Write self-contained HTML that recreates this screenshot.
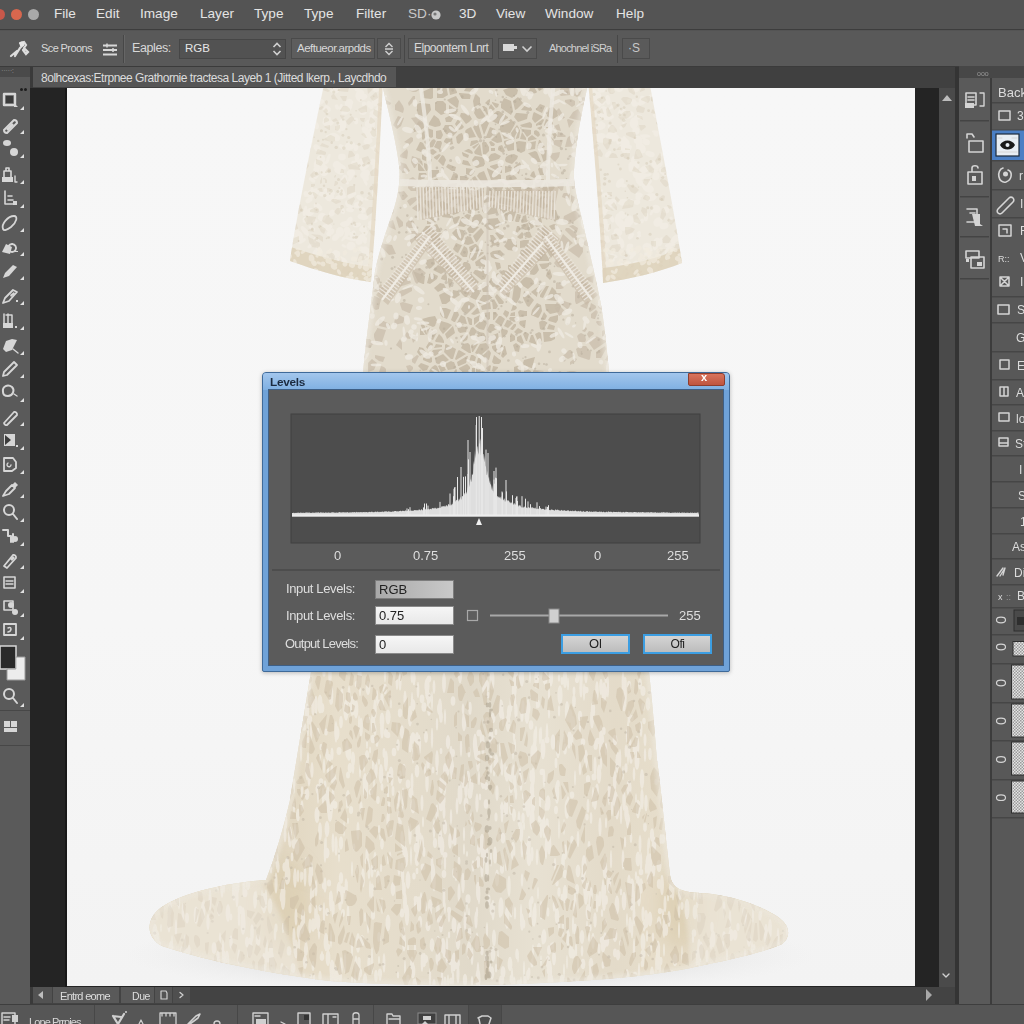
<!DOCTYPE html>
<html><head><meta charset="utf-8">
<style>
*{margin:0;padding:0;box-sizing:border-box}
html,body{width:1024px;height:1024px;overflow:hidden;background:#545454;font-family:"Liberation Sans",sans-serif}
.a{position:absolute}
.t{position:absolute;white-space:nowrap;color:#e2e2e2}
#menu{left:0;top:0;width:1024px;height:30px;background:#545454;border-bottom:1px solid #3d3d3d}
#menu .m{position:absolute;top:6px;font-size:13.6px;color:#e4e4e4}
.dot{position:absolute;top:9px;width:11px;height:11px;border-radius:50%}
#opts{left:0;top:31px;width:1024px;height:36px;background:#595959;border-bottom:1px solid #3b3b3b}
.box{position:absolute;border:1px solid #474747;background:#555}
#tool{left:0;top:67px;width:30px;height:937px;background:#5a5a5a}
#doc{left:67px;top:88px;width:848px;height:898px;background:linear-gradient(#f7f7f7,#f6f6f6 60%,#f3f3f3)}
svg{position:absolute;left:0;top:0}
#dlg{left:262px;top:372px;width:468px;height:300px;background:#6fa2d8;border:1px solid #3f6a99;border-radius:4px 4px 2px 2px;box-shadow:0 1px 4px rgba(0,0,0,.25)}
#dlgtitle{left:0;top:0;width:466px;height:17px;background:linear-gradient(#a3c6ec,#7fb0e2);border-radius:3px 3px 0 0}
#dlgc{left:5px;top:16px;width:456px;height:277px;background:#5b5b5b;border:1px solid #3e5f85}
.lbl{position:absolute;font-size:13px;color:#dedede;white-space:nowrap}
.inp{position:absolute;width:79px;height:19px;background:linear-gradient(#f6f6f6,#e8e8e8);border:1px solid #8a8a8a;font-size:13px;color:#222;padding:1px 0 0 3px;line-height:15px}
.btn{position:absolute;width:69px;height:20px;border:2px solid #3c9ee2;background:linear-gradient(#d4d4d4,#bcbcbc);font-size:13px;color:#222;text-align:center;line-height:16px}
</style></head><body>
<!-- menu bar -->
<div id="menu" class="a">
  <div class="dot" style="left:-6px;background:#c8584a"></div>
  <div class="dot" style="left:11px;background:#d8674e"></div>
  <div class="dot" style="left:28px;background:#a9a9a9"></div>
  <div class="m" style="left:54px">File</div>
  <div class="m" style="left:96px">Edit</div>
  <div class="m" style="left:140px">Image</div>
  <div class="m" style="left:200px">Layer</div>
  <div class="m" style="left:254px">Type</div>
  <div class="m" style="left:304px">Type</div>
  <div class="m" style="left:356px">Filter</div>
  <div class="m" style="left:408px;color:#c8c8c8">SD·</div><svg width="12" height="12" style="left:430px;top:9px" viewBox="0 0 12 12"><circle cx="6" cy="6" r="4.6" fill="#c8c8c8"/><circle cx="5" cy="5" r="1.6" fill="#777"/></svg>
  <div class="m" style="left:459px">3D</div>
  <div class="m" style="left:496px">View</div>
  <div class="m" style="left:545px">Window</div>
  <div class="m" style="left:616px">Help</div>
</div>
<!-- options bar -->
<div id="opts" class="a">
  <svg width="24" height="20" style="left:9px;top:8px" viewBox="0 0 24 20"><path d="M2 17 L8 12 M6 17 L11 9 L14 6 M11 4 L15 3 L17 6 L15 9 L19 13 L17 15 L14 11" stroke="#dcdcdc" stroke-width="2.2" fill="none" stroke-linecap="round"/><circle cx="13" cy="5" r="2.5" fill="#e6e6e6"/></svg>
  <div class="t" style="left:41px;top:11px;font-size:11px;color:#d8d8d8;letter-spacing:-0.6px">Sce Proons</div>
  <svg width="16" height="14" style="left:102px;top:12px" viewBox="0 0 16 14"><path d="M1 2.5H15M1 7H15M1 11.5H15" stroke="#d8d8d8" stroke-width="1.8"/><path d="M5 0.5V4.5M11 5V9" stroke="#d8d8d8" stroke-width="1.5"/></svg>
  <div class="a" style="left:123px;top:4px;width:1px;height:28px;background:#474747"></div>
  <div class="a" style="left:124px;top:4px;width:1px;height:28px;background:#666"></div>
  <div class="t" style="left:132px;top:10px;font-size:12.5px;color:#d8d8d8;letter-spacing:-0.4px">Eaples:</div>
  <div class="box" style="left:179px;top:8px;width:107px;height:20px;background:#525252;border-color:#464646"></div>
  <div class="t" style="left:185px;top:11px;font-size:11.5px;color:#e6e6e6">RGB</div>
  <svg width="10" height="14" style="left:272px;top:11px" viewBox="0 0 10 14"><path d="M1.5 5L5 1.5L8.5 5M1.5 9L5 12.5L8.5 9" stroke="#d0d0d0" stroke-width="1.6" fill="none"/></svg>
  <div class="box" style="left:291px;top:7px;width:84px;height:21px;background:#5d5d5d;border-color:#4a4a4a"></div>
  <div class="t" style="left:297px;top:11px;font-size:11.5px;color:#d8d8d8;letter-spacing:-0.5px">Aeftueor.arpdds</div>
  <div class="box" style="left:377px;top:7px;width:24px;height:21px;background:#5a5a5a;border-color:#4a4a4a"></div>
  <svg width="10" height="14" style="left:384px;top:11px" viewBox="0 0 10 14"><path d="M1.5 5L5 1.5L8.5 5M1 7H9M1.5 9L5 12.5L8.5 9" stroke="#d0d0d0" stroke-width="1.4" fill="none"/></svg>
  <div class="a" style="left:404px;top:4px;width:1px;height:28px;background:#474747"></div>
  <div class="box" style="left:408px;top:7px;width:85px;height:21px;background:#5d5d5d;border-color:#4a4a4a"></div>
  <div class="t" style="left:414px;top:10px;font-size:12px;color:#d8d8d8;letter-spacing:-0.5px">Elpoontem Lnrt</div>
  <div class="box" style="left:498px;top:7px;width:39px;height:21px;background:#5a5a5a;border-color:#4a4a4a"></div>
  <div class="a" style="left:503px;top:13px;width:11px;height:7px;background:#d8d8d8"></div>
  <div class="a" style="left:514px;top:15px;width:3px;height:3px;background:#d8d8d8"></div>
  <svg width="12" height="10" style="left:521px;top:13px" viewBox="0 0 12 10"><path d="M1.5 2.5L6 7L10.5 2.5" stroke="#d0d0d0" stroke-width="1.6" fill="none"/></svg>
  <div class="t" style="left:549px;top:11px;font-size:11px;color:#d0d0d0;letter-spacing:-0.8px">Ahochnel iSRa</div>
  <div class="a" style="left:617px;top:4px;width:1px;height:28px;background:#474747"></div>
  <div class="box" style="left:622px;top:7px;width:28px;height:21px;background:#5a5a5a;border-color:#4a4a4a"></div>
  <div class="t" style="left:628px;top:10px;font-size:12px;color:#c8c8c8">·S</div>
</div>
<!-- main bg -->
<div class="a" style="left:30px;top:67px;width:925px;height:937px;background:#3a3a3a"></div>
<div class="a" style="left:33px;top:67px;width:922px;height:21px;background:#404040"></div>
<div class="a" style="left:33px;top:67px;width:363px;height:20px;background:#565656"></div>
<div class="t" style="left:41px;top:71px;font-size:12px;color:#dcdcdc;letter-spacing:-0.48px">8olhcexas:Etrpnee Grathornie tractesa Layeb 1 (Jitted lkerp., Laycdhdo</div>
<div class="a" style="left:30px;top:88px;width:925px;height:899px;background:#242424"></div><div class="a" style="left:65px;top:88px;width:2px;height:899px;background:#181818"></div>
<div class="a" style="left:939px;top:88px;width:16px;height:899px;background:#4a4a4a"></div>
<div id="tool" class="a"></div>
<div class="a" style="left:0;top:67px;width:30px;height:10px;background:#4a4a4a"></div>
<div class="t" style="left:1px;top:66px;font-size:8px;color:#8a8a8a;letter-spacing:-0.5px">·····:</div>
<svg width="30" height="760" viewBox="0 0 30 760" style="left:0;top:0"><g transform="translate(0 100)"><path d="M4 -6H15V5H4Z" stroke="#d6d6d6" stroke-width="2.4" fill="none" stroke-linecap="round" stroke-linejoin="round"/><path d="M6 -4H13V3H6Z" fill="#3a3a3a"/><path d="M14 3 L18 7 L14 7Z" fill="#d6d6d6"/></g><path d="M20 110 L24 106 L24 110Z" fill="#e0e0e0"/><g transform="translate(0 124)"><path d="M4 6 L14 -4 A3 3 0 0 1 17 -1 L7 9 A3 3 0 0 1 4 6Z" stroke="#d6d6d6" stroke-width="2" fill="none" stroke-linecap="round" stroke-linejoin="round"/><path d="M6 5 L12 -1 L14 1 L8 7Z" fill="#d6d6d6"/></g><path d="M20 134 L24 130 L24 134Z" fill="#e0e0e0"/><g transform="translate(0 148)"><path d="M3 -5 a4 3 0 1 0 8 0 a4 3 0 1 0 -8 0Z" fill="#d6d6d6"/><path d="M10 4 a4 4 0 1 0 8 0 a4 4 0 1 0 -8 0Z" fill="#d6d6d6"/></g><path d="M20 158 L24 154 L24 158Z" fill="#e0e0e0"/><g transform="translate(0 174)"><path d="M2 3H13V8H2Z" fill="#d6d6d6"/><path d="M4 3V-3H11V3M6 -3V-6H9V-3" stroke="#d6d6d6" stroke-width="1.6" fill="none" stroke-linecap="round" stroke-linejoin="round"/><path d="M15 2V8H17" stroke="#d6d6d6" stroke-width="1.4" fill="none" stroke-linecap="round" stroke-linejoin="round"/></g><path d="M20 184 L24 180 L24 184Z" fill="#e0e0e0"/><g transform="translate(0 198)"><path d="M5 -7V6H15M8 -2H12M8 2H13" stroke="#d6d6d6" stroke-width="1.6" fill="none" stroke-linecap="round" stroke-linejoin="round"/><path d="M13 3H17V7H13Z" fill="#d6d6d6"/></g><path d="M20 208 L24 204 L24 208Z" fill="#e0e0e0"/><g transform="translate(0 222)"><path d="M3 7 C1 2 8 -6 14 -6 C18 -6 17 0 11 5 C7 8 4 9 3 7Z" stroke="#d6d6d6" stroke-width="1.8" fill="none" stroke-linecap="round" stroke-linejoin="round"/></g><path d="M20 232 L24 228 L24 232Z" fill="#e0e0e0"/><g transform="translate(0 246)"><path d="M2 6 L6 -2 L12 1 L10 8 Z" fill="#d6d6d6"/><path d="M12 -2 a4 4 0 1 0 0.1 0" stroke="#d6d6d6" stroke-width="1.8" fill="none" stroke-linecap="round" stroke-linejoin="round"/><path d="M15 5H18V6H15Z" fill="#d6d6d6"/></g><path d="M20 256 L24 252 L24 256Z" fill="#e0e0e0"/><g transform="translate(0 270)"><path d="M3 8 L5 3 L13 -5 L17 -3 L9 6Z" fill="#d6d6d6"/></g><path d="M20 280 L24 276 L24 280Z" fill="#e0e0e0"/><g transform="translate(0 295)"><path d="M3 8 L5 3 L13 -5 L17 -3 L9 6Z" stroke="#d6d6d6" stroke-width="1.8" fill="none" stroke-linecap="round" stroke-linejoin="round"/><path d="M10 0 L14 -3 L15 -1 L11 2Z" fill="#d6d6d6"/><path d="M16 5H18V7H16Z" fill="#d6d6d6"/></g><path d="M20 305 L24 301 L24 305Z" fill="#e0e0e0"/><g transform="translate(0 320)"><path d="M3 3H13V8H3Z" fill="#d6d6d6"/><path d="M4 3V-6M8 3V-6M12 3V-5M6 -5H12" stroke="#d6d6d6" stroke-width="1.5" fill="none" stroke-linecap="round" stroke-linejoin="round"/><path d="M15 6H17V8H15Z" fill="#d6d6d6"/></g><path d="M20 330 L24 326 L24 330Z" fill="#e0e0e0"/><g transform="translate(0 345)"><path d="M3 4 L6 -4 L12 -6 L17 -5 L12 5 L6 7Z" fill="#d6d6d6"/><path d="M13 4 L18 8" stroke="#d6d6d6" stroke-width="1.4" fill="none" stroke-linecap="round" stroke-linejoin="round"/></g><path d="M20 355 L24 351 L24 355Z" fill="#e0e0e0"/><g transform="translate(0 368)"><path d="M3 8 L4 4 L14 -6 L17 -3 L7 7Z" stroke="#d6d6d6" stroke-width="1.8" fill="none" stroke-linecap="round" stroke-linejoin="round"/></g><path d="M20 378 L24 374 L24 378Z" fill="#e0e0e0"/><g transform="translate(0 392)"><path d="M3 0 C2 -6 8 -8 12 -5 C15 -2 13 4 8 4 C5 4 3 3 3 0Z" stroke="#d6d6d6" stroke-width="2" fill="none" stroke-linecap="round" stroke-linejoin="round"/><path d="M14 2 L17 4" stroke="#d6d6d6" stroke-width="1.4" fill="none" stroke-linecap="round" stroke-linejoin="round"/></g><path d="M20 402 L24 398 L24 402Z" fill="#e0e0e0"/><g transform="translate(0 416)"><path d="M4 7 L14 -4 A2.5 2.5 0 0 1 17 -1 L7 9 A2.5 2.5 0 0 1 4 7Z" stroke="#d6d6d6" stroke-width="1.8" fill="none" stroke-linecap="round" stroke-linejoin="round"/></g><path d="M20 426 L24 422 L24 426Z" fill="#e0e0e0"/><g transform="translate(0 440)"><path d="M4 -6H15V6H4Z" fill="#d6d6d6"/><path d="M5 -5 L11 0 L5 5Z" fill="#3c3c3c"/><path d="M16 5H18V7H16Z" fill="#d6d6d6"/></g><path d="M20 450 L24 446 L24 450Z" fill="#e0e0e0"/><g transform="translate(0 464)"><path d="M4 -6H13 L16 -2 V4 L12 7H4Z" stroke="#d6d6d6" stroke-width="1.8" fill="none" stroke-linecap="round" stroke-linejoin="round"/><path d="M8 -1 a2 2 0 1 0 3 2" stroke="#d6d6d6" stroke-width="1.4" fill="none" stroke-linecap="round" stroke-linejoin="round"/></g><path d="M20 474 L24 470 L24 474Z" fill="#e0e0e0"/><g transform="translate(0 488)"><path d="M3 8 L6 3 L12 -3 L15 0 L9 6Z" stroke="#d6d6d6" stroke-width="1.8" fill="none" stroke-linecap="round" stroke-linejoin="round"/><path d="M12 -3 L15 -6 L18 -3 L15 0Z" fill="#d6d6d6"/></g><path d="M20 498 L24 494 L24 498Z" fill="#e0e0e0"/><g transform="translate(0 512)"><path d="M4 -2 a5 5 0 1 0 10 0 a5 5 0 1 0 -10 0M13 2 L17 7" stroke="#d6d6d6" stroke-width="2" fill="none" stroke-linecap="round" stroke-linejoin="round"/></g><path d="M20 522 L24 518 L24 522Z" fill="#e0e0e0"/><g transform="translate(0 536)"><path d="M3 -6H8V0H11V6M13 -2V6" stroke="#d6d6d6" stroke-width="2" fill="none" stroke-linecap="round" stroke-linejoin="round"/><path d="M12 3 a3 3 0 1 0 6 0 a3 3 0 1 0 -6 0Z" fill="#d6d6d6"/></g><path d="M20 546 L24 542 L24 546Z" fill="#e0e0e0"/><g transform="translate(0 559)"><path d="M4 7 L13 -4 A2.5 2.5 0 0 1 16 -1 L7 9Z" stroke="#d6d6d6" stroke-width="1.8" fill="none" stroke-linecap="round" stroke-linejoin="round"/><path d="M10 0 L13 -3 L15 -1 L12 2Z" fill="#d6d6d6"/></g><path d="M20 569 L24 565 L24 569Z" fill="#e0e0e0"/><g transform="translate(0 583)"><path d="M4 -6H15V5H4Z" stroke="#d6d6d6" stroke-width="1.6" fill="none" stroke-linecap="round" stroke-linejoin="round"/><path d="M6 -2H13M6 1H13" stroke="#d6d6d6" stroke-width="1.4" fill="none" stroke-linecap="round" stroke-linejoin="round"/></g><path d="M20 593 L24 589 L24 593Z" fill="#e0e0e0"/><g transform="translate(0 607)"><path d="M4 -6H13V3H4Z" stroke="#d6d6d6" stroke-width="1.6" fill="none" stroke-linecap="round" stroke-linejoin="round"/><path d="M8 -2 a3 3 0 1 0 6 0 a3 3 0 1 0 -6 0Z" fill="#d6d6d6"/><path d="M12 5 a3 3 0 1 0 6 0 a3 3 0 1 0 -6 0Z" fill="#d6d6d6"/></g><path d="M20 617 L24 613 L24 617Z" fill="#e0e0e0"/><g transform="translate(0 630)"><path d="M4 -6H16V5H4Z" stroke="#d6d6d6" stroke-width="1.8" fill="none" stroke-linecap="round" stroke-linejoin="round"/><path d="M8 -2 C12 -4 12 1 8 2" stroke="#d6d6d6" stroke-width="1.5" fill="none" stroke-linecap="round" stroke-linejoin="round"/></g><path d="M20 640 L24 636 L24 640Z" fill="#e0e0e0"/><g transform="translate(0 697)"><path d="M4 -3 a5 5 0 1 0 10 0 a5 5 0 1 0 -10 0M13 1 L17 6" stroke="#d6d6d6" stroke-width="2" fill="none" stroke-linecap="round" stroke-linejoin="round"/></g><path d="M20 707 L24 703 L24 707Z" fill="#e0e0e0"/><g transform="translate(0 727)"><path d="M4 -6H10V0H4Z" fill="#d6d6d6"/><path d="M11 -6H17V0H11Z" fill="#d6d6d6"/><path d="M4 1H17V5H4Z" fill="#d6d6d6"/><path d="M6 -4H8" stroke="#d6d6d6" stroke-width="1" fill="none" stroke-linecap="round" stroke-linejoin="round"/></g><rect x="0" y="646" width="16" height="23" fill="#2a2a2a" stroke="#d8d8d8" stroke-width="1.5"/><path d="M7 669 H15.8 V657 H25 V680 H7Z" fill="#ececec" stroke="#9a9a9a" stroke-width="1"/><rect x="0" y="710" width="30" height="1" fill="#474747"/><rect x="0" y="745" width="30" height="1" fill="#474747"/><path d="M20 89.5 a1.5 1.5 0 1 0 3 0 a1.5 1.5 0 1 0 -3 0M24 89.5 a1.5 1.5 0 1 0 3 0 a1.5 1.5 0 1 0 -3 0" fill="#1e1e1e"/></svg>
<div id="doc" class="a"></div>
<!-- dress -->
<svg width="1024" height="1024" viewBox="0 0 1024 1024"><defs><clipPath id="docclip"><rect x="67" y="88" width="848" height="898"/></clipPath><clipPath id="bodyclip"><path d="M381 80 C388 110 396 140 399 165 C401 180 398 200 390 220 C384 238 378 255 375 272 C371 305 366 340 363 372 L330 560 L311 672 C303 720 295 770 290 800 C282 835 272 865 266 880 C235 882 190 890 165 905 C146 916 144 936 162 946 C195 957 255 972 330 981 C400 986 470 986 520 984 C590 981 640 977 680 970 C730 960 765 952 782 944 C792 936 790 924 775 915 C750 900 720 894 700 893 C682 892 672 889 670 875 C664 820 660 780 657 760 C654 720 651 690 649 672 L625 500 L609 372 C606 340 603 312 599 295 C595 275 589 250 581 215 C576 195 573 180 574 170 C576 140 582 110 589 80 Z"/></clipPath><clipPath id="sleeveclip"><path d="M325 80 L383 80 C380 150 376 220 371 282 C345 279 315 270 290 261 C296 220 308 160 325 80 Z"/><path d="M588 80 L649 80 C662 150 674 210 682 263 C660 272 630 279 603 283 C600 220 594 150 588 80 Z"/></clipPath><linearGradient id="folds" x1="0" x2="1" y1="0" y2="0"><stop offset="0" stop-color="#ddd0b4"/><stop offset="0.12" stop-color="#e6dcc6"/><stop offset="0.2" stop-color="#dfd3bb"/><stop offset="0.3" stop-color="#e8dfcc"/><stop offset="0.42" stop-color="#e4dccb"/><stop offset="0.5" stop-color="#dfd8c9"/><stop offset="0.6" stop-color="#e8e2d4"/><stop offset="0.72" stop-color="#e3dac8"/><stop offset="0.82" stop-color="#e8dfcb"/><stop offset="0.92" stop-color="#e0d4bc"/><stop offset="1" stop-color="#dacdb0"/></linearGradient><filter id="blur2" x="-10%" y="-10%" width="120%" height="120%"><feGaussianBlur stdDeviation="2"/></filter><filter id="blur8" x="-50%" y="-50%" width="200%" height="200%"><feGaussianBlur stdDeviation="9"/></filter><radialGradient id="floor" cx="0.5" cy="0.5" r="0.5"><stop offset="0.6" stop-color="#d8d8d8" stop-opacity="0.5"/><stop offset="1" stop-color="#e8e8e8" stop-opacity="0"/></radialGradient></defs><g clip-path="url(#docclip)"><ellipse cx="470" cy="955" rx="345" ry="40" fill="url(#floor)"/><path d="M325 80 L383 80 C380 150 376 220 371 282 C345 279 315 270 290 261 C296 220 308 160 325 80 Z" fill="#ede8dd"/><path d="M588 80 L649 80 C662 150 674 210 682 263 C660 272 630 279 603 283 C600 220 594 150 588 80 Z" fill="#ede8dd"/><g clip-path="url(#sleeveclip)"><g fill="#f4f0e8" opacity="0.5"><ellipse cx="330" cy="197" rx="4.3" ry="3.9" transform="rotate(130 330 197)"/><ellipse cx="371" cy="123" rx="3.9" ry="3.9" transform="rotate(157 371 123)"/><ellipse cx="364" cy="104" rx="2.4" ry="2.4" transform="rotate(177 364 104)"/><ellipse cx="348" cy="204" rx="2.7" ry="3.8" transform="rotate(157 348 204)"/><ellipse cx="350" cy="210" rx="4" ry="2.3" transform="rotate(9 350 210)"/><ellipse cx="304" cy="133" rx="1.6" ry="3.9" transform="rotate(112 304 133)"/><ellipse cx="344" cy="124" rx="2.2" ry="3.2" transform="rotate(1 344 124)"/><ellipse cx="351" cy="176" rx="2.3" ry="6" transform="rotate(21 351 176)"/><ellipse cx="356" cy="148" rx="2.2" ry="3.2" transform="rotate(17 356 148)"/><ellipse cx="341" cy="107" rx="1.8" ry="3.2" transform="rotate(17 341 107)"/><ellipse cx="381" cy="254" rx="1.5" ry="2.8" transform="rotate(13 381 254)"/><ellipse cx="332" cy="281" rx="2.7" ry="2.3" transform="rotate(161 332 281)"/><ellipse cx="305" cy="220" rx="2.5" ry="3.2" transform="rotate(3 305 220)"/><ellipse cx="381" cy="237" rx="1.9" ry="3" transform="rotate(25 381 237)"/><ellipse cx="286" cy="178" rx="3" ry="4.7" transform="rotate(48 286 178)"/><ellipse cx="330" cy="123" rx="3.7" ry="2.5" transform="rotate(164 330 123)"/><ellipse cx="323" cy="164" rx="4.5" ry="2" transform="rotate(151 323 164)"/><ellipse cx="315" cy="262" rx="2.1" ry="3.6" transform="rotate(154 315 262)"/><ellipse cx="349" cy="105" rx="4.5" ry="2.9" transform="rotate(66 349 105)"/><ellipse cx="286" cy="207" rx="4" ry="3.5" transform="rotate(19 286 207)"/><ellipse cx="294" cy="202" rx="2.2" ry="4.4" transform="rotate(95 294 202)"/><ellipse cx="347" cy="110" rx="3.3" ry="5.3" transform="rotate(34 347 110)"/><ellipse cx="372" cy="122" rx="2" ry="5.6" transform="rotate(156 372 122)"/><ellipse cx="310" cy="123" rx="3.7" ry="5.8" transform="rotate(50 310 123)"/><ellipse cx="354" cy="163" rx="2.9" ry="2.3" transform="rotate(12 354 163)"/><ellipse cx="295" cy="93" rx="4.4" ry="3" transform="rotate(180 295 93)"/><ellipse cx="324" cy="169" rx="4.2" ry="4" transform="rotate(133 324 169)"/><ellipse cx="303" cy="229" rx="1.7" ry="2.9" transform="rotate(143 303 229)"/><ellipse cx="350" cy="208" rx="1.7" ry="2.8" transform="rotate(52 350 208)"/><ellipse cx="360" cy="99" rx="2.7" ry="3" transform="rotate(11 360 99)"/><ellipse cx="303" cy="159" rx="3.2" ry="2.5" transform="rotate(92 303 159)"/><ellipse cx="299" cy="175" rx="2.5" ry="4.9" transform="rotate(133 299 175)"/><ellipse cx="343" cy="113" rx="1.6" ry="2.1" transform="rotate(91 343 113)"/><ellipse cx="355" cy="278" rx="1.6" ry="4.5" transform="rotate(123 355 278)"/><ellipse cx="292" cy="147" rx="1.9" ry="2.3" transform="rotate(115 292 147)"/><ellipse cx="340" cy="232" rx="4.2" ry="4.9" transform="rotate(180 340 232)"/><ellipse cx="298" cy="278" rx="2.5" ry="2.3" transform="rotate(121 298 278)"/><ellipse cx="375" cy="259" rx="2.8" ry="5.2" transform="rotate(127 375 259)"/><ellipse cx="342" cy="210" rx="2.6" ry="4.3" transform="rotate(155 342 210)"/><ellipse cx="292" cy="103" rx="1.8" ry="3" transform="rotate(106 292 103)"/><ellipse cx="358" cy="163" rx="3.7" ry="4.3" transform="rotate(112 358 163)"/><ellipse cx="331" cy="193" rx="3.1" ry="4.1" transform="rotate(79 331 193)"/><ellipse cx="345" cy="181" rx="2.2" ry="4.8" transform="rotate(127 345 181)"/><ellipse cx="363" cy="217" rx="3" ry="5.6" transform="rotate(94 363 217)"/><ellipse cx="315" cy="221" rx="2.1" ry="2.7" transform="rotate(87 315 221)"/><ellipse cx="351" cy="173" rx="4.2" ry="3.3" transform="rotate(170 351 173)"/><ellipse cx="310" cy="212" rx="3.9" ry="5" transform="rotate(51 310 212)"/><ellipse cx="373" cy="162" rx="3.2" ry="3.3" transform="rotate(34 373 162)"/><ellipse cx="298" cy="155" rx="4.2" ry="2.2" transform="rotate(16 298 155)"/><ellipse cx="380" cy="140" rx="2" ry="3.8" transform="rotate(70 380 140)"/><ellipse cx="378" cy="251" rx="2.6" ry="4.1" transform="rotate(172 378 251)"/><ellipse cx="317" cy="253" rx="4.4" ry="3.8" transform="rotate(19 317 253)"/><ellipse cx="368" cy="141" rx="3.3" ry="4.7" transform="rotate(71 368 141)"/><ellipse cx="342" cy="147" rx="3.9" ry="2.1" transform="rotate(34 342 147)"/><ellipse cx="326" cy="123" rx="3.8" ry="3.1" transform="rotate(36 326 123)"/><ellipse cx="365" cy="282" rx="1.8" ry="2.4" transform="rotate(137 365 282)"/><ellipse cx="351" cy="246" rx="4.4" ry="4.7" transform="rotate(51 351 246)"/><ellipse cx="367" cy="136" rx="3.6" ry="5" transform="rotate(136 367 136)"/><ellipse cx="356" cy="121" rx="2.3" ry="3.4" transform="rotate(178 356 121)"/><ellipse cx="380" cy="185" rx="4.5" ry="2.6" transform="rotate(179 380 185)"/><ellipse cx="376" cy="102" rx="4.3" ry="4.9" transform="rotate(33 376 102)"/><ellipse cx="330" cy="124" rx="4.2" ry="2" transform="rotate(140 330 124)"/><ellipse cx="342" cy="261" rx="3.9" ry="5.8" transform="rotate(118 342 261)"/><ellipse cx="318" cy="281" rx="1.8" ry="5.5" transform="rotate(164 318 281)"/><ellipse cx="377" cy="110" rx="2.2" ry="3.6" transform="rotate(22 377 110)"/><ellipse cx="383" cy="192" rx="3.9" ry="3.3" transform="rotate(4 383 192)"/><ellipse cx="320" cy="102" rx="2.8" ry="4.2" transform="rotate(70 320 102)"/><ellipse cx="334" cy="91" rx="3.9" ry="2.3" transform="rotate(8 334 91)"/><ellipse cx="302" cy="152" rx="3.9" ry="2.6" transform="rotate(38 302 152)"/><ellipse cx="385" cy="265" rx="3.1" ry="4.7" transform="rotate(112 385 265)"/><ellipse cx="380" cy="184" rx="4.3" ry="2.3" transform="rotate(56 380 184)"/><ellipse cx="329" cy="197" rx="4" ry="4.2" transform="rotate(42 329 197)"/><ellipse cx="337" cy="254" rx="3.2" ry="3.2" transform="rotate(97 337 254)"/><ellipse cx="380" cy="259" rx="3.3" ry="3.2" transform="rotate(36 380 259)"/><ellipse cx="382" cy="190" rx="3.2" ry="2.8" transform="rotate(137 382 190)"/><ellipse cx="296" cy="86" rx="2.6" ry="4.2" transform="rotate(11 296 86)"/><ellipse cx="337" cy="165" rx="3.9" ry="4.3" transform="rotate(125 337 165)"/><ellipse cx="294" cy="118" rx="4.3" ry="3.8" transform="rotate(103 294 118)"/><ellipse cx="312" cy="180" rx="1.9" ry="3.7" transform="rotate(121 312 180)"/><ellipse cx="337" cy="107" rx="2.8" ry="2.1" transform="rotate(66 337 107)"/><ellipse cx="298" cy="241" rx="1.6" ry="2.8" transform="rotate(58 298 241)"/><ellipse cx="286" cy="142" rx="3.7" ry="3" transform="rotate(127 286 142)"/><ellipse cx="295" cy="231" rx="1.9" ry="4" transform="rotate(64 295 231)"/><ellipse cx="357" cy="225" rx="4.1" ry="2.1" transform="rotate(162 357 225)"/><ellipse cx="326" cy="191" rx="2" ry="2.8" transform="rotate(161 326 191)"/><ellipse cx="338" cy="129" rx="2.1" ry="4.2" transform="rotate(150 338 129)"/><ellipse cx="371" cy="132" rx="3.7" ry="5.2" transform="rotate(46 371 132)"/><ellipse cx="317" cy="148" rx="4.3" ry="2.9" transform="rotate(49 317 148)"/><ellipse cx="374" cy="112" rx="2.2" ry="4.9" transform="rotate(66 374 112)"/><ellipse cx="324" cy="172" rx="4.3" ry="4.2" transform="rotate(180 324 172)"/><ellipse cx="298" cy="166" rx="3.6" ry="2.1" transform="rotate(51 298 166)"/><ellipse cx="342" cy="157" rx="4" ry="3.4" transform="rotate(180 342 157)"/><ellipse cx="336" cy="237" rx="3" ry="4.7" transform="rotate(48 336 237)"/><ellipse cx="365" cy="181" rx="1.6" ry="5" transform="rotate(157 365 181)"/><ellipse cx="336" cy="199" rx="1.9" ry="2.7" transform="rotate(52 336 199)"/><ellipse cx="302" cy="117" rx="2.3" ry="4.7" transform="rotate(148 302 117)"/><ellipse cx="291" cy="275" rx="2.9" ry="5.1" transform="rotate(83 291 275)"/><ellipse cx="324" cy="170" rx="2.6" ry="2.8" transform="rotate(95 324 170)"/><ellipse cx="286" cy="225" rx="4" ry="2.7" transform="rotate(116 286 225)"/><ellipse cx="321" cy="159" rx="4.3" ry="4.4" transform="rotate(24 321 159)"/><ellipse cx="336" cy="88" rx="4.2" ry="5.2" transform="rotate(180 336 88)"/><ellipse cx="373" cy="267" rx="4.3" ry="4.3" transform="rotate(48 373 267)"/><ellipse cx="335" cy="282" rx="3.9" ry="3" transform="rotate(29 335 282)"/><ellipse cx="359" cy="241" rx="3.9" ry="3.6" transform="rotate(84 359 241)"/><ellipse cx="373" cy="224" rx="3.8" ry="5.1" transform="rotate(103 373 224)"/><ellipse cx="306" cy="122" rx="3.9" ry="3.2" transform="rotate(25 306 122)"/><ellipse cx="286" cy="156" rx="3.4" ry="4.5" transform="rotate(59 286 156)"/><ellipse cx="312" cy="277" rx="2.4" ry="2.9" transform="rotate(103 312 277)"/><ellipse cx="342" cy="192" rx="2.7" ry="6" transform="rotate(164 342 192)"/><ellipse cx="306" cy="109" rx="2.7" ry="4.3" transform="rotate(29 306 109)"/><ellipse cx="347" cy="233" rx="2.3" ry="3.6" transform="rotate(12 347 233)"/><ellipse cx="361" cy="215" rx="1.5" ry="3" transform="rotate(70 361 215)"/><ellipse cx="376" cy="195" rx="3" ry="5.9" transform="rotate(145 376 195)"/><ellipse cx="370" cy="105" rx="2.8" ry="4.6" transform="rotate(140 370 105)"/><ellipse cx="345" cy="237" rx="1.6" ry="5.7" transform="rotate(40 345 237)"/><ellipse cx="324" cy="279" rx="4.1" ry="4.2" transform="rotate(152 324 279)"/><ellipse cx="291" cy="274" rx="2.8" ry="4.1" transform="rotate(153 291 274)"/><ellipse cx="316" cy="191" rx="2.9" ry="3.1" transform="rotate(72 316 191)"/><ellipse cx="351" cy="235" rx="1.6" ry="5.1" transform="rotate(149 351 235)"/><ellipse cx="289" cy="116" rx="3.8" ry="3.6" transform="rotate(80 289 116)"/><ellipse cx="360" cy="95" rx="4.5" ry="5.8" transform="rotate(18 360 95)"/><ellipse cx="365" cy="130" rx="3.7" ry="3" transform="rotate(62 365 130)"/><ellipse cx="290" cy="105" rx="3.9" ry="5.6" transform="rotate(36 290 105)"/><ellipse cx="383" cy="248" rx="3.3" ry="2.5" transform="rotate(159 383 248)"/><ellipse cx="327" cy="109" rx="4.1" ry="3.4" transform="rotate(39 327 109)"/><ellipse cx="297" cy="174" rx="3.5" ry="3.8" transform="rotate(67 297 174)"/><ellipse cx="349" cy="221" rx="2.6" ry="5" transform="rotate(35 349 221)"/><ellipse cx="380" cy="232" rx="2.2" ry="2.5" transform="rotate(79 380 232)"/><ellipse cx="363" cy="210" rx="2.6" ry="3.1" transform="rotate(175 363 210)"/><ellipse cx="358" cy="225" rx="2.1" ry="3.1" transform="rotate(61 358 225)"/><ellipse cx="304" cy="135" rx="4.4" ry="5.7" transform="rotate(174 304 135)"/><ellipse cx="289" cy="97" rx="2.3" ry="3.7" transform="rotate(159 289 97)"/><ellipse cx="289" cy="130" rx="2.3" ry="5" transform="rotate(173 289 130)"/><ellipse cx="301" cy="132" rx="4.4" ry="3.9" transform="rotate(90 301 132)"/><ellipse cx="306" cy="154" rx="3.7" ry="5.4" transform="rotate(19 306 154)"/><ellipse cx="365" cy="174" rx="4" ry="5.4" transform="rotate(54 365 174)"/><ellipse cx="329" cy="234" rx="2.7" ry="2.6" transform="rotate(39 329 234)"/><ellipse cx="350" cy="283" rx="2.5" ry="4.2" transform="rotate(47 350 283)"/><ellipse cx="328" cy="159" rx="1.8" ry="5.5" transform="rotate(20 328 159)"/><ellipse cx="339" cy="171" rx="3.2" ry="5.3" transform="rotate(118 339 171)"/><ellipse cx="315" cy="240" rx="1.7" ry="2.9" transform="rotate(169 315 240)"/><ellipse cx="345" cy="224" rx="3" ry="5.1" transform="rotate(83 345 224)"/><ellipse cx="313" cy="114" rx="2.6" ry="4.9" transform="rotate(93 313 114)"/><ellipse cx="376" cy="149" rx="2.8" ry="4.4" transform="rotate(175 376 149)"/><ellipse cx="376" cy="173" rx="3.9" ry="3.2" transform="rotate(81 376 173)"/><ellipse cx="307" cy="279" rx="3.7" ry="4.1" transform="rotate(21 307 279)"/><ellipse cx="321" cy="158" rx="2.6" ry="3.6" transform="rotate(99 321 158)"/><ellipse cx="365" cy="233" rx="2.6" ry="3.6" transform="rotate(39 365 233)"/><ellipse cx="369" cy="198" rx="2" ry="5" transform="rotate(72 369 198)"/><ellipse cx="366" cy="129" rx="1.7" ry="2.6" transform="rotate(75 366 129)"/><ellipse cx="382" cy="215" rx="3.9" ry="2.3" transform="rotate(139 382 215)"/><ellipse cx="316" cy="194" rx="2.5" ry="3.1" transform="rotate(26 316 194)"/><ellipse cx="375" cy="102" rx="3.4" ry="2.6" transform="rotate(166 375 102)"/><ellipse cx="327" cy="227" rx="3" ry="5.6" transform="rotate(86 327 227)"/><ellipse cx="361" cy="164" rx="2.5" ry="5.9" transform="rotate(172 361 164)"/><ellipse cx="299" cy="183" rx="3.9" ry="2.3" transform="rotate(158 299 183)"/><ellipse cx="376" cy="167" rx="4" ry="4.7"/><ellipse cx="366" cy="252" rx="4.2" ry="5.8" transform="rotate(163 366 252)"/><ellipse cx="287" cy="157" rx="1.5" ry="2.4" transform="rotate(107 287 157)"/><ellipse cx="377" cy="134" rx="2" ry="4.5" transform="rotate(175 377 134)"/><ellipse cx="302" cy="126" rx="2.8" ry="3.2" transform="rotate(15 302 126)"/><ellipse cx="332" cy="231" rx="2.4" ry="2.6" transform="rotate(45 332 231)"/><ellipse cx="376" cy="236" rx="1.6" ry="3.9" transform="rotate(9 376 236)"/><ellipse cx="316" cy="125" rx="2.6" ry="4.4" transform="rotate(153 316 125)"/><ellipse cx="357" cy="204" rx="2.2" ry="2.7" transform="rotate(71 357 204)"/><ellipse cx="325" cy="267" rx="4.3" ry="4.5" transform="rotate(140 325 267)"/><ellipse cx="333" cy="137" rx="4.2" ry="5.7" transform="rotate(87 333 137)"/><ellipse cx="351" cy="239" rx="1.8" ry="5.5" transform="rotate(102 351 239)"/><ellipse cx="290" cy="275" rx="3.9" ry="3.5" transform="rotate(135 290 275)"/><ellipse cx="364" cy="240" rx="3.9" ry="2.2" transform="rotate(60 364 240)"/><ellipse cx="374" cy="260" rx="4.2" ry="3.8" transform="rotate(63 374 260)"/><ellipse cx="356" cy="206" rx="2" ry="2.6" transform="rotate(82 356 206)"/><ellipse cx="299" cy="267" rx="3.9" ry="2.5" transform="rotate(158 299 267)"/><ellipse cx="312" cy="192" rx="2" ry="5.1"/><ellipse cx="305" cy="268" rx="1.9" ry="2.5" transform="rotate(90 305 268)"/><ellipse cx="312" cy="228" rx="1.8" ry="3.9" transform="rotate(119 312 228)"/><ellipse cx="293" cy="235" rx="3.1" ry="4" transform="rotate(4 293 235)"/><ellipse cx="364" cy="168" rx="4.3" ry="2.4" transform="rotate(112 364 168)"/><ellipse cx="306" cy="194" rx="3.1" ry="2.6" transform="rotate(79 306 194)"/><ellipse cx="317" cy="166" rx="3.2" ry="6" transform="rotate(170 317 166)"/><ellipse cx="357" cy="157" rx="3.6" ry="2.4" transform="rotate(100 357 157)"/><ellipse cx="353" cy="234" rx="3.9" ry="2.5" transform="rotate(113 353 234)"/><ellipse cx="286" cy="160" rx="3.6" ry="2.9" transform="rotate(144 286 160)"/><ellipse cx="296" cy="239" rx="4.1" ry="5.4" transform="rotate(52 296 239)"/><ellipse cx="375" cy="115" rx="3.4" ry="5.7" transform="rotate(76 375 115)"/><ellipse cx="380" cy="236" rx="3.2" ry="2.3" transform="rotate(48 380 236)"/><ellipse cx="305" cy="231" rx="2.5" ry="5.8" transform="rotate(144 305 231)"/><ellipse cx="332" cy="213" rx="2.8" ry="3.5" transform="rotate(26 332 213)"/><ellipse cx="299" cy="104" rx="3.5" ry="4.8" transform="rotate(46 299 104)"/><ellipse cx="304" cy="92" rx="2.9" ry="4.8" transform="rotate(25 304 92)"/><ellipse cx="308" cy="116" rx="1.9" ry="3.6" transform="rotate(18 308 116)"/><ellipse cx="319" cy="250" rx="4.3" ry="2.6" transform="rotate(52 319 250)"/><ellipse cx="362" cy="249" rx="2.7" ry="3.3" transform="rotate(105 362 249)"/><ellipse cx="347" cy="230" rx="3.3" ry="3.3" transform="rotate(62 347 230)"/><ellipse cx="351" cy="207" rx="1.6" ry="3.3" transform="rotate(87 351 207)"/><ellipse cx="316" cy="173" rx="3.2" ry="2.8" transform="rotate(85 316 173)"/><ellipse cx="364" cy="250" rx="3.3" ry="2.6" transform="rotate(137 364 250)"/><ellipse cx="375" cy="195" rx="2.6" ry="4" transform="rotate(36 375 195)"/><ellipse cx="342" cy="125" rx="4.3" ry="6" transform="rotate(180 342 125)"/><ellipse cx="369" cy="124" rx="4.3" ry="4.5" transform="rotate(50 369 124)"/><ellipse cx="363" cy="112" rx="2.9" ry="3.7" transform="rotate(85 363 112)"/><ellipse cx="318" cy="271" rx="2.6" ry="3.9" transform="rotate(31 318 271)"/><ellipse cx="330" cy="231" rx="2.2" ry="4.3" transform="rotate(139 330 231)"/><ellipse cx="341" cy="197" rx="2.3" ry="5.6" transform="rotate(85 341 197)"/><ellipse cx="345" cy="110" rx="4" ry="3.2" transform="rotate(93 345 110)"/><ellipse cx="309" cy="200" rx="4" ry="2.7" transform="rotate(140 309 200)"/><ellipse cx="366" cy="176" rx="2.7" ry="5.1" transform="rotate(168 366 176)"/><ellipse cx="299" cy="236" rx="4" ry="5.6" transform="rotate(157 299 236)"/><ellipse cx="344" cy="246" rx="1.5" ry="2.8" transform="rotate(119 344 246)"/><ellipse cx="288" cy="191" rx="1.9" ry="3.6" transform="rotate(86 288 191)"/><ellipse cx="337" cy="138" rx="3.2" ry="3.3" transform="rotate(164 337 138)"/><ellipse cx="363" cy="229" rx="3.9" ry="3.6" transform="rotate(127 363 229)"/><ellipse cx="345" cy="179" rx="2.7" ry="4.5" transform="rotate(176 345 179)"/><ellipse cx="341" cy="166" rx="2.3" ry="5.6" transform="rotate(118 341 166)"/><ellipse cx="369" cy="256" rx="2.7" ry="3.7" transform="rotate(144 369 256)"/><ellipse cx="296" cy="273" rx="2.5" ry="4.1" transform="rotate(107 296 273)"/><ellipse cx="375" cy="149" rx="1.7" ry="4.9" transform="rotate(110 375 149)"/><ellipse cx="358" cy="205" rx="3.8" ry="3.2" transform="rotate(151 358 205)"/><ellipse cx="373" cy="134" rx="4" ry="3" transform="rotate(101 373 134)"/><ellipse cx="382" cy="180" rx="1.8" ry="5.6" transform="rotate(139 382 180)"/><ellipse cx="316" cy="164" rx="2.2" ry="2.3" transform="rotate(170 316 164)"/><ellipse cx="322" cy="194" rx="3.2" ry="2.7" transform="rotate(166 322 194)"/><ellipse cx="360" cy="198" rx="4.2" ry="2.4" transform="rotate(33 360 198)"/><ellipse cx="297" cy="193" rx="4.4" ry="2" transform="rotate(62 297 193)"/><ellipse cx="358" cy="90" rx="2" ry="3.8" transform="rotate(115 358 90)"/><ellipse cx="367" cy="164" rx="2.6" ry="4.3" transform="rotate(11 367 164)"/><ellipse cx="316" cy="176" rx="2.4" ry="3.3" transform="rotate(36 316 176)"/><ellipse cx="378" cy="280" rx="2.9" ry="2.8" transform="rotate(75 378 280)"/><ellipse cx="371" cy="224" rx="1.7" ry="3.3" transform="rotate(90 371 224)"/><ellipse cx="375" cy="88" rx="3.4" ry="4.8" transform="rotate(143 375 88)"/><ellipse cx="305" cy="211" rx="2.1" ry="5.5" transform="rotate(12 305 211)"/><ellipse cx="350" cy="146" rx="4" ry="5.8" transform="rotate(70 350 146)"/><ellipse cx="372" cy="228" rx="1.9" ry="4.8" transform="rotate(113 372 228)"/><ellipse cx="327" cy="119" rx="4.1" ry="2.5" transform="rotate(176 327 119)"/><ellipse cx="305" cy="121" rx="2.2" ry="4.7" transform="rotate(69 305 121)"/><ellipse cx="322" cy="217" rx="4.2" ry="4.4" transform="rotate(58 322 217)"/><ellipse cx="383" cy="264" rx="2" ry="2.9" transform="rotate(33 383 264)"/><ellipse cx="349" cy="103" rx="4.4" ry="3.8" transform="rotate(135 349 103)"/><ellipse cx="292" cy="266" rx="1.5" ry="4.3" transform="rotate(137 292 266)"/><ellipse cx="310" cy="246" rx="1.8" ry="3.1" transform="rotate(48 310 246)"/><ellipse cx="310" cy="141" rx="3.1" ry="2.7" transform="rotate(38 310 141)"/><ellipse cx="384" cy="92" rx="2.9" ry="5" transform="rotate(98 384 92)"/><ellipse cx="285" cy="263" rx="1.7" ry="2.3" transform="rotate(165 285 263)"/><ellipse cx="376" cy="149" rx="3" ry="2.1" transform="rotate(74 376 149)"/><ellipse cx="336" cy="254" rx="3.6" ry="4.1" transform="rotate(136 336 254)"/><ellipse cx="302" cy="241" rx="2" ry="4.4" transform="rotate(60 302 241)"/><ellipse cx="352" cy="195" rx="2.3" ry="4.9" transform="rotate(60 352 195)"/><ellipse cx="311" cy="194" rx="4.1" ry="4.4" transform="rotate(66 311 194)"/><ellipse cx="289" cy="204" rx="3.6" ry="4.3" transform="rotate(46 289 204)"/><ellipse cx="318" cy="207" rx="3.3" ry="5.2" transform="rotate(128 318 207)"/><ellipse cx="329" cy="138" rx="3.9" ry="2.3" transform="rotate(45 329 138)"/><ellipse cx="342" cy="194" rx="3.9" ry="3" transform="rotate(37 342 194)"/><ellipse cx="290" cy="170" rx="3.6" ry="5.3" transform="rotate(134 290 170)"/><ellipse cx="363" cy="238" rx="3" ry="4.6" transform="rotate(130 363 238)"/><ellipse cx="302" cy="136" rx="2" ry="4.8" transform="rotate(152 302 136)"/><ellipse cx="364" cy="97" rx="2.7" ry="3.5" transform="rotate(55 364 97)"/><ellipse cx="355" cy="276" rx="1.9" ry="5" transform="rotate(153 355 276)"/><ellipse cx="384" cy="114" rx="2.9" ry="5" transform="rotate(10 384 114)"/><ellipse cx="285" cy="167" rx="3.1" ry="2.4" transform="rotate(142 285 167)"/><ellipse cx="315" cy="170" rx="1.7" ry="2.1" transform="rotate(156 315 170)"/><ellipse cx="609" cy="136" rx="3.2" ry="3" transform="rotate(118 609 136)"/><ellipse cx="594" cy="130" rx="2.4" ry="5.8" transform="rotate(156 594 130)"/><ellipse cx="608" cy="117" rx="3.3" ry="6" transform="rotate(87 608 117)"/><ellipse cx="645" cy="267" rx="4.2" ry="5.7" transform="rotate(45 645 267)"/><ellipse cx="634" cy="164" rx="4" ry="3.5" transform="rotate(12 634 164)"/><ellipse cx="608" cy="154" rx="2.1" ry="4.2" transform="rotate(41 608 154)"/><ellipse cx="635" cy="165" rx="3.3" ry="5" transform="rotate(120 635 165)"/><ellipse cx="632" cy="284" rx="3.5" ry="5.5" transform="rotate(52 632 284)"/><ellipse cx="642" cy="169" rx="1.6" ry="3.1" transform="rotate(70 642 169)"/><ellipse cx="650" cy="189" rx="3.7" ry="4" transform="rotate(145 650 189)"/><ellipse cx="682" cy="228" rx="2.3" ry="3.4" transform="rotate(39 682 228)"/><ellipse cx="661" cy="240" rx="1.9" ry="3" transform="rotate(30 661 240)"/><ellipse cx="587" cy="149" rx="2.7" ry="2.3" transform="rotate(97 587 149)"/><ellipse cx="619" cy="239" rx="3.1" ry="2.2" transform="rotate(100 619 239)"/><ellipse cx="649" cy="183" rx="2.1" ry="4.1" transform="rotate(32 649 183)"/><ellipse cx="588" cy="147" rx="2.8" ry="4.2" transform="rotate(34 588 147)"/><ellipse cx="639" cy="195" rx="2.4" ry="3.8" transform="rotate(96 639 195)"/><ellipse cx="600" cy="126" rx="2.3" ry="4.9" transform="rotate(103 600 126)"/><ellipse cx="599" cy="188" rx="2.6" ry="2.4" transform="rotate(94 599 188)"/><ellipse cx="621" cy="128" rx="1.6" ry="2.1" transform="rotate(161 621 128)"/><ellipse cx="636" cy="87" rx="3.8" ry="5" transform="rotate(169 636 87)"/><ellipse cx="655" cy="269" rx="2.1" ry="4.8" transform="rotate(170 655 269)"/><ellipse cx="598" cy="240" rx="2.6" ry="5.1" transform="rotate(66 598 240)"/><ellipse cx="594" cy="171" rx="2.7" ry="2.2" transform="rotate(98 594 171)"/><ellipse cx="683" cy="142" rx="3.6" ry="2.9" transform="rotate(103 683 142)"/><ellipse cx="606" cy="239" rx="2.6" ry="4.8" transform="rotate(133 606 239)"/><ellipse cx="595" cy="153" rx="2.8" ry="2.6" transform="rotate(149 595 153)"/><ellipse cx="612" cy="256" rx="2.4" ry="5.7" transform="rotate(100 612 256)"/><ellipse cx="598" cy="267" rx="4.2" ry="3.1" transform="rotate(96 598 267)"/><ellipse cx="637" cy="202" rx="2.9" ry="3.3" transform="rotate(64 637 202)"/><ellipse cx="593" cy="92" rx="2.5" ry="3.5" transform="rotate(76 593 92)"/><ellipse cx="612" cy="219" rx="2.1" ry="3.9" transform="rotate(157 612 219)"/><ellipse cx="621" cy="265" rx="1.6" ry="4.8" transform="rotate(55 621 265)"/><ellipse cx="666" cy="210" rx="3.4" ry="3.6" transform="rotate(106 666 210)"/><ellipse cx="592" cy="99" rx="2.9" ry="3.8" transform="rotate(98 592 99)"/><ellipse cx="589" cy="112" rx="3" ry="3.2" transform="rotate(92 589 112)"/><ellipse cx="635" cy="89" rx="3.3" ry="3.1" transform="rotate(66 635 89)"/><ellipse cx="656" cy="132" rx="1.5" ry="4.2" transform="rotate(100 656 132)"/><ellipse cx="585" cy="194" rx="4" ry="5.1" transform="rotate(20 585 194)"/><ellipse cx="651" cy="197" rx="4" ry="5.9" transform="rotate(85 651 197)"/><ellipse cx="613" cy="106" rx="1.6" ry="5.2" transform="rotate(53 613 106)"/><ellipse cx="658" cy="222" rx="4.4" ry="5.3" transform="rotate(40 658 222)"/><ellipse cx="620" cy="223" rx="3.9" ry="3.2" transform="rotate(106 620 223)"/><ellipse cx="615" cy="235" rx="3.1" ry="2.9" transform="rotate(63 615 235)"/><ellipse cx="623" cy="226" rx="4.3" ry="5" transform="rotate(16 623 226)"/><ellipse cx="689" cy="249" rx="4.2" ry="3.2" transform="rotate(115 689 249)"/><ellipse cx="639" cy="221" rx="1.6" ry="4.5" transform="rotate(105 639 221)"/><ellipse cx="676" cy="96" rx="2.3" ry="4" transform="rotate(177 676 96)"/><ellipse cx="626" cy="228" rx="2.3" ry="4.9" transform="rotate(83 626 228)"/><ellipse cx="604" cy="256" rx="2.1" ry="4.3" transform="rotate(33 604 256)"/><ellipse cx="645" cy="169" rx="3.6" ry="4.5" transform="rotate(68 645 169)"/><ellipse cx="669" cy="110" rx="2.6" ry="4.7" transform="rotate(59 669 110)"/><ellipse cx="653" cy="280" rx="2.9" ry="4.8" transform="rotate(34 653 280)"/><ellipse cx="613" cy="139" rx="2.3" ry="4.7" transform="rotate(98 613 139)"/><ellipse cx="683" cy="283" rx="1.6" ry="4.9" transform="rotate(30 683 283)"/><ellipse cx="676" cy="124" rx="2.6" ry="4.2" transform="rotate(30 676 124)"/><ellipse cx="627" cy="266" rx="4" ry="5.4" transform="rotate(43 627 266)"/><ellipse cx="624" cy="147" rx="3.9" ry="5.4" transform="rotate(72 624 147)"/><ellipse cx="608" cy="229" rx="2.7" ry="2.6" transform="rotate(147 608 229)"/><ellipse cx="626" cy="224" rx="3.1" ry="5.2" transform="rotate(37 626 224)"/><ellipse cx="631" cy="252" rx="3.2" ry="5.6" transform="rotate(124 631 252)"/><ellipse cx="630" cy="115" rx="4.2" ry="3.1" transform="rotate(145 630 115)"/><ellipse cx="600" cy="210" rx="2.3" ry="2.9" transform="rotate(123 600 210)"/><ellipse cx="606" cy="195" rx="3.2" ry="2.6" transform="rotate(1 606 195)"/><ellipse cx="679" cy="147" rx="1.7" ry="2.7" transform="rotate(123 679 147)"/><ellipse cx="600" cy="243" rx="4.5" ry="3.6" transform="rotate(8 600 243)"/><ellipse cx="629" cy="246" rx="2.7" ry="2.2" transform="rotate(140 629 246)"/><ellipse cx="650" cy="250" rx="2.3" ry="2.8" transform="rotate(74 650 250)"/><ellipse cx="676" cy="284" rx="2.8" ry="5.3" transform="rotate(12 676 284)"/><ellipse cx="603" cy="90" rx="2" ry="2.5" transform="rotate(19 603 90)"/><ellipse cx="613" cy="90" rx="3.2" ry="2.3" transform="rotate(119 613 90)"/><ellipse cx="586" cy="127" rx="4.4" ry="2" transform="rotate(134 586 127)"/><ellipse cx="613" cy="134" rx="4.3" ry="4" transform="rotate(78 613 134)"/><ellipse cx="669" cy="251" rx="3.8" ry="5.9" transform="rotate(25 669 251)"/><ellipse cx="683" cy="181" rx="4" ry="3.6" transform="rotate(159 683 181)"/><ellipse cx="587" cy="200" rx="2.2" ry="3.6" transform="rotate(94 587 200)"/><ellipse cx="638" cy="140" rx="4.5" ry="4.5" transform="rotate(115 638 140)"/><ellipse cx="622" cy="141" rx="4.2" ry="3.3" transform="rotate(24 622 141)"/><ellipse cx="613" cy="128" rx="2" ry="2.2" transform="rotate(33 613 128)"/><ellipse cx="642" cy="221" rx="2" ry="2.4" transform="rotate(36 642 221)"/><ellipse cx="624" cy="121" rx="1.6" ry="3.6" transform="rotate(13 624 121)"/><ellipse cx="627" cy="149" rx="3.1" ry="5.8" transform="rotate(52 627 149)"/><ellipse cx="587" cy="120" rx="1.7" ry="4.4" transform="rotate(148 587 120)"/><ellipse cx="689" cy="171" rx="4.4" ry="2.9" transform="rotate(104 689 171)"/><ellipse cx="667" cy="263" rx="3.9" ry="2.3" transform="rotate(99 667 263)"/><ellipse cx="685" cy="149" rx="2.1" ry="3.4" transform="rotate(2 685 149)"/><ellipse cx="601" cy="212" rx="2.6" ry="4.6" transform="rotate(54 601 212)"/><ellipse cx="650" cy="154" rx="2.8" ry="4.9" transform="rotate(108 650 154)"/><ellipse cx="638" cy="199" rx="1.8" ry="5.3" transform="rotate(176 638 199)"/><ellipse cx="663" cy="172" rx="2.9" ry="5.3" transform="rotate(128 663 172)"/><ellipse cx="609" cy="205" rx="3.2" ry="4.1" transform="rotate(8 609 205)"/><ellipse cx="640" cy="175" rx="2.4" ry="2.2" transform="rotate(13 640 175)"/><ellipse cx="683" cy="115" rx="2.9" ry="6" transform="rotate(159 683 115)"/><ellipse cx="618" cy="232" rx="4.5" ry="3.6" transform="rotate(32 618 232)"/><ellipse cx="664" cy="264" rx="1.8" ry="2.7" transform="rotate(166 664 264)"/><ellipse cx="668" cy="113" rx="1.8" ry="2.4" transform="rotate(64 668 113)"/><ellipse cx="689" cy="98" rx="4.1" ry="4.8" transform="rotate(64 689 98)"/><ellipse cx="639" cy="155" rx="2.1" ry="2.1" transform="rotate(109 639 155)"/><ellipse cx="606" cy="141" rx="3.4" ry="2.3" transform="rotate(142 606 141)"/><ellipse cx="631" cy="236" rx="4.1" ry="2.3" transform="rotate(127 631 236)"/><ellipse cx="675" cy="239" rx="3.1" ry="5.6" transform="rotate(38 675 239)"/><ellipse cx="670" cy="121" rx="2.5" ry="5.7" transform="rotate(56 670 121)"/><ellipse cx="673" cy="108" rx="2" ry="3.6" transform="rotate(174 673 108)"/><ellipse cx="650" cy="265" rx="1.7" ry="6" transform="rotate(52 650 265)"/><ellipse cx="641" cy="148" rx="4.4" ry="5.9" transform="rotate(143 641 148)"/><ellipse cx="655" cy="171" rx="1.5" ry="3.4" transform="rotate(80 655 171)"/><ellipse cx="674" cy="274" rx="3.5" ry="2.8" transform="rotate(53 674 274)"/><ellipse cx="604" cy="111" rx="3.6" ry="3.9" transform="rotate(33 604 111)"/><ellipse cx="614" cy="137" rx="2.5" ry="4.5" transform="rotate(78 614 137)"/><ellipse cx="606" cy="284" rx="3.6" ry="4.9" transform="rotate(92 606 284)"/><ellipse cx="676" cy="239" rx="2.1" ry="2.3" transform="rotate(68 676 239)"/><ellipse cx="630" cy="249" rx="2.7" ry="3.8" transform="rotate(129 630 249)"/><ellipse cx="598" cy="104" rx="3" ry="3.7" transform="rotate(126 598 104)"/><ellipse cx="646" cy="142" rx="4.1" ry="3.1" transform="rotate(20 646 142)"/><ellipse cx="656" cy="176" rx="4.3" ry="3.6" transform="rotate(105 656 176)"/><ellipse cx="648" cy="175" rx="1.7" ry="3.7" transform="rotate(72 648 175)"/><ellipse cx="646" cy="217" rx="2.3" ry="4.6" transform="rotate(3 646 217)"/><ellipse cx="656" cy="134" rx="2.7" ry="2.5" transform="rotate(64 656 134)"/><ellipse cx="626" cy="141" rx="1.8" ry="5.5" transform="rotate(151 626 141)"/><ellipse cx="596" cy="216" rx="2.9" ry="2.8" transform="rotate(93 596 216)"/><ellipse cx="587" cy="91" rx="3.3" ry="4.8" transform="rotate(5 587 91)"/><ellipse cx="655" cy="116" rx="1.7" ry="2.7" transform="rotate(129 655 116)"/><ellipse cx="618" cy="219" rx="3.3" ry="5.9" transform="rotate(5 618 219)"/><ellipse cx="689" cy="164" rx="4" ry="4.6" transform="rotate(179 689 164)"/><ellipse cx="597" cy="96" rx="4.5" ry="4.6" transform="rotate(167 597 96)"/><ellipse cx="683" cy="189" rx="3.3" ry="4" transform="rotate(36 683 189)"/><ellipse cx="639" cy="104" rx="3.9" ry="2" transform="rotate(166 639 104)"/><ellipse cx="658" cy="242" rx="4.2" ry="4.7" transform="rotate(121 658 242)"/><ellipse cx="666" cy="109" rx="2.9" ry="2.1" transform="rotate(93 666 109)"/><ellipse cx="684" cy="264" rx="1.6" ry="3.4" transform="rotate(137 684 264)"/><ellipse cx="644" cy="280" rx="3.8" ry="2.4" transform="rotate(129 644 280)"/><ellipse cx="644" cy="99" rx="2.2" ry="4.7" transform="rotate(130 644 99)"/><ellipse cx="639" cy="144" rx="3.8" ry="3" transform="rotate(105 639 144)"/><ellipse cx="634" cy="283" rx="3.3" ry="2.7" transform="rotate(26 634 283)"/><ellipse cx="633" cy="255" rx="1.8" ry="5.4" transform="rotate(39 633 255)"/><ellipse cx="600" cy="198" rx="2" ry="4.5" transform="rotate(30 600 198)"/><ellipse cx="628" cy="87" rx="2" ry="5.3" transform="rotate(96 628 87)"/><ellipse cx="601" cy="191" rx="1.6" ry="2.4" transform="rotate(76 601 191)"/><ellipse cx="681" cy="194" rx="3.8" ry="5.1" transform="rotate(99 681 194)"/><ellipse cx="629" cy="101" rx="2.3" ry="2.4" transform="rotate(107 629 101)"/><ellipse cx="620" cy="183" rx="3.5" ry="5.5" transform="rotate(35 620 183)"/><ellipse cx="645" cy="185" rx="4.2" ry="3.6" transform="rotate(76 645 185)"/><ellipse cx="613" cy="205" rx="2.2" ry="2.3" transform="rotate(122 613 205)"/><ellipse cx="625" cy="215" rx="2.5" ry="2.5" transform="rotate(79 625 215)"/><ellipse cx="673" cy="97" rx="3.1" ry="4.2" transform="rotate(102 673 97)"/><ellipse cx="671" cy="220" rx="3.6" ry="2.1" transform="rotate(92 671 220)"/><ellipse cx="636" cy="131" rx="3.7" ry="3.9" transform="rotate(2 636 131)"/><ellipse cx="624" cy="204" rx="1.8" ry="4.8" transform="rotate(91 624 204)"/><ellipse cx="686" cy="158" rx="3.3" ry="3.5" transform="rotate(77 686 158)"/><ellipse cx="607" cy="238" rx="1.7" ry="2.7" transform="rotate(30 607 238)"/><ellipse cx="639" cy="236" rx="1.7" ry="2.4" transform="rotate(64 639 236)"/><ellipse cx="647" cy="247" rx="4.3" ry="4.6" transform="rotate(95 647 247)"/><ellipse cx="627" cy="142" rx="3.5" ry="2.3" transform="rotate(57 627 142)"/><ellipse cx="672" cy="151" rx="2.5" ry="5.3" transform="rotate(73 672 151)"/><ellipse cx="652" cy="96" rx="3.8" ry="2.2" transform="rotate(159 652 96)"/><ellipse cx="594" cy="113" rx="2.5" ry="4.9" transform="rotate(157 594 113)"/><ellipse cx="683" cy="236" rx="3.2" ry="2" transform="rotate(122 683 236)"/><ellipse cx="629" cy="221" rx="4.5" ry="5.7" transform="rotate(19 629 221)"/><ellipse cx="603" cy="102" rx="3.6" ry="2.6" transform="rotate(114 603 102)"/><ellipse cx="656" cy="245" rx="2.8" ry="5.6" transform="rotate(18 656 245)"/><ellipse cx="673" cy="276" rx="2.6" ry="5.3" transform="rotate(28 673 276)"/><ellipse cx="659" cy="164" rx="3.6" ry="4.6" transform="rotate(29 659 164)"/><ellipse cx="682" cy="127" rx="2.7" ry="4.1" transform="rotate(31 682 127)"/><ellipse cx="601" cy="140" rx="2.7" ry="5.6" transform="rotate(96 601 140)"/><ellipse cx="606" cy="226" rx="3" ry="3.7" transform="rotate(99 606 226)"/><ellipse cx="639" cy="181" rx="3.1" ry="5.4" transform="rotate(149 639 181)"/><ellipse cx="619" cy="88" rx="4" ry="4.6" transform="rotate(96 619 88)"/><ellipse cx="647" cy="189" rx="2.7" ry="4.3" transform="rotate(118 647 189)"/><ellipse cx="623" cy="202" rx="2.9" ry="5.9" transform="rotate(83 623 202)"/><ellipse cx="594" cy="183" rx="3.4" ry="3.4" transform="rotate(105 594 183)"/><ellipse cx="645" cy="136" rx="1.7" ry="5.3" transform="rotate(96 645 136)"/><ellipse cx="611" cy="128" rx="4.2" ry="2.3" transform="rotate(46 611 128)"/><ellipse cx="687" cy="267" rx="2.9" ry="3.9" transform="rotate(59 687 267)"/><ellipse cx="605" cy="209" rx="3.5" ry="4" transform="rotate(38 605 209)"/><ellipse cx="589" cy="225" rx="3.2" ry="4.2" transform="rotate(85 589 225)"/><ellipse cx="636" cy="174" rx="4.4" ry="3.4" transform="rotate(77 636 174)"/><ellipse cx="595" cy="242" rx="2.2" ry="2.8" transform="rotate(136 595 242)"/><ellipse cx="662" cy="154" rx="2" ry="2.8" transform="rotate(43 662 154)"/><ellipse cx="679" cy="270" rx="3.6" ry="3.5" transform="rotate(74 679 270)"/><ellipse cx="649" cy="251" rx="4.4" ry="2.4" transform="rotate(91 649 251)"/><ellipse cx="587" cy="192" rx="2.3" ry="3.2" transform="rotate(64 587 192)"/><ellipse cx="644" cy="138" rx="1.7" ry="2.1" transform="rotate(71 644 138)"/><ellipse cx="684" cy="115" rx="2.7" ry="5.3" transform="rotate(139 684 115)"/><ellipse cx="675" cy="207" rx="3.1" ry="4.9" transform="rotate(136 675 207)"/><ellipse cx="664" cy="226" rx="3.3" ry="4.6" transform="rotate(78 664 226)"/><ellipse cx="591" cy="272" rx="2.6" ry="5.1" transform="rotate(59 591 272)"/><ellipse cx="636" cy="222" rx="2.5" ry="2.9" transform="rotate(163 636 222)"/><ellipse cx="638" cy="198" rx="2.5" ry="2.9" transform="rotate(140 638 198)"/><ellipse cx="597" cy="273" rx="3.5" ry="2.3"/><ellipse cx="596" cy="198" rx="1.9" ry="6" transform="rotate(79 596 198)"/><ellipse cx="622" cy="113" rx="4.3" ry="4.7" transform="rotate(36 622 113)"/><ellipse cx="588" cy="199" rx="4.4" ry="4.7" transform="rotate(133 588 199)"/><ellipse cx="642" cy="172" rx="3.5" ry="2.3" transform="rotate(177 642 172)"/><ellipse cx="622" cy="185" rx="2.1" ry="4.8" transform="rotate(106 622 185)"/><ellipse cx="600" cy="124" rx="3.6" ry="2.1" transform="rotate(143 600 124)"/><ellipse cx="594" cy="265" rx="2.3" ry="2.9" transform="rotate(69 594 265)"/><ellipse cx="684" cy="280" rx="4.3" ry="5.7" transform="rotate(109 684 280)"/><ellipse cx="683" cy="89" rx="3" ry="4.4" transform="rotate(175 683 89)"/><ellipse cx="645" cy="265" rx="2.4" ry="2.7" transform="rotate(132 645 265)"/><ellipse cx="601" cy="268" rx="1.8" ry="3.2" transform="rotate(77 601 268)"/><ellipse cx="686" cy="90" rx="1.6" ry="5.3" transform="rotate(176 686 90)"/><ellipse cx="648" cy="254" rx="3.8" ry="4.7" transform="rotate(21 648 254)"/><ellipse cx="585" cy="99" rx="3.9" ry="5.9" transform="rotate(59 585 99)"/><ellipse cx="628" cy="152" rx="2.5" ry="2.1" transform="rotate(61 628 152)"/><ellipse cx="613" cy="202" rx="3.1" ry="3.3" transform="rotate(172 613 202)"/><ellipse cx="622" cy="215" rx="4.3" ry="3.7" transform="rotate(51 622 215)"/><ellipse cx="601" cy="136" rx="2.9" ry="5.1" transform="rotate(85 601 136)"/><ellipse cx="604" cy="221" rx="3.3" ry="4.4" transform="rotate(147 604 221)"/><ellipse cx="612" cy="260" rx="2.1" ry="2.9" transform="rotate(77 612 260)"/><ellipse cx="639" cy="233" rx="2.1" ry="2.1" transform="rotate(63 639 233)"/><ellipse cx="642" cy="101" rx="3.8" ry="3" transform="rotate(55 642 101)"/><ellipse cx="590" cy="196" rx="1.9" ry="4.7" transform="rotate(17 590 196)"/><ellipse cx="681" cy="283" rx="2.7" ry="2.5" transform="rotate(171 681 283)"/><ellipse cx="667" cy="153" rx="3.9" ry="3.5" transform="rotate(73 667 153)"/><ellipse cx="644" cy="274" rx="1.7" ry="5.9" transform="rotate(3 644 274)"/><ellipse cx="590" cy="92" rx="4.4" ry="3.7" transform="rotate(40 590 92)"/><ellipse cx="600" cy="126" rx="4.1" ry="5.8" transform="rotate(81 600 126)"/><ellipse cx="621" cy="271" rx="1.9" ry="4.9" transform="rotate(10 621 271)"/><ellipse cx="605" cy="112" rx="3.5" ry="5.5" transform="rotate(171 605 112)"/><ellipse cx="633" cy="159" rx="1.9" ry="3.1" transform="rotate(18 633 159)"/><ellipse cx="688" cy="230" rx="3.5" ry="2.5" transform="rotate(82 688 230)"/><ellipse cx="604" cy="110" rx="3.1" ry="4.2" transform="rotate(145 604 110)"/><ellipse cx="631" cy="246" rx="2.3" ry="2.4" transform="rotate(167 631 246)"/><ellipse cx="608" cy="100" rx="2.4" ry="5" transform="rotate(173 608 100)"/><ellipse cx="638" cy="117" rx="2.5" ry="4.3" transform="rotate(75 638 117)"/><ellipse cx="636" cy="264" rx="3.3" ry="3.4" transform="rotate(125 636 264)"/><ellipse cx="634" cy="123" rx="4.3" ry="5.9" transform="rotate(6 634 123)"/><ellipse cx="631" cy="202" rx="3.1" ry="3.1" transform="rotate(11 631 202)"/><ellipse cx="603" cy="232" rx="2.1" ry="2.1" transform="rotate(56 603 232)"/><ellipse cx="630" cy="277" rx="3.3" ry="2.3" transform="rotate(6 630 277)"/><ellipse cx="604" cy="88" rx="2.4" ry="2.2" transform="rotate(66 604 88)"/><ellipse cx="674" cy="197" rx="3.6" ry="3" transform="rotate(81 674 197)"/><ellipse cx="602" cy="114" rx="3.2" ry="4.4" transform="rotate(109 602 114)"/><ellipse cx="642" cy="177" rx="2.5" ry="5.7" transform="rotate(59 642 177)"/><ellipse cx="656" cy="209" rx="4.2" ry="4.6" transform="rotate(119 656 209)"/><ellipse cx="638" cy="282" rx="2.4" ry="2.7" transform="rotate(80 638 282)"/><ellipse cx="610" cy="202" rx="2" ry="5.8" transform="rotate(72 610 202)"/><ellipse cx="652" cy="212" rx="1.5" ry="3.9" transform="rotate(28 652 212)"/><ellipse cx="637" cy="270" rx="3" ry="3.5"/><ellipse cx="655" cy="165" rx="3" ry="5.4" transform="rotate(145 655 165)"/><ellipse cx="634" cy="103" rx="3" ry="3.9" transform="rotate(164 634 103)"/><ellipse cx="600" cy="90" rx="3.1" ry="2.2" transform="rotate(71 600 90)"/><ellipse cx="669" cy="132" rx="4" ry="5.2" transform="rotate(65 669 132)"/><ellipse cx="605" cy="212" rx="1.8" ry="3.4" transform="rotate(14 605 212)"/><ellipse cx="684" cy="183" rx="2.9" ry="3.2" transform="rotate(170 684 183)"/><ellipse cx="638" cy="153" rx="2.1" ry="2.9" transform="rotate(114 638 153)"/><ellipse cx="669" cy="281" rx="4.3" ry="4.7" transform="rotate(70 669 281)"/><ellipse cx="670" cy="245" rx="2" ry="5.3" transform="rotate(77 670 245)"/><ellipse cx="660" cy="94" rx="3.9" ry="5.8" transform="rotate(168 660 94)"/><ellipse cx="621" cy="243" rx="3.3" ry="5.6" transform="rotate(164 621 243)"/><ellipse cx="676" cy="280" rx="2" ry="3" transform="rotate(73 676 280)"/><ellipse cx="676" cy="147" rx="2.1" ry="4.8" transform="rotate(66 676 147)"/><ellipse cx="688" cy="210" rx="1.9" ry="4.9" transform="rotate(14 688 210)"/><ellipse cx="631" cy="167" rx="2.7" ry="5"/><ellipse cx="645" cy="274" rx="3.4" ry="4" transform="rotate(98 645 274)"/><ellipse cx="660" cy="93" rx="4.2" ry="4" transform="rotate(58 660 93)"/><ellipse cx="609" cy="209" rx="1.9" ry="2.6" transform="rotate(110 609 209)"/><ellipse cx="618" cy="140" rx="2.1" ry="4.6" transform="rotate(175 618 140)"/><ellipse cx="666" cy="106" rx="2.5" ry="2.2" transform="rotate(6 666 106)"/><ellipse cx="616" cy="275" rx="3.4" ry="5.9" transform="rotate(14 616 275)"/></g><g fill="#d8ccb6" opacity="0.35"><path d="M378 118 382 113 374 109 373 114 378 118ZM317 105 319 102 320 102 320 105 316 107 316 107 316 106ZM317 109 321 110 324 107 322 106ZM333 122 332 120 336 118 338 121 333 122ZM340 116 340 115 345 116 342 119 342 119ZM358 205 360 207 363 203 361 201 360 200ZM382 136 382 129 393 131 382 136ZM289 246 299 242 299 236 289 240 289 245ZM366 254 366 254 362 253 359 254 357 261 357 262 360 262 367 258ZM336 181 338 182 338 184 335 186 335 186 334 186 335 181ZM325 215 323 217 322 221 328 225 333 222 333 220 328 216ZM373 190 372 184 383 183 383 192 378 197 377 197ZM290 211 290 214 289 214 284 209 284 205 290 210ZM367 112 367 107 367 107 366 105 358 109 359 111 361 113 366 112ZM329 130 324 127 325 126 330 125 330 125 330 130ZM372 278 369 283 372 287 374 288 376 286 377 283 373 278 373 277ZM301 205 302 209 302 211 299 214 296 213 296 210 298 206 301 204ZM381 237 380 238 375 237 370 233 369 230 369 230 375 231 382 232 381 237ZM314 232 313 228 308 230 308 231 309 231ZM320 188 317 189 321 192 323 192 322 188 322 188ZM297 116 304 117 301 122 299 121 297 120ZM362 125 362 127 361 126 361 124ZM301 140 301 140 301 139 293 140 294 145 296 144ZM347 201 347 202 348 204 352 205 355 199 354 197 348 200ZM364 133 365 134 367 138 365 138 361 134ZM317 103 321 99 319 98ZM325 285 324 283 320 282 317 283 317 284 318 286ZM372 176 371 176 370 173 370 172 375 168 376 168 381 172 380 176 380 176ZM370 145 369 148 368 149 364 150 362 146 367 144 368 144 370 145ZM347 195 347 192 347 188 350 186 355 186 355 192ZM379 282 381 279 376 276ZM363 122 364 122 365 118 360 118 360 119 361 121ZM380 284 379 287 384 286 383 280 383 280ZM326 271 324 270 321 273 323 277 326 277 327 273ZM340 96 343 101 346 101 347 96ZM328 111 327 109 326 108 323 111 326 114 326 114ZM357 162 348 165 348 166 349 169 360 170 360 169ZM287 120 288 125 295 123 293 121ZM380 214 381 215 387 220 387 223 380 221 377 216ZM287 199 285 196 284 196 284 199 284 200 288 204ZM288 147 289 145 288 141 286 138 285 137 282 138 287 148ZM340 173 340 173 341 169 343 169 344 171 344 173 343 173ZM295 107 297 103 306 104 308 110 308 111 308 111ZM303 84 303 88 304 89 306 86 304 84ZM335 141 335 137 331 135 330 135 324 139 324 140 332 142ZM290 111 292 114 292 117 287 116 287 115 288 112ZM320 243 320 246 318 248 312 247 309 242 308 236 308 236 309 237ZM331 189 329 188 327 188 327 192 328 193 332 189ZM319 267 316 271 313 272 310 271 311 268 319 265ZM373 266 373 270 373 270 374 270 378 268 375 265ZM321 166 323 163 322 161 316 159 316 160 316 164ZM362 158 368 156 371 162 365 166 362 160ZM335 178 336 176 336 175 335 175 334 177 335 178ZM291 194 290 195 292 198 295 199 298 198 297 195ZM293 137 300 136 301 133 300 132 291 134ZM319 175 319 174 314 171 310 175 312 178 312 178 319 175ZM384 108 377 105 377 104 381 102 387 105 387 105ZM298 267 298 273 298 273 293 272 298 267ZM342 209 340 213 338 215 334 212 337 208 342 208ZM369 200 374 200 374 199 371 194 366 198ZM307 92 310 95 313 93 313 93 313 88 309 88ZM341 201 336 199 332 199 331 201 336 204 341 202ZM325 173 325 172 328 168 331 169 331 172 326 173 325 173ZM340 110 343 106 343 106 347 106 350 109 350 111 348 112 340 111ZM341 181 345 177 345 177 347 182 345 184 342 183ZM370 83 373 84 374 88 368 94 368 94 367 86 370 83ZM302 282 301 277 302 277 305 275 308 277 308 279ZM325 103 326 104 327 105 328 102 327 100 325 101ZM302 266 301 272 305 270 305 268 304 266ZM291 182 289 181 289 180 283 184 284 189 284 189 286 190 288 189ZM290 175 289 173 290 172 293 171 291 176ZM339 262 340 257 341 258 342 264 341 264ZM305 144 305 144 311 148 310 152 309 153 309 153 305 149ZM334 94 333 94 332 95 331 96 332 99 338 100 338 100 334 94ZM375 121 371 117 370 118 369 123 371 124 375 122ZM289 231 289 226 289 225 292 223 293 222 296 223 298 228 298 229 298 229 290 232ZM323 237 320 235 311 234 323 242ZM288 262 288 261 292 262 293 264 290 268 287 267 287 264ZM316 154 325 155 326 154 326 152 318 149 317 150ZM355 155 352 151 352 151 349 151 348 156 348 158 355 156ZM324 234 326 229 320 225 318 226 321 232ZM374 137 372 136 370 132 372 130 376 128 376 129 376 136ZM379 261 382 264 384 264 384 263 383 259 382 258 380 260ZM321 85 321 85 320 89 317 90 316 86 316 86 321 85ZM323 90 324 86 330 91 328 92ZM313 106 313 107 311 107 310 102 310 100 314 98 315 99ZM306 170 309 166 308 162 308 162 306 162 304 169 304 169ZM325 178 325 178 327 180 327 183 325 183 325 183ZM315 184 311 184 311 184 311 187 311 187 313 187 315 186ZM379 153 378 154 374 151 375 147ZM302 142 301 147 298 145ZM369 207 366 211 367 216 372 213 373 211 373 207ZM294 284 291 284 287 282 287 277 288 277 290 277 294 279 295 283ZM329 146 328 148 320 146 322 143ZM322 176 322 177 320 181 320 184 322 183 322 176ZM307 216 304 219 307 225 313 223 315 221 316 217ZM329 121 324 123 324 119 326 117 326 117 329 119ZM314 192 318 195 316 199 315 199 312 192ZM334 260 335 256 333 253 328 253 326 255 326 259 326 262 328 263ZM338 90 337 90 338 91 348 92 348 92 349 88 349 88 341 88 338 90ZM354 120 354 119 354 118 352 116 350 117 346 121 347 124 349 125ZM343 268 344 267 351 265 352 266 352 266 349 277 349 277 341 272ZM335 130 335 126 339 125 340 125 340 128 338 131ZM376 92 377 94 377 94 378 98 373 101 371 99 370 97ZM288 103 288 103 289 100 288 96 288 95 284 93 280 95 279 97 283 102 285 104ZM336 266 332 268 333 270 336 270 337 268ZM319 211 318 213 310 212 310 210 316 207 319 209ZM371 255 376 258 375 260 372 261 371 258 370 254ZM643 85 644 86 645 90 640 92 640 91ZM610 94 613 94 615 92 612 79 608 83 608 91ZM618 203 615 199 615 198 616 196 620 200ZM659 254 658 250 660 249 666 249 661 254ZM619 238 618 235 614 234 611 235 611 238 612 240 619 239ZM687 209 689 208 689 207 686 204 685 206 685 209ZM596 269 596 270 591 271 587 270 587 267 589 264ZM598 130 591 126 588 129 587 133 587 133 590 134 597 134 598 133ZM587 151 588 152 588 154 583 155 585 150ZM627 261 624 262 623 259 626 259ZM621 278 616 275 613 277 612 280 614 283 622 282 622 280ZM688 201 691 203 694 201 689 198 688 201ZM682 180 686 178 686 182 684 183 681 183ZM606 243 604 247 595 248 598 239 605 241ZM684 129 684 129 679 131 669 128 669 126 670 125 670 125 679 124 682 126ZM672 257 670 249 670 249 664 256 667 258ZM682 211 682 207 680 209 678 212 678 213 679 214ZM603 261 605 259 603 252 603 252 594 252 594 253 593 256ZM681 262 681 262 683 263 689 262 690 257 689 257 685 257 680 261ZM610 218 612 216 612 215 612 215 608 214 606 215 603 218 603 219 608 219ZM625 250 627 256 622 256 621 254 625 250ZM643 120 642 116 637 115 637 116 637 117ZM658 284 656 279 656 287ZM655 161 660 153 661 154 661 162 657 165ZM634 266 634 264 632 264 630 268 631 268ZM650 179 650 180 647 185 646 186 643 183 644 179 647 179 647 179ZM654 106 658 113 658 106 655 104ZM630 104 626 105 621 99 623 97 627 97 632 99 632 101ZM639 270 642 271 641 274 638 272ZM609 148 607 150 603 144 603 142 603 139 604 138 612 139ZM686 212 684 215 681 215 680 215 683 212ZM638 159 634 159 634 159 634 158 635 153 635 152 637 149 638 149 640 150 643 157ZM593 222 590 216 584 219 584 221 585 225 588 226 591 225 591 225 593 222ZM672 208 671 206 668 205 667 205 669 209ZM681 268 683 268 689 278 688 278 687 278 682 273ZM587 273 588 275 594 275 590 273 587 272ZM608 199 608 198 611 198 612 198 611 199ZM604 206 607 204 608 205 614 211 608 210ZM633 279 633 287 633 287 632 287 628 284 628 282 631 279ZM589 169 588 167 590 166 595 166 593 169ZM649 102 648 103 641 100 641 99 642 98 647 96 650 96 650 100ZM645 217 647 216 647 212 647 209 642 207 641 211ZM661 169 664 167 671 165 671 165 668 173 668 173 661 172ZM681 228 679 227 674 231 677 235 680 235 680 235 680 235 682 231ZM687 171 687 171 687 170 682 168 682 171ZM592 111 592 108 594 103 599 107 594 111ZM645 166 649 172 653 173 654 172 654 169 651 166 650 165ZM666 154 671 157 673 159 673 160 666 162ZM677 255 681 252 679 244 676 244 674 248 676 254ZM635 92 635 94 634 95 629 92 626 83 633 88ZM621 248 618 252 617 252 610 250 609 249 612 245 620 244ZM643 113 644 112 645 108 638 105 636 109 637 112ZM673 173 678 171 678 171 677 167 676 165ZM601 264 594 260 593 262 598 266 601 265ZM667 138 673 140 676 137 677 136 667 132ZM620 146 616 150 619 150 621 150 621 147ZM661 179 666 180 669 184 668 186 666 187 664 186 660 181 660 180ZM645 125 646 127 641 131 640 129 639 125ZM684 111 687 108 685 105 681 107ZM642 173 634 166 634 166 632 171 639 173ZM628 272 627 272 627 272 625 275 626 277 629 274ZM675 219 675 221 671 225 670 224 669 223 671 220 675 219 675 219ZM592 198 591 200 586 199 584 195 588 191 592 192ZM667 235 671 239 669 243 669 243 663 243 662 239 666 235ZM590 148 592 146 598 144 599 146 592 150ZM625 148 630 149 630 150 625 150ZM607 192 608 195 608 195 611 195 612 193 612 192 609 192ZM643 199 648 201 650 199 650 197 647 195 645 195 643 198ZM637 276 640 278 641 281 637 285 636 277ZM636 135 635 139 635 139 626 135 626 133 629 132 635 132ZM615 127 613 125 611 125 608 129 608 132 614 133 616 132 617 132 617 130ZM666 215 663 220 660 218 662 209 663 208 664 208 666 213ZM602 192 602 195 598 197 596 197 596 192 597 191ZM608 230 611 229 611 224 609 225 608 230ZM633 207 634 202 634 201 629 199 625 202 623 206 622 209 629 208ZM683 196 685 194 685 194 682 189 679 188 678 188 677 191 681 195ZM612 102 615 102 619 106 614 110 612 104ZM656 241 651 241 651 244 652 246 655 247 656 246ZM594 153 600 149 603 154 602 157 595 155 595 155ZM681 145 679 141 676 143 677 145 680 146ZM653 109 652 110 651 113 656 114 656 114ZM606 109 607 116 609 117 611 116 612 115 608 107ZM589 104 587 102 585 97 588 96 591 98 591 99ZM636 269 632 271 633 273 634 273 635 272 636 270ZM613 153 612 153 610 155 609 158 609 158 618 158 616 154ZM602 104 603 103 605 101 606 100 604 96 597 99 597 100ZM593 183 588 181 585 183 589 186 592 187 593 186ZM621 125 623 128 625 127 627 123ZM615 256 608 254 609 259 612 260ZM604 269 608 275 606 278 606 278 602 277 602 277 601 272 601 271ZM665 100 668 100 669 95 662 93 661 94ZM687 151 685 148 684 148 683 148 684 152ZM598 112 604 114 602 108 601 109ZM679 281 678 279 680 277 684 281 681 282 681 282ZM595 179 589 177 590 174 593 174 595 179ZM671 283 674 281 673 279 670 276 666 277 670 283ZM635 194 639 190 636 187 628 184 627 186 631 192ZM654 286 654 288 651 282 654 279 655 280ZM687 219 684 218 682 218 682 220 683 221ZM664 149 670 152 672 146 671 145 664 142 663 145 664 148ZM665 196 664 201 663 201 662 201 659 200 659 198 663 195ZM662 115 662 115 664 118 665 117 668 109 667 108 664 108 662 109ZM631 114 630 111 625 111 619 116 618 117 621 120 628 118 631 115ZM691 90 691 94 691 94 687 96 683 91 684 90ZM646 280 645 276 647 273 652 272 654 274 653 275 649 279ZM623 153 630 153 629 160 624 158 622 153ZM604 228 598 226 599 223 604 224ZM632 233 635 229 630 227 625 227 625 232 626 235ZM688 246 683 242 683 242 685 250 689 250ZM611 205 613 203 614 202 617 207 617 210 616 210 616 210ZM680 115 679 118 670 118 673 109 676 110ZM660 282 662 285 663 285 665 283 662 277 659 276 658 276 658 277 658 278ZM634 222 633 215 636 214 641 222 640 224 640 224Z"/></g><g fill="#cbbfa8" opacity="0.35"><circle cx="318.3" cy="140.9" r="1.2"/><circle cx="333.8" cy="92.1" r="1.6"/><circle cx="338.5" cy="179.6" r="1.5"/><circle cx="310" cy="124.8" r="1.3"/><circle cx="309.1" cy="150.5" r="0.7"/><circle cx="290.2" cy="156.1" r="1.2"/><circle cx="379.9" cy="212.9" r="1.1"/><circle cx="325.7" cy="132.1" r="1.2"/><circle cx="380.9" cy="109.4" r="1.1"/><circle cx="353.6" cy="237.5" r="1.3"/><circle cx="349.1" cy="272.7" r="1.7"/><circle cx="310.1" cy="193.2" r="1.8"/><circle cx="337.8" cy="122.9" r="1.5"/><circle cx="290.7" cy="115.1" r="1.3"/><circle cx="312.3" cy="228.9" r="1.5"/><circle cx="316.9" cy="238.4" r="1.4"/><circle cx="355.6" cy="176.3" r="1.1"/><circle cx="295.7" cy="180" r="1.7"/><circle cx="373.8" cy="96.2" r="0.7"/><circle cx="311.9" cy="223.9" r="1.1"/><circle cx="297.8" cy="170.1" r="1.3"/><circle cx="359.4" cy="165.6" r="1.4"/><circle cx="353.1" cy="208.1" r="0.7"/><circle cx="356.1" cy="110.7" r="0.7"/><circle cx="332.4" cy="88.4" r="0.7"/><circle cx="324.1" cy="178.7" r="0.7"/><circle cx="380.4" cy="255.4" r="1.2"/><circle cx="343.8" cy="148.1" r="1.8"/><circle cx="297" cy="145.8" r="0.9"/><circle cx="371.6" cy="186.8" r="1.1"/><circle cx="324.9" cy="262.4" r="0.9"/><circle cx="364.1" cy="226.6" r="1.1"/><circle cx="321.6" cy="172.4" r="1.1"/><circle cx="316.6" cy="209.8" r="1.1"/><circle cx="315.4" cy="239.6" r="1.1"/><circle cx="332.4" cy="260.9" r="1.1"/><circle cx="322.6" cy="264.6" r="1.8"/><circle cx="363.6" cy="165.3" r="1.4"/><circle cx="359.1" cy="144.3" r="1.5"/><circle cx="380" cy="216.2" r="1.4"/><circle cx="328.5" cy="215.7" r="0.9"/><circle cx="362" cy="192.8" r="1.8"/><circle cx="319.2" cy="227.3" r="0.6"/><circle cx="326.6" cy="238.3" r="0.9"/><circle cx="346.4" cy="129.2" r="1.1"/><circle cx="384.4" cy="124.3" r="1.7"/><circle cx="291" cy="201.6" r="1.6"/><circle cx="368.7" cy="163.3" r="1.3"/><circle cx="356.2" cy="237.3" r="1.5"/><circle cx="342.9" cy="135.3" r="1.4"/><circle cx="341.1" cy="193.9" r="1.8"/><circle cx="298.6" cy="241.1" r="1"/><circle cx="357.7" cy="275.1" r="0.9"/><circle cx="341.7" cy="190.7" r="1.2"/><circle cx="301.7" cy="210.1" r="1.7"/><circle cx="351.3" cy="142.8" r="1.6"/><circle cx="327" cy="114" r="1.3"/><circle cx="331" cy="191" r="1.8"/><circle cx="341.9" cy="275.7" r="1"/><circle cx="360.9" cy="100.1" r="1"/><circle cx="354.2" cy="223" r="1.6"/><circle cx="323" cy="139.7" r="1"/><circle cx="338.7" cy="89.8" r="1"/><circle cx="350.7" cy="114.7" r="1"/><circle cx="372.3" cy="271.7" r="0.9"/><circle cx="302.8" cy="108.5" r="0.7"/><circle cx="364.4" cy="232.8" r="0.9"/><circle cx="333.9" cy="224.1" r="0.6"/><circle cx="366.9" cy="256.9" r="0.9"/><circle cx="355.3" cy="224.9" r="1"/><circle cx="372.8" cy="128.7" r="1.2"/><circle cx="316.4" cy="173.4" r="1.6"/><circle cx="342" cy="206.9" r="1.8"/><circle cx="307.3" cy="129.5" r="1.3"/><circle cx="300" cy="277.8" r="1"/><circle cx="329" cy="171.2" r="1.6"/><circle cx="376.5" cy="220.4" r="0.8"/><circle cx="320.5" cy="226.3" r="0.9"/><circle cx="373.3" cy="259.5" r="0.9"/><circle cx="321.4" cy="130.8" r="1.5"/><circle cx="289.7" cy="224.1" r="0.7"/><circle cx="369.1" cy="193.6" r="1.3"/><circle cx="294.5" cy="93.8" r="1"/><circle cx="383.5" cy="205" r="1.6"/><circle cx="291.3" cy="105.4" r="0.6"/><circle cx="354.7" cy="120.3" r="0.9"/><circle cx="351.7" cy="224.1" r="1"/><circle cx="331.7" cy="142.8" r="1.3"/><circle cx="320.6" cy="157" r="0.9"/><circle cx="314.2" cy="137.2" r="0.6"/><circle cx="316" cy="203.4" r="0.9"/><circle cx="296.3" cy="254.2" r="1.2"/><circle cx="336.2" cy="147.4" r="1.7"/><circle cx="360.4" cy="209.5" r="1.4"/><circle cx="354.2" cy="185.1" r="1.1"/><circle cx="324" cy="185.8" r="1.2"/><circle cx="337.9" cy="191.6" r="1.5"/><circle cx="374.3" cy="129.8" r="0.6"/><circle cx="315.1" cy="91.4" r="1.6"/><circle cx="347" cy="142.1" r="0.8"/><circle cx="371.9" cy="252.2" r="1.4"/><circle cx="354.2" cy="233.9" r="1.1"/><circle cx="324.7" cy="195.6" r="1.7"/><circle cx="384.1" cy="268.4" r="1.6"/><circle cx="292.4" cy="134.4" r="1.8"/><circle cx="339.4" cy="188" r="1"/><circle cx="371.2" cy="188.4" r="1.8"/><circle cx="292.6" cy="283.7" r="0.6"/><circle cx="299.8" cy="162.9" r="1.4"/><circle cx="296.1" cy="197.5" r="1.7"/><circle cx="328.6" cy="237.5" r="1.3"/><circle cx="343.2" cy="119.6" r="1.2"/><circle cx="375" cy="219.8" r="0.9"/><circle cx="329.7" cy="193.7" r="1"/><circle cx="342.8" cy="211.3" r="0.6"/><circle cx="307" cy="216.3" r="0.9"/><circle cx="292.3" cy="237.4" r="1"/><circle cx="380.8" cy="196.8" r="0.7"/><circle cx="348.7" cy="137.5" r="1.6"/><circle cx="357.4" cy="236.7" r="0.7"/><circle cx="588.6" cy="244.6" r="0.8"/><circle cx="606.2" cy="91" r="0.8"/><circle cx="634.7" cy="276.6" r="1"/><circle cx="612.2" cy="250.6" r="0.8"/><circle cx="651.7" cy="208" r="1.7"/><circle cx="589.6" cy="197.6" r="1.1"/><circle cx="671.5" cy="135.5" r="1.5"/><circle cx="604.5" cy="184" r="1.8"/><circle cx="610.2" cy="140.8" r="1.7"/><circle cx="655.8" cy="98.2" r="0.8"/><circle cx="609.9" cy="143" r="1.6"/><circle cx="658.6" cy="280.9" r="1.4"/><circle cx="650.9" cy="161.6" r="1.5"/><circle cx="636.8" cy="96.8" r="1.2"/><circle cx="625.3" cy="191.2" r="0.7"/><circle cx="587.9" cy="281.6" r="1"/><circle cx="619.7" cy="114.7" r="1.3"/><circle cx="681" cy="121.1" r="1.2"/><circle cx="637.5" cy="238.2" r="1.3"/><circle cx="610.1" cy="122.9" r="1.5"/><circle cx="593.2" cy="257.9" r="0.6"/><circle cx="604.9" cy="178.6" r="1.6"/><circle cx="650.1" cy="234.2" r="1.5"/><circle cx="660.9" cy="95.3" r="1.6"/><circle cx="600.5" cy="117.5" r="0.6"/><circle cx="588" cy="260.4" r="1.1"/><circle cx="594.1" cy="94.3" r="1.6"/><circle cx="648.2" cy="268.3" r="0.6"/><circle cx="596.8" cy="142.3" r="0.8"/><circle cx="596.8" cy="125.1" r="1.4"/><circle cx="602.7" cy="118.7" r="1.2"/><circle cx="624.4" cy="114.9" r="1.3"/><circle cx="638.3" cy="162.6" r="1.2"/><circle cx="589.2" cy="208" r="0.8"/><circle cx="620.3" cy="86.9" r="1.7"/><circle cx="646.7" cy="163.4" r="1.3"/><circle cx="683.7" cy="111.4" r="1.1"/><circle cx="659.3" cy="159.4" r="1.4"/><circle cx="680.4" cy="93.2" r="0.9"/><circle cx="615.7" cy="235" r="1.5"/><circle cx="658.4" cy="270" r="0.8"/><circle cx="626.3" cy="255.6" r="1.5"/><circle cx="596.8" cy="281" r="1.5"/><circle cx="675.9" cy="157.4" r="1.3"/><circle cx="685.7" cy="264.6" r="1.3"/><circle cx="678.4" cy="284.8" r="1.6"/><circle cx="653.9" cy="277.1" r="0.8"/><circle cx="627.4" cy="197.8" r="0.8"/><circle cx="667" cy="97.4" r="1.4"/><circle cx="614.4" cy="149.6" r="1.3"/><circle cx="605.1" cy="174.5" r="1.6"/><circle cx="688.6" cy="137.5" r="1"/><circle cx="657.8" cy="123" r="1.6"/><circle cx="605.9" cy="196.3" r="1"/><circle cx="585.1" cy="85.2" r="0.6"/><circle cx="619.5" cy="140" r="1.8"/><circle cx="652" cy="98" r="1.5"/><circle cx="609.4" cy="181.3" r="1.5"/><circle cx="675" cy="272.1" r="1.1"/><circle cx="618.4" cy="164.5" r="1"/><circle cx="662.9" cy="177.6" r="1.4"/><circle cx="601" cy="241.6" r="1.8"/><circle cx="606.3" cy="208.3" r="0.8"/><circle cx="588.7" cy="167.8" r="0.8"/><circle cx="661.7" cy="199.5" r="1.4"/><circle cx="686.6" cy="96.7" r="0.7"/><circle cx="588.8" cy="176.9" r="1.6"/><circle cx="656.8" cy="194.6" r="1.6"/><circle cx="624.1" cy="107.6" r="1.4"/><circle cx="587.7" cy="130.9" r="0.6"/><circle cx="602" cy="97.8" r="1.2"/><circle cx="598.5" cy="205.7" r="1.6"/><circle cx="621.2" cy="109.1" r="1.4"/><circle cx="661.5" cy="261.8" r="1.3"/><circle cx="646.1" cy="257.6" r="1.4"/><circle cx="687.4" cy="142.4" r="1.5"/><circle cx="651.4" cy="178.7" r="0.6"/><circle cx="635" cy="137.7" r="1.3"/><circle cx="638.5" cy="187.1" r="0.7"/><circle cx="598.8" cy="206.4" r="1.4"/><circle cx="689" cy="243.5" r="0.9"/><circle cx="632.8" cy="186.1" r="1.6"/><circle cx="626.4" cy="269.1" r="1.2"/><circle cx="626.8" cy="181" r="1"/><circle cx="690" cy="94.3" r="1.1"/><circle cx="593.3" cy="220.6" r="0.8"/><circle cx="600.7" cy="169.7" r="1.3"/><circle cx="665.2" cy="173.9" r="1"/><circle cx="623.6" cy="262.7" r="0.9"/><circle cx="586.2" cy="262.2" r="1.2"/><circle cx="598.9" cy="112.2" r="1.7"/><circle cx="663.7" cy="97.9" r="1.4"/><circle cx="607.5" cy="174.2" r="1.3"/><circle cx="590.3" cy="272.1" r="1"/><circle cx="600.1" cy="241" r="0.7"/><circle cx="588.9" cy="215.4" r="1.2"/><circle cx="679.6" cy="243.1" r="0.8"/><circle cx="589.7" cy="205.7" r="1.2"/><circle cx="616.6" cy="268.4" r="0.9"/><circle cx="652.5" cy="99.7" r="1.7"/><circle cx="684.6" cy="208.6" r="1"/><circle cx="661" cy="265.7" r="1.6"/><circle cx="589.3" cy="185.8" r="0.8"/><circle cx="642.4" cy="275" r="1.6"/><circle cx="611.1" cy="195.4" r="1"/><circle cx="602.7" cy="233.7" r="1.5"/><circle cx="620.4" cy="169" r="1.4"/><circle cx="661.4" cy="177.7" r="0.7"/><circle cx="595" cy="118.9" r="1.6"/><circle cx="637.1" cy="213.9" r="1"/><circle cx="623.7" cy="120.2" r="1.8"/><circle cx="648.6" cy="110.7" r="1.4"/><circle cx="647.8" cy="207.7" r="1.5"/><circle cx="648.9" cy="260.3" r="1.8"/><circle cx="627.7" cy="214.7" r="1"/><circle cx="628.1" cy="158.2" r="1.4"/><circle cx="622" cy="155.4" r="1.6"/><circle cx="669" cy="220.2" r="1.6"/><circle cx="625.5" cy="213.5" r="0.9"/><circle cx="618.1" cy="105.1" r="1.6"/></g><path d="M383 80 C380 150 376 220 371 282 L367 282 C372 220 376 150 379.5 80Z" fill="#e2d6c0" opacity="0.6"/><path d="M588 80 C594 150 600 220 603 283 L607 283 C604 220 598 150 591.5 80Z" fill="#e2d6c0" opacity="0.6"/><path d="M288 246 C315 255 345 264 373 267 L371 284 C345 281 315 272 288 262Z" fill="#ddd1ba" opacity="0.85"/><path d="M603 268 C630 265 660 258 681 248 L683 264 C660 273 630 280 603 285Z" fill="#ddd1ba" opacity="0.85"/><g fill="#f1ebdf" opacity="0.7"><ellipse cx="366" cy="258" rx="2.3" ry="1.7" transform="rotate(36 366 258)"/><ellipse cx="371" cy="266" rx="2.8" ry="2.3" transform="rotate(125 371 266)"/><ellipse cx="307" cy="278" rx="2.2" ry="2.2" transform="rotate(51 307 278)"/><ellipse cx="356" cy="280" rx="3.1" ry="2" transform="rotate(122 356 280)"/><ellipse cx="291" cy="270" rx="3.1" ry="2" transform="rotate(49 291 270)"/><ellipse cx="289" cy="262" rx="1.7" ry="2.6" transform="rotate(141 289 262)"/><ellipse cx="289" cy="263" rx="2.7" ry="2" transform="rotate(8 289 263)"/><ellipse cx="332" cy="263" rx="2" ry="1.7" transform="rotate(159 332 263)"/><ellipse cx="366" cy="278" rx="2.6" ry="1.7" transform="rotate(161 366 278)"/><ellipse cx="296" cy="267" rx="1.7" ry="1.6" transform="rotate(105 296 267)"/><ellipse cx="340" cy="258" rx="2.1" ry="1.9" transform="rotate(75 340 258)"/><ellipse cx="369" cy="274" rx="2.8" ry="2.2" transform="rotate(80 369 274)"/><ellipse cx="345" cy="253" rx="2.6" ry="2.1" transform="rotate(131 345 253)"/><ellipse cx="351" cy="278" rx="2.7" ry="2.7" transform="rotate(113 351 278)"/><ellipse cx="296" cy="253" rx="1.6" ry="1.7" transform="rotate(79 296 253)"/><ellipse cx="298" cy="253" rx="1.8" ry="2.4" transform="rotate(160 298 253)"/><ellipse cx="354" cy="259" rx="3.2" ry="2.7"/><ellipse cx="330" cy="261" rx="3.3" ry="1.8" transform="rotate(89 330 261)"/><ellipse cx="311" cy="274" rx="2.7" ry="2.5" transform="rotate(105 311 274)"/><ellipse cx="316" cy="270" rx="2.4" ry="1.6" transform="rotate(15 316 270)"/><ellipse cx="345" cy="252" rx="1.8" ry="1.8" transform="rotate(136 345 252)"/><ellipse cx="334" cy="265" rx="3.4" ry="1.8" transform="rotate(166 334 265)"/><ellipse cx="320" cy="253" rx="3.2" ry="3" transform="rotate(45 320 253)"/><ellipse cx="348" cy="278" rx="2.5" ry="2.4" transform="rotate(165 348 278)"/><ellipse cx="298" cy="254" rx="2" ry="2.9" transform="rotate(1 298 254)"/><ellipse cx="328" cy="252" rx="2.2" ry="1.9" transform="rotate(165 328 252)"/><ellipse cx="360" cy="266" rx="2.2" ry="2.9" transform="rotate(6 360 266)"/><ellipse cx="328" cy="261" rx="2.4" ry="2.5" transform="rotate(83 328 261)"/><ellipse cx="371" cy="272" rx="1.8" ry="2.3" transform="rotate(144 371 272)"/><ellipse cx="319" cy="249" rx="1.7" ry="2.1" transform="rotate(57 319 249)"/><ellipse cx="359" cy="249" rx="2.1" ry="2.1" transform="rotate(79 359 249)"/><ellipse cx="355" cy="250" rx="2.9" ry="2.4" transform="rotate(86 355 250)"/><ellipse cx="303" cy="252" rx="1.5" ry="2.6" transform="rotate(59 303 252)"/><ellipse cx="304" cy="276" rx="3.4" ry="1.8" transform="rotate(96 304 276)"/><ellipse cx="315" cy="274" rx="3" ry="2" transform="rotate(115 315 274)"/><ellipse cx="330" cy="251" rx="1.7" ry="3" transform="rotate(16 330 251)"/><ellipse cx="366" cy="268" rx="3.4" ry="2.9" transform="rotate(43 366 268)"/><ellipse cx="360" cy="259" rx="3.4" ry="1.8" transform="rotate(117 360 259)"/><ellipse cx="314" cy="263" rx="3.2" ry="2.5" transform="rotate(52 314 263)"/><ellipse cx="295" cy="262" rx="3.1" ry="1.6" transform="rotate(75 295 262)"/><ellipse cx="312" cy="258" rx="2.3" ry="2.9" transform="rotate(152 312 258)"/><ellipse cx="361" cy="262" rx="2.3" ry="2.1" transform="rotate(153 361 262)"/><ellipse cx="317" cy="256" rx="1.6" ry="1.6" transform="rotate(105 317 256)"/><ellipse cx="311" cy="258" rx="3.4" ry="2.3" transform="rotate(94 311 258)"/><ellipse cx="289" cy="271" rx="2.2" ry="2.2" transform="rotate(96 289 271)"/><ellipse cx="296" cy="269" rx="1.5" ry="2.6" transform="rotate(40 296 269)"/><ellipse cx="298" cy="249" rx="2.5" ry="1.5" transform="rotate(7 298 249)"/><ellipse cx="319" cy="263" rx="2.6" ry="1.5" transform="rotate(25 319 263)"/><ellipse cx="322" cy="276" rx="2.8" ry="1.6" transform="rotate(98 322 276)"/><ellipse cx="352" cy="265" rx="3.1" ry="2.8" transform="rotate(36 352 265)"/><ellipse cx="345" cy="264" rx="2.6" ry="2.4" transform="rotate(134 345 264)"/><ellipse cx="332" cy="282" rx="3.3" ry="2.7" transform="rotate(157 332 282)"/><ellipse cx="334" cy="267" rx="3.3" ry="2.4" transform="rotate(33 334 267)"/><ellipse cx="320" cy="280" rx="1.8" ry="2.3" transform="rotate(36 320 280)"/><ellipse cx="364" cy="274" rx="1.7" ry="2.5" transform="rotate(110 364 274)"/><ellipse cx="289" cy="256" rx="3" ry="2.8" transform="rotate(70 289 256)"/><ellipse cx="370" cy="262" rx="2.4" ry="2.9" transform="rotate(150 370 262)"/><ellipse cx="367" cy="266" rx="1.6" ry="2.2" transform="rotate(86 367 266)"/><ellipse cx="303" cy="268" rx="2.3" ry="2.2" transform="rotate(114 303 268)"/><ellipse cx="299" cy="267" rx="2.5" ry="1.8" transform="rotate(98 299 267)"/><ellipse cx="323" cy="264" rx="2.4" ry="2.4" transform="rotate(4 323 264)"/><ellipse cx="367" cy="279" rx="3.2" ry="1.8" transform="rotate(62 367 279)"/><ellipse cx="305" cy="279" rx="2.5" ry="2.6" transform="rotate(168 305 279)"/><ellipse cx="372" cy="259" rx="1.5" ry="1.6" transform="rotate(53 372 259)"/><ellipse cx="372" cy="280" rx="3.4" ry="2.5" transform="rotate(25 372 280)"/><ellipse cx="309" cy="275" rx="3.3" ry="1.9" transform="rotate(26 309 275)"/><ellipse cx="326" cy="257" rx="3.3" ry="2.4" transform="rotate(32 326 257)"/><ellipse cx="351" cy="274" rx="2.5" ry="1.9" transform="rotate(134 351 274)"/><ellipse cx="339" cy="272" rx="3" ry="1.7" transform="rotate(65 339 272)"/><ellipse cx="371" cy="255" rx="2" ry="2.9" transform="rotate(9 371 255)"/><ellipse cx="676" cy="277" rx="3.2" ry="2.7" transform="rotate(145 676 277)"/><ellipse cx="657" cy="278" rx="3.4" ry="2.6" transform="rotate(15 657 278)"/><ellipse cx="606" cy="250" rx="3" ry="2.2" transform="rotate(149 606 250)"/><ellipse cx="681" cy="263" rx="2.9" ry="2.5" transform="rotate(177 681 263)"/><ellipse cx="637" cy="250" rx="3.5" ry="2.6" transform="rotate(96 637 250)"/><ellipse cx="660" cy="275" rx="2.4" ry="1.8" transform="rotate(115 660 275)"/><ellipse cx="638" cy="276" rx="2.9" ry="1.7" transform="rotate(101 638 276)"/><ellipse cx="676" cy="276" rx="1.8" ry="3" transform="rotate(177 676 276)"/><ellipse cx="650" cy="253" rx="3.1" ry="2.5" transform="rotate(180 650 253)"/><ellipse cx="651" cy="273" rx="2.7" ry="2" transform="rotate(86 651 273)"/><ellipse cx="654" cy="260" rx="3.5" ry="2.8" transform="rotate(140 654 260)"/><ellipse cx="675" cy="271" rx="2.7" ry="2.7" transform="rotate(118 675 271)"/><ellipse cx="639" cy="248" rx="2.7" ry="2.5" transform="rotate(156 639 248)"/><ellipse cx="632" cy="250" rx="2.8" ry="2" transform="rotate(125 632 250)"/><ellipse cx="681" cy="268" rx="3.2" ry="2.7" transform="rotate(53 681 268)"/><ellipse cx="640" cy="279" rx="2.3" ry="1.5" transform="rotate(83 640 279)"/><ellipse cx="675" cy="250" rx="2.6" ry="2" transform="rotate(16 675 250)"/><ellipse cx="658" cy="251" rx="2.1" ry="2.1" transform="rotate(31 658 251)"/><ellipse cx="610" cy="265" rx="2.2" ry="1.6" transform="rotate(159 610 265)"/><ellipse cx="680" cy="255" rx="2.6" ry="1.8" transform="rotate(3 680 255)"/><ellipse cx="644" cy="262" rx="2.9" ry="2" transform="rotate(134 644 262)"/><ellipse cx="651" cy="272" rx="2.2" ry="2.1" transform="rotate(72 651 272)"/><ellipse cx="678" cy="274" rx="3.1" ry="3" transform="rotate(34 678 274)"/><ellipse cx="671" cy="273" rx="1.6" ry="1.7" transform="rotate(24 671 273)"/><ellipse cx="669" cy="282" rx="3.1" ry="1.7" transform="rotate(145 669 282)"/><ellipse cx="612" cy="263" rx="2.4" ry="2.1" transform="rotate(80 612 263)"/><ellipse cx="643" cy="257" rx="3.5" ry="2.1" transform="rotate(17 643 257)"/><ellipse cx="661" cy="249" rx="1.7" ry="1.8" transform="rotate(116 661 249)"/><ellipse cx="651" cy="259" rx="2.8" ry="2.9" transform="rotate(53 651 259)"/><ellipse cx="673" cy="279" rx="2" ry="2.7" transform="rotate(22 673 279)"/><ellipse cx="650" cy="276" rx="2.5" ry="2.3" transform="rotate(176 650 276)"/><ellipse cx="613" cy="272" rx="2.6" ry="1.5" transform="rotate(33 613 272)"/><ellipse cx="608" cy="278" rx="3.1" ry="2.2" transform="rotate(114 608 278)"/><ellipse cx="642" cy="263" rx="2" ry="2.5" transform="rotate(1 642 263)"/><ellipse cx="676" cy="271" rx="1.7" ry="2.6" transform="rotate(179 676 271)"/><ellipse cx="636" cy="272" rx="3.2" ry="1.7" transform="rotate(131 636 272)"/><ellipse cx="645" cy="257" rx="2.1" ry="2.8" transform="rotate(89 645 257)"/><ellipse cx="610" cy="261" rx="1.9" ry="2.9" transform="rotate(25 610 261)"/><ellipse cx="679" cy="274" rx="3.5" ry="2.4" transform="rotate(15 679 274)"/><ellipse cx="640" cy="279" rx="2.9" ry="2" transform="rotate(99 640 279)"/><ellipse cx="678" cy="258" rx="2" ry="1.8" transform="rotate(37 678 258)"/><ellipse cx="670" cy="253" rx="2.7" ry="2.1" transform="rotate(140 670 253)"/><ellipse cx="678" cy="259" rx="3.2" ry="2.3" transform="rotate(26 678 259)"/><ellipse cx="640" cy="260" rx="2.7" ry="2.3" transform="rotate(62 640 260)"/><ellipse cx="658" cy="256" rx="2.9" ry="2.7" transform="rotate(51 658 256)"/><ellipse cx="622" cy="253" rx="3.4" ry="2.9" transform="rotate(55 622 253)"/><ellipse cx="646" cy="250" rx="2.2" ry="2.9" transform="rotate(17 646 250)"/><ellipse cx="616" cy="271" rx="1.5" ry="2.9" transform="rotate(21 616 271)"/><ellipse cx="671" cy="250" rx="3.4" ry="1.9" transform="rotate(168 671 250)"/><ellipse cx="621" cy="260" rx="2.1" ry="1.7" transform="rotate(25 621 260)"/><ellipse cx="667" cy="257" rx="3.1" ry="1.9" transform="rotate(100 667 257)"/><ellipse cx="668" cy="257" rx="2.6" ry="2.1" transform="rotate(61 668 257)"/><ellipse cx="659" cy="280" rx="2.9" ry="1.8" transform="rotate(50 659 280)"/><ellipse cx="613" cy="277" rx="1.9" ry="3" transform="rotate(130 613 277)"/><ellipse cx="658" cy="262" rx="1.6" ry="1.7" transform="rotate(161 658 262)"/><ellipse cx="670" cy="278" rx="2.3" ry="3" transform="rotate(43 670 278)"/><ellipse cx="608" cy="263" rx="2.6" ry="3" transform="rotate(62 608 263)"/><ellipse cx="613" cy="251" rx="3.1" ry="2.4" transform="rotate(121 613 251)"/><ellipse cx="636" cy="281" rx="1.5" ry="1.9" transform="rotate(6 636 281)"/><ellipse cx="650" cy="270" rx="3.1" ry="2.7" transform="rotate(35 650 270)"/><ellipse cx="649" cy="263" rx="2.3" ry="2.3" transform="rotate(161 649 263)"/><ellipse cx="672" cy="271" rx="3.1" ry="2.2" transform="rotate(47 672 271)"/><ellipse cx="669" cy="276" rx="3.1" ry="1.8" transform="rotate(88 669 276)"/><ellipse cx="619" cy="263" rx="2.4" ry="2.2" transform="rotate(34 619 263)"/><ellipse cx="626" cy="263" rx="3.2" ry="3" transform="rotate(49 626 263)"/><ellipse cx="673" cy="279" rx="2" ry="2.4" transform="rotate(16 673 279)"/><ellipse cx="681" cy="278" rx="2.6" ry="2.4" transform="rotate(142 681 278)"/><ellipse cx="648" cy="250" rx="2.4" ry="1.6" transform="rotate(106 648 250)"/><ellipse cx="641" cy="255" rx="1.7" ry="2.1" transform="rotate(129 641 255)"/><ellipse cx="638" cy="250" rx="3.1" ry="2.4" transform="rotate(104 638 250)"/></g></g><path d="M381 80 C388 110 396 140 399 165 C401 180 398 200 390 220 C384 238 378 255 375 272 C371 305 366 340 363 372 L330 560 L311 672 C303 720 295 770 290 800 C282 835 272 865 266 880 C235 882 190 890 165 905 C146 916 144 936 162 946 C195 957 255 972 330 981 C400 986 470 986 520 984 C590 981 640 977 680 970 C730 960 765 952 782 944 C792 936 790 924 775 915 C750 900 720 894 700 893 C682 892 672 889 670 875 C664 820 660 780 657 760 C654 720 651 690 649 672 L625 500 L609 372 C606 340 603 312 599 295 C595 275 589 250 581 215 C576 195 573 180 574 170 C576 140 582 110 589 80 Z" fill="#e5ddcc"/><g clip-path="url(#bodyclip)"><rect x="140" y="660" width="660" height="330" fill="url(#folds)" opacity="0.75"/><path d="M266 880 C235 882 190 890 165 905 C146 916 144 936 162 946 C195 957 255 972 330 981 L330 900 Z" fill="#e6dcc8"/><path d="M670 875 C672 889 682 892 700 893 C720 894 750 900 775 915 C790 924 792 936 782 944 C765 952 730 960 680 970 L640 972 L640 880Z" fill="#e6dcc8"/><g filter="url(#blur8)" opacity="0.5"><ellipse cx="288" cy="905" rx="22" ry="45" fill="#d6c6a4"/><ellipse cx="680" cy="905" rx="20" ry="45" fill="#d6c6a4"/></g><rect x="360" y="80" width="260" height="300" fill="#ddd6ca" opacity="0.35"/><g fill="#c3b6a3" opacity="0.8"><path d="M469 258 473 261 484 253 483 252 470 253ZM541 321 539 322 540 329 542 330 544 329 547 323 545 321ZM469 233 473 233 479 227 479 227 471 225 467 229ZM500 133 499 132 491 140 497 143 502 142 502 140ZM535 357 532 368 531 368 524 365 523 363 524 360ZM498 315 494 320 493 320 493 312 496 312ZM464 127 458 119 455 124 459 130 462 129ZM535 334 539 332 541 333 542 341 539 344ZM475 270 485 271 487 274 485 279 482 280 473 273ZM476 137 471 127 467 129 465 131 467 137 469 138ZM429 125 429 123 434 115 439 119 441 124 440 126 435 127ZM443 84 446 85 448 95 443 98 437 98 437 84 437 83ZM531 94 525 89 531 85 533 85 537 92 536 93ZM448 84 450 95 457 93 457 92 453 84ZM521 110 531 111 532 110 532 109 528 104 526 104ZM499 245 492 246 490 235 493 235 500 244ZM430 233 430 226 426 226 420 234 426 236ZM488 215 487 213 493 205 496 204 496 205 498 213ZM426 352 420 356 417 352 419 348 419 347 423 348ZM516 196 514 198 504 196 507 187 517 195ZM487 229 485 226 485 226 487 219 498 218 498 219 500 222 499 227 492 230 489 230ZM484 330 479 329 475 326 483 319 487 323ZM517 247 517 242 514 239 512 239 508 239 505 245 504 246 508 250 515 251ZM547 182 555 187 553 190 550 192ZM503 358 507 354 505 346 504 346 501 356ZM454 369 456 367 454 362 453 362 451 361 445 364 448 370ZM550 280 550 280 552 277 552 276 550 269 547 272 546 276ZM490 302 481 306 482 310 491 309ZM531 335 529 342 537 345 537 345 533 335ZM429 355 432 358 432 362 430 363 423 360 423 358 428 355ZM540 151 544 163 548 164 549 150 547 150ZM535 195 536 190 540 190 542 193 536 197ZM441 232 437 224 432 226 432 232ZM544 120 543 119 536 124 536 126 536 126 542 124ZM429 338 428 336 428 335 434 331 436 330 437 332 433 340ZM546 300 546 300 558 301 558 298 556 291 552 287ZM549 135 548 136 552 143 554 140 553 139ZM481 188 484 188 483 195 478 198 474 196 474 196 474 195 476 191ZM444 142 444 141 446 138 452 139 453 144 449 145ZM518 319 516 321 514 322 509 319 510 317 516 317ZM454 117 454 116 449 116 445 118 446 122 451 122ZM437 178 433 180 433 182 441 185ZM512 98 506 95 503 90 514 86 518 90 517 94ZM475 375 472 374 472 368 475 368ZM516 234 521 229 519 226 519 226 517 226 515 234ZM516 343 513 345 515 351 519 352 520 346ZM448 209 443 211 440 206 440 202 448 198 448 198 450 205ZM436 131 441 130 443 135 441 139 438 139 436 138ZM544 312 541 319 545 320 547 316ZM464 273 465 273 469 271 471 268 470 264 467 262 464 262 460 268ZM520 139 526 140 526 138 522 132ZM434 258 430 259 427 260 425 262 429 269 431 268 435 264ZM464 244 468 245 474 243 471 237 467 236 464 243ZM446 251 442 250 440 253 439 255 446 259 447 258ZM471 328 469 333 470 336 474 336 477 331 473 327 473 327ZM459 93 460 93 471 94 470 99 462 99 459 94ZM529 238 525 237 526 232 530 232 530 232 532 237ZM513 330 512 330 510 329 514 324 516 324 516 326ZM506 162 505 160 506 157 509 155 514 154 518 156 517 159 512 164ZM537 254 543 249 549 259 549 261 549 261 538 261 538 261 536 256ZM459 185 454 193 462 193 462 186ZM492 103 492 102 499 104 498 107 496 108ZM443 234 442 233 431 234 428 237 430 241 440 240ZM449 360 443 354 435 358 436 363 438 364 443 363ZM531 207 526 212 523 213 520 211 526 204ZM425 335 420 328 420 335ZM473 352 478 344 477 343 471 345 472 352ZM513 302 512 300 514 286 518 285 521 289 520 297 517 303ZM480 139 482 138 482 137 478 123 477 123 473 127 478 137ZM513 282 516 281 516 280 513 276 507 271 503 270 500 273 500 273 512 283ZM551 341 544 342 543 332 546 332 555 332 555 334 555 339ZM524 367 531 371 531 373 529 375 524 374ZM466 124 460 116 460 116 461 113 462 113 469 114 472 119 469 122ZM479 341 476 338 479 332 484 333 486 337 486 341 480 342ZM467 324 457 323 461 315 465 317ZM421 152 416 150 420 142 421 142 423 143 425 147 426 148 425 150ZM448 184 446 188 446 188 449 194 449 194 451 194 457 184 457 183 448 184ZM497 294 504 302 503 304 499 304 495 297 496 295 496 295ZM542 223 541 217 534 222 536 227 540 226ZM538 179 544 179 544 180 540 188 536 187 535 186 536 180ZM536 249 532 246 532 241 534 240 539 241 541 243 541 245ZM523 204 518 209 517 209 515 207 515 206 516 202 518 200ZM482 356 489 350 491 353 489 360 484 358ZM480 377 480 377 485 378 486 373 484 371 482 371ZM438 210 441 214 439 216 438 218 438 219 434 216 434 214ZM482 211 482 206 490 204 484 213ZM537 152 541 162 537 162 528 153 529 153 535 151ZM448 278 448 282 449 287 450 288 453 280ZM497 328 497 329 489 333 487 330 490 324 492 324 493 324ZM426 159 426 155 425 153 422 155 422 159 423 160 426 161ZM470 325 469 324 467 317 468 317 472 319 472 325ZM460 295 458 291 453 290 452 300ZM417 105 417 111 419 117 424 119 431 110 430 104 420 103 417 104ZM424 201 425 200 435 202 435 206 431 210 424 203ZM462 152 462 152 462 153 463 156 468 158 469 155ZM505 166 512 167 511 171 505 173ZM437 176 439 172 439 170 431 170 429 173 429 176 430 177 432 178ZM515 310 511 311 511 311 513 305 516 306 517 308ZM470 195 466 193 465 193 465 187 467 186 471 194ZM462 164 463 160 468 161 471 166 465 165ZM489 186 487 187 486 195 495 196ZM453 359 456 349 446 344 445 345 445 348 444 352 451 359ZM476 300 480 293 478 288 477 288 473 291 470 297ZM431 353 435 356 441 352 442 349 433 350ZM459 315 458 312 454 312 451 320 454 322 455 322 455 322ZM446 104 443 101 437 101 435 103 435 110 441 115 446 113ZM546 310 545 304 559 304 561 306 559 312 550 314ZM501 292 506 289 511 288 511 287 509 298 507 299ZM542 126 537 128 540 130 542 128ZM512 334 511 333 510 336 510 342 511 342 515 340 515 336ZM467 328 466 332 460 333 458 331 457 326 457 326 466 327ZM534 171 536 177 534 178 530 176 532 172ZM480 104 480 98 476 94 475 95 473 101 474 107 480 104ZM446 271 444 268 438 265 433 270 441 274 446 271ZM499 259 502 257 503 253 500 250 493 251 490 253 491 257 495 259ZM467 86 464 91 473 92 474 91 475 89 475 89 471 86ZM536 264 528 274 534 275 536 274 539 270 537 264ZM508 316 509 313 509 312 505 310 503 314 507 318 507 317ZM548 117 547 116 547 115 549 108 553 107 557 111 558 116 553 119ZM531 260 523 260 525 272 526 271 533 263ZM503 329 507 330 508 331 507 334 502 338 501 331 502 329ZM457 132 453 136 446 134 443 129 445 125 452 125ZM501 156 495 153 491 154 488 158 489 162 499 159ZM535 283 531 278 526 277 524 278 521 281 520 282 523 286 528 289ZM493 366 492 371 494 372 498 368 498 367ZM433 147 436 141 434 139 432 140 427 147 427 148ZM514 332 518 328 523 331 521 333 517 334ZM510 283 498 273 495 275 504 285ZM428 335 426 326 433 330ZM422 212 426 216 430 215 430 213 423 206ZM486 368 490 365 491 366 490 371 488 371ZM433 87 422 92 423 98 431 99 433 98ZM518 122 514 117 514 117 516 113 518 113 528 114 527 119 518 122ZM423 371 418 366 421 363 429 366 427 370ZM429 153 433 155 437 152 437 152 433 149 429 150 428 151ZM492 362 494 355 499 359 501 360 501 362 500 363 499 364 494 364 493 363ZM481 366 481 360 480 358 478 358 477 362 477 364ZM538 169 540 167 543 166 546 167 548 169 544 175 540 175ZM514 367 514 377 516 379 517 379 521 374 521 367 520 365ZM549 324 547 329 554 330 555 326ZM419 171 418 170 418 164 419 163 422 167 425 171ZM464 176 469 178 466 182 463 183 461 182 460 181 460 176ZM425 127 421 130 411 133 418 122 419 121 424 124 425 126ZM440 330 443 334 452 325 448 323 441 321 439 328ZM451 217 451 218 442 217 443 214 449 212ZM532 197 524 193 522 197 521 198 527 202 531 204 532 204 533 199ZM514 138 512 137 511 133 517 125 517 125 519 128ZM502 214 511 208 511 207 499 205 501 214ZM474 325 474 325 482 318 480 315 474 318ZM515 110 513 101 518 97 523 103 517 109ZM467 297 470 291 464 283 460 291 462 294 465 297ZM557 223 559 219 556 210 551 210 551 210 554 221ZM455 255 458 256 462 259 457 267 456 267 452 260ZM544 240 542 238 542 229 544 226 546 228 549 232 548 235 545 240ZM531 229 534 227 532 222 530 223 529 223 531 229ZM467 314 463 312 461 309 466 301 468 301 474 304 475 306 468 313ZM474 200 471 206 474 211 479 210 479 205 477 202ZM418 180 419 173 425 173 426 173 427 176 419 181ZM480 108 475 110 474 113 477 118 479 119 485 118 486 117ZM512 273 511 265 508 265 508 269ZM502 134 509 135 510 138 504 139ZM545 106 540 104 536 109 536 110 542 113ZM539 286 537 296 537 297 531 292 539 286ZM523 233 522 232 517 237 520 239 523 238ZM515 316 510 316 511 313 515 312ZM454 204 452 198 453 197 462 196 462 197 459 206 459 206ZM428 161 432 159 432 159 430 166 428 163ZM504 236 501 231 495 233 501 241ZM482 143 482 143 483 142 486 142 489 147 489 151 485 155 483 154 482 143ZM484 165 485 164 484 159 482 157 475 156 474 157 472 160 475 167 477 168 484 166ZM475 353 479 355 481 355 489 348 489 347 486 343 480 344ZM542 189 546 182 546 182 548 192 547 193 544 191ZM471 353 470 353 469 353 461 348 463 344 468 343 470 345ZM498 124 492 121 489 119 490 117 491 116 497 111 499 111 508 117 508 118ZM501 132 500 130 500 126 511 119 515 124 510 133ZM446 273 442 276 441 279 447 281 447 277ZM469 149 468 149 464 151 472 154 473 153 472 151ZM520 182 520 182 521 187 521 189 518 193 508 184 508 184ZM440 150 442 143 441 141 437 141 434 147ZM427 136 425 130 422 133 422 139 423 140ZM458 226 462 217 463 217 469 221 470 223 464 227ZM506 176 506 176 506 179 507 181 517 179 516 177 512 174ZM501 316 505 319 502 325 501 326 495 322 499 316ZM539 140 537 148 539 149 545 147 540 140 539 140ZM451 251 454 254 451 259 449 258 448 251ZM540 297 540 297 543 298 549 286 548 286 548 286 546 286 540 295ZM431 138 433 137 433 130 427 128 427 129 428 136ZM440 248 438 250 430 244 430 242 440 242ZM446 288 438 292 438 292 434 288 440 283 444 284ZM485 103 488 100 490 99 490 101 490 102 488 105ZM490 113 495 109 491 104 489 107ZM488 337 489 341 491 344 499 341 499 341 498 333ZM435 341 439 334 442 337 444 341 444 342 444 343 436 342ZM534 370 533 371 533 373 538 376 544 371ZM490 312 484 313 484 314 485 316 488 320 490 319 490 312ZM448 272 456 269 456 269 462 276 454 278 449 276 448 272ZM436 255 437 252 429 246 429 247 430 255 436 255ZM493 292 486 282 483 284 481 286 483 292 493 292ZM473 174 475 171 473 169 466 168 466 174 471 176 471 176ZM494 201 492 201 484 203 482 200 487 197 494 198 495 199ZM514 167 520 162 521 165 519 174 514 171ZM477 242 484 232 481 228 473 236 476 242ZM478 376 481 369 480 369 477 367 476 368 476 375ZM513 323 508 328 504 326 507 320 508 320ZM516 138 519 129 520 130 520 132 519 138 516 139ZM427 197 427 197 437 199 444 196 441 190 431 192ZM456 360 466 354 459 350 458 351 455 359ZM501 179 491 180 487 169 487 168 501 175ZM472 220 472 222 480 224 483 218 482 216 480 214 474 215 473 216ZM526 320 525 328 524 328 520 325 519 323 520 321ZM464 138 459 144 457 143 456 137 459 134 462 133ZM539 264 542 269 543 269 545 269 549 266 549 263ZM442 186 444 188 444 188 432 190 434 183ZM482 106 484 106 487 108 488 114 487 115 482 106ZM469 220 464 216 467 214 471 215ZM446 260 438 257 438 257 439 264 443 266ZM448 164 446 167 452 171 455 171 456 167ZM484 171 479 173 477 176 483 184 486 183 488 182 488 181ZM447 339 455 333 453 326 453 326 445 334ZM458 111 449 105 449 114 456 114ZM513 221 504 220 502 216 513 209 516 212ZM451 261 455 268 447 270 445 267 448 261 448 261ZM439 154 441 155 437 160 434 158 434 158 434 157ZM495 289 501 286 493 278 491 278 489 282 495 290ZM471 178 471 179 468 183 472 194 475 189ZM457 239 452 233 456 229 457 229 463 230 465 234 462 241ZM433 327 426 324 423 320 422 319 429 317 435 316 437 320 435 326ZM438 276 432 273 429 274 429 276 427 283 430 284 437 279ZM531 252 528 249 521 250 520 253 521 255 521 256 530 255ZM526 316 520 317 519 316 518 312 520 310 525 311 527 311 527 316ZM475 176 481 185 476 188 472 178ZM474 315 480 313 479 311 478 308 477 308 471 314ZM455 370 452 376 454 380 456 377 457 370 457 370 456 369ZM496 132 490 138 488 138 486 138 486 137 490 127 495 129ZM470 367 470 374 464 373 459 369 459 368 467 364 468 365ZM491 148 495 148 495 151 491 151ZM430 140 427 145 424 142 428 138ZM475 366 472 366 470 364 476 363 476 366ZM543 89 540 80 535 84 539 91ZM518 276 521 273 519 261 518 261 513 265 515 273ZM505 151 502 145 499 146 498 148 498 150 503 153ZM552 131 551 132 554 137 555 138 557 135 553 130ZM437 366 440 373 439 377 435 378 434 378 429 371 432 367 435 365ZM471 214 473 213 468 206 467 207 468 213ZM502 182 492 184 491 185 497 195 498 196 500 195 504 185 504 184ZM494 351 492 348 492 346 499 344 502 345 500 355ZM427 164 429 167 429 168 427 171 426 171 424 167 424 163ZM500 263 501 268 497 270 495 262ZM479 143 472 147 474 149 479 144ZM550 317 558 315 558 320 556 323 549 321 548 320ZM442 155 438 161 443 166 444 165 445 162 446 160 444 156ZM436 221 436 222 431 224 427 224 427 222 427 219 432 217ZM431 182 429 180 424 189 425 194 429 190 431 183ZM528 138 532 135 537 139 537 139 528 141 528 140ZM456 96 459 101 458 107 457 108 450 103 447 100 451 98ZM460 254 463 257 467 257 468 252 467 248 464 246ZM529 240 524 240 520 241 520 248 528 247ZM449 290 451 291 450 301 446 304 442 304 439 295 449 290ZM522 223 527 222 527 221 526 215 523 216 521 222ZM536 141 528 143 528 150 535 149ZM529 307 534 300 534 300 529 295 524 291 523 298 527 306ZM530 230 528 223 521 225 523 229 525 230ZM540 285 545 285 539 294ZM513 141 511 139 504 141 504 143 508 151 514 150 514 141ZM537 200 544 196 547 198 548 207 548 207 543 209 536 205ZM424 284 425 276 413 271 418 282 423 284ZM485 255 485 255 486 258 485 267 476 266 475 262ZM469 362 469 362 471 355 472 355 473 355 476 357 475 361ZM451 310 447 319 442 317 440 314 442 308 446 308ZM543 117 535 123 532 119 533 114 534 112 542 116ZM430 351 431 349 433 344 432 343 429 342 426 347 429 351ZM458 175 457 180 450 181 453 174 456 173ZM491 146 489 142 491 141 495 144 494 146ZM458 366 459 366 466 363 468 356 467 356 457 362ZM434 348 442 347 442 345 436 344ZM502 166 500 163 490 166 490 167 501 173 502 173ZM538 137 534 134 534 131 536 130 536 130 539 132 540 135 539 136 539 136ZM556 229 557 225 554 224 549 226 552 230ZM531 315 538 318 539 317 542 311 541 305 541 305 537 303 532 310ZM516 222 515 221 517 214 518 214 521 215 519 222ZM470 252 469 247 475 244 476 244 483 251ZM532 193 533 189 532 188 525 188 525 190ZM446 370 441 372 438 366 443 364ZM528 178 523 181 524 186 533 186 533 180ZM471 198 466 197 462 206 467 205 468 204 471 199ZM468 337 467 334 460 336 463 342 467 340ZM525 332 526 332 529 334 527 341 526 341 523 334ZM453 215 459 213 458 209 453 207 451 211ZM517 337 517 341 522 344 524 343 521 335ZM494 299 492 301 493 309 493 309 496 309 498 306ZM522 127 520 125 530 122 532 124 532 127 531 128 522 127ZM479 142 479 142 477 140 471 141 470 146 471 146ZM493 295 483 295 478 302 479 304 480 304 489 300 492 298ZM484 135 489 123 486 121 480 122ZM544 246 545 243 545 243 555 245 556 251 551 258ZM426 335 426 335 421 326 420 322 425 326 427 334ZM472 275 479 282 477 284 476 284 467 278 467 278ZM480 144 482 156 475 154 474 152ZM513 111 511 115 501 108 501 104 504 98 511 101ZM516 142 517 151 521 153 525 151 525 151 526 143 526 142 519 141ZM453 249 456 243 461 245 462 245 458 253 456 252ZM513 200 512 206 498 203 498 201 499 199 501 197ZM521 129 531 130 531 134 527 137 523 131ZM422 161 423 166 419 162 420 160ZM456 225 460 217 459 216 453 218 453 219 453 221 455 225ZM546 119 553 122 553 127 551 128 544 128 544 125Z"/></g><g fill="#c6baa8" opacity="0.65"><path d="M370 127 367 127 370 120 374 120ZM410 171 406 173 403 173 397 166 400 162 406 164ZM416 92 419 90 416 84 410 83 408 90 413 92ZM379 319 379 326 388 328 390 327 390 324ZM377 147 376 147 376 154 384 152 386 149 386 149ZM379 200 385 217 385 217 392 215 394 212 393 207 381 200ZM403 302 400 303 400 304 402 310 409 313 410 313 413 305 413 305ZM390 142 388 147 376 145 380 140 387 141ZM403 113 398 111 395 110 395 107 395 105 399 100 403 106 404 109ZM393 295 393 293 389 290 387 289 378 293 384 296ZM398 192 402 200 404 200 408 196 404 191 400 192ZM406 366 406 366 410 365 413 367 413 369 409 373 409 373ZM372 359 377 363 374 370 368 372 368 364 368 363ZM388 222 393 220 396 230 396 230 389 227ZM415 282 412 273 413 269 420 268 426 273 417 284ZM395 319 399 315 405 318 403 323 394 325 394 325 394 323ZM377 328 377 329 374 334 374 337 376 343 382 342 386 330ZM402 343 402 350 402 350 396 345 400 339 400 339ZM388 279 395 290 395 289 395 285 392 278ZM395 182 391 187 390 188 396 189 397 188 397 181 396 181ZM361 303 368 304 370 310 366 311 360 308 358 307 358 306 360 304ZM415 100 415 100 415 96 413 96 408 103 409 106ZM375 110 365 109 364 107 363 104 364 103 375 106ZM371 126 375 120 375 120 378 119 378 120 374 127 371 127ZM379 308 379 309 376 310 374 309 372 303 374 296 375 296 381 299ZM373 200 373 200 375 216 381 215 376 200ZM370 129 369 136 374 133 374 130ZM413 141 413 139 413 138 411 137 404 142 409 144 409 145ZM393 125 398 116 404 118 404 118 401 126 397 129ZM421 234 416 231 411 231 410 242 411 244ZM389 255 395 254 396 254 392 245 379 243 379 244ZM380 279 380 282 373 289 373 289 373 288 373 278 373 277 377 275ZM408 152 407 149 407 149 400 155 400 157 407 159ZM409 220 414 221 415 228 410 228 406 228 406 223ZM386 375 386 375 379 372 381 366 384 367 386 369ZM413 336 418 336 418 337 413 343 412 339ZM374 292 375 292 384 289 381 284 373 291ZM411 334 410 339 405 338 403 337 407 332 410 334ZM411 118 417 126 425 123 424 120 417 117ZM410 206 407 201 411 198 416 197 417 200ZM371 293 370 301 363 300 364 294 371 293 371 293ZM421 159 412 156 411 162 414 168 415 168 418 163 421 159ZM413 177 409 179 408 188 411 191 416 191 416 191 418 181 414 178ZM370 348 373 344 370 339 363 339 360 342 361 346ZM378 83 375 85 373 91 380 91 382 85 379 83ZM399 287 399 283 404 277 408 276 411 283ZM412 362 415 364 419 356 417 355 412 359ZM385 357 375 355 375 358 379 361 383 362ZM397 216 397 216 396 218 399 228 403 226 403 222ZM381 167 380 167 376 160 376 159 384 157 386 164 385 165ZM412 291 412 289 412 288 410 287 400 291 399 292 399 292 399 294 400 297 403 296ZM378 101 371 96 372 95 380 95 380 96ZM367 290 367 291 361 292 357 290 355 289 355 287 363 286ZM366 94 368 93 369 93 370 87 366 87 365 91ZM363 110 363 111 362 116 358 114 357 112 362 108ZM373 219 371 202 369 207 367 222 369 222ZM380 103 383 98 391 103 390 105 380 103ZM383 134 379 136 380 138 386 139ZM364 259 364 252 366 250 368 259 364 260ZM421 207 420 210 418 212 413 209 412 208 419 203 421 207Z"/></g><g fill="#c6baa8" opacity="0.65"><path d="M563 140 556 140 555 140 554 141 553 142 553 144 561 148 561 147ZM590 135 595 131 591 123 587 124 587 124 586 127 590 135ZM581 333 579 334 577 336 579 342 585 342 586 340 585 335ZM611 362 612 356 610 351 605 360ZM587 329 585 332 582 331 583 330 586 327ZM590 232 590 230 591 224 593 230 593 232ZM607 262 609 261 613 268 613 268 611 269 606 268 605 264ZM598 230 596 231 596 233 598 235 600 231ZM614 238 612 240 607 237 611 231 615 236ZM607 229 607 231 605 235 601 237 601 235 603 232ZM598 84 603 84 603 85 597 88ZM555 308 560 306 566 312 559 316 555 308ZM573 204 575 197 571 195 571 201ZM580 179 575 177 575 173 577 170 582 170 585 173 585 178 582 180ZM562 372 565 379 567 376 567 372ZM574 371 580 373 575 378 570 376 569 371 570 371ZM600 338 606 341 606 342 594 350 589 343 590 341 596 336ZM595 208 589 198 596 196 598 201ZM567 139 565 147 580 146 571 136 570 136 568 137ZM557 302 560 305 554 307ZM554 263 560 255 562 256 564 268 563 268 557 267ZM580 306 588 301 589 302 587 309ZM599 162 605 159 610 163 607 167 607 167 599 165ZM602 336 607 338 607 338 608 337 604 330 602 331ZM593 96 593 97 597 95 595 91 591 90 591 90ZM585 227 588 228 589 222 589 220 586 219 584 224ZM581 209 585 214 586 214 589 215 593 214 593 211 587 201 587 201ZM563 221 565 223 569 224 572 223 581 216 576 211 574 211 564 216ZM570 365 575 362 577 359 575 358 570 362ZM577 236 577 240 575 240 565 230 566 228 569 228 576 233ZM567 120 567 120 569 128 574 121 568 119ZM568 359 563 356 564 355 569 350 571 350 574 356ZM575 101 575 104 575 105 572 107 565 102 565 100 571 99 575 101ZM575 137 583 132 588 140 585 146 585 146 584 146 584 146ZM591 97 589 96 590 90ZM609 335 611 330 609 326 606 326 605 328ZM561 131 559 124 554 126 557 130ZM578 356 576 349 580 346 586 346 591 352 590 359 589 360 580 357ZM556 289 556 283 558 282 564 288 561 289ZM588 239 582 243 586 246 593 247 596 244 596 242ZM563 234 573 243 565 249 563 250 561 249 557 246ZM589 237 597 240 597 239 597 237 594 235 591 235ZM580 95 583 87 580 84 576 85 574 88 573 95 577 97ZM600 309 598 307 598 306 602 303 605 304 607 304 604 311ZM584 152 585 161 589 155 586 151 585 151ZM578 182 573 180 571 181 572 189 574 189ZM555 162 549 156 548 154 560 152 560 152 559 157ZM559 116 563 119 564 118 565 118 559 108 556 111ZM570 306 570 303 564 301 560 302 561 303 562 305 567 309 568 309ZM569 200 562 197 563 194 564 193 569 193 570 194ZM573 112 578 109 584 119 583 121 577 120 569 118ZM581 282 580 287 588 291 592 288 591 286 583 282ZM584 279 594 275 593 283ZM606 86 606 87 608 94 609 95 610 94 613 92 610 84 609 82 606 85ZM590 103 590 106 580 105 579 101ZM577 232 569 226 573 225 578 228ZM565 137 557 137 558 132 562 133 566 136ZM607 173 609 179 607 181 602 183 600 182 601 177 607 173ZM607 311 610 306 616 304 620 306 609 313 608 313ZM577 304 586 299 587 296 576 291 575 292 575 301 576 304ZM583 252 579 258 568 250 577 244 578 243 579 244 583 248ZM602 187 602 188 607 192 609 189 607 185ZM594 334 589 338 587 334 589 331 593 332ZM601 264 602 270 599 272 597 271 595 266ZM600 326 602 325 602 324 601 321 597 321 596 322 598 325ZM607 129 608 116 608 116 615 121 613 129ZM557 298 555 294 556 293 561 293 560 297 557 298ZM598 286 598 286 603 282 603 282 599 276 597 276 597 276 596 284ZM601 358 596 358 596 352 605 346 606 349ZM579 183 576 190 581 192 582 192 582 184ZM557 185 562 182 564 183 563 190 561 191 557 186ZM590 98 591 99 590 102 580 100 580 100 583 97 588 98ZM590 87 590 86 593 82 596 82 597 83 595 88 595 89ZM598 312 596 310 591 314 591 318 594 319 595 319ZM596 101 595 104 595 106 599 112 604 111 605 110 605 109 606 101 605 100 600 99ZM598 146 588 147 591 140 591 140 599 143ZM590 312 596 308 596 306 591 303 589 311ZM566 86 571 88 570 95 561 96 559 94 561 86ZM580 196 577 198 575 204 576 206 578 206 583 198 582 196Z"/></g><g fill="#b6ab9a" opacity="0.5"><circle cx="530.6" cy="294" r="0.8"/><circle cx="399.1" cy="232.5" r="1.3"/><circle cx="510.8" cy="107.4" r="0.8"/><circle cx="506.3" cy="214.1" r="1.3"/><circle cx="550" cy="263.4" r="1.5"/><circle cx="356.6" cy="250.6" r="1.2"/><circle cx="546.4" cy="112.8" r="1.4"/><circle cx="495.5" cy="124.4" r="0.8"/><circle cx="511.7" cy="185" r="1.5"/><circle cx="525.2" cy="233.5" r="1.1"/><circle cx="502.8" cy="111.9" r="1.4"/><circle cx="552.1" cy="201.2" r="1.3"/><circle cx="451.6" cy="138.9" r="0.9"/><circle cx="535" cy="368.6" r="1.2"/><circle cx="475.5" cy="161.2" r="0.9"/><circle cx="404.3" cy="300.5" r="1.4"/><circle cx="506.7" cy="133.9" r="1.2"/><circle cx="566.8" cy="92.6" r="1.4"/><circle cx="589.9" cy="308.7" r="1.2"/><circle cx="511.6" cy="156.8" r="0.8"/><circle cx="522.2" cy="344.8" r="1.1"/><circle cx="577.4" cy="139.8" r="1.5"/><circle cx="578.4" cy="295.4" r="0.9"/><circle cx="487.6" cy="253.4" r="0.9"/><circle cx="497.2" cy="114" r="1.2"/><circle cx="576.5" cy="167.3" r="1.6"/><circle cx="456.4" cy="338" r="1.3"/><circle cx="511.5" cy="155.4" r="0.8"/><circle cx="564.3" cy="170.6" r="1.5"/><circle cx="575.6" cy="322.9" r="0.7"/><circle cx="540.9" cy="257.9" r="1"/><circle cx="587.7" cy="251.9" r="1"/><circle cx="606.8" cy="91.1" r="1.1"/><circle cx="581.7" cy="353.8" r="1.1"/><circle cx="573.1" cy="286.2" r="1.3"/><circle cx="462.9" cy="324.6" r="0.7"/><circle cx="465.4" cy="292.8" r="1.2"/><circle cx="452.4" cy="283.5" r="1.4"/><circle cx="502.6" cy="125.8" r="1.2"/><circle cx="415.3" cy="237.3" r="1.2"/><circle cx="482.1" cy="355.3" r="1"/><circle cx="516.5" cy="163.1" r="1.4"/><circle cx="501.4" cy="306.2" r="1.1"/><circle cx="540.9" cy="343.5" r="1.2"/><circle cx="464.4" cy="231.2" r="1.2"/><circle cx="515.7" cy="183.2" r="0.8"/><circle cx="456.6" cy="176.9" r="1.4"/><circle cx="499.3" cy="332.1" r="0.9"/><circle cx="508" cy="226" r="1.5"/><circle cx="284" cy="279.9" r="1"/><circle cx="516.4" cy="334.5" r="1.2"/><circle cx="444.8" cy="99.5" r="1.1"/><circle cx="471.6" cy="198.6" r="1.3"/><circle cx="380.8" cy="171.4" r="0.7"/><circle cx="554.4" cy="137.8" r="1.2"/><circle cx="584.6" cy="149.4" r="1"/><circle cx="445.6" cy="244.2" r="0.9"/><circle cx="429" cy="348.2" r="0.8"/><circle cx="525.2" cy="333" r="1"/><circle cx="317.6" cy="167.9" r="1.4"/><circle cx="346.6" cy="322.1" r="0.7"/><circle cx="365.8" cy="248.7" r="1.1"/><circle cx="559.7" cy="283" r="1"/><circle cx="665.5" cy="234.3" r="1.2"/><circle cx="528.9" cy="184.9" r="1.1"/><circle cx="463.8" cy="213.5" r="0.9"/><circle cx="494.3" cy="342.6" r="1.1"/><circle cx="546.9" cy="270" r="1.3"/><circle cx="524" cy="264.6" r="1.3"/><circle cx="470.5" cy="290.1" r="1"/><circle cx="311.4" cy="229.1" r="1.6"/><circle cx="563.7" cy="261.2" r="1.3"/><circle cx="313.5" cy="199.1" r="1.1"/><circle cx="644.5" cy="126.8" r="1.5"/><circle cx="443.4" cy="129.1" r="0.9"/><circle cx="505.9" cy="188.3" r="0.8"/><circle cx="356.6" cy="348.3" r="1.6"/><circle cx="465.1" cy="313.8" r="1.5"/><circle cx="544" cy="364" r="1"/><circle cx="531.4" cy="283.5" r="1.1"/><circle cx="368" cy="263.9" r="1.4"/><circle cx="506.7" cy="154.6" r="0.8"/><circle cx="572.8" cy="222.9" r="1"/><circle cx="505.7" cy="294.1" r="1.1"/><circle cx="445.4" cy="130.9" r="1.4"/><circle cx="507.3" cy="226" r="0.9"/><circle cx="570.7" cy="100.9" r="1"/><circle cx="519" cy="200.3" r="0.8"/><circle cx="637.2" cy="161.3" r="1.5"/><circle cx="497.4" cy="94.3" r="0.9"/><circle cx="444.3" cy="266.8" r="0.9"/><circle cx="491.8" cy="300.5" r="1.6"/><circle cx="506.2" cy="97.6" r="0.7"/><circle cx="462.3" cy="343.9" r="1.4"/><circle cx="437.9" cy="219" r="1.5"/><circle cx="456.3" cy="245.8" r="0.9"/><circle cx="478.2" cy="302.5" r="1.1"/><circle cx="444.7" cy="238.4" r="0.7"/><circle cx="536.6" cy="108.9" r="0.9"/><circle cx="368.4" cy="266" r="0.9"/><circle cx="549.5" cy="351.9" r="1.4"/><circle cx="490" cy="281.8" r="0.9"/><circle cx="672" cy="161.5" r="1.1"/><circle cx="498.5" cy="309" r="1"/><circle cx="466.6" cy="327.8" r="1.5"/><circle cx="500.5" cy="148.5" r="1"/><circle cx="501" cy="325.4" r="1.1"/><circle cx="433.9" cy="254.1" r="1.5"/><circle cx="543.7" cy="236" r="1.3"/><circle cx="493.3" cy="242" r="1.2"/><circle cx="417.2" cy="227.7" r="1.2"/><circle cx="562.6" cy="304.1" r="1.1"/><circle cx="465.3" cy="188" r="1.2"/><circle cx="472.1" cy="347.1" r="1.1"/><circle cx="548.2" cy="124.6" r="1.2"/><circle cx="397.8" cy="172.7" r="1.4"/><circle cx="494.1" cy="134.5" r="1.2"/><circle cx="411.3" cy="220.9" r="1.1"/><circle cx="563.4" cy="319.7" r="1.1"/><circle cx="496.5" cy="90.1" r="1.2"/><circle cx="518.3" cy="149.9" r="1.4"/><circle cx="559.5" cy="168.4" r="1.4"/><circle cx="419.5" cy="269.4" r="1.2"/><circle cx="489.3" cy="223.8" r="1.1"/><circle cx="516.8" cy="143" r="0.8"/><circle cx="432.5" cy="335.5" r="1.5"/><circle cx="553" cy="254.8" r="0.8"/><circle cx="442.4" cy="168.4" r="1.3"/><circle cx="527.6" cy="187.4" r="1.5"/><circle cx="543.5" cy="135" r="1.5"/><circle cx="522.4" cy="220.5" r="1.2"/><circle cx="488.5" cy="104.3" r="1.2"/><circle cx="497.9" cy="245.5" r="1.5"/><circle cx="479" cy="254.4" r="1.1"/><circle cx="452.6" cy="167.2" r="0.9"/><circle cx="416.7" cy="162.8" r="0.9"/><circle cx="509.5" cy="166.5" r="1.4"/><circle cx="422" cy="274.2" r="1.2"/><circle cx="492.7" cy="374" r="0.8"/><circle cx="462" cy="282.5" r="1.4"/><circle cx="465.7" cy="358.6" r="1"/><circle cx="455.9" cy="271.1" r="1.2"/><circle cx="369.8" cy="346.4" r="1.5"/><circle cx="377.6" cy="304.2" r="0.9"/><circle cx="433.8" cy="277.5" r="1.5"/><circle cx="579.4" cy="216.1" r="1.4"/><circle cx="574.8" cy="275.6" r="1.2"/><circle cx="478.2" cy="224.1" r="1"/><circle cx="563.8" cy="358.3" r="1.2"/><circle cx="522.4" cy="302.2" r="0.8"/><circle cx="528.9" cy="228.4" r="1.6"/><circle cx="440.9" cy="184.4" r="0.9"/><circle cx="540.4" cy="124.2" r="1.2"/><circle cx="429.4" cy="162.5" r="1.2"/><circle cx="488" cy="245" r="1.1"/><circle cx="506.3" cy="302" r="0.9"/><circle cx="415.8" cy="216.8" r="1.3"/><circle cx="546.7" cy="323" r="0.8"/><circle cx="446.2" cy="282.4" r="1.6"/><circle cx="527.9" cy="300.8" r="1.3"/><circle cx="510.3" cy="201.5" r="0.8"/><circle cx="552.2" cy="116.8" r="1"/><circle cx="453.9" cy="172.8" r="0.9"/><circle cx="522.9" cy="130.7" r="1.3"/><circle cx="458.5" cy="161.5" r="0.9"/><circle cx="597.4" cy="352.7" r="0.9"/><circle cx="547.3" cy="163.3" r="1"/><circle cx="533.4" cy="216.4" r="0.9"/><circle cx="472.1" cy="249.3" r="1.1"/><circle cx="491" cy="189.3" r="1.6"/><circle cx="371.6" cy="87.8" r="1.4"/><circle cx="495.5" cy="100.2" r="0.8"/><circle cx="539.3" cy="284.3" r="0.8"/><circle cx="464.4" cy="252.3" r="1.4"/><circle cx="490.6" cy="332.2" r="1"/><circle cx="566.5" cy="178.8" r="0.8"/><circle cx="481.9" cy="349.1" r="1.4"/><circle cx="392" cy="268.6" r="1.4"/><circle cx="532.2" cy="330.2" r="1.3"/><circle cx="394.7" cy="266.9" r="1"/><circle cx="494.2" cy="286.7" r="1"/><circle cx="554.4" cy="281.7" r="1.4"/><circle cx="571.8" cy="352.4" r="1.1"/><circle cx="439.4" cy="239.6" r="1.3"/><circle cx="524.4" cy="234.4" r="1.3"/><circle cx="545.7" cy="174.6" r="1"/><circle cx="480.5" cy="140.7" r="1.6"/><circle cx="470.9" cy="274.8" r="1.2"/><circle cx="558.5" cy="217.1" r="1.5"/><circle cx="413.6" cy="161.2" r="1.1"/><circle cx="520.9" cy="128" r="0.8"/><circle cx="525.5" cy="357.2" r="1.1"/><circle cx="567.2" cy="87.2" r="1.2"/><circle cx="486.3" cy="315.9" r="1.1"/><circle cx="465.8" cy="176.5" r="1.4"/><circle cx="530.2" cy="183.2" r="1.1"/><circle cx="419.8" cy="196.9" r="1.4"/><circle cx="562.5" cy="172.9" r="1.6"/><circle cx="598.7" cy="339.7" r="1.2"/><circle cx="522.5" cy="315.7" r="1.3"/><circle cx="602" cy="215.3" r="1.3"/><circle cx="567.6" cy="324" r="1.1"/><circle cx="500.3" cy="289.2" r="1.4"/><circle cx="610.1" cy="265.8" r="1.6"/><circle cx="596.3" cy="181" r="1.2"/><circle cx="465.7" cy="233.3" r="1.4"/><circle cx="407.3" cy="215.6" r="1.3"/><circle cx="561.3" cy="134" r="1.5"/><circle cx="475.7" cy="108.9" r="1.3"/><circle cx="451.7" cy="217.2" r="1.5"/><circle cx="600.5" cy="312.6" r="1"/><circle cx="520.3" cy="99.1" r="1.5"/><circle cx="429.1" cy="229.8" r="1.6"/><circle cx="618.2" cy="329.7" r="1.3"/><circle cx="368.1" cy="222.3" r="0.8"/><circle cx="585.3" cy="335.4" r="0.9"/><circle cx="504.5" cy="228.2" r="1.5"/><circle cx="556.7" cy="176.9" r="1.5"/><circle cx="528.7" cy="296.8" r="1.3"/><circle cx="503.4" cy="354" r="0.8"/><circle cx="546.5" cy="364.5" r="1.3"/><circle cx="542.4" cy="319.1" r="1.6"/><circle cx="481.3" cy="283.8" r="0.8"/><circle cx="513.9" cy="138.2" r="1"/><circle cx="583.2" cy="137.4" r="1.4"/><circle cx="508.1" cy="371.5" r="1.4"/><circle cx="402.9" cy="195.7" r="0.8"/><circle cx="450.7" cy="284.2" r="1.3"/><circle cx="481.5" cy="335.5" r="1"/><circle cx="598.1" cy="318.3" r="1.1"/><circle cx="364.9" cy="356.8" r="1.6"/><circle cx="501.7" cy="329" r="1.4"/><circle cx="454.3" cy="212.1" r="0.8"/><circle cx="519.6" cy="217.6" r="0.8"/><circle cx="485.4" cy="321.4" r="1.2"/><circle cx="520.5" cy="302.4" r="1.2"/><circle cx="527.7" cy="220.8" r="0.7"/><circle cx="429.1" cy="204.4" r="0.9"/><circle cx="545.1" cy="212.1" r="0.8"/><circle cx="478.7" cy="212.2" r="1.1"/><circle cx="563.9" cy="171.3" r="1.1"/><circle cx="406" cy="354.2" r="1.3"/><circle cx="561.4" cy="148.6" r="1.6"/><circle cx="459.1" cy="291" r="1.6"/><circle cx="590.9" cy="350.5" r="1"/><circle cx="348.5" cy="108.9" r="1.6"/><circle cx="573.4" cy="355.2" r="0.8"/><circle cx="444.1" cy="328.8" r="1.3"/><circle cx="500.8" cy="223.4" r="1.5"/><circle cx="483.2" cy="267.9" r="1"/><circle cx="445.5" cy="272.7" r="1.3"/><circle cx="504.6" cy="241.7" r="1.6"/><circle cx="417.3" cy="110.1" r="0.8"/><circle cx="491.5" cy="246.3" r="1.2"/><circle cx="481" cy="372.4" r="1.6"/><circle cx="561" cy="140.9" r="1.1"/><circle cx="357.8" cy="357.5" r="1.2"/><circle cx="616.9" cy="194.2" r="1.3"/><circle cx="402.8" cy="171.9" r="1"/><circle cx="415.5" cy="86.3" r="1"/><circle cx="599.1" cy="351.4" r="1.3"/><circle cx="619.2" cy="360.9" r="1.4"/><circle cx="363.5" cy="227.7" r="1"/><circle cx="462.7" cy="372.2" r="0.9"/><circle cx="445" cy="252.2" r="1.1"/><circle cx="526.2" cy="174" r="1.2"/><circle cx="517.1" cy="346.6" r="1"/><circle cx="609.4" cy="101.6" r="1"/><circle cx="674.6" cy="112.7" r="1.3"/><circle cx="426.7" cy="267.4" r="1.4"/><circle cx="448.3" cy="267.7" r="1.4"/><circle cx="495.6" cy="188.5" r="1"/><circle cx="505.1" cy="147.3" r="1.1"/><circle cx="504.5" cy="336.2" r="1.2"/><circle cx="431.3" cy="200.9" r="1.3"/><circle cx="453.7" cy="263.6" r="1.1"/><circle cx="505.7" cy="222.4" r="1.1"/><circle cx="503.7" cy="153.6" r="1.2"/><circle cx="494.8" cy="313.4" r="1.2"/><circle cx="523" cy="358.2" r="0.7"/><circle cx="380.7" cy="109.7" r="1.3"/><circle cx="500.9" cy="101.9" r="1.2"/><circle cx="427.2" cy="126.9" r="1.4"/><circle cx="510.4" cy="188.4" r="1"/><circle cx="406" cy="254.8" r="1.1"/><circle cx="547.3" cy="310.1" r="1.1"/><circle cx="549.7" cy="258" r="0.8"/><circle cx="446.7" cy="200.9" r="1.6"/><circle cx="577.9" cy="210" r="1.3"/><circle cx="508.4" cy="360.5" r="1.3"/><circle cx="524.2" cy="225.2" r="1.5"/><circle cx="568.3" cy="158.7" r="1.3"/><circle cx="483.8" cy="140.7" r="1.2"/><circle cx="485.4" cy="242.3" r="0.8"/><circle cx="454.8" cy="367.4" r="1.4"/><circle cx="582.8" cy="282.5" r="1.2"/><circle cx="435.9" cy="358.5" r="1.1"/><circle cx="485" cy="225.8" r="0.9"/><circle cx="471.2" cy="272.5" r="0.8"/><circle cx="558.2" cy="166" r="1.1"/><circle cx="400.5" cy="207.8" r="1.1"/><circle cx="484.9" cy="137.4" r="1.4"/><circle cx="525.7" cy="86.4" r="1.2"/><circle cx="423.5" cy="177.5" r="1.4"/><circle cx="444.5" cy="374.1" r="1.1"/><circle cx="495.7" cy="350.4" r="1"/><circle cx="514.2" cy="122.4" r="1.4"/><circle cx="510.4" cy="321" r="1.1"/><circle cx="482.7" cy="223.6" r="1.4"/><circle cx="502.8" cy="97" r="1.2"/><circle cx="532.8" cy="221.6" r="0.7"/><circle cx="529.8" cy="222.8" r="1.5"/><circle cx="542.8" cy="217.4" r="1"/><circle cx="349.6" cy="238" r="0.9"/><circle cx="565.9" cy="149.2" r="1"/><circle cx="519.5" cy="228.9" r="1"/><circle cx="538.5" cy="229.4" r="1.3"/><circle cx="591.5" cy="185.5" r="1.5"/><circle cx="442.2" cy="241.9" r="1.1"/><circle cx="523.9" cy="325.2" r="0.8"/><circle cx="451.8" cy="285.6" r="1.5"/><circle cx="450.6" cy="160.4" r="1.5"/><circle cx="331.8" cy="352.1" r="1.6"/><circle cx="514.1" cy="95.8" r="1"/><circle cx="392.6" cy="257.3" r="1.5"/><circle cx="425.3" cy="132.2" r="0.9"/><circle cx="554.5" cy="266.4" r="0.8"/><circle cx="420.1" cy="101.5" r="0.8"/><circle cx="561" cy="231.1" r="1"/><circle cx="499.3" cy="129.4" r="0.9"/><circle cx="363.1" cy="173.5" r="0.9"/><circle cx="470" cy="235.1" r="1.4"/><circle cx="436.9" cy="167.9" r="1.3"/><circle cx="639.7" cy="262.3" r="1"/><circle cx="546.7" cy="218.8" r="0.9"/><circle cx="510.7" cy="336.3" r="0.7"/><circle cx="483.1" cy="276.6" r="0.8"/><circle cx="513.7" cy="301.9" r="1.2"/><circle cx="380.9" cy="127.9" r="1.5"/><circle cx="406.4" cy="232.2" r="1.2"/><circle cx="530.7" cy="332.8" r="1.2"/><circle cx="340.3" cy="373.5" r="0.7"/><circle cx="490.8" cy="240.8" r="1.2"/><circle cx="541.2" cy="108.1" r="1"/><circle cx="436" cy="102.8" r="0.9"/><circle cx="363.9" cy="353.7" r="1.2"/><circle cx="479.7" cy="104.6" r="1.4"/><circle cx="482.6" cy="260.1" r="1.6"/><circle cx="386.7" cy="139.6" r="1.4"/><circle cx="477.8" cy="332.4" r="1.5"/><circle cx="541.8" cy="151.3" r="0.9"/><circle cx="568.1" cy="372.9" r="1.6"/><circle cx="612.1" cy="272.5" r="1.1"/><circle cx="498.8" cy="251.9" r="0.8"/><circle cx="497" cy="116.8" r="1.3"/><circle cx="559.9" cy="372.5" r="1.6"/><circle cx="465.7" cy="238" r="0.8"/><circle cx="501.8" cy="346" r="1.2"/><circle cx="366.9" cy="201" r="1.4"/><circle cx="528.6" cy="230.8" r="0.9"/><circle cx="491.4" cy="93.3" r="1"/><circle cx="468.5" cy="224.9" r="1.3"/><circle cx="452.8" cy="147.6" r="1.5"/><circle cx="456.4" cy="325.7" r="1.1"/><circle cx="485.6" cy="146" r="0.8"/><circle cx="590.9" cy="92.9" r="0.7"/><circle cx="451.4" cy="148.2" r="1.5"/><circle cx="540.1" cy="282" r="1.4"/><circle cx="569.6" cy="88.1" r="0.7"/><circle cx="608" cy="87.1" r="1.2"/><circle cx="457.4" cy="342.1" r="0.8"/><circle cx="514.9" cy="101.4" r="1.5"/><circle cx="510.5" cy="178.2" r="1.3"/><circle cx="539.8" cy="89.1" r="1.2"/><circle cx="467.7" cy="261.3" r="1"/><circle cx="499" cy="172.2" r="1"/><circle cx="487.1" cy="121.3" r="1"/><circle cx="457.8" cy="308" r="0.8"/><circle cx="570.3" cy="304" r="1.2"/><circle cx="467" cy="202.2" r="0.8"/><circle cx="479.8" cy="267.5" r="1.2"/><circle cx="527.1" cy="96.4" r="0.7"/><circle cx="602.3" cy="275.7" r="1.6"/><circle cx="561.2" cy="283.6" r="1"/><circle cx="380.8" cy="282.6" r="1"/><circle cx="308.9" cy="301.6" r="1.1"/><circle cx="607.8" cy="290.2" r="0.7"/><circle cx="562.2" cy="262.7" r="0.9"/><circle cx="578.4" cy="297.1" r="1.4"/><circle cx="435.4" cy="268.8" r="1.4"/><circle cx="382.3" cy="123.3" r="1.6"/><circle cx="538" cy="306.9" r="1.5"/><circle cx="539" cy="363.8" r="1.3"/><circle cx="445.7" cy="230.6" r="1.4"/><circle cx="426" cy="212.6" r="1.5"/><circle cx="586.3" cy="285.4" r="1.2"/><circle cx="501.3" cy="373.5" r="1"/><circle cx="438.4" cy="255.1" r="0.9"/><circle cx="391" cy="348.5" r="1.1"/><circle cx="497.2" cy="214.2" r="1.5"/><circle cx="399.5" cy="192.5" r="1"/><circle cx="440.3" cy="150.7" r="1.4"/><circle cx="522.2" cy="175.3" r="0.8"/><circle cx="484.4" cy="110.2" r="1"/><circle cx="477.6" cy="251" r="1.6"/><circle cx="598.4" cy="315.2" r="0.8"/><circle cx="428.4" cy="304.3" r="1"/><circle cx="511.7" cy="111.8" r="1.1"/><circle cx="500.6" cy="271.6" r="1.3"/><circle cx="503.3" cy="254.4" r="1.2"/><circle cx="525.6" cy="178.5" r="1.1"/><circle cx="650.5" cy="364.9" r="1.4"/><circle cx="587.8" cy="350" r="0.8"/><circle cx="527.8" cy="112.6" r="1.5"/><circle cx="529.3" cy="188.2" r="0.8"/><circle cx="499.7" cy="122" r="1.5"/><circle cx="462.2" cy="182.4" r="1.4"/><circle cx="496.2" cy="136.8" r="0.9"/><circle cx="480.2" cy="291" r="1.1"/><circle cx="572.5" cy="315.2" r="1.4"/><circle cx="575.5" cy="231.6" r="1.5"/><circle cx="539" cy="165.9" r="0.7"/><circle cx="570.1" cy="156.3" r="1.4"/><circle cx="435.8" cy="237.5" r="0.9"/><circle cx="519.3" cy="301.9" r="1.3"/><circle cx="541.9" cy="197.7" r="1.6"/><circle cx="589.4" cy="245.4" r="1.6"/><circle cx="420.2" cy="370.4" r="0.8"/><circle cx="570.3" cy="220.8" r="1"/><circle cx="432.4" cy="263.3" r="1.4"/><circle cx="457.1" cy="109.6" r="1.1"/><circle cx="402.2" cy="257.3" r="1"/><circle cx="573.4" cy="363.2" r="0.8"/><circle cx="381.6" cy="259" r="1.5"/><circle cx="455" cy="275.3" r="0.8"/><circle cx="525.7" cy="238.2" r="0.8"/><circle cx="548.5" cy="273.7" r="1.3"/><circle cx="581.5" cy="352" r="0.8"/><circle cx="520.4" cy="190.9" r="1.6"/><circle cx="452.7" cy="90.4" r="1.3"/><circle cx="564.2" cy="360.3" r="1.2"/><circle cx="503.6" cy="292.3" r="1.4"/><circle cx="544.2" cy="193.3" r="0.9"/><circle cx="543.9" cy="328.8" r="1.5"/><circle cx="522" cy="227.9" r="1.5"/><circle cx="440.7" cy="229.2" r="1.6"/><circle cx="451.9" cy="202.7" r="1.4"/><circle cx="462.2" cy="96.7" r="1.4"/><circle cx="528.6" cy="217.3" r="0.7"/><circle cx="372" cy="297.4" r="0.8"/></g><g fill="#efebe3" opacity="0.75"><ellipse cx="496" cy="94" rx="1" ry="3.1" transform="rotate(164 496 94)"/><ellipse cx="589" cy="125" rx="1.4" ry="6.4" transform="rotate(3 589 125)"/><ellipse cx="547" cy="216" rx="1.8" ry="5.9" transform="rotate(133 547 216)"/><ellipse cx="572" cy="177" rx="2.5" ry="6.7" transform="rotate(8 572 177)"/><ellipse cx="603" cy="306" rx="2.6" ry="5.5" transform="rotate(108 603 306)"/><ellipse cx="550" cy="370" rx="1.9" ry="2.2" transform="rotate(57 550 370)"/><ellipse cx="475" cy="338" rx="2.4" ry="4.4" transform="rotate(107 475 338)"/><ellipse cx="550" cy="150" rx="2.4" ry="6.3" transform="rotate(1 550 150)"/><ellipse cx="473" cy="109" rx="1.2" ry="2.5" transform="rotate(28 473 109)"/><ellipse cx="443" cy="173" rx="1.4" ry="5.3" transform="rotate(166 443 173)"/><ellipse cx="375" cy="285" rx="2.6" ry="6.3" transform="rotate(140 375 285)"/><ellipse cx="559" cy="299" rx="3" ry="6.4" transform="rotate(135 559 299)"/><ellipse cx="482" cy="317" rx="2.6" ry="5.5" transform="rotate(17 482 317)"/><ellipse cx="574" cy="326" rx="1.3" ry="2.1" transform="rotate(62 574 326)"/><ellipse cx="411" cy="332" rx="2.5" ry="2.8" transform="rotate(39 411 332)"/><ellipse cx="609" cy="194" rx="2.9" ry="4.4" transform="rotate(55 609 194)"/><ellipse cx="486" cy="272" rx="1" ry="4.1" transform="rotate(136 486 272)"/><ellipse cx="500" cy="350" rx="1.9" ry="4.1" transform="rotate(59 500 350)"/><ellipse cx="592" cy="116" rx="2.2" ry="5.1" transform="rotate(14 592 116)"/><ellipse cx="370" cy="295" rx="2.9" ry="3.6" transform="rotate(151 370 295)"/><ellipse cx="525" cy="346" rx="2.1" ry="4.4" transform="rotate(87 525 346)"/><ellipse cx="374" cy="132" rx="1.5" ry="6.1" transform="rotate(5 374 132)"/><ellipse cx="449" cy="222" rx="1.2" ry="5.1" transform="rotate(30 449 222)"/><ellipse cx="575" cy="155" rx="2.5" ry="3.8" transform="rotate(110 575 155)"/><ellipse cx="527" cy="105" rx="1.9" ry="4.1" transform="rotate(117 527 105)"/><ellipse cx="429" cy="220" rx="1.6" ry="6.9" transform="rotate(121 429 220)"/><ellipse cx="568" cy="282" rx="1.4" ry="2.7" transform="rotate(69 568 282)"/><ellipse cx="414" cy="337" rx="2.2" ry="4.4" transform="rotate(116 414 337)"/><ellipse cx="536" cy="192" rx="2.5" ry="4.5" transform="rotate(144 536 192)"/><ellipse cx="488" cy="270" rx="2.4" ry="5.1" transform="rotate(45 488 270)"/><ellipse cx="576" cy="145" rx="2.1" ry="4.9" transform="rotate(52 576 145)"/><ellipse cx="558" cy="93" rx="2.1" ry="6.8" transform="rotate(66 558 93)"/><ellipse cx="475" cy="365" rx="2.6" ry="6.3" transform="rotate(128 475 365)"/><ellipse cx="436" cy="217" rx="1.9" ry="4.4" transform="rotate(7 436 217)"/><ellipse cx="475" cy="224" rx="3" ry="4.7" transform="rotate(42 475 224)"/><ellipse cx="448" cy="292" rx="2.3" ry="6.4" transform="rotate(126 448 292)"/><ellipse cx="592" cy="231" rx="1.5" ry="2" transform="rotate(52 592 231)"/><ellipse cx="486" cy="158" rx="2.2" ry="4.3" transform="rotate(137 486 158)"/><ellipse cx="601" cy="300" rx="2.2" ry="4.5" transform="rotate(28 601 300)"/><ellipse cx="510" cy="218" rx="2.4" ry="4.1" transform="rotate(1 510 218)"/><ellipse cx="430" cy="335" rx="2.1" ry="6.9" transform="rotate(5 430 335)"/><ellipse cx="434" cy="228" rx="2.1" ry="2.7" transform="rotate(151 434 228)"/><ellipse cx="478" cy="305" rx="1" ry="4.8" transform="rotate(160 478 305)"/><ellipse cx="501" cy="163" rx="2.8" ry="3.1" transform="rotate(19 501 163)"/><ellipse cx="468" cy="291" rx="1.1" ry="5.1" transform="rotate(100 468 291)"/><ellipse cx="515" cy="233" rx="1.6" ry="2.8" transform="rotate(113 515 233)"/><ellipse cx="445" cy="176" rx="1.4" ry="6.9" transform="rotate(139 445 176)"/><ellipse cx="442" cy="251" rx="1.7" ry="5.8" transform="rotate(45 442 251)"/><ellipse cx="554" cy="335" rx="2" ry="4.8" transform="rotate(64 554 335)"/><ellipse cx="468" cy="286" rx="2" ry="5.2" transform="rotate(78 468 286)"/><ellipse cx="583" cy="224" rx="1.8" ry="5.6" transform="rotate(170 583 224)"/><ellipse cx="389" cy="239" rx="2.5" ry="4.1" transform="rotate(25 389 239)"/><ellipse cx="406" cy="171" rx="1.5" ry="3.4" transform="rotate(144 406 171)"/><ellipse cx="552" cy="193" rx="1.1" ry="4.7" transform="rotate(44 552 193)"/><ellipse cx="461" cy="209" rx="2.3" ry="3" transform="rotate(157 461 209)"/><ellipse cx="591" cy="340" rx="1.1" ry="6.6" transform="rotate(57 591 340)"/><ellipse cx="536" cy="281" rx="1.9" ry="3.5" transform="rotate(20 536 281)"/><ellipse cx="514" cy="241" rx="2.1" ry="4.6" transform="rotate(157 514 241)"/><ellipse cx="481" cy="357" rx="1.8" ry="4.9" transform="rotate(128 481 357)"/><ellipse cx="480" cy="270" rx="1.2" ry="2.4" transform="rotate(115 480 270)"/><ellipse cx="378" cy="109" rx="2.6" ry="5.1" transform="rotate(140 378 109)"/><ellipse cx="485" cy="221" rx="2.9" ry="2.8" transform="rotate(64 485 221)"/><ellipse cx="562" cy="245" rx="1.3" ry="4.3" transform="rotate(172 562 245)"/><ellipse cx="473" cy="253" rx="1.5" ry="6.7" transform="rotate(27 473 253)"/><ellipse cx="539" cy="251" rx="1.1" ry="3.2" transform="rotate(59 539 251)"/><ellipse cx="598" cy="212" rx="2.7" ry="2.1" transform="rotate(60 598 212)"/><ellipse cx="485" cy="198" rx="1.4" ry="3.8" transform="rotate(45 485 198)"/><ellipse cx="454" cy="238" rx="1.8" ry="3.5" transform="rotate(121 454 238)"/><ellipse cx="580" cy="99" rx="1.7" ry="2.6" transform="rotate(146 580 99)"/><ellipse cx="400" cy="121" rx="1.2" ry="5.2" transform="rotate(30 400 121)"/><ellipse cx="459" cy="325" rx="2.8" ry="2.9" transform="rotate(169 459 325)"/><ellipse cx="576" cy="173" rx="2.1" ry="5" transform="rotate(33 576 173)"/><ellipse cx="382" cy="145" rx="2.9" ry="5" transform="rotate(123 382 145)"/><ellipse cx="574" cy="357" rx="1.2" ry="4.3" transform="rotate(170 574 357)"/><ellipse cx="431" cy="255" rx="1.9" ry="3.5" transform="rotate(97 431 255)"/><ellipse cx="381" cy="198" rx="2.4" ry="6.2" transform="rotate(126 381 198)"/><ellipse cx="552" cy="165" rx="1.3" ry="2.6" transform="rotate(177 552 165)"/><ellipse cx="492" cy="118" rx="2.8" ry="6.2" transform="rotate(60 492 118)"/><ellipse cx="424" cy="242" rx="1.5" ry="6.7" transform="rotate(129 424 242)"/><ellipse cx="590" cy="208" rx="1.2" ry="5.7" transform="rotate(53 590 208)"/><ellipse cx="526" cy="166" rx="1.4" ry="3.2" transform="rotate(83 526 166)"/><ellipse cx="587" cy="163" rx="1.2" ry="4.7" transform="rotate(66 587 163)"/><ellipse cx="444" cy="198" rx="2.5" ry="6.6" transform="rotate(144 444 198)"/><ellipse cx="374" cy="257" rx="2.2" ry="3.9" transform="rotate(35 374 257)"/><ellipse cx="441" cy="90" rx="1.2" ry="3.2" transform="rotate(17 441 90)"/><ellipse cx="452" cy="341" rx="1.3" ry="3.1" transform="rotate(146 452 341)"/><ellipse cx="545" cy="171" rx="2.3" ry="4.8" transform="rotate(168 545 171)"/><ellipse cx="520" cy="285" rx="2.1" ry="3.1" transform="rotate(144 520 285)"/><ellipse cx="434" cy="332" rx="2.3" ry="3.4" transform="rotate(65 434 332)"/><ellipse cx="609" cy="279" rx="1.4" ry="5" transform="rotate(2 609 279)"/><ellipse cx="580" cy="104" rx="1" ry="5" transform="rotate(55 580 104)"/><ellipse cx="500" cy="232" rx="1.8" ry="4.8" transform="rotate(125 500 232)"/><ellipse cx="511" cy="301" rx="1.9" ry="6.4" transform="rotate(130 511 301)"/><ellipse cx="491" cy="114" rx="2.6" ry="5.3" transform="rotate(172 491 114)"/><ellipse cx="382" cy="236" rx="1.9" ry="5" transform="rotate(72 382 236)"/><ellipse cx="394" cy="184" rx="2.7" ry="3.1" transform="rotate(110 394 184)"/><ellipse cx="582" cy="243" rx="2.1" ry="4.2" transform="rotate(12 582 243)"/><ellipse cx="503" cy="240" rx="1.7" ry="4.3" transform="rotate(69 503 240)"/><ellipse cx="580" cy="345" rx="2.5" ry="3.3" transform="rotate(172 580 345)"/><ellipse cx="372" cy="278" rx="1.2" ry="6.5" transform="rotate(81 372 278)"/><ellipse cx="574" cy="272" rx="2.5" ry="3.4" transform="rotate(8 574 272)"/><ellipse cx="440" cy="352" rx="1.1" ry="2.3" transform="rotate(47 440 352)"/><ellipse cx="534" cy="161" rx="2.3" ry="3.8" transform="rotate(130 534 161)"/><ellipse cx="395" cy="238" rx="1.7" ry="3.1" transform="rotate(18 395 238)"/><ellipse cx="428" cy="250" rx="2.1" ry="6.4" transform="rotate(122 428 250)"/><ellipse cx="514" cy="354" rx="2.1" ry="2.5" transform="rotate(166 514 354)"/><ellipse cx="602" cy="253" rx="2.1" ry="5.9" transform="rotate(154 602 253)"/><ellipse cx="469" cy="307" rx="1.1" ry="2.1" transform="rotate(2 469 307)"/><ellipse cx="610" cy="138" rx="2.9" ry="5.3" transform="rotate(27 610 138)"/><ellipse cx="551" cy="128" rx="2.6" ry="4" transform="rotate(37 551 128)"/><ellipse cx="503" cy="295" rx="2.5" ry="4.2" transform="rotate(135 503 295)"/><ellipse cx="418" cy="319" rx="1.6" ry="4.4" transform="rotate(101 418 319)"/><ellipse cx="607" cy="301" rx="2.1" ry="2.3" transform="rotate(24 607 301)"/><ellipse cx="366" cy="357" rx="1.5" ry="5.3" transform="rotate(33 366 357)"/><ellipse cx="502" cy="119" rx="1.5" ry="5.7" transform="rotate(31 502 119)"/><ellipse cx="561" cy="333" rx="1.7" ry="6.4" transform="rotate(150 561 333)"/><ellipse cx="524" cy="186" rx="2.6" ry="3.8" transform="rotate(122 524 186)"/><ellipse cx="409" cy="244" rx="1.9" ry="2.6" transform="rotate(29 409 244)"/><ellipse cx="449" cy="262" rx="1.1" ry="6.8" transform="rotate(175 449 262)"/><ellipse cx="555" cy="176" rx="1.3" ry="4.5" transform="rotate(118 555 176)"/><ellipse cx="418" cy="129" rx="2.7" ry="5" transform="rotate(147 418 129)"/><ellipse cx="546" cy="201" rx="2.1" ry="3.5" transform="rotate(167 546 201)"/><ellipse cx="492" cy="338" rx="2.6" ry="4.1" transform="rotate(68 492 338)"/><ellipse cx="385" cy="96" rx="1.4" ry="2.1" transform="rotate(108 385 96)"/><ellipse cx="606" cy="101" rx="2.3" ry="6.1" transform="rotate(115 606 101)"/><ellipse cx="388" cy="326" rx="1.7" ry="3.2" transform="rotate(156 388 326)"/><ellipse cx="455" cy="302" rx="2.4" ry="6.3" transform="rotate(130 455 302)"/><ellipse cx="541" cy="373" rx="1.5" ry="5.8" transform="rotate(87 541 373)"/><ellipse cx="567" cy="312" rx="2.9" ry="5.7" transform="rotate(64 567 312)"/><ellipse cx="415" cy="161" rx="2.5" ry="3.4" transform="rotate(136 415 161)"/><ellipse cx="488" cy="205" rx="1.4" ry="6" transform="rotate(42 488 205)"/><ellipse cx="609" cy="112" rx="2.7" ry="5.6" transform="rotate(78 609 112)"/><ellipse cx="481" cy="302" rx="1.1" ry="5.4" transform="rotate(109 481 302)"/><ellipse cx="465" cy="300" rx="2.4" ry="4.5" transform="rotate(82 465 300)"/><ellipse cx="484" cy="120" rx="2" ry="5.8" transform="rotate(42 484 120)"/><ellipse cx="588" cy="115" rx="2.5" ry="3.6" transform="rotate(148 588 115)"/><ellipse cx="451" cy="190" rx="2.4" ry="4.9" transform="rotate(73 451 190)"/><ellipse cx="539" cy="345" rx="2.5" ry="6.9" transform="rotate(7 539 345)"/><ellipse cx="541" cy="287" rx="2.4" ry="6.6" transform="rotate(41 541 287)"/><ellipse cx="408" cy="130" rx="2.9" ry="6.1" transform="rotate(103 408 130)"/><ellipse cx="590" cy="270" rx="3" ry="4.5" transform="rotate(30 590 270)"/><ellipse cx="481" cy="245" rx="1.9" ry="4.9" transform="rotate(15 481 245)"/><ellipse cx="371" cy="215" rx="2.7" ry="3.9" transform="rotate(11 371 215)"/><ellipse cx="409" cy="357" rx="2.7" ry="4" transform="rotate(84 409 357)"/><ellipse cx="572" cy="90" rx="2.6" ry="6.4" transform="rotate(174 572 90)"/><ellipse cx="423" cy="323" rx="1.8" ry="6.4" transform="rotate(91 423 323)"/><ellipse cx="517" cy="319" rx="2.3" ry="2.6" transform="rotate(66 517 319)"/><ellipse cx="409" cy="279" rx="1.9" ry="2.2" transform="rotate(72 409 279)"/><ellipse cx="546" cy="91" rx="2.6" ry="3.4" transform="rotate(15 546 91)"/><ellipse cx="406" cy="146" rx="1.7" ry="3.6" transform="rotate(52 406 146)"/><ellipse cx="581" cy="236" rx="1.4" ry="4.9" transform="rotate(80 581 236)"/><ellipse cx="536" cy="311" rx="1.2" ry="5.4" transform="rotate(41 536 311)"/><ellipse cx="470" cy="372" rx="1.5" ry="2.9" transform="rotate(162 470 372)"/><ellipse cx="522" cy="167" rx="2" ry="5.5" transform="rotate(85 522 167)"/><ellipse cx="494" cy="277" rx="2.5" ry="6" transform="rotate(177 494 277)"/><ellipse cx="590" cy="221" rx="2.9" ry="4.2" transform="rotate(152 590 221)"/><ellipse cx="443" cy="235" rx="2.1" ry="4.7" transform="rotate(46 443 235)"/><ellipse cx="550" cy="140" rx="2.1" ry="6.4" transform="rotate(146 550 140)"/><ellipse cx="385" cy="181" rx="1.6" ry="4" transform="rotate(9 385 181)"/><ellipse cx="457" cy="191" rx="1.8" ry="2.3" transform="rotate(33 457 191)"/><ellipse cx="375" cy="282" rx="1.7" ry="4.2" transform="rotate(161 375 282)"/><ellipse cx="454" cy="226" rx="1.4" ry="5.7" transform="rotate(62 454 226)"/><ellipse cx="519" cy="363" rx="2.6" ry="4.7" transform="rotate(133 519 363)"/><ellipse cx="572" cy="87" rx="2.1" ry="5.9" transform="rotate(5 572 87)"/><ellipse cx="530" cy="97" rx="2.7" ry="2.2" transform="rotate(132 530 97)"/><ellipse cx="459" cy="195" rx="1.3" ry="7" transform="rotate(94 459 195)"/><ellipse cx="539" cy="341" rx="2" ry="2.3" transform="rotate(9 539 341)"/><ellipse cx="382" cy="126" rx="1.2" ry="3.5" transform="rotate(38 382 126)"/><ellipse cx="411" cy="219" rx="1.5" ry="2.4" transform="rotate(39 411 219)"/><ellipse cx="409" cy="230" rx="1.1" ry="4.4" transform="rotate(145 409 230)"/><ellipse cx="459" cy="233" rx="1.5" ry="5.8" transform="rotate(162 459 233)"/><ellipse cx="413" cy="265" rx="1.8" ry="5.2" transform="rotate(166 413 265)"/><ellipse cx="564" cy="283" rx="2.6" ry="3" transform="rotate(50 564 283)"/><ellipse cx="450" cy="111" rx="2.1" ry="6.4" transform="rotate(79 450 111)"/><ellipse cx="398" cy="164" rx="2.8" ry="2.9" transform="rotate(68 398 164)"/><ellipse cx="505" cy="182" rx="1.7" ry="3.8" transform="rotate(123 505 182)"/><ellipse cx="541" cy="145" rx="2.3" ry="2.8" transform="rotate(62 541 145)"/><ellipse cx="536" cy="223" rx="2.4" ry="6.7" transform="rotate(101 536 223)"/><ellipse cx="508" cy="136" rx="1.7" ry="6.9" transform="rotate(114 508 136)"/><ellipse cx="484" cy="262" rx="2.2" ry="4.1" transform="rotate(119 484 262)"/><ellipse cx="517" cy="130" rx="1.4" ry="2.7" transform="rotate(166 517 130)"/><ellipse cx="557" cy="257" rx="2.8" ry="3.9" transform="rotate(154 557 257)"/><ellipse cx="505" cy="123" rx="1.3" ry="5.1" transform="rotate(71 505 123)"/><ellipse cx="427" cy="356" rx="2.7" ry="3.9" transform="rotate(103 427 356)"/><ellipse cx="575" cy="241" rx="1" ry="3.8" transform="rotate(161 575 241)"/><ellipse cx="604" cy="94" rx="1.4" ry="6.3" transform="rotate(147 604 94)"/><ellipse cx="375" cy="248" rx="3" ry="6.5" transform="rotate(27 375 248)"/><ellipse cx="550" cy="93" rx="2.4" ry="6.2" transform="rotate(163 550 93)"/><ellipse cx="556" cy="102" rx="1.8" ry="4.6" transform="rotate(64 556 102)"/><ellipse cx="431" cy="354" rx="2.6" ry="2.5" transform="rotate(3 431 354)"/><ellipse cx="515" cy="171" rx="2.8" ry="6.1" transform="rotate(49 515 171)"/><ellipse cx="376" cy="365" rx="1.4" ry="5.4" transform="rotate(90 376 365)"/><ellipse cx="545" cy="113" rx="1.2" ry="6.6" transform="rotate(22 545 113)"/><ellipse cx="503" cy="216" rx="1.3" ry="6" transform="rotate(160 503 216)"/><ellipse cx="549" cy="123" rx="2.2" ry="5.1" transform="rotate(41 549 123)"/><ellipse cx="586" cy="320" rx="2.5" ry="4.3" transform="rotate(136 586 320)"/><ellipse cx="608" cy="272" rx="2.4" ry="3.4" transform="rotate(117 608 272)"/><ellipse cx="528" cy="95" rx="1.8" ry="2.7" transform="rotate(78 528 95)"/><ellipse cx="410" cy="237" rx="2.3" ry="6.3" transform="rotate(68 410 237)"/><ellipse cx="568" cy="188" rx="1.8" ry="6.9" transform="rotate(174 568 188)"/><ellipse cx="485" cy="284" rx="1.2" ry="2.9" transform="rotate(120 485 284)"/><ellipse cx="417" cy="337" rx="1.2" ry="4.6" transform="rotate(4 417 337)"/><ellipse cx="601" cy="362" rx="2.3" ry="2.4" transform="rotate(133 601 362)"/><ellipse cx="608" cy="335" rx="2.7" ry="6.8" transform="rotate(52 608 335)"/><ellipse cx="526" cy="165" rx="1.5" ry="7" transform="rotate(141 526 165)"/><ellipse cx="534" cy="366" rx="1.5" ry="3.3" transform="rotate(13 534 366)"/><ellipse cx="490" cy="117" rx="1.9" ry="2.1" transform="rotate(53 490 117)"/><ellipse cx="592" cy="144" rx="1.5" ry="2.5" transform="rotate(140 592 144)"/><ellipse cx="405" cy="206" rx="2.1" ry="2.2" transform="rotate(144 405 206)"/><ellipse cx="593" cy="209" rx="1.5" ry="5.7" transform="rotate(24 593 209)"/><ellipse cx="472" cy="172" rx="1.7" ry="3.5" transform="rotate(41 472 172)"/><ellipse cx="473" cy="213" rx="1.9" ry="4.1" transform="rotate(9 473 213)"/><ellipse cx="422" cy="240" rx="2.1" ry="3.3" transform="rotate(19 422 240)"/><ellipse cx="602" cy="245" rx="1.1" ry="6.2" transform="rotate(1 602 245)"/><ellipse cx="369" cy="168" rx="2.7" ry="4.4" transform="rotate(45 369 168)"/><ellipse cx="423" cy="262" rx="2.3" ry="4" transform="rotate(68 423 262)"/><ellipse cx="607" cy="290" rx="1" ry="2.1" transform="rotate(54 607 290)"/><ellipse cx="523" cy="90" rx="2.8" ry="6.1" transform="rotate(168 523 90)"/><ellipse cx="530" cy="94" rx="2.8" ry="3.6" transform="rotate(95 530 94)"/><ellipse cx="500" cy="279" rx="2.4" ry="5.2" transform="rotate(159 500 279)"/><ellipse cx="538" cy="179" rx="3" ry="4.3" transform="rotate(33 538 179)"/><ellipse cx="523" cy="368" rx="2.7" ry="5.6" transform="rotate(92 523 368)"/><ellipse cx="537" cy="220" rx="1.2" ry="5.6" transform="rotate(152 537 220)"/><ellipse cx="446" cy="147" rx="1.5" ry="6.9" transform="rotate(41 446 147)"/><ellipse cx="381" cy="159" rx="1.2" ry="6.1" transform="rotate(50 381 159)"/><ellipse cx="545" cy="127" rx="1.2" ry="2.1" transform="rotate(22 545 127)"/><ellipse cx="442" cy="312" rx="1.4" ry="6" transform="rotate(161 442 312)"/><ellipse cx="477" cy="343" rx="1" ry="4.6" transform="rotate(61 477 343)"/><ellipse cx="452" cy="129" rx="1.7" ry="3.9" transform="rotate(128 452 129)"/><ellipse cx="415" cy="103" rx="2.4" ry="3.8" transform="rotate(178 415 103)"/><ellipse cx="415" cy="228" rx="1.8" ry="6.5" transform="rotate(151 415 228)"/><ellipse cx="572" cy="138" rx="1.9" ry="6.2" transform="rotate(173 572 138)"/><ellipse cx="408" cy="287" rx="1.2" ry="6.2" transform="rotate(68 408 287)"/><ellipse cx="419" cy="290" rx="2.3" ry="6.9" transform="rotate(126 419 290)"/><ellipse cx="585" cy="153" rx="2.2" ry="2.2" transform="rotate(54 585 153)"/><ellipse cx="454" cy="203" rx="2.7" ry="5.8" transform="rotate(47 454 203)"/><ellipse cx="561" cy="182" rx="1" ry="3.3" transform="rotate(73 561 182)"/><ellipse cx="526" cy="294" rx="1.8" ry="3.9" transform="rotate(45 526 294)"/><ellipse cx="384" cy="137" rx="1.9" ry="3.2" transform="rotate(5 384 137)"/><ellipse cx="551" cy="131" rx="2.7" ry="6.1" transform="rotate(91 551 131)"/><ellipse cx="466" cy="137" rx="2.8" ry="4" transform="rotate(2 466 137)"/><ellipse cx="563" cy="92" rx="1" ry="4.8" transform="rotate(116 563 92)"/><ellipse cx="485" cy="360" rx="2.7" ry="2.8" transform="rotate(67 485 360)"/><ellipse cx="602" cy="218" rx="1.9" ry="2.8" transform="rotate(61 602 218)"/><ellipse cx="500" cy="224" rx="1.1" ry="5.6" transform="rotate(68 500 224)"/><ellipse cx="494" cy="132" rx="2.5" ry="2.4" transform="rotate(36 494 132)"/><ellipse cx="476" cy="123" rx="3" ry="2.1" transform="rotate(79 476 123)"/><ellipse cx="376" cy="169" rx="2" ry="4.3" transform="rotate(180 376 169)"/><ellipse cx="497" cy="172" rx="2.7" ry="7" transform="rotate(44 497 172)"/><ellipse cx="432" cy="225" rx="1.8" ry="2.5" transform="rotate(32 432 225)"/><ellipse cx="581" cy="242" rx="2.3" ry="4.1" transform="rotate(179 581 242)"/><ellipse cx="510" cy="142" rx="2.2" ry="4.5" transform="rotate(72 510 142)"/><ellipse cx="485" cy="209" rx="2.6" ry="4.3" transform="rotate(167 485 209)"/><ellipse cx="424" cy="353" rx="2" ry="5.6" transform="rotate(125 424 353)"/><ellipse cx="425" cy="123" rx="1" ry="6.5" transform="rotate(134 425 123)"/><ellipse cx="491" cy="92" rx="1.8" ry="2.6" transform="rotate(122 491 92)"/><ellipse cx="455" cy="117" rx="2.2" ry="6.6" transform="rotate(113 455 117)"/><ellipse cx="439" cy="321" rx="2" ry="2.6" transform="rotate(47 439 321)"/><ellipse cx="380" cy="321" rx="2.5" ry="6.6" transform="rotate(47 380 321)"/><ellipse cx="450" cy="135" rx="2.5" ry="2.4" transform="rotate(27 450 135)"/><ellipse cx="562" cy="222" rx="2.9" ry="6.6" transform="rotate(94 562 222)"/><ellipse cx="404" cy="332" rx="1.3" ry="5.5" transform="rotate(174 404 332)"/><ellipse cx="463" cy="192" rx="1.6" ry="5.3" transform="rotate(170 463 192)"/><ellipse cx="559" cy="274" rx="2" ry="6.5" transform="rotate(95 559 274)"/><ellipse cx="482" cy="286" rx="2.5" ry="6.1" transform="rotate(57 482 286)"/><ellipse cx="489" cy="342" rx="2" ry="2.3" transform="rotate(50 489 342)"/><ellipse cx="424" cy="176" rx="1.6" ry="3.4" transform="rotate(89 424 176)"/><ellipse cx="440" cy="175" rx="2.1" ry="3.9" transform="rotate(76 440 175)"/><ellipse cx="609" cy="230" rx="2.6" ry="6.3" transform="rotate(77 609 230)"/><ellipse cx="499" cy="343" rx="2.8" ry="6.5" transform="rotate(14 499 343)"/><ellipse cx="527" cy="88" rx="2.9" ry="5.1" transform="rotate(19 527 88)"/><ellipse cx="534" cy="189" rx="1.4" ry="4.6" transform="rotate(153 534 189)"/><ellipse cx="496" cy="241" rx="1.4" ry="2.7" transform="rotate(60 496 241)"/><ellipse cx="455" cy="260" rx="2.2" ry="4.1" transform="rotate(167 455 260)"/><ellipse cx="421" cy="300" rx="2.9" ry="3.2" transform="rotate(76 421 300)"/><ellipse cx="414" cy="327" rx="2.8" ry="2.7" transform="rotate(11 414 327)"/><ellipse cx="425" cy="153" rx="2.6" ry="4.4" transform="rotate(144 425 153)"/><ellipse cx="396" cy="316" rx="2.6" ry="3.4" transform="rotate(179 396 316)"/><ellipse cx="392" cy="300" rx="1" ry="2.6" transform="rotate(65 392 300)"/><ellipse cx="501" cy="180" rx="1" ry="3.8" transform="rotate(84 501 180)"/><ellipse cx="558" cy="230" rx="2.1" ry="5.7" transform="rotate(151 558 230)"/><ellipse cx="498" cy="328" rx="1.7" ry="3.8" transform="rotate(104 498 328)"/><ellipse cx="605" cy="142" rx="1.6" ry="4.9" transform="rotate(168 605 142)"/><ellipse cx="473" cy="192" rx="2.5" ry="4.4" transform="rotate(149 473 192)"/><ellipse cx="377" cy="343" rx="2.1" ry="6.6" transform="rotate(99 377 343)"/><ellipse cx="440" cy="92" rx="2" ry="3" transform="rotate(89 440 92)"/><ellipse cx="446" cy="235" rx="3" ry="4.8" transform="rotate(171 446 235)"/><ellipse cx="443" cy="364" rx="3" ry="3.1" transform="rotate(99 443 364)"/><ellipse cx="371" cy="208" rx="1.8" ry="3" transform="rotate(109 371 208)"/><ellipse cx="465" cy="110" rx="2" ry="6.8" transform="rotate(142 465 110)"/><ellipse cx="499" cy="257" rx="1.8" ry="6" transform="rotate(116 499 257)"/><ellipse cx="577" cy="90" rx="1.9" ry="5" transform="rotate(180 577 90)"/><ellipse cx="562" cy="359" rx="2.7" ry="3.4" transform="rotate(51 562 359)"/><ellipse cx="365" cy="278" rx="2.8" ry="5.4" transform="rotate(169 365 278)"/><ellipse cx="464" cy="337" rx="1.5" ry="6.1" transform="rotate(39 464 337)"/><ellipse cx="374" cy="283" rx="1.5" ry="4.2" transform="rotate(138 374 283)"/><ellipse cx="589" cy="110" rx="2.5" ry="5.6" transform="rotate(111 589 110)"/><ellipse cx="521" cy="258" rx="1.9" ry="4.2" transform="rotate(154 521 258)"/><ellipse cx="370" cy="141" rx="1.9" ry="3" transform="rotate(79 370 141)"/><ellipse cx="491" cy="291" rx="2.7" ry="6.1" transform="rotate(166 491 291)"/><ellipse cx="425" cy="85" rx="1.2" ry="2.4" transform="rotate(129 425 85)"/><ellipse cx="430" cy="348" rx="1.8" ry="3.2" transform="rotate(32 430 348)"/><ellipse cx="579" cy="189" rx="2" ry="3.3" transform="rotate(33 579 189)"/><ellipse cx="494" cy="290" rx="2.9" ry="3.5" transform="rotate(29 494 290)"/><ellipse cx="605" cy="148" rx="1.5" ry="6.8" transform="rotate(148 605 148)"/><ellipse cx="580" cy="89" rx="1.8" ry="3.8" transform="rotate(42 580 89)"/><ellipse cx="584" cy="86" rx="2.9" ry="5.2" transform="rotate(59 584 86)"/><ellipse cx="380" cy="195" rx="2.3" ry="6.3" transform="rotate(88 380 195)"/><ellipse cx="386" cy="343" rx="1.7" ry="2.9" transform="rotate(179 386 343)"/><ellipse cx="528" cy="273" rx="2.3" ry="2.3" transform="rotate(131 528 273)"/><ellipse cx="599" cy="286" rx="1.1" ry="6.5" transform="rotate(165 599 286)"/><ellipse cx="529" cy="146" rx="2.6" ry="3.7" transform="rotate(13 529 146)"/><ellipse cx="407" cy="320" rx="2.9" ry="4.9" transform="rotate(170 407 320)"/><ellipse cx="491" cy="227" rx="1.5" ry="3.3" transform="rotate(133 491 227)"/><ellipse cx="607" cy="120" rx="1.4" ry="6.3" transform="rotate(6 607 120)"/><ellipse cx="375" cy="269" rx="2.3" ry="6.7" transform="rotate(6 375 269)"/><ellipse cx="499" cy="164" rx="1.5" ry="3.1" transform="rotate(178 499 164)"/><ellipse cx="368" cy="241" rx="2.9" ry="3.3" transform="rotate(116 368 241)"/><ellipse cx="449" cy="348" rx="1.4" ry="3.5" transform="rotate(68 449 348)"/><ellipse cx="380" cy="227" rx="2" ry="3.5" transform="rotate(43 380 227)"/><ellipse cx="419" cy="136" rx="2.8" ry="2.5" transform="rotate(148 419 136)"/><ellipse cx="458" cy="160" rx="2.4" ry="4.1" transform="rotate(155 458 160)"/><ellipse cx="545" cy="164" rx="2.5" ry="6.3" transform="rotate(52 545 164)"/><ellipse cx="535" cy="246" rx="1.2" ry="6.2" transform="rotate(135 535 246)"/><ellipse cx="562" cy="102" rx="1.1" ry="4.5" transform="rotate(120 562 102)"/><ellipse cx="467" cy="222" rx="2.8" ry="6.6" transform="rotate(113 467 222)"/><ellipse cx="603" cy="125" rx="2.7" ry="7" transform="rotate(60 603 125)"/><ellipse cx="537" cy="248" rx="2.1" ry="3.1" transform="rotate(72 537 248)"/><ellipse cx="474" cy="91" rx="2.4" ry="5.5" transform="rotate(52 474 91)"/><ellipse cx="432" cy="276" rx="1.7" ry="3.4" transform="rotate(172 432 276)"/><ellipse cx="496" cy="281" rx="2.7" ry="5.2" transform="rotate(142 496 281)"/><ellipse cx="372" cy="316" rx="2.7" ry="2.8" transform="rotate(98 372 316)"/><ellipse cx="567" cy="247" rx="1.7" ry="5.7" transform="rotate(17 567 247)"/><ellipse cx="404" cy="339" rx="2.6" ry="3" transform="rotate(41 404 339)"/><ellipse cx="564" cy="351" rx="2.8" ry="2.5" transform="rotate(43 564 351)"/><ellipse cx="568" cy="321" rx="2.5" ry="4.4" transform="rotate(17 568 321)"/><ellipse cx="568" cy="201" rx="1.8" ry="5.5" transform="rotate(160 568 201)"/><ellipse cx="382" cy="205" rx="1.9" ry="3.2" transform="rotate(33 382 205)"/><ellipse cx="541" cy="150" rx="2.5" ry="5" transform="rotate(146 541 150)"/><ellipse cx="596" cy="174" rx="1.8" ry="5.1" transform="rotate(169 596 174)"/><ellipse cx="481" cy="339" rx="2.9" ry="4.7" transform="rotate(69 481 339)"/><ellipse cx="575" cy="205" rx="2.9" ry="6.7" transform="rotate(23 575 205)"/><ellipse cx="383" cy="253" rx="2" ry="4.9" transform="rotate(159 383 253)"/><ellipse cx="557" cy="166" rx="1.5" ry="5.4" transform="rotate(144 557 166)"/><ellipse cx="421" cy="118" rx="2.3" ry="6.9" transform="rotate(119 421 118)"/><ellipse cx="581" cy="292" rx="1" ry="2.8" transform="rotate(149 581 292)"/><ellipse cx="398" cy="298" rx="2.9" ry="5.5" transform="rotate(18 398 298)"/><ellipse cx="469" cy="361" rx="1.1" ry="3.1" transform="rotate(112 469 361)"/><ellipse cx="606" cy="316" rx="2.6" ry="3.5" transform="rotate(163 606 316)"/><ellipse cx="488" cy="266" rx="2.8" ry="6" transform="rotate(179 488 266)"/><ellipse cx="458" cy="306" rx="2.3" ry="6.9" transform="rotate(31 458 306)"/><ellipse cx="561" cy="117" rx="2" ry="4.5" transform="rotate(35 561 117)"/><ellipse cx="413" cy="88" rx="2.7" ry="6.9" transform="rotate(86 413 88)"/><ellipse cx="562" cy="165" rx="1.3" ry="5.7" transform="rotate(86 562 165)"/><ellipse cx="535" cy="346" rx="1.7" ry="4.5" transform="rotate(115 535 346)"/><ellipse cx="504" cy="208" rx="2" ry="2.5" transform="rotate(89 504 208)"/><ellipse cx="372" cy="309" rx="1.2" ry="4.5" transform="rotate(161 372 309)"/><ellipse cx="431" cy="196" rx="2.3" ry="6.2" transform="rotate(45 431 196)"/><ellipse cx="497" cy="200" rx="1.3" ry="3.3" transform="rotate(163 497 200)"/><ellipse cx="481" cy="367" rx="2.3" ry="5.3" transform="rotate(138 481 367)"/><ellipse cx="463" cy="242" rx="1.6" ry="2.3" transform="rotate(20 463 242)"/><ellipse cx="517" cy="280" rx="2" ry="4.6" transform="rotate(5 517 280)"/><ellipse cx="435" cy="371" rx="1.1" ry="4.3" transform="rotate(122 435 371)"/><ellipse cx="585" cy="323" rx="1.4" ry="7" transform="rotate(11 585 323)"/><ellipse cx="411" cy="335" rx="2.1" ry="2.2" transform="rotate(144 411 335)"/><ellipse cx="608" cy="366" rx="1.7" ry="7" transform="rotate(8 608 366)"/><ellipse cx="458" cy="127" rx="1.7" ry="6.3" transform="rotate(37 458 127)"/><ellipse cx="416" cy="187" rx="1" ry="3.6" transform="rotate(77 416 187)"/><ellipse cx="476" cy="163" rx="2.9" ry="3.3" transform="rotate(62 476 163)"/><ellipse cx="428" cy="192" rx="1.1" ry="6.1" transform="rotate(48 428 192)"/><ellipse cx="394" cy="326" rx="2.9" ry="3.6" transform="rotate(30 394 326)"/><ellipse cx="479" cy="253" rx="1.1" ry="6.5" transform="rotate(22 479 253)"/><ellipse cx="425" cy="329" rx="1.3" ry="4.4" transform="rotate(73 425 329)"/><ellipse cx="569" cy="335" rx="1.3" ry="5.2" transform="rotate(122 569 335)"/><ellipse cx="369" cy="118" rx="2.6" ry="4.2" transform="rotate(131 369 118)"/><ellipse cx="419" cy="308" rx="2" ry="3.1" transform="rotate(84 419 308)"/><ellipse cx="549" cy="297" rx="1.9" ry="5" transform="rotate(65 549 297)"/><ellipse cx="593" cy="179" rx="1.4" ry="2.3" transform="rotate(139 593 179)"/><ellipse cx="507" cy="291" rx="2.1" ry="5.8" transform="rotate(69 507 291)"/><ellipse cx="515" cy="249" rx="2.5" ry="2.9" transform="rotate(109 515 249)"/></g><path d="M415 187 L484 191 L484 207 L422 220 Z" fill="#c4b6a2" opacity="0.55"/><path d="M490 191 L559 187 L552 220 L490 207 Z" fill="#c4b6a2" opacity="0.55"/><path d="M417.0 187 L418.0 220.0 M490.0 191 L489.0 207.0 M420.1 187 L421.1 219.4 M493.1 191 L492.1 207.6 M423.2 187 L424.2 218.8 M496.2 191 L495.2 208.2 M426.3 187 L427.3 218.2 M499.3 191 L498.3 208.8 M429.4 187 L430.4 217.6 M502.4 191 L501.4 209.4 M432.5 187 L433.5 217.0 M505.5 191 L504.5 210.0 M435.6 187 L436.6 216.4 M508.6 191 L507.6 210.6 M438.7 187 L439.7 215.8 M511.7 191 L510.7 211.2 M441.8 187 L442.8 215.2 M514.8 191 L513.8 211.8 M444.9 187 L445.9 214.6 M517.9 191 L516.9 212.4 M448.0 187 L449.0 214.0 M521.0 191 L520.0 213.0 M451.1 187 L452.1 213.4 M524.1 191 L523.1 213.6 M454.2 187 L455.2 212.8 M527.2 191 L526.2 214.2 M457.3 187 L458.3 212.2 M530.3 191 L529.3 214.8 M460.4 187 L461.4 211.6 M533.4 191 L532.4 215.4 M463.5 187 L464.5 211.0 M536.5 191 L535.5 216.0 M466.6 187 L467.6 210.4 M539.6 191 L538.6 216.6 M469.7 187 L470.7 209.8 M542.7 191 L541.7 217.2 M472.8 187 L473.8 209.2 M545.8 191 L544.8 217.8 M475.9 187 L476.9 208.6 M548.9 191 L547.9 218.4 M479.0 187 L480.0 208.0 M552.0 191 L551.0 219.0 M482.1 187 L483.1 207.4 M555.1 191 L554.1 219.6" stroke="#ebe6dd" stroke-width="1.3" opacity="0.9"/><path d="M414 239 L469 296 L479 288 L430 225 Z" fill="#c4b6a2" opacity="0.55"/><path d="M416.0 239.6 L432.3 225.4 M418.3 242.0 L434.4 228.0 M420.6 244.3 L436.4 230.7 M422.9 246.7 L438.4 233.3 M425.2 249.1 L440.5 235.9 M427.5 251.5 L442.5 238.5 M429.8 253.9 L444.5 241.1 M432.1 256.2 L446.5 243.8 M434.4 258.6 L448.6 246.4 M436.7 261.0 L450.6 249.0 M439.0 263.4 L452.6 251.6 M441.3 265.8 L454.7 254.2 M443.7 268.1 L456.7 256.9 M446.0 270.5 L458.7 259.5 M448.3 272.9 L460.7 262.1 M450.6 275.3 L462.8 264.7 M452.9 277.7 L464.8 267.3 M455.2 280.0 L466.8 270.0 M457.5 282.4 L468.8 272.6 M459.8 284.8 L470.9 275.2 M462.1 287.2 L472.9 277.8 M464.4 289.6 L474.9 280.4 M466.7 291.9 L477.0 283.1" stroke="#ebe6dd" stroke-width="1.3" fill="none" opacity="0.9"/><path d="M422 232 L474 292" stroke="#efebe3" stroke-width="2.2"/><path d="M544 225 L495 288 L505 296 L560 239 Z" fill="#c4b6a2" opacity="0.55"/><path d="M541.7 225.4 L558.0 239.6 M539.6 228.0 L555.7 242.0 M537.6 230.7 L553.4 244.3 M535.6 233.3 L551.1 246.7 M533.5 235.9 L548.8 249.1 M531.5 238.5 L546.5 251.5 M529.5 241.1 L544.2 253.9 M527.5 243.8 L541.9 256.2 M525.4 246.4 L539.6 258.6 M523.4 249.0 L537.3 261.0 M521.4 251.6 L535.0 263.4 M519.3 254.2 L532.7 265.8 M517.3 256.9 L530.3 268.1 M515.3 259.5 L528.0 270.5 M513.3 262.1 L525.7 272.9 M511.2 264.7 L523.4 275.3 M509.2 267.3 L521.1 277.7 M507.2 270.0 L518.8 280.0 M505.2 272.6 L516.5 282.4 M503.1 275.2 L514.2 284.8 M501.1 277.8 L511.9 287.2 M499.1 280.4 L509.6 289.6 M497.0 283.1 L507.3 291.9" stroke="#ebe6dd" stroke-width="1.3" fill="none" opacity="0.9"/><path d="M552 232 L500 292" stroke="#efebe3" stroke-width="2.2"/><path d="M388 305 L434 239 L426 233 L376 295 Z" fill="#c4b6a2" opacity="0.55"/><path d="M390.2 300.2 L377.6 290.7 M392.0 297.5 L379.6 288.2 M393.9 294.9 L381.7 285.8 M395.7 292.3 L383.7 283.3 M397.5 289.6 L385.7 280.8 M399.3 287.0 L387.7 278.3 M401.1 284.3 L389.8 275.8 M402.9 281.7 L391.8 273.3 M404.8 279.1 L393.8 270.9 M406.6 276.4 L395.8 268.4 M408.4 273.8 L397.8 265.9 M410.2 271.2 L399.9 263.4 M412.0 268.5 L401.9 260.9 M413.8 265.9 L403.9 258.4 M415.7 263.2 L405.9 256.0 M417.5 260.6 L408.0 253.5 M419.3 258.0 L410.0 251.0 M421.1 255.3 L412.0 248.5 M422.9 252.7 L414.0 246.0 M424.8 250.1 L416.0 243.5 M426.6 247.4 L418.1 241.1 M428.4 244.8 L420.1 238.6 M430.2 242.2 L422.1 236.1 M432.0 239.5 L424.1 233.6" stroke="#ebe6dd" stroke-width="1.3" fill="none" opacity="0.9"/><path d="M382 300 L430 236" stroke="#efebe3" stroke-width="2.2"/><path d="M598 295 L549 233 L541 239 L586 305 Z" fill="#c4b6a2" opacity="0.55"/><path d="M596.4 290.7 L583.7 300.0 M594.3 288.1 L581.9 297.2 M592.3 285.5 L580.0 294.5 M590.2 282.9 L578.1 291.8 M588.1 280.3 L576.3 289.0 M586.1 277.7 L574.4 286.3 M584.0 275.2 L572.6 283.5 M581.9 272.6 L570.7 280.8 M579.9 270.0 L568.9 278.0 M577.8 267.4 L567.0 275.3 M575.7 264.8 L565.2 272.5 M573.7 262.2 L563.3 269.8 M571.6 259.6 L561.5 267.0 M569.5 257.0 L559.6 264.3 M567.5 254.4 L557.8 261.6 M565.4 251.9 L555.9 258.8 M563.3 249.3 L554.1 256.1 M561.3 246.7 L552.2 253.3 M559.2 244.1 L550.4 250.6 M557.1 241.5 L548.5 247.8 M555.1 238.9 L546.7 245.1 M553.0 236.3 L544.8 242.3 M550.9 233.7 L543.0 239.6" stroke="#ebe6dd" stroke-width="1.3" fill="none" opacity="0.9"/><path d="M592 300 L545 236" stroke="#efebe3" stroke-width="2.2"/><path d="M420 80 C425 120 430 150 430 180 M554 80 C550 120 548 150 548 180" stroke="#eeeae2" stroke-width="4" fill="none" opacity="0.8"/><path d="M370 178 C430 181 540 181 600 178 L600 185 C540 188 430 188 370 185Z" fill="#ece8e0" opacity="0.9"/><rect x="486.5" y="186" width="2" height="190" fill="#cbc2b3" opacity="0.5"/><g fill="#f3efe6" opacity="0.65"><ellipse cx="408" cy="949" rx="1" ry="4.5"/><ellipse cx="497" cy="878" rx="2.1" ry="8.5"/><ellipse cx="611" cy="861" rx="1.2" ry="7.4"/><ellipse cx="330" cy="674" rx="1.8" ry="10.8"/><ellipse cx="449" cy="910" rx="2" ry="3.3"/><ellipse cx="501" cy="981" rx="2" ry="5.4"/><ellipse cx="729" cy="881" rx="2.5" ry="9.8"/><ellipse cx="523" cy="818" rx="1.8" ry="5.6"/><ellipse cx="696" cy="712" rx="2.6" ry="5.7"/><ellipse cx="432" cy="863" rx="1.4" ry="7.9"/><ellipse cx="185" cy="944" rx="1.1" ry="10"/><ellipse cx="699" cy="918" rx="2.2" ry="4.5"/><ellipse cx="514" cy="691" rx="2.2" ry="9.3"/><ellipse cx="285" cy="811" rx="1.1" ry="8.3"/><ellipse cx="597" cy="691" rx="1.9" ry="10"/><ellipse cx="264" cy="956" rx="1.4" ry="3.1"/><ellipse cx="204" cy="909" rx="1.2" ry="9.9"/><ellipse cx="429" cy="698" rx="2.3" ry="5.6"/><ellipse cx="234" cy="673" rx="1.4" ry="6.7"/><ellipse cx="467" cy="854" rx="1" ry="3"/><ellipse cx="718" cy="805" rx="2.1" ry="10.2"/><ellipse cx="530" cy="904" rx="1.3" ry="4.7"/><ellipse cx="478" cy="981" rx="2.6" ry="4.9"/><ellipse cx="556" cy="763" rx="1.5" ry="5.3"/><ellipse cx="787" cy="792" rx="1.7" ry="3.7"/><ellipse cx="693" cy="699" rx="2.3" ry="4.9"/><ellipse cx="301" cy="685" rx="1.5" ry="10.6"/><ellipse cx="381" cy="776" rx="2.2" ry="4.8"/><ellipse cx="635" cy="975" rx="2.4" ry="3.3"/><ellipse cx="650" cy="919" rx="2.3" ry="7.6"/><ellipse cx="218" cy="884" rx="1.9" ry="6.9"/><ellipse cx="641" cy="729" rx="1.5" ry="8.1"/><ellipse cx="724" cy="982" rx="2.4" ry="5.1"/><ellipse cx="420" cy="836" rx="1.7" ry="3.6"/><ellipse cx="384" cy="963" rx="1.5" ry="10"/><ellipse cx="721" cy="833" rx="2.5" ry="10.8"/><ellipse cx="156" cy="857" rx="2.5" ry="5.5"/><ellipse cx="382" cy="720" rx="2.4" ry="7.5"/><ellipse cx="529" cy="859" rx="2.4" ry="7.1"/><ellipse cx="502" cy="812" rx="1.5" ry="10.8"/><ellipse cx="564" cy="827" rx="1.1" ry="8.1"/><ellipse cx="178" cy="820" rx="1.3" ry="6.1"/><ellipse cx="292" cy="742" rx="1.6" ry="4"/><ellipse cx="311" cy="897" rx="1.1" ry="9.8"/><ellipse cx="413" cy="738" rx="2.2" ry="6"/><ellipse cx="385" cy="672" rx="1.2" ry="10.5"/><ellipse cx="466" cy="808" rx="1.9" ry="3.7"/><ellipse cx="247" cy="942" rx="2" ry="5.6"/><ellipse cx="702" cy="763" rx="1.7" ry="9.3"/><ellipse cx="695" cy="760" rx="2.6" ry="4.7"/><ellipse cx="320" cy="833" rx="1.9" ry="7.3"/><ellipse cx="449" cy="916" rx="1.3" ry="6.5"/><ellipse cx="582" cy="951" rx="1.3" ry="5.8"/><ellipse cx="451" cy="756" rx="1.8" ry="10.5"/><ellipse cx="299" cy="932" rx="2.4" ry="6.9"/><ellipse cx="375" cy="709" rx="1.8" ry="9.8"/><ellipse cx="394" cy="752" rx="2.3" ry="4.3"/><ellipse cx="511" cy="912" rx="1.8" ry="5.3"/><ellipse cx="533" cy="777" rx="2" ry="9.4"/><ellipse cx="663" cy="914" rx="1.1" ry="5.2"/><ellipse cx="578" cy="871" rx="2.4" ry="6.5"/><ellipse cx="189" cy="695" rx="1" ry="7.3"/><ellipse cx="357" cy="684" rx="2.4" ry="3.5"/><ellipse cx="373" cy="915" rx="2.1" ry="4.7"/><ellipse cx="766" cy="812" rx="2.3" ry="6.4"/><ellipse cx="564" cy="971" rx="1" ry="7.5"/><ellipse cx="528" cy="975" rx="1.9" ry="5.1"/><ellipse cx="239" cy="845" rx="1.2" ry="5.8"/><ellipse cx="764" cy="729" rx="1.2" ry="8.4"/><ellipse cx="472" cy="956" rx="1.5" ry="9.1"/><ellipse cx="415" cy="983" rx="2.5" ry="4.6"/><ellipse cx="388" cy="820" rx="1.7" ry="7.7"/><ellipse cx="592" cy="719" rx="2" ry="9.6"/><ellipse cx="413" cy="756" rx="1.3" ry="7.9"/><ellipse cx="227" cy="738" rx="1.4" ry="8.5"/><ellipse cx="625" cy="842" rx="1.2" ry="5.8"/><ellipse cx="189" cy="984" rx="1.7" ry="9.7"/><ellipse cx="308" cy="758" rx="1.1" ry="6.1"/><ellipse cx="589" cy="845" rx="1.4" ry="4"/><ellipse cx="324" cy="913" rx="1.2" ry="10.9"/><ellipse cx="686" cy="725" rx="0.9" ry="9.6"/><ellipse cx="178" cy="882" rx="1.8" ry="6.3"/><ellipse cx="522" cy="677" rx="2.2" ry="9.7"/><ellipse cx="174" cy="760" rx="2.3" ry="4.6"/><ellipse cx="243" cy="924" rx="2.6" ry="10.9"/><ellipse cx="274" cy="713" rx="0.9" ry="3.9"/><ellipse cx="360" cy="973" rx="2.2" ry="4.4"/><ellipse cx="404" cy="844" rx="1.2" ry="3.5"/><ellipse cx="272" cy="766" rx="1" ry="10.8"/><ellipse cx="773" cy="820" rx="1.6" ry="7.4"/><ellipse cx="684" cy="801" rx="2.5" ry="10.7"/><ellipse cx="327" cy="853" rx="2.5" ry="5.4"/><ellipse cx="785" cy="829" rx="2" ry="3.8"/><ellipse cx="403" cy="877" rx="1.2" ry="10.8"/><ellipse cx="404" cy="850" rx="2.2" ry="5.5"/><ellipse cx="599" cy="901" rx="2.2" ry="5.5"/><ellipse cx="367" cy="855" rx="1.7" ry="6.8"/><ellipse cx="512" cy="909" rx="1.1" ry="4.7"/><ellipse cx="231" cy="834" rx="1.3" ry="10.4"/><ellipse cx="282" cy="812" rx="2.2" ry="5.3"/><ellipse cx="201" cy="744" rx="2.1" ry="5.8"/><ellipse cx="755" cy="721" rx="1.4" ry="7"/><ellipse cx="364" cy="765" rx="1.1" ry="7"/><ellipse cx="629" cy="788" rx="2.6" ry="8"/><ellipse cx="382" cy="787" rx="1.4" ry="3.8"/><ellipse cx="452" cy="839" rx="2.3" ry="3.6"/><ellipse cx="169" cy="956" rx="1.5" ry="8.8"/><ellipse cx="711" cy="760" rx="1.2" ry="9.2"/><ellipse cx="344" cy="829" rx="0.9" ry="7.7"/><ellipse cx="432" cy="738" rx="1.2" ry="10.4"/><ellipse cx="725" cy="769" rx="1.4" ry="5.7"/><ellipse cx="371" cy="792" rx="2.5" ry="3.1"/><ellipse cx="382" cy="844" rx="1.9" ry="5.7"/><ellipse cx="612" cy="806" rx="1.2" ry="10.3"/><ellipse cx="283" cy="892" rx="2.5" ry="4.4"/><ellipse cx="634" cy="916" rx="1.5" ry="10.3"/><ellipse cx="239" cy="834" rx="2.6" ry="7.2"/><ellipse cx="711" cy="798" rx="2" ry="6.9"/><ellipse cx="604" cy="902" rx="2.1" ry="9.1"/><ellipse cx="287" cy="876" rx="2.3" ry="9"/><ellipse cx="264" cy="844" rx="0.9" ry="10.8"/><ellipse cx="565" cy="749" rx="1.9" ry="5.5"/><ellipse cx="507" cy="918" rx="2.4" ry="10.9"/><ellipse cx="572" cy="840" rx="1.8" ry="4.2"/><ellipse cx="171" cy="950" rx="2.6" ry="9.6"/><ellipse cx="271" cy="868" rx="1.2" ry="5.6"/><ellipse cx="656" cy="964" rx="0.9" ry="9.2"/><ellipse cx="605" cy="890" rx="1.2" ry="5.8"/><ellipse cx="627" cy="736" rx="1.2" ry="6.8"/><ellipse cx="259" cy="754" rx="1.2" ry="4.7"/><ellipse cx="215" cy="801" rx="1.5" ry="4.1"/><ellipse cx="264" cy="798" rx="1" ry="5.4"/><ellipse cx="179" cy="903" rx="1.1" ry="6.8"/><ellipse cx="237" cy="886" rx="2.6" ry="8.6"/><ellipse cx="205" cy="733" rx="1.2" ry="10.1"/><ellipse cx="203" cy="911" rx="2.2" ry="9.7"/><ellipse cx="422" cy="803" rx="1.5" ry="8.2"/><ellipse cx="459" cy="893" rx="1.6" ry="9.7"/><ellipse cx="533" cy="757" rx="1.6" ry="4.9"/><ellipse cx="737" cy="687" rx="1.6" ry="6.4"/><ellipse cx="538" cy="704" rx="2" ry="4.1"/><ellipse cx="328" cy="770" rx="1" ry="11"/><ellipse cx="189" cy="955" rx="2.1" ry="10.4"/><ellipse cx="529" cy="843" rx="1.7" ry="7.4"/><ellipse cx="361" cy="727" rx="1.9" ry="9.4"/><ellipse cx="775" cy="956" rx="1.9" ry="4.6"/><ellipse cx="508" cy="723" rx="2.4" ry="9"/><ellipse cx="391" cy="773" rx="2.4" ry="6.5"/><ellipse cx="200" cy="881" rx="1.6" ry="3.9"/><ellipse cx="698" cy="738" rx="1.2" ry="7.2"/><ellipse cx="309" cy="776" rx="1.7" ry="10.4"/><ellipse cx="528" cy="807" rx="2.3" ry="10.4"/><ellipse cx="737" cy="680" rx="2.3" ry="9.2"/><ellipse cx="606" cy="900" rx="2" ry="4.7"/><ellipse cx="746" cy="921" rx="1.3" ry="7.3"/><ellipse cx="270" cy="746" rx="2" ry="4.1"/><ellipse cx="155" cy="865" rx="1.9" ry="10.3"/><ellipse cx="167" cy="769" rx="1.1" ry="10.3"/><ellipse cx="666" cy="720" rx="1.7" ry="8.5"/><ellipse cx="547" cy="823" rx="1.8" ry="4.7"/><ellipse cx="190" cy="721" rx="1.8" ry="4.1"/><ellipse cx="716" cy="764" rx="0.9" ry="8.2"/><ellipse cx="575" cy="905" rx="1.7" ry="10.3"/><ellipse cx="583" cy="964" rx="2.3" ry="5.2"/><ellipse cx="426" cy="737" rx="2" ry="6.1"/><ellipse cx="445" cy="787" rx="1.2" ry="7.7"/><ellipse cx="614" cy="781" rx="1.1" ry="7.9"/><ellipse cx="549" cy="844" rx="2.3" ry="10.5"/><ellipse cx="638" cy="859" rx="2.5" ry="7.5"/><ellipse cx="481" cy="737" rx="1.4" ry="5.9"/><ellipse cx="320" cy="758" rx="1.2" ry="3.8"/><ellipse cx="506" cy="808" rx="2.3" ry="8.8"/><ellipse cx="745" cy="957" rx="1.1" ry="8.3"/><ellipse cx="743" cy="698" rx="1.1" ry="3.2"/><ellipse cx="264" cy="968" rx="2.4" ry="4.1"/><ellipse cx="153" cy="705" rx="2.4" ry="5.6"/><ellipse cx="515" cy="785" rx="1.6" ry="8.1"/><ellipse cx="752" cy="692" rx="1.6" ry="8.7"/><ellipse cx="654" cy="868" rx="1.4" ry="3.2"/><ellipse cx="297" cy="847" rx="2.4" ry="7.7"/><ellipse cx="532" cy="792" rx="2.2" ry="10.8"/><ellipse cx="454" cy="873" rx="1.8" ry="5"/><ellipse cx="730" cy="695" rx="1.6" ry="10.4"/><ellipse cx="516" cy="794" rx="1.3" ry="6"/><ellipse cx="629" cy="885" rx="2" ry="10.6"/><ellipse cx="386" cy="761" rx="2" ry="10.4"/><ellipse cx="602" cy="940" rx="2.3" ry="3.2"/><ellipse cx="558" cy="749" rx="2.1" ry="9.3"/><ellipse cx="665" cy="732" rx="1.5" ry="4.3"/><ellipse cx="680" cy="893" rx="1.9" ry="7.4"/><ellipse cx="621" cy="814" rx="1.2" ry="10.6"/><ellipse cx="645" cy="827" rx="1.9" ry="4.7"/><ellipse cx="300" cy="689" rx="2" ry="9.5"/><ellipse cx="318" cy="733" rx="1.6" ry="5.3"/><ellipse cx="634" cy="749" rx="1.3" ry="6.2"/><ellipse cx="700" cy="895" rx="1.1" ry="4.1"/><ellipse cx="183" cy="881" rx="2" ry="4.3"/><ellipse cx="331" cy="939" rx="1" ry="8.9"/><ellipse cx="680" cy="877" rx="1.4" ry="8.9"/><ellipse cx="740" cy="847" rx="2" ry="7.8"/><ellipse cx="745" cy="977" rx="2" ry="6.9"/><ellipse cx="229" cy="825" rx="1.6" ry="8.4"/><ellipse cx="461" cy="748" rx="1.2" ry="9"/><ellipse cx="515" cy="913" rx="1.2" ry="6.6"/><ellipse cx="224" cy="726" rx="1.5" ry="5.2"/><ellipse cx="760" cy="705" rx="1.8" ry="3.7"/><ellipse cx="717" cy="704" rx="2.4" ry="5.5"/><ellipse cx="379" cy="703" rx="2" ry="3.6"/><ellipse cx="578" cy="839" rx="1.4" ry="8.2"/><ellipse cx="604" cy="692" rx="2.5" ry="10"/><ellipse cx="661" cy="961" rx="1.5" ry="4"/><ellipse cx="426" cy="959" rx="2.1" ry="3.9"/><ellipse cx="630" cy="925" rx="1.7" ry="8.2"/><ellipse cx="708" cy="805" rx="2.2" ry="7.6"/><ellipse cx="653" cy="937" rx="1.2" ry="4.5"/><ellipse cx="525" cy="781" rx="1.4" ry="3"/><ellipse cx="434" cy="984" rx="1.6" ry="4.7"/><ellipse cx="388" cy="860" rx="0.9" ry="4.4"/><ellipse cx="486" cy="786" rx="2.1" ry="4"/><ellipse cx="190" cy="958" rx="2.2" ry="8.1"/><ellipse cx="536" cy="732" rx="1.2" ry="6.6"/><ellipse cx="587" cy="817" rx="1.8" ry="3.6"/><ellipse cx="757" cy="747" rx="1.6" ry="9.4"/><ellipse cx="756" cy="787" rx="1.7" ry="9.7"/><ellipse cx="463" cy="709" rx="1.3" ry="5.7"/><ellipse cx="152" cy="692" rx="2.4" ry="9.7"/><ellipse cx="680" cy="767" rx="1.5" ry="10.5"/><ellipse cx="183" cy="808" rx="1.5" ry="8.9"/><ellipse cx="589" cy="983" rx="2.5" ry="7.9"/><ellipse cx="737" cy="859" rx="1.3" ry="7.1"/><ellipse cx="322" cy="957" rx="2.3" ry="3.8"/><ellipse cx="565" cy="874" rx="2.2" ry="4.2"/><ellipse cx="523" cy="706" rx="1.6" ry="5.9"/><ellipse cx="378" cy="800" rx="1.8" ry="3.9"/><ellipse cx="488" cy="695" rx="2.1" ry="3.3"/><ellipse cx="460" cy="673" rx="2.2" ry="10.5"/><ellipse cx="627" cy="815" rx="1.7" ry="9"/><ellipse cx="199" cy="783" rx="1.7" ry="4.4"/><ellipse cx="443" cy="782" rx="1.1" ry="7.7"/><ellipse cx="429" cy="711" rx="1.8" ry="4.8"/><ellipse cx="514" cy="772" rx="2.1" ry="7.8"/><ellipse cx="152" cy="777" rx="2.2" ry="5.7"/><ellipse cx="643" cy="942" rx="2.5" ry="9"/><ellipse cx="423" cy="822" rx="1" ry="5.4"/><ellipse cx="318" cy="922" rx="2.2" ry="8"/><ellipse cx="639" cy="807" rx="2" ry="5.9"/><ellipse cx="159" cy="836" rx="2.4" ry="7"/><ellipse cx="728" cy="793" rx="1.3" ry="4.3"/><ellipse cx="425" cy="769" rx="1.1" ry="5.5"/><ellipse cx="760" cy="916" rx="1.6" ry="4.9"/><ellipse cx="468" cy="776" rx="2" ry="5.2"/><ellipse cx="548" cy="912" rx="1.4" ry="4.8"/><ellipse cx="513" cy="851" rx="2.4" ry="9.5"/><ellipse cx="445" cy="827" rx="2.2" ry="7.6"/><ellipse cx="227" cy="791" rx="1.1" ry="8.4"/><ellipse cx="649" cy="871" rx="1" ry="6.2"/><ellipse cx="161" cy="886" rx="2.2" ry="4.6"/><ellipse cx="608" cy="687" rx="1.1" ry="10.4"/><ellipse cx="288" cy="875" rx="2.5" ry="9.1"/><ellipse cx="442" cy="806" rx="1.6" ry="4.2"/><ellipse cx="652" cy="835" rx="2.2" ry="6.8"/><ellipse cx="301" cy="753" rx="1.1" ry="8.8"/><ellipse cx="470" cy="793" rx="2.6" ry="5.9"/><ellipse cx="377" cy="742" rx="1.4" ry="5"/><ellipse cx="477" cy="803" rx="1.7" ry="9.7"/><ellipse cx="375" cy="862" rx="1.8" ry="10.6"/><ellipse cx="532" cy="963" rx="1.5" ry="4.5"/><ellipse cx="283" cy="928" rx="1.1" ry="5.3"/><ellipse cx="693" cy="692" rx="2.1" ry="6.1"/><ellipse cx="293" cy="968" rx="2.4" ry="4.7"/><ellipse cx="235" cy="846" rx="1" ry="10.6"/><ellipse cx="360" cy="771" rx="1" ry="6.9"/><ellipse cx="509" cy="712" rx="2.1" ry="7.1"/><ellipse cx="675" cy="960" rx="2.4" ry="6.5"/><ellipse cx="372" cy="871" rx="1.6" ry="6.6"/><ellipse cx="308" cy="719" rx="1.1" ry="8.1"/><ellipse cx="734" cy="979" rx="1.4" ry="4.6"/><ellipse cx="205" cy="705" rx="2.3" ry="5.8"/><ellipse cx="386" cy="733" rx="2.1" ry="4.5"/><ellipse cx="760" cy="679" rx="2.5" ry="6.3"/><ellipse cx="434" cy="829" rx="1.3" ry="10.3"/><ellipse cx="482" cy="842" rx="2.4" ry="8.3"/><ellipse cx="687" cy="709" rx="1.4" ry="4.7"/><ellipse cx="478" cy="754" rx="2.4" ry="4.7"/><ellipse cx="399" cy="799" rx="1.4" ry="8.7"/><ellipse cx="465" cy="921" rx="1.5" ry="9.7"/><ellipse cx="684" cy="798" rx="2.5" ry="10.4"/><ellipse cx="294" cy="844" rx="2.4" ry="4.8"/><ellipse cx="705" cy="767" rx="2.3" ry="6"/><ellipse cx="754" cy="947" rx="1.5" ry="3.1"/><ellipse cx="546" cy="849" rx="1.4" ry="10.3"/><ellipse cx="418" cy="838" rx="1.3" ry="8.8"/><ellipse cx="493" cy="718" rx="2.5" ry="5.2"/><ellipse cx="237" cy="898" rx="1.6" ry="9.4"/><ellipse cx="422" cy="845" rx="2.1" ry="10"/><ellipse cx="255" cy="707" rx="1.7" ry="4.2"/><ellipse cx="659" cy="779" rx="1.5" ry="3.7"/><ellipse cx="325" cy="785" rx="1.4" ry="4.7"/><ellipse cx="330" cy="899" rx="1.1" ry="7"/><ellipse cx="565" cy="679" rx="2.3" ry="9.1"/><ellipse cx="307" cy="690" rx="1" ry="10"/><ellipse cx="177" cy="862" rx="1.9" ry="8.3"/><ellipse cx="437" cy="813" rx="1.7" ry="9.1"/><ellipse cx="215" cy="756" rx="1.7" ry="6.3"/><ellipse cx="542" cy="795" rx="2.5" ry="4.7"/><ellipse cx="740" cy="677" rx="2.3" ry="3.8"/><ellipse cx="335" cy="805" rx="2.4" ry="4.1"/><ellipse cx="476" cy="920" rx="1.7" ry="8.8"/><ellipse cx="789" cy="923" rx="1.3" ry="5.6"/><ellipse cx="501" cy="907" rx="2.6" ry="9.8"/><ellipse cx="650" cy="863" rx="2.1" ry="10"/><ellipse cx="662" cy="726" rx="1.3" ry="6.3"/><ellipse cx="767" cy="770" rx="2.3" ry="5.4"/><ellipse cx="603" cy="945" rx="2.6" ry="7.6"/><ellipse cx="531" cy="725" rx="2.3" ry="4.7"/><ellipse cx="231" cy="942" rx="1.8" ry="6.7"/><ellipse cx="272" cy="961" rx="2.1" ry="9.9"/><ellipse cx="400" cy="823" rx="1.8" ry="3.7"/><ellipse cx="163" cy="858" rx="1.5" ry="9.7"/><ellipse cx="638" cy="881" rx="1.9" ry="4.9"/><ellipse cx="522" cy="880" rx="1.3" ry="6.7"/><ellipse cx="195" cy="883" rx="1.6" ry="4.7"/><ellipse cx="605" cy="922" rx="1.3" ry="3.1"/><ellipse cx="524" cy="970" rx="1" ry="9.4"/><ellipse cx="538" cy="893" rx="0.9" ry="6.2"/><ellipse cx="178" cy="969" rx="2.6" ry="8.7"/><ellipse cx="530" cy="914" rx="1.1" ry="10.9"/><ellipse cx="397" cy="806" rx="0.9" ry="3.6"/><ellipse cx="743" cy="733" rx="1.8" ry="8.8"/><ellipse cx="617" cy="810" rx="2.1" ry="9.7"/><ellipse cx="280" cy="793" rx="1.9" ry="8.5"/><ellipse cx="514" cy="682" rx="1.3" ry="5.9"/><ellipse cx="704" cy="865" rx="1.4" ry="7.5"/><ellipse cx="340" cy="975" rx="2.1" ry="10"/><ellipse cx="400" cy="713" rx="2.2" ry="4.4"/><ellipse cx="695" cy="912" rx="2.4" ry="7.6"/><ellipse cx="562" cy="681" rx="1.4" ry="4"/><ellipse cx="190" cy="839" rx="1" ry="7"/><ellipse cx="250" cy="731" rx="2.3" ry="10.9"/><ellipse cx="555" cy="864" rx="1.2" ry="6.4"/><ellipse cx="720" cy="695" rx="1.5" ry="4.9"/><ellipse cx="293" cy="719" rx="2.1" ry="5.7"/><ellipse cx="781" cy="773" rx="2.1" ry="5.9"/><ellipse cx="643" cy="691" rx="2.6" ry="5"/><ellipse cx="623" cy="773" rx="0.9" ry="7.3"/><ellipse cx="231" cy="917" rx="1.3" ry="3.4"/><ellipse cx="495" cy="855" rx="2" ry="8.7"/><ellipse cx="182" cy="955" rx="2.3" ry="9"/><ellipse cx="154" cy="763" rx="1.2" ry="10.1"/><ellipse cx="323" cy="796" rx="1.3" ry="8.8"/><ellipse cx="227" cy="818" rx="2.2" ry="5.9"/><ellipse cx="295" cy="832" rx="1.2" ry="8.8"/><ellipse cx="671" cy="746" rx="1" ry="6"/><ellipse cx="157" cy="938" rx="2.5" ry="7.7"/><ellipse cx="485" cy="856" rx="1.5" ry="7.3"/><ellipse cx="543" cy="937" rx="1.4" ry="4.2"/><ellipse cx="434" cy="687" rx="1.4" ry="7.1"/><ellipse cx="697" cy="856" rx="2.6" ry="9.3"/><ellipse cx="780" cy="948" rx="1.5" ry="4.4"/><ellipse cx="597" cy="903" rx="1.6" ry="9.6"/><ellipse cx="563" cy="928" rx="0.9" ry="9.7"/><ellipse cx="713" cy="745" rx="2.3" ry="5.1"/><ellipse cx="694" cy="933" rx="2.3" ry="3.8"/><ellipse cx="275" cy="844" rx="1.3" ry="6"/><ellipse cx="764" cy="957" rx="1.2" ry="4.3"/><ellipse cx="648" cy="850" rx="0.9" ry="10.7"/><ellipse cx="267" cy="699" rx="2.4" ry="9.6"/><ellipse cx="214" cy="852" rx="2.5" ry="11"/><ellipse cx="731" cy="935" rx="2.5" ry="6.2"/><ellipse cx="605" cy="940" rx="2.3" ry="7.8"/><ellipse cx="687" cy="909" rx="2.5" ry="10.3"/><ellipse cx="709" cy="730" rx="1.5" ry="7"/><ellipse cx="152" cy="761" rx="2.4" ry="10.8"/><ellipse cx="464" cy="834" rx="1.1" ry="7.3"/><ellipse cx="747" cy="769" rx="2" ry="9.5"/><ellipse cx="441" cy="807" rx="2.1" ry="4.4"/><ellipse cx="367" cy="744" rx="1" ry="4.9"/><ellipse cx="682" cy="906" rx="1.6" ry="3.9"/><ellipse cx="478" cy="762" rx="2" ry="9.9"/><ellipse cx="381" cy="774" rx="2.3" ry="9.9"/><ellipse cx="594" cy="777" rx="2.5" ry="3.5"/><ellipse cx="783" cy="898" rx="1" ry="4.4"/><ellipse cx="660" cy="965" rx="1.1" ry="8"/><ellipse cx="699" cy="881" rx="2.5" ry="10"/><ellipse cx="263" cy="699" rx="2.4" ry="5"/><ellipse cx="711" cy="971" rx="1.6" ry="9.1"/><ellipse cx="285" cy="832" rx="1.1" ry="8"/><ellipse cx="241" cy="805" rx="0.9" ry="10.8"/><ellipse cx="544" cy="778" rx="1.3" ry="9.3"/><ellipse cx="464" cy="849" rx="1" ry="5.9"/><ellipse cx="449" cy="935" rx="1.2" ry="3.4"/><ellipse cx="494" cy="740" rx="1" ry="3.9"/><ellipse cx="457" cy="806" rx="1.4" ry="8.6"/><ellipse cx="182" cy="764" rx="1.7" ry="5"/><ellipse cx="768" cy="778" rx="1.7" ry="10.6"/><ellipse cx="483" cy="745" rx="1.7" ry="10.9"/><ellipse cx="682" cy="769" rx="1" ry="10.4"/><ellipse cx="342" cy="697" rx="1.6" ry="9.1"/><ellipse cx="388" cy="923" rx="2.5" ry="8.4"/><ellipse cx="714" cy="856" rx="1" ry="8.4"/><ellipse cx="313" cy="925" rx="2.4" ry="6.7"/><ellipse cx="601" cy="687" rx="1.9" ry="8.3"/><ellipse cx="738" cy="694" rx="1.2" ry="9.1"/><ellipse cx="542" cy="813" rx="2.6" ry="3.6"/><ellipse cx="707" cy="707" rx="1.3" ry="8.3"/><ellipse cx="183" cy="912" rx="1.4" ry="9.4"/><ellipse cx="534" cy="752" rx="2.2" ry="10.3"/><ellipse cx="656" cy="701" rx="1.7" ry="3.5"/><ellipse cx="437" cy="760" rx="1.8" ry="9.9"/><ellipse cx="627" cy="920" rx="1" ry="6.9"/><ellipse cx="416" cy="899" rx="2.4" ry="3.1"/><ellipse cx="702" cy="776" rx="1" ry="8"/><ellipse cx="492" cy="973" rx="2.3" ry="6.7"/><ellipse cx="649" cy="951" rx="1.8" ry="5.5"/><ellipse cx="568" cy="938" rx="2.1" ry="7.9"/><ellipse cx="255" cy="900" rx="1.9" ry="8.8"/><ellipse cx="444" cy="684" rx="1.3" ry="7.7"/><ellipse cx="250" cy="774" rx="1.6" ry="4.1"/><ellipse cx="330" cy="813" rx="2.5" ry="8.8"/><ellipse cx="215" cy="794" rx="2.3" ry="3"/><ellipse cx="603" cy="897" rx="1.3" ry="3.1"/><ellipse cx="348" cy="775" rx="2" ry="3.6"/><ellipse cx="256" cy="898" rx="1" ry="7.8"/><ellipse cx="388" cy="777" rx="1.6" ry="5.7"/><ellipse cx="658" cy="958" rx="1.9" ry="8.5"/><ellipse cx="690" cy="706" rx="1.7" ry="3.2"/><ellipse cx="634" cy="952" rx="1.1" ry="6.4"/><ellipse cx="548" cy="839" rx="1" ry="6.3"/><ellipse cx="367" cy="861" rx="2.4" ry="3.6"/><ellipse cx="496" cy="817" rx="1.6" ry="4.5"/><ellipse cx="439" cy="709" rx="2" ry="5.4"/><ellipse cx="708" cy="748" rx="1.3" ry="4.5"/><ellipse cx="615" cy="935" rx="2.4" ry="7.1"/><ellipse cx="558" cy="784" rx="1.8" ry="3.9"/><ellipse cx="708" cy="805" rx="1.7" ry="3.8"/><ellipse cx="479" cy="733" rx="2.6" ry="3.6"/><ellipse cx="377" cy="697" rx="1.2" ry="7"/><ellipse cx="193" cy="870" rx="1.9" ry="9.1"/><ellipse cx="369" cy="871" rx="1.5" ry="8.5"/><ellipse cx="782" cy="728" rx="2.1" ry="9.4"/><ellipse cx="309" cy="688" rx="1.8" ry="7.1"/><ellipse cx="541" cy="910" rx="1.5" ry="9.5"/><ellipse cx="606" cy="749" rx="1.3" ry="6.6"/><ellipse cx="699" cy="946" rx="1.8" ry="7.2"/><ellipse cx="467" cy="906" rx="0.9" ry="8.7"/><ellipse cx="480" cy="848" rx="2.4" ry="3.9"/><ellipse cx="478" cy="970" rx="1.3" ry="7.9"/><ellipse cx="327" cy="912" rx="2" ry="4.1"/><ellipse cx="239" cy="781" rx="1.7" ry="9.4"/><ellipse cx="753" cy="845" rx="1.1" ry="6.7"/><ellipse cx="754" cy="696" rx="1.7" ry="5.1"/><ellipse cx="564" cy="738" rx="1" ry="4.5"/><ellipse cx="486" cy="804" rx="2.3" ry="4.7"/><ellipse cx="567" cy="962" rx="0.9" ry="6.9"/><ellipse cx="283" cy="793" rx="1.3" ry="9.1"/><ellipse cx="314" cy="980" rx="1.3" ry="5.4"/><ellipse cx="559" cy="711" rx="1.2" ry="5.7"/><ellipse cx="575" cy="929" rx="1.9" ry="5.3"/><ellipse cx="511" cy="979" rx="1.5" ry="3.9"/><ellipse cx="175" cy="814" rx="2.5" ry="10.5"/><ellipse cx="595" cy="745" rx="1.5" ry="4.7"/><ellipse cx="431" cy="913" rx="1" ry="7.2"/><ellipse cx="287" cy="866" rx="2.2" ry="9.1"/><ellipse cx="372" cy="953" rx="0.9" ry="5.4"/><ellipse cx="244" cy="886" rx="1.7" ry="7.8"/><ellipse cx="186" cy="704" rx="2.2" ry="8.2"/><ellipse cx="739" cy="808" rx="1.9" ry="6.4"/><ellipse cx="711" cy="764" rx="1.7" ry="9.3"/><ellipse cx="389" cy="808" rx="1.1" ry="10.7"/><ellipse cx="471" cy="819" rx="1.2" ry="6.3"/><ellipse cx="375" cy="730" rx="1.5" ry="5.8"/><ellipse cx="560" cy="695" rx="2.6" ry="9.7"/><ellipse cx="157" cy="814" rx="2.1" ry="3.3"/><ellipse cx="720" cy="975" rx="1" ry="5.6"/><ellipse cx="770" cy="761" rx="2.2" ry="9.4"/><ellipse cx="153" cy="822" rx="1.5" ry="9.6"/><ellipse cx="201" cy="882" rx="0.9" ry="7.9"/><ellipse cx="454" cy="962" rx="2.6" ry="9.6"/><ellipse cx="597" cy="790" rx="1.9" ry="6.4"/><ellipse cx="625" cy="977" rx="2" ry="4.2"/><ellipse cx="503" cy="838" rx="2.4" ry="5.6"/><ellipse cx="404" cy="889" rx="1.9" ry="6.9"/><ellipse cx="535" cy="744" rx="1.1" ry="6.5"/><ellipse cx="489" cy="900" rx="1.6" ry="5.7"/><ellipse cx="763" cy="956" rx="1.3" ry="9.8"/><ellipse cx="368" cy="688" rx="2.3" ry="7.2"/><ellipse cx="746" cy="808" rx="1" ry="6.1"/><ellipse cx="596" cy="745" rx="2" ry="4.8"/><ellipse cx="578" cy="676" rx="2.1" ry="4.6"/><ellipse cx="398" cy="975" rx="1.1" ry="3.6"/><ellipse cx="770" cy="926" rx="1.9" ry="7.2"/><ellipse cx="444" cy="874" rx="2.3" ry="4.1"/><ellipse cx="379" cy="829" rx="1.2" ry="3.9"/><ellipse cx="562" cy="980" rx="2.3" ry="5.5"/><ellipse cx="365" cy="981" rx="2.3" ry="7.8"/><ellipse cx="201" cy="713" rx="2.2" ry="5.9"/><ellipse cx="573" cy="723" rx="2.1" ry="7.1"/><ellipse cx="220" cy="712" rx="1.3" ry="6.1"/><ellipse cx="496" cy="968" rx="1.2" ry="4.6"/><ellipse cx="490" cy="742" rx="0.9" ry="7"/><ellipse cx="414" cy="876" rx="1.8" ry="3.6"/><ellipse cx="432" cy="701" rx="1" ry="9.9"/><ellipse cx="730" cy="971" rx="2.1" ry="7.9"/><ellipse cx="472" cy="836" rx="1.4" ry="10"/><ellipse cx="447" cy="958" rx="1.5" ry="5"/><ellipse cx="559" cy="892" rx="1.7" ry="4.8"/><ellipse cx="204" cy="870" rx="1.1" ry="9.8"/><ellipse cx="444" cy="898" rx="1.4" ry="10.3"/><ellipse cx="304" cy="982" rx="1" ry="8.9"/><ellipse cx="341" cy="966" rx="1.9" ry="8.9"/><ellipse cx="500" cy="912" rx="1.4" ry="6"/><ellipse cx="574" cy="691" rx="1.4" ry="4.6"/><ellipse cx="263" cy="751" rx="0.9" ry="7.5"/><ellipse cx="419" cy="904" rx="2.5" ry="7.8"/><ellipse cx="571" cy="952" rx="2.5" ry="6.5"/><ellipse cx="703" cy="805" rx="1.7" ry="5"/><ellipse cx="626" cy="751" rx="1.4" ry="6.6"/><ellipse cx="161" cy="928" rx="0.9" ry="4.1"/><ellipse cx="724" cy="914" rx="0.9" ry="4.8"/><ellipse cx="414" cy="678" rx="1.3" ry="5.8"/><ellipse cx="778" cy="688" rx="2.1" ry="4.7"/><ellipse cx="551" cy="676" rx="2.2" ry="10.4"/><ellipse cx="190" cy="976" rx="2.4" ry="5.5"/><ellipse cx="459" cy="674" rx="1.2" ry="3.5"/><ellipse cx="370" cy="750" rx="1" ry="3.5"/><ellipse cx="268" cy="690" rx="1.1" ry="9.7"/><ellipse cx="422" cy="699" rx="2.4" ry="4.4"/><ellipse cx="293" cy="686" rx="2.3" ry="6.6"/><ellipse cx="521" cy="832" rx="2.3" ry="10.2"/><ellipse cx="663" cy="839" rx="2.1" ry="4.7"/><ellipse cx="702" cy="834" rx="0.9" ry="5.6"/><ellipse cx="756" cy="763" rx="1.1" ry="10.9"/><ellipse cx="424" cy="852" rx="1.5" ry="5.1"/><ellipse cx="356" cy="964" rx="1.7" ry="8.7"/><ellipse cx="543" cy="749" rx="2.4" ry="10.3"/><ellipse cx="239" cy="687" rx="2.1" ry="4.2"/><ellipse cx="705" cy="825" rx="1.8" ry="5.2"/><ellipse cx="505" cy="770" rx="0.9" ry="7.3"/><ellipse cx="709" cy="881" rx="1.7" ry="9.8"/><ellipse cx="181" cy="739" rx="1.5" ry="3.2"/><ellipse cx="208" cy="922" rx="1.7" ry="8.2"/><ellipse cx="268" cy="957" rx="2.5" ry="5.7"/><ellipse cx="277" cy="780" rx="1.4" ry="6.1"/><ellipse cx="588" cy="912" rx="2.4" ry="7.9"/><ellipse cx="676" cy="875" rx="1" ry="4.4"/><ellipse cx="301" cy="706" rx="1.3" ry="8.4"/><ellipse cx="626" cy="813" rx="1.8" ry="8.1"/><ellipse cx="588" cy="806" rx="1.5" ry="7.2"/><ellipse cx="522" cy="715" rx="1.7" ry="7"/><ellipse cx="637" cy="761" rx="2.5" ry="8.8"/><ellipse cx="548" cy="829" rx="1.2" ry="5.7"/><ellipse cx="348" cy="821" rx="1" ry="3.2"/><ellipse cx="788" cy="675" rx="1.4" ry="6.2"/><ellipse cx="782" cy="779" rx="1.4" ry="6.9"/><ellipse cx="552" cy="946" rx="2.1" ry="3.6"/><ellipse cx="727" cy="956" rx="1.1" ry="9.6"/><ellipse cx="735" cy="935" rx="2.5" ry="5.5"/><ellipse cx="557" cy="916" rx="2.3" ry="7.8"/><ellipse cx="716" cy="879" rx="1.6" ry="10.6"/><ellipse cx="413" cy="705" rx="2.5" ry="6"/><ellipse cx="658" cy="949" rx="2.2" ry="8.5"/><ellipse cx="358" cy="831" rx="1.6" ry="9.5"/><ellipse cx="351" cy="810" rx="2.2" ry="3.9"/><ellipse cx="654" cy="845" rx="2.1" ry="8.4"/><ellipse cx="306" cy="950" rx="2" ry="5.9"/><ellipse cx="218" cy="736" rx="1" ry="5.3"/><ellipse cx="238" cy="681" rx="1" ry="3.8"/><ellipse cx="289" cy="702" rx="1.4" ry="3.9"/><ellipse cx="251" cy="854" rx="1.5" ry="8.5"/><ellipse cx="298" cy="876" rx="1.4" ry="6.4"/><ellipse cx="312" cy="701" rx="2.6" ry="5.1"/><ellipse cx="152" cy="865" rx="1" ry="3.8"/><ellipse cx="296" cy="735" rx="1.5" ry="5.7"/><ellipse cx="348" cy="915" rx="1.5" ry="10.2"/><ellipse cx="599" cy="949" rx="1.6" ry="5.7"/><ellipse cx="521" cy="985" rx="1" ry="8.5"/><ellipse cx="678" cy="845" rx="1.1" ry="11"/><ellipse cx="359" cy="961" rx="1.7" ry="3.9"/><ellipse cx="491" cy="764" rx="1.4" ry="10.1"/><ellipse cx="727" cy="852" rx="2" ry="8.3"/><ellipse cx="438" cy="912" rx="1.9" ry="10.9"/><ellipse cx="664" cy="950" rx="1" ry="6.7"/><ellipse cx="247" cy="768" rx="1" ry="9.9"/><ellipse cx="442" cy="846" rx="2.3" ry="9.2"/><ellipse cx="705" cy="683" rx="1.1" ry="6.8"/><ellipse cx="525" cy="980" rx="1.5" ry="4.1"/><ellipse cx="307" cy="711" rx="2.2" ry="7.4"/><ellipse cx="310" cy="909" rx="1.6" ry="4.6"/><ellipse cx="196" cy="915" rx="2.3" ry="8.7"/><ellipse cx="764" cy="974" rx="0.9" ry="4.1"/><ellipse cx="472" cy="834" rx="1.5" ry="4.7"/><ellipse cx="320" cy="977" rx="1.7" ry="6.4"/><ellipse cx="624" cy="901" rx="2.3" ry="9.3"/><ellipse cx="347" cy="749" rx="1.8" ry="8.9"/><ellipse cx="322" cy="956" rx="1.1" ry="4.9"/><ellipse cx="397" cy="728" rx="1.1" ry="5.5"/><ellipse cx="155" cy="860" rx="1.8" ry="4.1"/><ellipse cx="624" cy="801" rx="1.8" ry="10.1"/><ellipse cx="470" cy="706" rx="1.5" ry="4.2"/><ellipse cx="718" cy="746" rx="1" ry="6.6"/><ellipse cx="365" cy="917" rx="0.9" ry="4.8"/><ellipse cx="352" cy="706" rx="1.8" ry="10.2"/><ellipse cx="741" cy="855" rx="0.9" ry="8.1"/><ellipse cx="246" cy="840" rx="2" ry="10.6"/><ellipse cx="513" cy="751" rx="1" ry="9"/><ellipse cx="376" cy="770" rx="1.8" ry="8.4"/><ellipse cx="537" cy="676" rx="2.3" ry="8.3"/><ellipse cx="706" cy="881" rx="2" ry="5.2"/><ellipse cx="372" cy="964" rx="1.4" ry="10.3"/><ellipse cx="317" cy="815" rx="2.5" ry="8.1"/><ellipse cx="483" cy="675" rx="1.6" ry="4"/><ellipse cx="512" cy="978" rx="1.3" ry="10.4"/><ellipse cx="742" cy="726" rx="2.4" ry="8.7"/><ellipse cx="257" cy="717" rx="1.9" ry="10"/><ellipse cx="343" cy="913" rx="2" ry="4"/><ellipse cx="601" cy="763" rx="1.2" ry="6.7"/><ellipse cx="172" cy="946" rx="1" ry="10.9"/><ellipse cx="781" cy="951" rx="1.9" ry="10.9"/><ellipse cx="178" cy="788" rx="1.7" ry="4.3"/><ellipse cx="590" cy="928" rx="1.7" ry="3.4"/><ellipse cx="362" cy="941" rx="2.6" ry="6.1"/><ellipse cx="159" cy="944" rx="2.1" ry="3.3"/><ellipse cx="471" cy="786" rx="2.6" ry="7.6"/><ellipse cx="745" cy="803" rx="1.5" ry="7.2"/><ellipse cx="207" cy="799" rx="1.4" ry="4.4"/><ellipse cx="686" cy="852" rx="2.1" ry="7.8"/><ellipse cx="294" cy="759" rx="1.2" ry="8"/><ellipse cx="346" cy="713" rx="2.3" ry="4"/><ellipse cx="775" cy="775" rx="2" ry="10.9"/><ellipse cx="306" cy="947" rx="1.5" ry="7.3"/><ellipse cx="440" cy="841" rx="2.1" ry="9.1"/><ellipse cx="393" cy="889" rx="2.4" ry="7.1"/><ellipse cx="451" cy="817" rx="1.2" ry="7.9"/><ellipse cx="318" cy="789" rx="2.5" ry="5.3"/><ellipse cx="363" cy="878" rx="1.9" ry="9.8"/><ellipse cx="231" cy="754" rx="1.2" ry="4.1"/><ellipse cx="402" cy="913" rx="2.3" ry="4.6"/><ellipse cx="604" cy="731" rx="1.7" ry="4"/><ellipse cx="302" cy="927" rx="2.1" ry="7"/><ellipse cx="718" cy="707" rx="1.4" ry="8.4"/><ellipse cx="233" cy="812" rx="1.6" ry="4.4"/><ellipse cx="327" cy="754" rx="1.8" ry="5.7"/><ellipse cx="514" cy="775" rx="2.1" ry="10"/><ellipse cx="544" cy="933" rx="1.7" ry="3.7"/><ellipse cx="724" cy="734" rx="1" ry="9"/><ellipse cx="210" cy="832" rx="1.6" ry="3.4"/><ellipse cx="440" cy="708" rx="2.1" ry="9.7"/><ellipse cx="418" cy="847" rx="1.6" ry="7.8"/><ellipse cx="770" cy="746" rx="1.9" ry="3.1"/><ellipse cx="736" cy="690" rx="1.6" ry="5.9"/><ellipse cx="500" cy="750" rx="1.2" ry="7.2"/><ellipse cx="672" cy="975" rx="1.6" ry="5"/><ellipse cx="356" cy="709" rx="2.4" ry="9.4"/><ellipse cx="239" cy="957" rx="1.7" ry="7.7"/><ellipse cx="554" cy="906" rx="1.3" ry="5.8"/><ellipse cx="502" cy="869" rx="2.1" ry="4.8"/><ellipse cx="276" cy="883" rx="1.6" ry="10.8"/><ellipse cx="762" cy="973" rx="2.6" ry="10.1"/><ellipse cx="659" cy="688" rx="2.3" ry="9.7"/><ellipse cx="259" cy="707" rx="2.4" ry="4.4"/><ellipse cx="181" cy="784" rx="1.5" ry="5.4"/><ellipse cx="270" cy="815" rx="2.3" ry="3.3"/><ellipse cx="457" cy="966" rx="2.3" ry="3.2"/><ellipse cx="514" cy="733" rx="1.2" ry="9.9"/><ellipse cx="736" cy="984" rx="0.9" ry="3.1"/><ellipse cx="367" cy="789" rx="1.1" ry="10.3"/><ellipse cx="448" cy="981" rx="1" ry="6.7"/><ellipse cx="217" cy="976" rx="2.4" ry="3.9"/><ellipse cx="376" cy="976" rx="1.9" ry="6.2"/><ellipse cx="540" cy="819" rx="2.3" ry="3.7"/><ellipse cx="518" cy="957" rx="0.9" ry="5.5"/><ellipse cx="417" cy="859" rx="2.3" ry="7.3"/><ellipse cx="204" cy="971" rx="1.2" ry="9.5"/><ellipse cx="221" cy="705" rx="2" ry="6.2"/><ellipse cx="692" cy="691" rx="1.1" ry="3.7"/><ellipse cx="437" cy="724" rx="1.2" ry="6.6"/><ellipse cx="648" cy="919" rx="1.6" ry="5.8"/><ellipse cx="316" cy="888" rx="1.5" ry="8.6"/><ellipse cx="224" cy="742" rx="1.8" ry="3"/><ellipse cx="724" cy="935" rx="1.6" ry="3.8"/><ellipse cx="392" cy="780" rx="1.5" ry="6.5"/><ellipse cx="241" cy="691" rx="1" ry="4.1"/><ellipse cx="276" cy="802" rx="1.1" ry="4.2"/><ellipse cx="522" cy="849" rx="1.4" ry="8.6"/><ellipse cx="491" cy="737" rx="2.4" ry="7.6"/><ellipse cx="240" cy="828" rx="1" ry="5.5"/><ellipse cx="718" cy="795" rx="1.7" ry="3.3"/><ellipse cx="432" cy="945" rx="2.4" ry="6.7"/><ellipse cx="780" cy="978" rx="1.1" ry="9.6"/><ellipse cx="308" cy="861" rx="1.7" ry="4.8"/><ellipse cx="275" cy="981" rx="2.4" ry="6.3"/><ellipse cx="673" cy="891" rx="1.5" ry="9.5"/><ellipse cx="689" cy="778" rx="2.5" ry="5.9"/><ellipse cx="289" cy="951" rx="2.3" ry="4.8"/><ellipse cx="487" cy="721" rx="2.2" ry="3.9"/><ellipse cx="787" cy="955" rx="1.5" ry="10.3"/><ellipse cx="440" cy="862" rx="2.4" ry="3.2"/><ellipse cx="155" cy="770" rx="1.8" ry="8.9"/><ellipse cx="278" cy="694" rx="0.9" ry="3"/><ellipse cx="282" cy="968" rx="1.6" ry="5.1"/><ellipse cx="267" cy="810" rx="1.3" ry="4.7"/><ellipse cx="441" cy="803" rx="2.6" ry="6.4"/><ellipse cx="178" cy="691" rx="2.1" ry="7.2"/><ellipse cx="529" cy="972" rx="1.4" ry="4.4"/><ellipse cx="413" cy="971" rx="2.4" ry="7.5"/><ellipse cx="626" cy="768" rx="1.7" ry="4.7"/><ellipse cx="534" cy="917" rx="1.9" ry="9.9"/><ellipse cx="303" cy="919" rx="2.1" ry="9.9"/><ellipse cx="502" cy="767" rx="1.6" ry="8.8"/><ellipse cx="336" cy="977" rx="2.1" ry="11"/><ellipse cx="418" cy="832" rx="2.2" ry="10.8"/><ellipse cx="214" cy="948" rx="2.5" ry="6"/><ellipse cx="382" cy="704" rx="2" ry="6.5"/><ellipse cx="388" cy="735" rx="2.3" ry="3.3"/><ellipse cx="743" cy="714" rx="1.6" ry="5.1"/><ellipse cx="188" cy="694" rx="1.1" ry="3.1"/><ellipse cx="307" cy="770" rx="1.8" ry="10.3"/><ellipse cx="477" cy="942" rx="1.6" ry="9.7"/><ellipse cx="302" cy="792" rx="1.3" ry="6"/><ellipse cx="465" cy="980" rx="2.2" ry="6.2"/><ellipse cx="331" cy="901" rx="2" ry="10.8"/><ellipse cx="740" cy="695" rx="2.4" ry="3.7"/><ellipse cx="353" cy="768" rx="1.3" ry="6.1"/><ellipse cx="286" cy="822" rx="1.4" ry="7.2"/><ellipse cx="778" cy="689" rx="1.1" ry="4.3"/><ellipse cx="286" cy="973" rx="2.3" ry="6.8"/><ellipse cx="789" cy="686" rx="1" ry="4.4"/><ellipse cx="664" cy="928" rx="1.5" ry="10.2"/><ellipse cx="406" cy="858" rx="2.2" ry="9.1"/><ellipse cx="510" cy="777" rx="1.2" ry="6.3"/><ellipse cx="765" cy="983" rx="2.4" ry="8.8"/><ellipse cx="160" cy="824" rx="2.6" ry="7.1"/><ellipse cx="563" cy="862" rx="1.9" ry="8.2"/><ellipse cx="466" cy="803" rx="2.5" ry="6.1"/><ellipse cx="548" cy="970" rx="1.4" ry="4.1"/><ellipse cx="157" cy="706" rx="1.3" ry="6.9"/><ellipse cx="166" cy="955" rx="1.9" ry="8.1"/><ellipse cx="766" cy="765" rx="1.6" ry="10.7"/><ellipse cx="730" cy="920" rx="1.4" ry="10.2"/><ellipse cx="163" cy="708" rx="1.8" ry="3.3"/><ellipse cx="224" cy="978" rx="1.5" ry="4.1"/><ellipse cx="703" cy="727" rx="2.3" ry="6"/><ellipse cx="319" cy="929" rx="1.3" ry="10.7"/><ellipse cx="197" cy="691" rx="1.1" ry="10.6"/><ellipse cx="321" cy="747" rx="1.5" ry="3.2"/><ellipse cx="533" cy="803" rx="2.3" ry="9.8"/><ellipse cx="478" cy="862" rx="2.5" ry="5.9"/><ellipse cx="751" cy="840" rx="1" ry="4.4"/><ellipse cx="638" cy="983" rx="0.9" ry="4.1"/><ellipse cx="647" cy="936" rx="1.2" ry="6.1"/><ellipse cx="532" cy="854" rx="1.6" ry="7.6"/><ellipse cx="752" cy="952" rx="1.4" ry="10.9"/><ellipse cx="332" cy="774" rx="1.6" ry="9.8"/><ellipse cx="181" cy="959" rx="2.3" ry="6.9"/><ellipse cx="430" cy="907" rx="2.3" ry="7.8"/><ellipse cx="181" cy="813" rx="1.4" ry="6.7"/><ellipse cx="722" cy="728" rx="2.5" ry="6.1"/><ellipse cx="609" cy="884" rx="2.2" ry="9"/><ellipse cx="305" cy="876" rx="1.5" ry="10.7"/><ellipse cx="229" cy="700" rx="1.1" ry="3.3"/><ellipse cx="219" cy="801" rx="1.9" ry="6.6"/><ellipse cx="190" cy="711" rx="1" ry="7.9"/><ellipse cx="333" cy="843" rx="1.5" ry="9.9"/><ellipse cx="448" cy="742" rx="2.2" ry="6.9"/><ellipse cx="541" cy="961" rx="1" ry="5.8"/><ellipse cx="373" cy="764" rx="1" ry="5.9"/><ellipse cx="627" cy="979" rx="2.4" ry="10"/><ellipse cx="274" cy="690" rx="1.9" ry="10.8"/><ellipse cx="173" cy="814" rx="1.5" ry="9.3"/><ellipse cx="660" cy="911" rx="2.2" ry="3.1"/><ellipse cx="603" cy="939" rx="1.4" ry="3.3"/><ellipse cx="682" cy="953" rx="0.9" ry="7.5"/><ellipse cx="342" cy="895" rx="1.7" ry="9.8"/><ellipse cx="678" cy="734" rx="1.9" ry="4.2"/><ellipse cx="222" cy="888" rx="1.6" ry="10.2"/><ellipse cx="738" cy="927" rx="1.7" ry="4.1"/><ellipse cx="360" cy="675" rx="1.8" ry="9.4"/><ellipse cx="173" cy="971" rx="0.9" ry="10.8"/><ellipse cx="349" cy="754" rx="2.5" ry="6.8"/><ellipse cx="451" cy="962" rx="2.6" ry="3.2"/><ellipse cx="574" cy="701" rx="1.9" ry="6.2"/><ellipse cx="639" cy="897" rx="2" ry="9.6"/><ellipse cx="437" cy="769" rx="1" ry="6.3"/><ellipse cx="623" cy="682" rx="1.4" ry="10.9"/><ellipse cx="380" cy="973" rx="2.1" ry="4.6"/><ellipse cx="315" cy="924" rx="2.1" ry="5.3"/><ellipse cx="478" cy="891" rx="2" ry="9.6"/><ellipse cx="412" cy="964" rx="2" ry="7.6"/><ellipse cx="769" cy="857" rx="1.8" ry="3.4"/><ellipse cx="186" cy="951" rx="1.8" ry="6.1"/><ellipse cx="255" cy="723" rx="1.6" ry="6.8"/><ellipse cx="568" cy="716" rx="1.3" ry="6"/><ellipse cx="195" cy="855" rx="2.3" ry="10.2"/><ellipse cx="553" cy="742" rx="2.4" ry="7.7"/><ellipse cx="672" cy="727" rx="1" ry="4"/><ellipse cx="168" cy="840" rx="1.8" ry="10"/><ellipse cx="559" cy="829" rx="0.9" ry="10.2"/><ellipse cx="444" cy="683" rx="1.9" ry="10.2"/><ellipse cx="188" cy="882" rx="1.9" ry="3"/><ellipse cx="313" cy="709" rx="1.7" ry="6.8"/><ellipse cx="344" cy="890" rx="2.3" ry="3.2"/><ellipse cx="398" cy="745" rx="1.8" ry="6"/><ellipse cx="609" cy="796" rx="1.2" ry="9.2"/><ellipse cx="326" cy="796" rx="2.2" ry="6"/><ellipse cx="243" cy="803" rx="1.1" ry="7.4"/><ellipse cx="159" cy="727" rx="2.3" ry="7.7"/><ellipse cx="438" cy="952" rx="1.1" ry="5.1"/><ellipse cx="320" cy="908" rx="1.6" ry="3.3"/><ellipse cx="360" cy="690" rx="1.1" ry="6.2"/><ellipse cx="729" cy="778" rx="1.9" ry="6.9"/><ellipse cx="469" cy="932" rx="1.2" ry="4.1"/><ellipse cx="294" cy="783" rx="1.4" ry="4.8"/><ellipse cx="277" cy="861" rx="1.5" ry="8"/><ellipse cx="265" cy="779" rx="1.2" ry="9.6"/><ellipse cx="324" cy="766" rx="1.1" ry="7.5"/><ellipse cx="325" cy="885" rx="1.6" ry="7.8"/><ellipse cx="486" cy="962" rx="1.3" ry="9.8"/><ellipse cx="270" cy="845" rx="2.1" ry="3.2"/><ellipse cx="347" cy="800" rx="1.2" ry="9"/><ellipse cx="222" cy="804" rx="1.2" ry="8.7"/><ellipse cx="595" cy="920" rx="1.8" ry="7.8"/><ellipse cx="729" cy="802" rx="2.5" ry="5.3"/><ellipse cx="415" cy="949" rx="1.1" ry="6.6"/><ellipse cx="611" cy="856" rx="0.9" ry="6"/><ellipse cx="679" cy="809" rx="1.5" ry="5"/><ellipse cx="629" cy="686" rx="2.2" ry="5.3"/><ellipse cx="459" cy="932" rx="2.3" ry="9.2"/><ellipse cx="261" cy="716" rx="2.4" ry="7.5"/><ellipse cx="333" cy="798" rx="1.6" ry="9.7"/><ellipse cx="638" cy="809" rx="2.2" ry="9.4"/><ellipse cx="326" cy="732" rx="1.8" ry="3.5"/><ellipse cx="615" cy="780" rx="1.6" ry="10.1"/><ellipse cx="297" cy="710" rx="2.4" ry="3.1"/><ellipse cx="735" cy="853" rx="1" ry="9.2"/><ellipse cx="321" cy="782" rx="2.4" ry="3.7"/><ellipse cx="369" cy="963" rx="1.7" ry="7.6"/><ellipse cx="176" cy="983" rx="2" ry="9.9"/><ellipse cx="221" cy="717" rx="1.4" ry="9.2"/><ellipse cx="185" cy="964" rx="2.4" ry="5.9"/><ellipse cx="402" cy="867" rx="1.9" ry="4.4"/><ellipse cx="424" cy="707" rx="2.6" ry="4.7"/><ellipse cx="700" cy="833" rx="1.7" ry="6"/><ellipse cx="706" cy="807" rx="1.2" ry="6.1"/><ellipse cx="204" cy="768" rx="1.3" ry="10.7"/><ellipse cx="445" cy="908" rx="0.9" ry="5.5"/><ellipse cx="659" cy="866" rx="2.5" ry="6.2"/><ellipse cx="709" cy="724" rx="1.8" ry="7.1"/><ellipse cx="438" cy="958" rx="2.5" ry="7.8"/><ellipse cx="752" cy="765" rx="1.5" ry="10.8"/><ellipse cx="352" cy="981" rx="1" ry="5.3"/><ellipse cx="553" cy="946" rx="0.9" ry="4.6"/><ellipse cx="165" cy="729" rx="1.8" ry="4.9"/><ellipse cx="224" cy="883" rx="1.1" ry="10.8"/><ellipse cx="700" cy="952" rx="2.5" ry="10.3"/><ellipse cx="711" cy="756" rx="0.9" ry="3.7"/><ellipse cx="152" cy="783" rx="1.6" ry="8.7"/><ellipse cx="405" cy="699" rx="1.6" ry="8.4"/><ellipse cx="536" cy="680" rx="1.6" ry="8.8"/><ellipse cx="261" cy="783" rx="2.2" ry="9.7"/><ellipse cx="332" cy="695" rx="1.3" ry="9.2"/><ellipse cx="629" cy="717" rx="1.5" ry="6.4"/><ellipse cx="464" cy="780" rx="1" ry="6.1"/><ellipse cx="498" cy="959" rx="0.9" ry="9.4"/><ellipse cx="413" cy="736" rx="2.3" ry="3.1"/><ellipse cx="284" cy="814" rx="1.4" ry="9"/><ellipse cx="170" cy="834" rx="1.1" ry="3.2"/><ellipse cx="287" cy="704" rx="1.1" ry="6"/><ellipse cx="788" cy="979" rx="1.3" ry="4.9"/><ellipse cx="402" cy="732" rx="2.2" ry="6.8"/><ellipse cx="546" cy="807" rx="1.3" ry="4.1"/><ellipse cx="253" cy="794" rx="1.7" ry="3.3"/><ellipse cx="419" cy="745" rx="2.1" ry="10.5"/><ellipse cx="427" cy="692" rx="1.9" ry="7.7"/><ellipse cx="416" cy="848" rx="2.3" ry="4.9"/><ellipse cx="382" cy="906" rx="1" ry="8.5"/><ellipse cx="261" cy="761" rx="2.3" ry="9.2"/><ellipse cx="415" cy="904" rx="1.2" ry="7.9"/><ellipse cx="510" cy="964" rx="2.4" ry="7.2"/><ellipse cx="304" cy="727" rx="2.5" ry="3.8"/><ellipse cx="325" cy="848" rx="1" ry="10.5"/><ellipse cx="593" cy="941" rx="1.7" ry="8.3"/><ellipse cx="155" cy="931" rx="2.4" ry="7"/><ellipse cx="572" cy="740" rx="1.4" ry="6.2"/><ellipse cx="639" cy="973" rx="1.2" ry="10.6"/><ellipse cx="580" cy="716" rx="2.2" ry="5.3"/><ellipse cx="172" cy="799" rx="1.1" ry="10.2"/><ellipse cx="273" cy="748" rx="1" ry="6.9"/><ellipse cx="475" cy="744" rx="2.1" ry="10.4"/><ellipse cx="251" cy="754" rx="1.2" ry="6.4"/><ellipse cx="427" cy="782" rx="1.8" ry="10.3"/><ellipse cx="516" cy="711" rx="1.8" ry="7.3"/><ellipse cx="469" cy="752" rx="1.5" ry="5.6"/><ellipse cx="525" cy="982" rx="1.7" ry="5.8"/><ellipse cx="193" cy="716" rx="1.3" ry="7.4"/><ellipse cx="557" cy="793" rx="2.3" ry="10.9"/><ellipse cx="379" cy="937" rx="1.8" ry="4.9"/><ellipse cx="239" cy="824" rx="2" ry="6.1"/><ellipse cx="575" cy="897" rx="1" ry="6"/><ellipse cx="559" cy="924" rx="1.1" ry="8.2"/><ellipse cx="359" cy="970" rx="1.8" ry="10.8"/><ellipse cx="661" cy="839" rx="1.4" ry="5.1"/><ellipse cx="320" cy="704" rx="2.6" ry="9.6"/><ellipse cx="570" cy="716" rx="2.5" ry="7.1"/><ellipse cx="547" cy="740" rx="2.5" ry="3.3"/><ellipse cx="413" cy="806" rx="2.5" ry="7.5"/><ellipse cx="502" cy="807" rx="2" ry="3.2"/><ellipse cx="707" cy="956" rx="1.7" ry="6.6"/><ellipse cx="483" cy="851" rx="2.3" ry="9.2"/><ellipse cx="373" cy="739" rx="2.5" ry="4.3"/><ellipse cx="631" cy="838" rx="1.3" ry="5"/><ellipse cx="241" cy="855" rx="1.8" ry="3.7"/><ellipse cx="501" cy="709" rx="2.5" ry="9.8"/><ellipse cx="302" cy="876" rx="1.6" ry="4.1"/><ellipse cx="550" cy="971" rx="2.1" ry="10.5"/><ellipse cx="541" cy="915" rx="1.1" ry="3.6"/><ellipse cx="240" cy="910" rx="2.4" ry="4.4"/><ellipse cx="438" cy="942" rx="2.1" ry="6.2"/><ellipse cx="753" cy="915" rx="1" ry="7.7"/><ellipse cx="483" cy="857" rx="1.8" ry="9.4"/><ellipse cx="648" cy="704" rx="2.4" ry="6.8"/><ellipse cx="645" cy="740" rx="1.5" ry="6.5"/><ellipse cx="788" cy="968" rx="2.1" ry="5.5"/><ellipse cx="417" cy="740" rx="2.3" ry="8"/><ellipse cx="636" cy="799" rx="0.9" ry="5.8"/><ellipse cx="328" cy="792" rx="1.4" ry="5.8"/><ellipse cx="703" cy="684" rx="1.5" ry="7.5"/><ellipse cx="341" cy="878" rx="2.2" ry="5.9"/><ellipse cx="595" cy="766" rx="1.6" ry="9.5"/><ellipse cx="218" cy="842" rx="1.7" ry="9.1"/><ellipse cx="295" cy="878" rx="1.8" ry="10"/><ellipse cx="712" cy="927" rx="1.8" ry="5.3"/><ellipse cx="676" cy="801" rx="1.4" ry="5.7"/><ellipse cx="720" cy="715" rx="2.4" ry="8.4"/><ellipse cx="641" cy="872" rx="2.3" ry="3.3"/><ellipse cx="479" cy="894" rx="1.4" ry="10.3"/><ellipse cx="226" cy="806" rx="1.2" ry="8.2"/><ellipse cx="661" cy="723" rx="2.4" ry="6.7"/><ellipse cx="706" cy="847" rx="2.2" ry="5.5"/><ellipse cx="411" cy="793" rx="2.5" ry="5"/><ellipse cx="632" cy="888" rx="2.5" ry="9.8"/><ellipse cx="516" cy="679" rx="2.5" ry="10"/><ellipse cx="575" cy="778" rx="1" ry="7.8"/><ellipse cx="746" cy="736" rx="1.1" ry="5.3"/><ellipse cx="713" cy="939" rx="2.5" ry="8.4"/><ellipse cx="525" cy="849" rx="1.8" ry="6.8"/><ellipse cx="708" cy="713" rx="2.3" ry="6.8"/><ellipse cx="651" cy="948" rx="1.2" ry="3.5"/><ellipse cx="680" cy="677" rx="1.9" ry="4.2"/><ellipse cx="408" cy="880" rx="2.4" ry="9"/><ellipse cx="404" cy="942" rx="2" ry="9.4"/><ellipse cx="545" cy="678" rx="2.4" ry="7"/><ellipse cx="492" cy="909" rx="2.5" ry="6.6"/><ellipse cx="484" cy="848" rx="1.5" ry="3.9"/><ellipse cx="685" cy="734" rx="1.1" ry="3.3"/><ellipse cx="628" cy="821" rx="2.1" ry="7.7"/><ellipse cx="587" cy="926" rx="0.9" ry="5.2"/><ellipse cx="318" cy="794" rx="1" ry="10.2"/><ellipse cx="352" cy="869" rx="1" ry="7.8"/><ellipse cx="568" cy="684" rx="1.1" ry="6.4"/><ellipse cx="632" cy="718" rx="1.8" ry="3.1"/><ellipse cx="490" cy="969" rx="1.2" ry="7.1"/><ellipse cx="428" cy="700" rx="1.1" ry="8"/><ellipse cx="390" cy="857" rx="1.3" ry="5.7"/><ellipse cx="264" cy="903" rx="2.5" ry="10.3"/><ellipse cx="346" cy="710" rx="2.6" ry="10.7"/><ellipse cx="405" cy="903" rx="2" ry="10.6"/><ellipse cx="587" cy="690" rx="1.6" ry="3.1"/><ellipse cx="686" cy="908" rx="1.1" ry="6.7"/><ellipse cx="656" cy="782" rx="1.8" ry="3.3"/><ellipse cx="492" cy="680" rx="2.5" ry="10.1"/><ellipse cx="442" cy="980" rx="1.3" ry="11"/><ellipse cx="567" cy="809" rx="2.5" ry="10"/><ellipse cx="628" cy="755" rx="1" ry="9.9"/><ellipse cx="487" cy="855" rx="1.5" ry="8.1"/><ellipse cx="316" cy="914" rx="1.9" ry="9.5"/><ellipse cx="417" cy="871" rx="1.4" ry="3.3"/><ellipse cx="327" cy="799" rx="1.2" ry="6.7"/><ellipse cx="428" cy="688" rx="0.9" ry="6.7"/><ellipse cx="537" cy="703" rx="1.2" ry="5.6"/><ellipse cx="453" cy="701" rx="2.4" ry="4.8"/><ellipse cx="641" cy="886" rx="2.3" ry="7.8"/><ellipse cx="441" cy="839" rx="1.2" ry="10"/><ellipse cx="206" cy="843" rx="1.7" ry="9.6"/><ellipse cx="435" cy="843" rx="2.1" ry="5.1"/><ellipse cx="787" cy="928" rx="1.2" ry="8.4"/><ellipse cx="296" cy="734" rx="2.5" ry="9.8"/><ellipse cx="292" cy="747" rx="2.5" ry="7.8"/><ellipse cx="445" cy="863" rx="1.2" ry="7.5"/><ellipse cx="767" cy="770" rx="1.4" ry="8.1"/><ellipse cx="591" cy="894" rx="1.9" ry="7"/><ellipse cx="693" cy="939" rx="1.1" ry="4.1"/><ellipse cx="274" cy="970" rx="1.4" ry="9.9"/><ellipse cx="308" cy="740" rx="1.4" ry="3.3"/><ellipse cx="654" cy="870" rx="1.3" ry="6.3"/><ellipse cx="554" cy="958" rx="2" ry="7.4"/><ellipse cx="222" cy="862" rx="2.3" ry="9.8"/><ellipse cx="340" cy="701" rx="1.2" ry="10.4"/><ellipse cx="591" cy="970" rx="2" ry="5"/><ellipse cx="509" cy="886" rx="1.8" ry="10.4"/><ellipse cx="307" cy="794" rx="2.4" ry="5.9"/><ellipse cx="421" cy="901" rx="1.4" ry="9.1"/><ellipse cx="539" cy="948" rx="2" ry="5"/><ellipse cx="755" cy="829" rx="1" ry="5.9"/><ellipse cx="712" cy="711" rx="1" ry="7.3"/><ellipse cx="589" cy="889" rx="1.1" ry="8.6"/><ellipse cx="745" cy="774" rx="2.5" ry="4.5"/><ellipse cx="365" cy="789" rx="2.2" ry="7.8"/><ellipse cx="267" cy="949" rx="0.9" ry="9.7"/><ellipse cx="493" cy="910" rx="1.8" ry="10.3"/><ellipse cx="777" cy="708" rx="2.3" ry="7.7"/><ellipse cx="178" cy="767" rx="1.1" ry="3.9"/><ellipse cx="295" cy="693" rx="1.4" ry="6.2"/><ellipse cx="434" cy="881" rx="1.8" ry="10.3"/><ellipse cx="201" cy="814" rx="2.6" ry="5"/><ellipse cx="209" cy="837" rx="1.9" ry="7.1"/><ellipse cx="271" cy="950" rx="2" ry="8"/><ellipse cx="243" cy="917" rx="2.1" ry="10"/><ellipse cx="353" cy="707" rx="2.3" ry="8.4"/><ellipse cx="295" cy="878" rx="1.4" ry="4.4"/><ellipse cx="725" cy="857" rx="2.1" ry="4.3"/><ellipse cx="169" cy="922" rx="1.9" ry="10.5"/><ellipse cx="345" cy="967" rx="1.2" ry="6.3"/><ellipse cx="633" cy="888" rx="1.2" ry="7.4"/><ellipse cx="567" cy="711" rx="2.2" ry="10.1"/><ellipse cx="359" cy="723" rx="1" ry="7.7"/><ellipse cx="296" cy="917" rx="1.5" ry="8.7"/><ellipse cx="459" cy="861" rx="1.4" ry="4.3"/><ellipse cx="275" cy="821" rx="1.3" ry="9.7"/><ellipse cx="769" cy="901" rx="2" ry="3.5"/><ellipse cx="515" cy="702" rx="1.2" ry="6.2"/><ellipse cx="709" cy="854" rx="1" ry="6.9"/><ellipse cx="584" cy="866" rx="2.5" ry="10.9"/><ellipse cx="750" cy="700" rx="2.6" ry="9.7"/><ellipse cx="751" cy="674" rx="2.2" ry="5.4"/><ellipse cx="729" cy="711" rx="1.8" ry="7.4"/><ellipse cx="453" cy="978" rx="1.2" ry="6.9"/><ellipse cx="698" cy="896" rx="1" ry="9.7"/><ellipse cx="258" cy="940" rx="2.4" ry="6.2"/><ellipse cx="373" cy="723" rx="2.3" ry="9.9"/><ellipse cx="603" cy="965" rx="1.5" ry="3.8"/><ellipse cx="640" cy="844" rx="1.5" ry="9.2"/><ellipse cx="483" cy="841" rx="2.1" ry="4.4"/><ellipse cx="607" cy="692" rx="1.1" ry="5.4"/><ellipse cx="556" cy="810" rx="2" ry="4.2"/><ellipse cx="653" cy="871" rx="1.9" ry="5.6"/><ellipse cx="355" cy="981" rx="1.1" ry="11"/><ellipse cx="367" cy="756" rx="2.2" ry="6.1"/><ellipse cx="222" cy="799" rx="1.4" ry="5.9"/><ellipse cx="380" cy="837" rx="0.9" ry="3.4"/><ellipse cx="755" cy="966" rx="1.6" ry="5.5"/><ellipse cx="349" cy="695" rx="1.5" ry="9.6"/><ellipse cx="756" cy="747" rx="1.7" ry="4.4"/><ellipse cx="526" cy="803" rx="1.7" ry="8.4"/><ellipse cx="655" cy="691" rx="2.3" ry="10.5"/><ellipse cx="634" cy="901" rx="1.3" ry="10.5"/><ellipse cx="537" cy="857" rx="1.3" ry="8.2"/><ellipse cx="328" cy="958" rx="2.4" ry="8.3"/><ellipse cx="615" cy="953" rx="2" ry="4.4"/><ellipse cx="615" cy="740" rx="2.3" ry="5.3"/><ellipse cx="766" cy="934" rx="2.2" ry="10.3"/><ellipse cx="296" cy="949" rx="2.3" ry="9.7"/><ellipse cx="659" cy="923" rx="2.3" ry="6.8"/><ellipse cx="764" cy="791" rx="2.2" ry="9.2"/><ellipse cx="268" cy="725" rx="2.4" ry="8.3"/><ellipse cx="333" cy="909" rx="1.7" ry="8.5"/><ellipse cx="445" cy="954" rx="2.3" ry="3.9"/><ellipse cx="649" cy="843" rx="1" ry="5.7"/><ellipse cx="676" cy="810" rx="1.2" ry="7"/><ellipse cx="217" cy="706" rx="1.3" ry="3"/><ellipse cx="441" cy="924" rx="2.2" ry="8.7"/><ellipse cx="684" cy="985" rx="1.5" ry="7.6"/><ellipse cx="570" cy="738" rx="2" ry="6.3"/><ellipse cx="275" cy="775" rx="2.6" ry="6.3"/><ellipse cx="562" cy="898" rx="1.4" ry="4.3"/><ellipse cx="749" cy="675" rx="1.6" ry="10.3"/><ellipse cx="478" cy="890" rx="1.8" ry="7.8"/><ellipse cx="239" cy="918" rx="1.3" ry="8.7"/><ellipse cx="773" cy="698" rx="2.3" ry="3.4"/><ellipse cx="235" cy="868" rx="2.3" ry="8.2"/><ellipse cx="275" cy="934" rx="1.3" ry="6.6"/><ellipse cx="763" cy="797" rx="1.3" ry="5.3"/><ellipse cx="295" cy="951" rx="1.4" ry="3.3"/><ellipse cx="170" cy="908" rx="1.9" ry="7"/><ellipse cx="283" cy="899" rx="2.4" ry="11"/><ellipse cx="313" cy="891" rx="1.5" ry="7"/><ellipse cx="322" cy="708" rx="2.3" ry="5"/><ellipse cx="152" cy="738" rx="1.4" ry="3.9"/><ellipse cx="532" cy="753" rx="1.6" ry="7.7"/><ellipse cx="740" cy="725" rx="1.5" ry="5.9"/><ellipse cx="491" cy="858" rx="1" ry="8.8"/><ellipse cx="219" cy="965" rx="1.7" ry="6"/><ellipse cx="417" cy="831" rx="1.7" ry="7.2"/><ellipse cx="341" cy="843" rx="2.2" ry="6.8"/><ellipse cx="643" cy="914" rx="1.6" ry="7.7"/><ellipse cx="642" cy="779" rx="2.2" ry="10"/><ellipse cx="418" cy="690" rx="1.4" ry="8.2"/><ellipse cx="715" cy="881" rx="2.1" ry="7.8"/><ellipse cx="407" cy="915" rx="2.3" ry="10.7"/><ellipse cx="703" cy="863" rx="1.9" ry="6"/><ellipse cx="587" cy="889" rx="2.6" ry="6.3"/><ellipse cx="391" cy="833" rx="1.8" ry="3.7"/><ellipse cx="595" cy="801" rx="2" ry="8.9"/><ellipse cx="200" cy="966" rx="2.4" ry="10.2"/><ellipse cx="329" cy="883" rx="2.2" ry="3.6"/><ellipse cx="227" cy="961" rx="2.3" ry="10.5"/><ellipse cx="543" cy="820" rx="1.9" ry="10.6"/><ellipse cx="368" cy="720" rx="2.4" ry="3.2"/><ellipse cx="599" cy="774" rx="2.3" ry="9.7"/><ellipse cx="229" cy="809" rx="1.9" ry="3.4"/><ellipse cx="684" cy="819" rx="1.5" ry="6"/><ellipse cx="250" cy="947" rx="2.5" ry="9.8"/><ellipse cx="220" cy="938" rx="1.1" ry="5.8"/><ellipse cx="636" cy="875" rx="1.1" ry="3.8"/><ellipse cx="517" cy="954" rx="1.8" ry="5.6"/><ellipse cx="310" cy="879" rx="1.8" ry="7.7"/><ellipse cx="479" cy="849" rx="2.1" ry="5.7"/><ellipse cx="402" cy="839" rx="1.7" ry="8.3"/><ellipse cx="410" cy="834" rx="1.7" ry="10.9"/><ellipse cx="259" cy="797" rx="2.2" ry="9.3"/><ellipse cx="157" cy="843" rx="2.1" ry="3.2"/><ellipse cx="670" cy="753" rx="2.4" ry="10.7"/><ellipse cx="487" cy="869" rx="1.9" ry="8.7"/><ellipse cx="294" cy="937" rx="1.6" ry="9.8"/><ellipse cx="613" cy="799" rx="2.4" ry="6.8"/><ellipse cx="414" cy="682" rx="1.2" ry="3.6"/><ellipse cx="531" cy="908" rx="0.9" ry="11"/><ellipse cx="528" cy="705" rx="1.7" ry="6.1"/><ellipse cx="332" cy="969" rx="2.6" ry="9.5"/><ellipse cx="737" cy="879" rx="1.1" ry="3.4"/><ellipse cx="231" cy="866" rx="2.3" ry="8.8"/><ellipse cx="294" cy="808" rx="1" ry="5"/><ellipse cx="549" cy="713" rx="1.1" ry="5.7"/><ellipse cx="606" cy="678" rx="1.7" ry="5.6"/><ellipse cx="210" cy="707" rx="2" ry="5.8"/><ellipse cx="426" cy="906" rx="1.3" ry="5.5"/><ellipse cx="332" cy="976" rx="2.3" ry="6.8"/><ellipse cx="234" cy="891" rx="2" ry="10.1"/><ellipse cx="606" cy="823" rx="1" ry="5.4"/><ellipse cx="311" cy="872" rx="2.2" ry="10.4"/><ellipse cx="176" cy="801" rx="1.9" ry="9.2"/><ellipse cx="628" cy="730" rx="1.1" ry="10"/><ellipse cx="411" cy="856" rx="1" ry="9.7"/><ellipse cx="372" cy="891" rx="1" ry="8.8"/><ellipse cx="336" cy="732" rx="1.6" ry="10.9"/><ellipse cx="530" cy="674" rx="1" ry="9.4"/><ellipse cx="460" cy="794" rx="2.5" ry="10.6"/><ellipse cx="772" cy="686" rx="1.5" ry="10.1"/><ellipse cx="637" cy="746" rx="2.4" ry="10.4"/><ellipse cx="761" cy="914" rx="1" ry="3.5"/><ellipse cx="725" cy="800" rx="1.5" ry="8.9"/><ellipse cx="531" cy="776" rx="1.6" ry="6.2"/><ellipse cx="766" cy="716" rx="1.7" ry="6.6"/><ellipse cx="707" cy="881" rx="2.2" ry="6.6"/><ellipse cx="339" cy="751" rx="2.5" ry="4.1"/><ellipse cx="673" cy="688" rx="1.3" ry="5"/><ellipse cx="765" cy="893" rx="1.8" ry="10.8"/><ellipse cx="219" cy="909" rx="1.9" ry="7.2"/><ellipse cx="326" cy="796" rx="1.1" ry="3.3"/><ellipse cx="576" cy="950" rx="1.2" ry="6.7"/><ellipse cx="556" cy="908" rx="1.3" ry="6"/><ellipse cx="430" cy="977" rx="1.2" ry="9.6"/><ellipse cx="650" cy="754" rx="1.9" ry="6.2"/><ellipse cx="204" cy="781" rx="1" ry="8.2"/><ellipse cx="657" cy="696" rx="1.6" ry="10"/><ellipse cx="533" cy="952" rx="1" ry="7.7"/><ellipse cx="764" cy="736" rx="2.2" ry="5.4"/><ellipse cx="646" cy="803" rx="1.8" ry="8.6"/><ellipse cx="482" cy="951" rx="1.7" ry="4.4"/><ellipse cx="399" cy="868" rx="1.5" ry="7.9"/><ellipse cx="158" cy="689" rx="2.3" ry="6.7"/><ellipse cx="273" cy="855" rx="0.9" ry="3.7"/><ellipse cx="433" cy="770" rx="1.4" ry="3.6"/><ellipse cx="452" cy="769" rx="2.1" ry="10.3"/><ellipse cx="643" cy="707" rx="1.7" ry="4.2"/><ellipse cx="357" cy="870" rx="1" ry="4"/><ellipse cx="790" cy="778" rx="2.5" ry="3.1"/><ellipse cx="310" cy="720" rx="2.2" ry="4.7"/><ellipse cx="224" cy="957" rx="2.2" ry="6.6"/><ellipse cx="591" cy="973" rx="2.1" ry="10"/><ellipse cx="262" cy="900" rx="0.9" ry="10.2"/><ellipse cx="774" cy="885" rx="2" ry="4.8"/><ellipse cx="719" cy="875" rx="2.6" ry="10.8"/><ellipse cx="266" cy="806" rx="0.9" ry="9"/><ellipse cx="185" cy="819" rx="1" ry="7.8"/><ellipse cx="288" cy="712" rx="1.5" ry="4.1"/><ellipse cx="583" cy="742" rx="2.3" ry="3.5"/><ellipse cx="247" cy="804" rx="2.5" ry="10.6"/><ellipse cx="215" cy="838" rx="2.1" ry="7.2"/><ellipse cx="405" cy="968" rx="1" ry="8.1"/><ellipse cx="166" cy="963" rx="2.5" ry="9.8"/><ellipse cx="428" cy="764" rx="1.8" ry="7.1"/><ellipse cx="408" cy="784" rx="2.3" ry="4.4"/><ellipse cx="332" cy="754" rx="1.6" ry="6.5"/><ellipse cx="548" cy="803" rx="2.5" ry="7.8"/><ellipse cx="311" cy="984" rx="1.9" ry="10.1"/><ellipse cx="312" cy="770" rx="1.6" ry="7.9"/><ellipse cx="345" cy="960" rx="1.2" ry="7.2"/><ellipse cx="591" cy="964" rx="2.3" ry="6.3"/><ellipse cx="651" cy="871" rx="1.3" ry="3.1"/><ellipse cx="722" cy="804" rx="1.8" ry="5.2"/><ellipse cx="777" cy="950" rx="1.1" ry="7.3"/><ellipse cx="223" cy="789" rx="1.6" ry="10"/><ellipse cx="776" cy="751" rx="1.1" ry="5"/><ellipse cx="414" cy="678" rx="1.6" ry="5.7"/><ellipse cx="473" cy="866" rx="1.5" ry="6.1"/><ellipse cx="178" cy="851" rx="1.2" ry="4.8"/><ellipse cx="456" cy="874" rx="1.7" ry="7.2"/><ellipse cx="540" cy="736" rx="1.2" ry="8.6"/><ellipse cx="524" cy="796" rx="2.1" ry="4.1"/><ellipse cx="412" cy="675" rx="1.5" ry="8.4"/><ellipse cx="469" cy="915" rx="1" ry="7.6"/><ellipse cx="511" cy="810" rx="2" ry="4.9"/><ellipse cx="533" cy="922" rx="1" ry="3.5"/><ellipse cx="327" cy="829" rx="2.4" ry="8"/><ellipse cx="692" cy="788" rx="2.1" ry="10.7"/><ellipse cx="658" cy="720" rx="1.5" ry="4.8"/><ellipse cx="694" cy="893" rx="1.2" ry="7.7"/><ellipse cx="617" cy="905" rx="2.4" ry="9.7"/><ellipse cx="707" cy="849" rx="2" ry="7.9"/><ellipse cx="265" cy="760" rx="2.3" ry="5.7"/><ellipse cx="334" cy="779" rx="2.3" ry="5.9"/><ellipse cx="176" cy="860" rx="2" ry="9"/><ellipse cx="549" cy="695" rx="1.1" ry="6.9"/><ellipse cx="784" cy="946" rx="1.9" ry="4.7"/><ellipse cx="636" cy="877" rx="0.9" ry="3.3"/><ellipse cx="618" cy="955" rx="2.2" ry="5.4"/><ellipse cx="235" cy="723" rx="1.7" ry="10.6"/><ellipse cx="381" cy="868" rx="1.1" ry="4.1"/><ellipse cx="444" cy="801" rx="1.4" ry="8.4"/><ellipse cx="284" cy="745" rx="1.5" ry="8.5"/><ellipse cx="388" cy="717" rx="2.6" ry="7.6"/><ellipse cx="374" cy="783" rx="0.9" ry="7.7"/><ellipse cx="187" cy="918" rx="2" ry="5.6"/><ellipse cx="617" cy="765" rx="1.7" ry="8.3"/><ellipse cx="263" cy="813" rx="1.9" ry="9.1"/><ellipse cx="781" cy="770" rx="2.1" ry="3.8"/><ellipse cx="444" cy="812" rx="1.5" ry="7.1"/><ellipse cx="341" cy="722" rx="1.9" ry="6.3"/><ellipse cx="698" cy="963" rx="2.4" ry="5"/><ellipse cx="384" cy="753" rx="1.5" ry="4.9"/><ellipse cx="302" cy="692" rx="2.6" ry="8.7"/><ellipse cx="310" cy="926" rx="1.7" ry="7.5"/><ellipse cx="573" cy="925" rx="1.1" ry="9.2"/><ellipse cx="400" cy="682" rx="1.6" ry="8.8"/><ellipse cx="370" cy="889" rx="1.1" ry="8.8"/><ellipse cx="559" cy="678" rx="1.2" ry="3.7"/><ellipse cx="696" cy="854" rx="2.1" ry="3.8"/><ellipse cx="248" cy="953" rx="0.9" ry="4.4"/><ellipse cx="541" cy="830" rx="1.8" ry="8.1"/><ellipse cx="663" cy="789" rx="1.9" ry="4.1"/><ellipse cx="723" cy="946" rx="1" ry="5.2"/><ellipse cx="213" cy="837" rx="1.1" ry="7.6"/><ellipse cx="391" cy="704" rx="0.9" ry="4.5"/><ellipse cx="529" cy="708" rx="1.5" ry="5.8"/><ellipse cx="478" cy="977" rx="2.4" ry="7.9"/><ellipse cx="779" cy="703" rx="2" ry="9.5"/><ellipse cx="161" cy="968" rx="2.1" ry="10.6"/><ellipse cx="302" cy="723" rx="2.1" ry="4.3"/><ellipse cx="520" cy="772" rx="1.2" ry="4.6"/><ellipse cx="715" cy="721" rx="1.1" ry="6.2"/><ellipse cx="290" cy="837" rx="2.2" ry="10.5"/><ellipse cx="580" cy="769" rx="1.3" ry="6.5"/><ellipse cx="336" cy="846" rx="1.7" ry="10"/><ellipse cx="648" cy="864" rx="2.5" ry="10.2"/><ellipse cx="326" cy="942" rx="2.4" ry="9.2"/><ellipse cx="734" cy="688" rx="2.5" ry="8.2"/><ellipse cx="270" cy="906" rx="2.4" ry="7.7"/><ellipse cx="757" cy="885" rx="1.9" ry="9.7"/><ellipse cx="770" cy="931" rx="1.8" ry="8.5"/><ellipse cx="308" cy="731" rx="1.1" ry="6"/><ellipse cx="649" cy="879" rx="2.3" ry="5.3"/><ellipse cx="352" cy="947" rx="1.1" ry="10.2"/><ellipse cx="676" cy="774" rx="2.3" ry="10.5"/><ellipse cx="521" cy="914" rx="1.1" ry="10.6"/><ellipse cx="176" cy="872" rx="2.2" ry="8.8"/><ellipse cx="306" cy="862" rx="1.2" ry="5.1"/><ellipse cx="632" cy="929" rx="1.3" ry="9.4"/><ellipse cx="519" cy="819" rx="1.5" ry="8.1"/><ellipse cx="527" cy="714" rx="2.5" ry="9.9"/><ellipse cx="565" cy="852" rx="2.3" ry="7.7"/><ellipse cx="593" cy="797" rx="1.2" ry="10.5"/><ellipse cx="754" cy="898" rx="2.1" ry="3.7"/><ellipse cx="644" cy="926" rx="1.4" ry="5.7"/><ellipse cx="183" cy="828" rx="2.5" ry="9.6"/><ellipse cx="458" cy="963" rx="1.9" ry="4.3"/><ellipse cx="403" cy="931" rx="1.9" ry="4.4"/><ellipse cx="283" cy="885" rx="1.8" ry="4.9"/><ellipse cx="286" cy="711" rx="2.4" ry="9.3"/><ellipse cx="668" cy="898" rx="1" ry="3.6"/><ellipse cx="605" cy="870" rx="2.3" ry="9.2"/><ellipse cx="423" cy="867" rx="2.5" ry="3.4"/><ellipse cx="547" cy="837" rx="1.7" ry="8.2"/><ellipse cx="410" cy="716" rx="2.2" ry="10.5"/><ellipse cx="458" cy="942" rx="2.3" ry="7.5"/><ellipse cx="706" cy="779" rx="1.5" ry="6.9"/><ellipse cx="445" cy="717" rx="1.1" ry="7.9"/><ellipse cx="285" cy="836" rx="1.5" ry="6.3"/><ellipse cx="379" cy="960" rx="1" ry="4"/><ellipse cx="158" cy="719" rx="1.9" ry="6.3"/><ellipse cx="742" cy="731" rx="1.5" ry="10.5"/><ellipse cx="466" cy="787" rx="1.9" ry="10.6"/><ellipse cx="680" cy="804" rx="2.3" ry="10.8"/><ellipse cx="369" cy="778" rx="2.4" ry="6.3"/><ellipse cx="198" cy="770" rx="2.1" ry="4.7"/><ellipse cx="511" cy="704" rx="1.6" ry="8.3"/><ellipse cx="198" cy="853" rx="1.3" ry="6.5"/><ellipse cx="586" cy="676" rx="1.7" ry="7.4"/><ellipse cx="779" cy="837" rx="2.4" ry="10.1"/><ellipse cx="707" cy="834" rx="1.2" ry="5.2"/><ellipse cx="208" cy="694" rx="1.6" ry="8.7"/><ellipse cx="602" cy="913" rx="1.2" ry="4.1"/><ellipse cx="170" cy="829" rx="1.4" ry="9"/><ellipse cx="634" cy="774" rx="1.3" ry="7"/><ellipse cx="701" cy="950" rx="2.1" ry="8.7"/><ellipse cx="577" cy="680" rx="2.1" ry="3.1"/><ellipse cx="162" cy="745" rx="1.4" ry="9.1"/><ellipse cx="598" cy="741" rx="2.6" ry="3.2"/><ellipse cx="487" cy="930" rx="1.1" ry="8.1"/><ellipse cx="326" cy="844" rx="0.9" ry="8.9"/><ellipse cx="524" cy="807" rx="1.2" ry="4"/><ellipse cx="393" cy="791" rx="1.5" ry="5"/><ellipse cx="445" cy="769" rx="2" ry="6.1"/><ellipse cx="164" cy="718" rx="0.9" ry="6.2"/><ellipse cx="448" cy="767" rx="1.9" ry="8.8"/><ellipse cx="445" cy="855" rx="2.5" ry="3"/><ellipse cx="316" cy="705" rx="1.8" ry="9.6"/><ellipse cx="535" cy="913" rx="1.6" ry="10.5"/><ellipse cx="589" cy="937" rx="1.1" ry="4.7"/><ellipse cx="602" cy="740" rx="2.1" ry="7.4"/><ellipse cx="774" cy="820" rx="1.8" ry="5.7"/><ellipse cx="717" cy="732" rx="1.1" ry="10.6"/><ellipse cx="766" cy="773" rx="1.2" ry="6.2"/><ellipse cx="298" cy="815" rx="2" ry="6.5"/><ellipse cx="511" cy="787" rx="2.1" ry="6.2"/><ellipse cx="328" cy="805" rx="1.8" ry="8.3"/><ellipse cx="790" cy="785" rx="1.8" ry="4.4"/><ellipse cx="646" cy="915" rx="1.7" ry="4.9"/><ellipse cx="231" cy="799" rx="1.3" ry="9.9"/><ellipse cx="424" cy="960" rx="2.3" ry="7.3"/><ellipse cx="210" cy="900" rx="1.5" ry="11"/><ellipse cx="557" cy="883" rx="1.7" ry="3.5"/><ellipse cx="227" cy="806" rx="1.3" ry="3"/><ellipse cx="688" cy="810" rx="2.1" ry="10.9"/><ellipse cx="611" cy="795" rx="1.5" ry="5.4"/><ellipse cx="389" cy="699" rx="1.1" ry="5.6"/><ellipse cx="368" cy="924" rx="1.2" ry="9.8"/><ellipse cx="290" cy="677" rx="1.9" ry="5.2"/><ellipse cx="292" cy="857" rx="1.3" ry="4.4"/><ellipse cx="646" cy="923" rx="2.4" ry="5.1"/><ellipse cx="399" cy="816" rx="1.4" ry="5.3"/><ellipse cx="470" cy="709" rx="1.8" ry="6.1"/><ellipse cx="781" cy="789" rx="0.9" ry="7.6"/><ellipse cx="549" cy="950" rx="2" ry="4.7"/><ellipse cx="353" cy="759" rx="2.1" ry="7.4"/><ellipse cx="420" cy="922" rx="2.2" ry="6.2"/><ellipse cx="256" cy="731" rx="1.5" ry="5.6"/><ellipse cx="287" cy="684" rx="1.9" ry="6.6"/><ellipse cx="503" cy="972" rx="2.5" ry="6.1"/><ellipse cx="372" cy="895" rx="1.4" ry="4.8"/><ellipse cx="535" cy="738" rx="1.8" ry="9"/><ellipse cx="324" cy="673" rx="1.6" ry="3.8"/><ellipse cx="584" cy="692" rx="1.1" ry="8.8"/><ellipse cx="758" cy="876" rx="1" ry="5.5"/><ellipse cx="346" cy="888" rx="1.5" ry="9.8"/><ellipse cx="515" cy="691" rx="1.5" ry="4.4"/><ellipse cx="657" cy="692" rx="2.1" ry="5"/><ellipse cx="719" cy="711" rx="1" ry="8.3"/><ellipse cx="252" cy="713" rx="2.3" ry="9.8"/><ellipse cx="666" cy="930" rx="2.2" ry="6"/><ellipse cx="720" cy="744" rx="2.4" ry="10.1"/><ellipse cx="739" cy="788" rx="2.5" ry="7.4"/><ellipse cx="382" cy="729" rx="1.9" ry="9.7"/><ellipse cx="567" cy="712" rx="0.9" ry="10.6"/><ellipse cx="593" cy="710" rx="2.2" ry="9"/><ellipse cx="169" cy="718" rx="2.4" ry="8.3"/><ellipse cx="727" cy="756" rx="1.2" ry="8.7"/><ellipse cx="609" cy="791" rx="1.6" ry="6"/><ellipse cx="578" cy="965" rx="1" ry="8"/><ellipse cx="779" cy="749" rx="1.1" ry="4.4"/><ellipse cx="645" cy="925" rx="0.9" ry="4.6"/><ellipse cx="586" cy="759" rx="2" ry="9.4"/><ellipse cx="788" cy="735" rx="2.3" ry="4.9"/><ellipse cx="515" cy="745" rx="1.1" ry="6.2"/><ellipse cx="169" cy="863" rx="2.3" ry="5.9"/><ellipse cx="581" cy="688" rx="1.7" ry="9.8"/><ellipse cx="521" cy="783" rx="1.4" ry="8.3"/><ellipse cx="702" cy="797" rx="2.5" ry="5.9"/><ellipse cx="153" cy="740" rx="2.1" ry="7.8"/><ellipse cx="618" cy="760" rx="2.4" ry="8"/><ellipse cx="697" cy="905" rx="1.2" ry="3.2"/><ellipse cx="476" cy="752" rx="2.1" ry="7.8"/><ellipse cx="749" cy="939" rx="2.3" ry="7.9"/><ellipse cx="272" cy="680" rx="2.3" ry="4.6"/><ellipse cx="441" cy="785" rx="2" ry="9.2"/><ellipse cx="755" cy="870" rx="2.1" ry="3.7"/><ellipse cx="331" cy="697" rx="2.1" ry="8.1"/><ellipse cx="759" cy="827" rx="1.6" ry="7.8"/><ellipse cx="744" cy="912" rx="1.8" ry="4.8"/><ellipse cx="154" cy="810" rx="2.3" ry="10.7"/><ellipse cx="412" cy="701" rx="1" ry="9.3"/><ellipse cx="665" cy="904" rx="1.5" ry="8.5"/><ellipse cx="603" cy="893" rx="1.9" ry="10.4"/><ellipse cx="642" cy="799" rx="1.8" ry="10.6"/><ellipse cx="503" cy="979" rx="1.1" ry="6.3"/><ellipse cx="175" cy="688" rx="1.3" ry="9"/><ellipse cx="207" cy="711" rx="2.3" ry="6.8"/><ellipse cx="380" cy="976" rx="1.5" ry="5"/><ellipse cx="669" cy="919" rx="1.8" ry="8.3"/><ellipse cx="388" cy="794" rx="1" ry="9.9"/><ellipse cx="201" cy="856" rx="2.1" ry="11"/><ellipse cx="284" cy="887" rx="0.9" ry="10.9"/><ellipse cx="634" cy="948" rx="1.2" ry="9.8"/><ellipse cx="503" cy="719" rx="1.3" ry="7.9"/><ellipse cx="204" cy="738" rx="2.5" ry="10.9"/><ellipse cx="573" cy="954" rx="2.3" ry="4.8"/><ellipse cx="511" cy="773" rx="1.2" ry="10.7"/><ellipse cx="428" cy="926" rx="2.5" ry="5.3"/><ellipse cx="188" cy="876" rx="1.8" ry="6.3"/><ellipse cx="169" cy="743" rx="0.9" ry="7.2"/><ellipse cx="785" cy="704" rx="1.3" ry="4.1"/><ellipse cx="519" cy="983" rx="2.4" ry="3.2"/><ellipse cx="790" cy="907" rx="1.8" ry="5"/><ellipse cx="487" cy="686" rx="2.3" ry="6"/><ellipse cx="433" cy="874" rx="2.2" ry="10.6"/><ellipse cx="658" cy="961" rx="2.2" ry="9.3"/><ellipse cx="464" cy="722" rx="2.2" ry="9.2"/><ellipse cx="188" cy="874" rx="2.3" ry="10.5"/><ellipse cx="556" cy="795" rx="1.9" ry="5.7"/><ellipse cx="195" cy="811" rx="1.8" ry="6.9"/><ellipse cx="645" cy="755" rx="1.2" ry="6.9"/><ellipse cx="427" cy="686" rx="2.6" ry="7.9"/><ellipse cx="746" cy="970" rx="1.8" ry="5.4"/><ellipse cx="190" cy="752" rx="1.3" ry="6.3"/><ellipse cx="493" cy="954" rx="2.3" ry="7.9"/><ellipse cx="469" cy="950" rx="2.5" ry="8.7"/><ellipse cx="547" cy="733" rx="1.3" ry="10.1"/><ellipse cx="588" cy="779" rx="2.2" ry="4"/><ellipse cx="180" cy="837" rx="2.4" ry="7"/><ellipse cx="776" cy="725" rx="1.2" ry="5.1"/><ellipse cx="408" cy="979" rx="1.8" ry="4.4"/><ellipse cx="643" cy="954" rx="2.5" ry="4.3"/><ellipse cx="621" cy="943" rx="2" ry="3.1"/><ellipse cx="179" cy="976" rx="0.9" ry="7.2"/><ellipse cx="496" cy="732" rx="1.4" ry="3.1"/><ellipse cx="470" cy="933" rx="1.3" ry="5.2"/><ellipse cx="151" cy="795" rx="2.2" ry="5.6"/><ellipse cx="704" cy="673" rx="2" ry="3.3"/><ellipse cx="228" cy="913" rx="2.4" ry="8.9"/><ellipse cx="472" cy="982" rx="1.2" ry="6.3"/><ellipse cx="445" cy="983" rx="1.8" ry="6.5"/><ellipse cx="625" cy="693" rx="1.9" ry="10.6"/><ellipse cx="756" cy="807" rx="1.7" ry="6.6"/><ellipse cx="441" cy="751" rx="1.4" ry="3.1"/><ellipse cx="254" cy="867" rx="1.6" ry="3.5"/><ellipse cx="301" cy="877" rx="0.9" ry="5.7"/><ellipse cx="454" cy="776" rx="1.6" ry="3.1"/><ellipse cx="620" cy="772" rx="1" ry="8.2"/><ellipse cx="671" cy="683" rx="2" ry="5.1"/><ellipse cx="522" cy="922" rx="2" ry="8.8"/><ellipse cx="218" cy="956" rx="1.8" ry="5.1"/><ellipse cx="354" cy="847" rx="1.3" ry="3.5"/><ellipse cx="452" cy="967" rx="1.2" ry="6.9"/><ellipse cx="477" cy="945" rx="2.3" ry="5.1"/><ellipse cx="249" cy="687" rx="1" ry="4.4"/><ellipse cx="623" cy="860" rx="1.4" ry="10.1"/><ellipse cx="496" cy="764" rx="2.5" ry="10"/><ellipse cx="630" cy="742" rx="1.4" ry="3.7"/><ellipse cx="605" cy="858" rx="1.6" ry="3.1"/><ellipse cx="403" cy="797" rx="1.5" ry="9.5"/><ellipse cx="402" cy="809" rx="1.2" ry="3.3"/><ellipse cx="339" cy="890" rx="2.4" ry="8.3"/><ellipse cx="590" cy="902" rx="1.6" ry="9.3"/><ellipse cx="569" cy="740" rx="2" ry="8.8"/><ellipse cx="410" cy="744" rx="2.4" ry="8.6"/><ellipse cx="514" cy="984" rx="1.8" ry="7.6"/><ellipse cx="607" cy="941" rx="2.2" ry="5.7"/><ellipse cx="577" cy="889" rx="2" ry="5.1"/><ellipse cx="443" cy="800" rx="2.4" ry="4.3"/><ellipse cx="228" cy="977" rx="1.2" ry="7"/><ellipse cx="690" cy="736" rx="2.5" ry="8.4"/><ellipse cx="494" cy="938" rx="2" ry="8.4"/><ellipse cx="325" cy="854" rx="1.3" ry="8.9"/><ellipse cx="615" cy="798" rx="1.6" ry="9"/><ellipse cx="412" cy="782" rx="1.5" ry="9.2"/><ellipse cx="749" cy="708" rx="1.9" ry="5.9"/><ellipse cx="275" cy="741" rx="2.5" ry="8.8"/><ellipse cx="783" cy="701" rx="0.9" ry="7.1"/><ellipse cx="775" cy="689" rx="1.3" ry="8.5"/><ellipse cx="260" cy="779" rx="1.3" ry="3"/><ellipse cx="417" cy="839" rx="1.3" ry="7.1"/><ellipse cx="458" cy="974" rx="1.6" ry="9.5"/><ellipse cx="699" cy="680" rx="2.5" ry="7.3"/><ellipse cx="320" cy="828" rx="1.8" ry="5.7"/><ellipse cx="625" cy="699" rx="1.5" ry="8.4"/><ellipse cx="400" cy="777" rx="2.1" ry="6.8"/><ellipse cx="524" cy="826" rx="1" ry="4.3"/><ellipse cx="397" cy="682" rx="1.4" ry="8.1"/><ellipse cx="480" cy="797" rx="1.2" ry="3.4"/><ellipse cx="359" cy="676" rx="1.5" ry="8"/><ellipse cx="484" cy="686" rx="2" ry="9.8"/><ellipse cx="186" cy="697" rx="1.1" ry="7"/><ellipse cx="236" cy="872" rx="1.4" ry="9.1"/><ellipse cx="422" cy="962" rx="1.4" ry="9.9"/><ellipse cx="542" cy="772" rx="2.4" ry="3.2"/><ellipse cx="585" cy="690" rx="2.1" ry="3.8"/><ellipse cx="249" cy="701" rx="2.3" ry="6.8"/><ellipse cx="473" cy="839" rx="2.2" ry="5.4"/><ellipse cx="313" cy="966" rx="1.5" ry="5"/><ellipse cx="477" cy="912" rx="1.1" ry="5.2"/><ellipse cx="580" cy="727" rx="1" ry="5"/><ellipse cx="228" cy="753" rx="1.8" ry="3.3"/><ellipse cx="572" cy="795" rx="2.3" ry="3.4"/><ellipse cx="169" cy="814" rx="2.5" ry="9.2"/><ellipse cx="784" cy="739" rx="2.6" ry="3.3"/><ellipse cx="621" cy="892" rx="1.2" ry="3.5"/><ellipse cx="662" cy="885" rx="2" ry="10.3"/><ellipse cx="303" cy="695" rx="2.5" ry="4.6"/><ellipse cx="276" cy="928" rx="1.6" ry="4.4"/><ellipse cx="506" cy="861" rx="1.2" ry="10.5"/><ellipse cx="216" cy="702" rx="2.1" ry="3.3"/><ellipse cx="453" cy="753" rx="2" ry="4"/><ellipse cx="305" cy="962" rx="2.1" ry="7.2"/><ellipse cx="601" cy="733" rx="1.7" ry="8.5"/><ellipse cx="212" cy="834" rx="1.2" ry="5.4"/><ellipse cx="551" cy="983" rx="2.5" ry="9.5"/><ellipse cx="176" cy="928" rx="1.3" ry="8.8"/><ellipse cx="266" cy="899" rx="1.2" ry="9.8"/><ellipse cx="521" cy="678" rx="2" ry="8.1"/><ellipse cx="659" cy="884" rx="2.2" ry="5"/><ellipse cx="720" cy="759" rx="1.3" ry="10.1"/><ellipse cx="173" cy="685" rx="2.3" ry="6.9"/><ellipse cx="499" cy="836" rx="1.8" ry="4.8"/><ellipse cx="524" cy="924" rx="1.3" ry="4.4"/><ellipse cx="221" cy="837" rx="1.2" ry="4.5"/><ellipse cx="778" cy="938" rx="1.4" ry="10.2"/><ellipse cx="453" cy="839" rx="1.3" ry="5.6"/><ellipse cx="790" cy="681" rx="1" ry="9.7"/><ellipse cx="532" cy="819" rx="2.6" ry="10.9"/><ellipse cx="302" cy="806" rx="1.4" ry="5.6"/><ellipse cx="536" cy="753" rx="1.3" ry="7.5"/><ellipse cx="688" cy="803" rx="1.4" ry="7.8"/><ellipse cx="450" cy="841" rx="1.9" ry="7.8"/><ellipse cx="708" cy="718" rx="1.4" ry="3.8"/><ellipse cx="711" cy="692" rx="2" ry="8.1"/><ellipse cx="441" cy="717" rx="1.9" ry="5.9"/><ellipse cx="541" cy="735" rx="1.1" ry="8.5"/><ellipse cx="739" cy="840" rx="1.9" ry="10.6"/><ellipse cx="328" cy="947" rx="2.2" ry="3.2"/><ellipse cx="641" cy="862" rx="1.3" ry="10"/><ellipse cx="544" cy="828" rx="1.8" ry="10.6"/><ellipse cx="277" cy="761" rx="1.7" ry="5.1"/><ellipse cx="150" cy="710" rx="2.5" ry="8.1"/><ellipse cx="529" cy="805" rx="1.9" ry="10.5"/><ellipse cx="281" cy="897" rx="1.3" ry="4.7"/><ellipse cx="405" cy="850" rx="2.1" ry="3.4"/><ellipse cx="339" cy="855" rx="1" ry="7.5"/><ellipse cx="781" cy="862" rx="1" ry="7.4"/><ellipse cx="340" cy="905" rx="1.7" ry="5.8"/><ellipse cx="150" cy="754" rx="1" ry="4.6"/><ellipse cx="728" cy="792" rx="2.6" ry="4.8"/><ellipse cx="294" cy="787" rx="1" ry="7.1"/><ellipse cx="198" cy="683" rx="2.4" ry="5.9"/><ellipse cx="600" cy="897" rx="1.7" ry="6.3"/><ellipse cx="600" cy="748" rx="1.2" ry="7.9"/><ellipse cx="710" cy="765" rx="1.2" ry="5.4"/><ellipse cx="532" cy="900" rx="1.6" ry="4.1"/><ellipse cx="350" cy="701" rx="1.1" ry="6.6"/><ellipse cx="586" cy="896" rx="2.1" ry="8.9"/><ellipse cx="153" cy="792" rx="1.5" ry="8.2"/><ellipse cx="486" cy="685" rx="1.9" ry="4"/><ellipse cx="601" cy="739" rx="2" ry="7.1"/><ellipse cx="698" cy="956" rx="2.5" ry="7.3"/><ellipse cx="683" cy="871" rx="1.4" ry="8.5"/><ellipse cx="266" cy="957" rx="1" ry="10.6"/><ellipse cx="286" cy="797" rx="1.1" ry="7.3"/><ellipse cx="447" cy="947" rx="1.2" ry="10.6"/><ellipse cx="379" cy="762" rx="1" ry="3.2"/><ellipse cx="159" cy="828" rx="2.3" ry="10.2"/><ellipse cx="783" cy="867" rx="1.4" ry="9.5"/><ellipse cx="402" cy="873" rx="1.1" ry="7"/><ellipse cx="581" cy="677" rx="1.8" ry="8.5"/><ellipse cx="167" cy="891" rx="2.2" ry="5"/><ellipse cx="285" cy="867" rx="2.6" ry="4.8"/><ellipse cx="640" cy="684" rx="2" ry="5.7"/><ellipse cx="724" cy="907" rx="1.4" ry="5.9"/><ellipse cx="629" cy="752" rx="1.5" ry="6.5"/><ellipse cx="463" cy="782" rx="1.8" ry="6.3"/><ellipse cx="688" cy="845" rx="1.5" ry="5.9"/><ellipse cx="686" cy="821" rx="0.9" ry="7.7"/><ellipse cx="347" cy="886" rx="0.9" ry="5.9"/><ellipse cx="193" cy="699" rx="1.8" ry="3.6"/><ellipse cx="162" cy="792" rx="1.8" ry="7.6"/><ellipse cx="544" cy="937" rx="2.5" ry="6.7"/><ellipse cx="188" cy="732" rx="1.6" ry="4.9"/><ellipse cx="784" cy="866" rx="1.5" ry="6.4"/><ellipse cx="385" cy="689" rx="2" ry="5.3"/><ellipse cx="286" cy="726" rx="2.1" ry="6.9"/><ellipse cx="625" cy="683" rx="1.8" ry="6.3"/><ellipse cx="540" cy="802" rx="1.1" ry="10.8"/><ellipse cx="746" cy="779" rx="1.3" ry="6.3"/><ellipse cx="361" cy="807" rx="1.6" ry="6"/><ellipse cx="779" cy="680" rx="1.7" ry="3.2"/><ellipse cx="679" cy="909" rx="1.4" ry="9.5"/><ellipse cx="245" cy="893" rx="2.6" ry="4.2"/><ellipse cx="252" cy="933" rx="1.9" ry="9"/><ellipse cx="643" cy="959" rx="1.5" ry="8"/><ellipse cx="497" cy="793" rx="1.7" ry="8.1"/><ellipse cx="582" cy="937" rx="2.3" ry="6.9"/><ellipse cx="182" cy="770" rx="1.4" ry="6.5"/><ellipse cx="227" cy="757" rx="2.2" ry="4.6"/><ellipse cx="543" cy="939" rx="1.5" ry="5.6"/><ellipse cx="178" cy="897" rx="2.2" ry="9.2"/><ellipse cx="223" cy="949" rx="1.1" ry="9.5"/><ellipse cx="455" cy="837" rx="1.7" ry="10"/><ellipse cx="378" cy="877" rx="1.8" ry="6.7"/><ellipse cx="769" cy="891" rx="2.2" ry="3.5"/><ellipse cx="207" cy="688" rx="2.4" ry="3.5"/><ellipse cx="429" cy="679" rx="2.3" ry="3.4"/><ellipse cx="324" cy="886" rx="2.1" ry="3.6"/><ellipse cx="548" cy="962" rx="2.3" ry="6.6"/><ellipse cx="772" cy="836" rx="2.5" ry="7.8"/><ellipse cx="528" cy="849" rx="2.4" ry="7"/><ellipse cx="591" cy="818" rx="1.4" ry="5.9"/><ellipse cx="780" cy="684" rx="2.1" ry="4.5"/><ellipse cx="600" cy="827" rx="1.6" ry="9.8"/><ellipse cx="784" cy="703" rx="1.3" ry="5.6"/><ellipse cx="299" cy="941" rx="1.2" ry="10.4"/><ellipse cx="244" cy="695" rx="1.7" ry="5.4"/><ellipse cx="722" cy="787" rx="1.1" ry="5.3"/><ellipse cx="482" cy="868" rx="1.6" ry="9.4"/><ellipse cx="620" cy="759" rx="1.3" ry="10.1"/><ellipse cx="739" cy="850" rx="2.2" ry="4.3"/><ellipse cx="404" cy="770" rx="1.9" ry="6.2"/><ellipse cx="329" cy="758" rx="2.3" ry="3.9"/><ellipse cx="671" cy="890" rx="2.2" ry="8.1"/><ellipse cx="278" cy="867" rx="1.6" ry="5.9"/><ellipse cx="273" cy="707" rx="2.2" ry="9.8"/><ellipse cx="769" cy="737" rx="2.5" ry="3.9"/><ellipse cx="549" cy="980" rx="1.5" ry="8.4"/><ellipse cx="241" cy="850" rx="1.1" ry="5.5"/><ellipse cx="644" cy="721" rx="1.8" ry="3.2"/><ellipse cx="658" cy="957" rx="1.8" ry="4.4"/><ellipse cx="348" cy="799" rx="2" ry="9.2"/><ellipse cx="215" cy="678" rx="2" ry="5"/><ellipse cx="372" cy="888" rx="2" ry="4.1"/><ellipse cx="568" cy="801" rx="1.2" ry="4.7"/><ellipse cx="186" cy="681" rx="1.7" ry="4.1"/><ellipse cx="479" cy="778" rx="1.1" ry="7.3"/><ellipse cx="188" cy="960" rx="2.1" ry="10.9"/><ellipse cx="332" cy="805" rx="1.1" ry="8.6"/><ellipse cx="624" cy="703" rx="2" ry="8.6"/><ellipse cx="507" cy="774" rx="2.4" ry="7.8"/><ellipse cx="443" cy="946" rx="2.6" ry="7.9"/><ellipse cx="565" cy="894" rx="2.4" ry="9.2"/><ellipse cx="514" cy="815" rx="2" ry="6.4"/><ellipse cx="417" cy="771" rx="2.3" ry="6.6"/><ellipse cx="483" cy="782" rx="2.3" ry="7.2"/><ellipse cx="679" cy="930" rx="1" ry="8.6"/><ellipse cx="218" cy="799" rx="1.2" ry="3.3"/><ellipse cx="711" cy="943" rx="1.3" ry="6.8"/><ellipse cx="350" cy="768" rx="2.3" ry="5"/><ellipse cx="631" cy="758" rx="1.8" ry="5.9"/><ellipse cx="751" cy="817" rx="1.8" ry="7.6"/><ellipse cx="156" cy="946" rx="1.8" ry="9.4"/><ellipse cx="616" cy="802" rx="2.2" ry="10.2"/><ellipse cx="642" cy="964" rx="1.3" ry="3.3"/><ellipse cx="652" cy="977" rx="2.3" ry="10.7"/><ellipse cx="712" cy="693" rx="2.4" ry="6.1"/><ellipse cx="676" cy="737" rx="1.6" ry="7.5"/><ellipse cx="365" cy="782" rx="2.4" ry="9"/><ellipse cx="750" cy="686" rx="1.5" ry="10.9"/><ellipse cx="777" cy="959" rx="1.2" ry="6.6"/><ellipse cx="787" cy="776" rx="1.5" ry="9.1"/><ellipse cx="741" cy="754" rx="1.6" ry="4"/><ellipse cx="585" cy="888" rx="1.9" ry="9.5"/><ellipse cx="451" cy="981" rx="2" ry="3.6"/><ellipse cx="382" cy="697" rx="1.6" ry="3.6"/><ellipse cx="248" cy="884" rx="2.2" ry="6.2"/><ellipse cx="719" cy="797" rx="1.4" ry="7.2"/><ellipse cx="691" cy="709" rx="2.6" ry="3.5"/><ellipse cx="337" cy="733" rx="2.5" ry="6.9"/><ellipse cx="468" cy="899" rx="2.6" ry="4.8"/><ellipse cx="463" cy="883" rx="1.8" ry="10.6"/><ellipse cx="603" cy="885" rx="1.1" ry="5.8"/><ellipse cx="186" cy="696" rx="1.7" ry="10.4"/><ellipse cx="764" cy="968" rx="1" ry="10.3"/><ellipse cx="782" cy="751" rx="1.6" ry="6.8"/><ellipse cx="311" cy="732" rx="1.2" ry="9.3"/><ellipse cx="454" cy="925" rx="2.5" ry="7.9"/><ellipse cx="494" cy="773" rx="1" ry="3.5"/><ellipse cx="790" cy="750" rx="1" ry="3.5"/><ellipse cx="632" cy="904" rx="2.4" ry="6.7"/><ellipse cx="735" cy="984" rx="1.8" ry="3.2"/><ellipse cx="775" cy="806" rx="1.9" ry="5.9"/><ellipse cx="646" cy="869" rx="1.1" ry="5"/><ellipse cx="612" cy="790" rx="2.4" ry="3.7"/><ellipse cx="702" cy="748" rx="1.7" ry="8.3"/><ellipse cx="358" cy="943" rx="2.3" ry="10"/><ellipse cx="272" cy="818" rx="1" ry="5.4"/><ellipse cx="583" cy="877" rx="1.9" ry="6.9"/></g><g fill="#bcb2a2" opacity="0.45"><circle cx="538.6" cy="676.9" r="0.6"/><circle cx="648.2" cy="815.7" r="0.8"/><circle cx="414.9" cy="835.4" r="1.3"/><circle cx="639.6" cy="683.8" r="1.2"/><circle cx="401.6" cy="777.4" r="1.5"/><circle cx="538.1" cy="902.6" r="1.1"/><circle cx="604.6" cy="798.5" r="1.1"/><circle cx="281.1" cy="704" r="0.6"/><circle cx="330.8" cy="810.6" r="0.7"/><circle cx="720.4" cy="858.1" r="0.9"/><circle cx="660" cy="735.9" r="1.2"/><circle cx="671.7" cy="929.2" r="1.3"/><circle cx="524.3" cy="975.1" r="0.6"/><circle cx="190.1" cy="767.8" r="0.9"/><circle cx="514.1" cy="873.3" r="1.5"/><circle cx="198.5" cy="815.9" r="1.5"/><circle cx="458.5" cy="711.4" r="1"/><circle cx="239.6" cy="674.1" r="0.9"/><circle cx="238.6" cy="788.7" r="1.5"/><circle cx="553.7" cy="864.6" r="1.6"/><circle cx="518.6" cy="821" r="1.3"/><circle cx="397" cy="744.8" r="1.1"/><circle cx="489.8" cy="761.5" r="1.4"/><circle cx="384.9" cy="887.2" r="0.7"/><circle cx="436.2" cy="771.3" r="0.8"/><circle cx="373.1" cy="869" r="1"/><circle cx="746.8" cy="875.2" r="0.8"/><circle cx="292.9" cy="927.5" r="0.9"/><circle cx="730" cy="759.6" r="0.7"/><circle cx="466.5" cy="863.4" r="1.3"/><circle cx="243.7" cy="845.7" r="1.3"/><circle cx="263.8" cy="771.4" r="1.5"/><circle cx="776.6" cy="696.5" r="1.5"/><circle cx="311.1" cy="865.9" r="1.4"/><circle cx="626.6" cy="931.5" r="1.3"/><circle cx="685.9" cy="881.9" r="1"/><circle cx="706.1" cy="873.5" r="0.9"/><circle cx="154.6" cy="933.2" r="1.6"/><circle cx="631.1" cy="904.5" r="1.5"/><circle cx="759.2" cy="865.7" r="1.5"/><circle cx="488.1" cy="819.3" r="1.5"/><circle cx="675.9" cy="973.8" r="1"/><circle cx="665.3" cy="974.9" r="1.4"/><circle cx="268.3" cy="743.2" r="1.4"/><circle cx="484.4" cy="722.3" r="1.5"/><circle cx="236.1" cy="682.4" r="1"/><circle cx="347.6" cy="952.8" r="0.9"/><circle cx="541" cy="960.4" r="0.7"/><circle cx="258.1" cy="898.4" r="1.5"/><circle cx="383.1" cy="964.3" r="1.2"/><circle cx="554.4" cy="717.2" r="1.4"/><circle cx="431.3" cy="719.4" r="0.7"/><circle cx="296.8" cy="823.5" r="0.7"/><circle cx="273.5" cy="915.1" r="1.4"/><circle cx="680.2" cy="866.2" r="1.2"/><circle cx="262.2" cy="919.2" r="1.4"/><circle cx="528.5" cy="840.1" r="0.7"/><circle cx="175.5" cy="782.3" r="1.5"/><circle cx="369.4" cy="956.5" r="1.5"/><circle cx="320.4" cy="817.7" r="1.4"/><circle cx="562.6" cy="852.9" r="0.9"/><circle cx="232.2" cy="847" r="1.1"/><circle cx="609.5" cy="740.8" r="1.1"/><circle cx="265.5" cy="884.1" r="1.3"/><circle cx="332.4" cy="723.6" r="0.7"/><circle cx="152" cy="970.9" r="1.3"/><circle cx="434.8" cy="931" r="0.7"/><circle cx="771.2" cy="734.6" r="1.2"/><circle cx="512.3" cy="831.5" r="0.8"/><circle cx="497" cy="980.9" r="1.3"/><circle cx="549.2" cy="960.3" r="0.8"/><circle cx="184.3" cy="741.6" r="0.9"/><circle cx="539.7" cy="936.5" r="1.3"/><circle cx="613" cy="871.6" r="1.1"/><circle cx="275" cy="848.2" r="0.8"/><circle cx="267.6" cy="840.7" r="0.8"/><circle cx="454.3" cy="856.1" r="0.8"/><circle cx="736.7" cy="824.2" r="0.6"/><circle cx="227.3" cy="727.3" r="1.2"/><circle cx="655" cy="719.9" r="0.9"/><circle cx="704.1" cy="937.4" r="1.3"/><circle cx="574.1" cy="979.9" r="1.4"/><circle cx="277.7" cy="824.4" r="1.6"/><circle cx="308.7" cy="939" r="1.4"/><circle cx="575.5" cy="707.5" r="0.6"/><circle cx="558.8" cy="922.9" r="1.1"/><circle cx="279.2" cy="953.1" r="1.2"/><circle cx="288.9" cy="916.9" r="1.2"/><circle cx="586.8" cy="795.1" r="0.9"/><circle cx="388.4" cy="880.9" r="1.2"/><circle cx="387.2" cy="728.8" r="1"/><circle cx="502.2" cy="705.9" r="0.8"/><circle cx="705.7" cy="779.2" r="1"/><circle cx="206.4" cy="836.8" r="0.8"/><circle cx="179" cy="836.7" r="1.1"/><circle cx="529.9" cy="795.5" r="0.8"/><circle cx="708.6" cy="938.2" r="0.7"/><circle cx="720.5" cy="895.1" r="1.5"/><circle cx="487" cy="741.9" r="1.5"/><circle cx="612.6" cy="743.3" r="0.9"/><circle cx="260.4" cy="791.4" r="1.6"/><circle cx="430.4" cy="831.1" r="1.5"/><circle cx="417.3" cy="763.3" r="1.1"/><circle cx="369.1" cy="758.6" r="1.2"/><circle cx="152.7" cy="729.5" r="0.7"/><circle cx="336.1" cy="820.5" r="0.8"/><circle cx="155.4" cy="859.8" r="1.6"/><circle cx="224.6" cy="803.9" r="0.8"/><circle cx="500.5" cy="833.1" r="1.4"/><circle cx="238.7" cy="814.3" r="0.7"/><circle cx="529" cy="754.7" r="1.2"/><circle cx="520.3" cy="757.2" r="1.6"/><circle cx="652.7" cy="959" r="1.3"/><circle cx="312.4" cy="794.1" r="1.1"/><circle cx="635.2" cy="844.8" r="1.5"/><circle cx="488.2" cy="675" r="1.5"/><circle cx="559.2" cy="974.3" r="1.4"/><circle cx="439.5" cy="820.9" r="0.7"/><circle cx="442.5" cy="935.1" r="1"/><circle cx="396.3" cy="972.3" r="0.8"/><circle cx="204.8" cy="706.4" r="1.3"/><circle cx="568" cy="947" r="1.2"/><circle cx="757.9" cy="677.9" r="0.8"/><circle cx="629.5" cy="781.8" r="1.4"/><circle cx="204.4" cy="756.9" r="0.8"/><circle cx="307.4" cy="729.5" r="0.9"/><circle cx="538.3" cy="978" r="1.4"/><circle cx="698.5" cy="677.8" r="0.9"/><circle cx="492.8" cy="911.1" r="1.6"/><circle cx="201.5" cy="870.2" r="1.1"/><circle cx="584" cy="797.3" r="0.7"/><circle cx="310.1" cy="975.7" r="0.8"/><circle cx="757.9" cy="973" r="1.1"/><circle cx="243.9" cy="955.5" r="1"/><circle cx="290.2" cy="709.9" r="1"/><circle cx="674.5" cy="947.2" r="0.7"/><circle cx="599.1" cy="757.8" r="1.4"/><circle cx="301.2" cy="952.3" r="0.8"/><circle cx="285.2" cy="704.1" r="0.9"/><circle cx="747.5" cy="886.5" r="1.2"/><circle cx="410.1" cy="966.4" r="1"/><circle cx="710.4" cy="721.3" r="1.2"/><circle cx="394.5" cy="900.9" r="0.7"/><circle cx="196.3" cy="890.4" r="0.6"/><circle cx="321" cy="906.4" r="1.4"/><circle cx="629.6" cy="747.2" r="1.6"/><circle cx="328.4" cy="913.3" r="1.3"/><circle cx="194.7" cy="763.7" r="1.1"/><circle cx="753.8" cy="805.8" r="0.9"/><circle cx="768.6" cy="977.2" r="0.7"/><circle cx="700.9" cy="889.8" r="1.1"/><circle cx="429.2" cy="770.6" r="0.9"/><circle cx="298.7" cy="675.7" r="0.7"/><circle cx="315.2" cy="714.2" r="1.1"/><circle cx="252.9" cy="804.8" r="0.9"/><circle cx="246.2" cy="818.3" r="1.3"/><circle cx="321.1" cy="783.6" r="0.9"/><circle cx="423.8" cy="732.6" r="0.8"/><circle cx="384.5" cy="777.1" r="1.4"/><circle cx="401.4" cy="929.4" r="0.8"/><circle cx="545" cy="782.4" r="0.7"/><circle cx="520.1" cy="772" r="1.1"/><circle cx="617.4" cy="766.2" r="1.2"/><circle cx="739.2" cy="951.7" r="0.7"/><circle cx="582.4" cy="878.5" r="1.4"/><circle cx="649.4" cy="692.4" r="1.5"/><circle cx="495.9" cy="949.6" r="1.5"/><circle cx="282.4" cy="697.3" r="0.7"/><circle cx="695.5" cy="779.4" r="0.9"/><circle cx="232.1" cy="735.4" r="1.2"/><circle cx="291.3" cy="867.8" r="1.3"/><circle cx="263.7" cy="754.9" r="0.9"/><circle cx="438.9" cy="848.8" r="1.2"/><circle cx="584.6" cy="824.4" r="1.1"/><circle cx="457.3" cy="825.9" r="0.7"/><circle cx="623.6" cy="771.9" r="1.6"/><circle cx="518.7" cy="719.9" r="1.6"/><circle cx="753.2" cy="855.4" r="0.6"/><circle cx="789.9" cy="946.5" r="1"/><circle cx="480.3" cy="946.5" r="0.6"/><circle cx="232.6" cy="698.6" r="1.4"/><circle cx="271.5" cy="965.7" r="0.9"/><circle cx="313.3" cy="974.3" r="1"/><circle cx="274.6" cy="877.7" r="1.1"/><circle cx="573.5" cy="730.4" r="1.1"/><circle cx="256" cy="726.8" r="0.8"/><circle cx="684.7" cy="751.4" r="0.7"/><circle cx="343.7" cy="795.2" r="1.3"/><circle cx="613.2" cy="846.9" r="1.1"/><circle cx="503.9" cy="813.5" r="0.8"/><circle cx="167.9" cy="773.2" r="1.3"/><circle cx="179.9" cy="778.5" r="1.6"/><circle cx="419.1" cy="740.2" r="1.2"/><circle cx="175.1" cy="722.2" r="1.1"/><circle cx="572.9" cy="787.1" r="1"/><circle cx="259.5" cy="696.8" r="1"/><circle cx="625.6" cy="732.5" r="1.3"/><circle cx="679.9" cy="965.2" r="0.7"/><circle cx="779" cy="688" r="1.1"/><circle cx="602.3" cy="812.4" r="0.9"/><circle cx="556" cy="692.9" r="0.8"/><circle cx="659.9" cy="779.6" r="1.1"/><circle cx="692.2" cy="826.1" r="1.1"/><circle cx="747.8" cy="838.6" r="1.1"/><circle cx="416.7" cy="842.2" r="0.7"/><circle cx="786.6" cy="691.9" r="0.8"/><circle cx="691.1" cy="883.2" r="1.6"/><circle cx="601.3" cy="933" r="1"/><circle cx="648.4" cy="823.7" r="0.6"/><circle cx="339.5" cy="810.2" r="1.5"/><circle cx="738.1" cy="983.1" r="1.1"/><circle cx="532.9" cy="939" r="0.8"/><circle cx="195" cy="788.4" r="1.2"/><circle cx="351.9" cy="711.2" r="1.1"/><circle cx="489.7" cy="951.3" r="1.5"/><circle cx="766.3" cy="688" r="0.7"/><circle cx="416.4" cy="686.5" r="1"/><circle cx="404.1" cy="958.4" r="1.5"/><circle cx="747.5" cy="782.5" r="0.8"/><circle cx="456.5" cy="871.7" r="0.6"/><circle cx="191" cy="755.9" r="1"/><circle cx="321.5" cy="871.2" r="1.3"/><circle cx="307.8" cy="706.9" r="1.2"/><circle cx="537.5" cy="923.7" r="0.9"/><circle cx="353.6" cy="876.5" r="0.7"/><circle cx="321" cy="865.3" r="1.1"/><circle cx="694.9" cy="801" r="1"/><circle cx="220.2" cy="950.7" r="1.5"/><circle cx="186.5" cy="975.9" r="1.2"/><circle cx="384.5" cy="792.8" r="0.7"/><circle cx="512.3" cy="838.6" r="1.3"/><circle cx="389.8" cy="696.6" r="1.4"/><circle cx="466.6" cy="861.6" r="1.4"/><circle cx="380" cy="964.9" r="1.4"/><circle cx="690.5" cy="820.1" r="1"/><circle cx="255.2" cy="927.9" r="1.5"/><circle cx="529.3" cy="931.7" r="1.1"/><circle cx="770.3" cy="698.4" r="1.5"/><circle cx="633.9" cy="701" r="1.3"/><circle cx="556.4" cy="924.2" r="0.8"/><circle cx="245.1" cy="811.2" r="1.2"/><circle cx="398.2" cy="965.9" r="1"/><circle cx="389.8" cy="774.7" r="0.9"/><circle cx="679" cy="919.2" r="0.7"/><circle cx="239.5" cy="784.3" r="1"/><circle cx="258.6" cy="827.8" r="1.1"/><circle cx="693" cy="822.3" r="0.6"/><circle cx="182.1" cy="940" r="1.5"/><circle cx="568.9" cy="888.9" r="0.9"/><circle cx="526.7" cy="681.4" r="1.5"/><circle cx="542" cy="967.1" r="1.3"/><circle cx="769.8" cy="948.7" r="1"/><circle cx="266" cy="905.3" r="0.7"/><circle cx="215" cy="834.6" r="1.5"/><circle cx="649.4" cy="935.3" r="1.5"/><circle cx="718.6" cy="712.6" r="1"/><circle cx="339" cy="853.4" r="1"/><circle cx="374.5" cy="866.8" r="0.6"/><circle cx="484.4" cy="927.5" r="0.7"/><circle cx="216.2" cy="890.5" r="1.3"/><circle cx="420.2" cy="953.5" r="1.4"/><circle cx="254.1" cy="874.2" r="1.1"/><circle cx="587.9" cy="721.9" r="1.2"/><circle cx="751.6" cy="919" r="0.7"/><circle cx="343.2" cy="687.4" r="1.3"/><circle cx="687.7" cy="849.4" r="0.6"/><circle cx="243.3" cy="928.9" r="1.2"/><circle cx="426.5" cy="729.9" r="0.9"/><circle cx="532" cy="977" r="1"/><circle cx="185.4" cy="903.5" r="0.7"/><circle cx="336.5" cy="969.3" r="1.5"/><circle cx="204.9" cy="870.5" r="1"/><circle cx="433" cy="906" r="0.8"/><circle cx="363.3" cy="689.6" r="1.3"/><circle cx="338" cy="694" r="0.6"/><circle cx="554.5" cy="797.6" r="1.2"/><circle cx="429.4" cy="695.5" r="1.1"/><circle cx="456.4" cy="756.3" r="0.9"/><circle cx="212.3" cy="921.3" r="1.4"/><circle cx="438.2" cy="832.8" r="0.9"/><circle cx="374.8" cy="888.7" r="1.5"/><circle cx="210.4" cy="983.6" r="0.9"/><circle cx="610.8" cy="880.7" r="0.9"/><circle cx="671.8" cy="961.7" r="1.2"/><circle cx="641" cy="955.4" r="1.5"/><circle cx="223.2" cy="683.7" r="0.7"/><circle cx="244.9" cy="690.9" r="1.1"/><circle cx="417.2" cy="703.7" r="0.8"/><circle cx="314.8" cy="980.3" r="1.2"/><circle cx="608.8" cy="956.9" r="1.6"/><circle cx="294.7" cy="947.3" r="1.2"/><circle cx="621.1" cy="728.8" r="1.2"/><circle cx="549.6" cy="898.1" r="0.8"/><circle cx="204" cy="815.9" r="1.5"/><circle cx="348.1" cy="978.6" r="0.8"/><circle cx="528.8" cy="888.4" r="0.9"/><circle cx="300.5" cy="777.5" r="1.5"/><circle cx="638.7" cy="731.8" r="1.5"/><circle cx="211.7" cy="915.8" r="1.3"/><circle cx="211.6" cy="761.4" r="1.6"/><circle cx="762.8" cy="734.5" r="1.4"/><circle cx="367" cy="826.8" r="1.5"/><circle cx="267.6" cy="765.8" r="1.6"/><circle cx="287.2" cy="769.4" r="1.4"/><circle cx="704.5" cy="918.2" r="0.6"/><circle cx="207.7" cy="933" r="1.1"/><circle cx="443.6" cy="823" r="1.5"/><circle cx="321.6" cy="842.4" r="1.5"/><circle cx="585.7" cy="976.7" r="0.7"/><circle cx="279.2" cy="672.4" r="0.9"/><circle cx="515.7" cy="753.4" r="1.6"/><circle cx="491.1" cy="948.3" r="1.3"/><circle cx="287.9" cy="857.7" r="1.6"/><circle cx="646.1" cy="774.4" r="1.6"/><circle cx="743.2" cy="925.2" r="1"/><circle cx="367.3" cy="939.3" r="1.1"/><circle cx="430.7" cy="672.6" r="0.7"/><circle cx="242.1" cy="896.2" r="0.9"/><circle cx="372.2" cy="685.9" r="1.2"/><circle cx="749.5" cy="939.5" r="1.5"/><circle cx="676.2" cy="722.4" r="0.9"/><circle cx="276.7" cy="983.8" r="0.8"/><circle cx="506.8" cy="815.7" r="1.4"/><circle cx="568.5" cy="979.2" r="1"/><circle cx="576.9" cy="942.8" r="0.6"/><circle cx="609.1" cy="797.8" r="1.1"/><circle cx="358.8" cy="813.2" r="1.6"/><circle cx="536.2" cy="678.9" r="0.9"/><circle cx="536" cy="763.7" r="1.1"/><circle cx="439.9" cy="835.8" r="0.7"/><circle cx="345.7" cy="900" r="1.1"/><circle cx="715" cy="952" r="0.7"/><circle cx="776.8" cy="791.7" r="1.1"/><circle cx="716.4" cy="933.7" r="0.9"/><circle cx="684.8" cy="714.5" r="1.4"/><circle cx="529.2" cy="697.6" r="1.3"/><circle cx="730.9" cy="749.5" r="1.5"/><circle cx="274.1" cy="856.7" r="1.3"/><circle cx="443.8" cy="890.3" r="1.5"/><circle cx="591" cy="953" r="0.8"/><circle cx="636.1" cy="803.1" r="0.7"/><circle cx="676.7" cy="672.3" r="0.9"/><circle cx="223.1" cy="823" r="1.5"/><circle cx="451.1" cy="930" r="1.1"/><circle cx="558.9" cy="735.3" r="0.7"/><circle cx="497.3" cy="743.1" r="1.4"/><circle cx="250.9" cy="785" r="1.2"/><circle cx="399.2" cy="703.8" r="1.3"/><circle cx="335.6" cy="968.3" r="1.4"/><circle cx="242" cy="688.3" r="0.7"/><circle cx="358.3" cy="815.2" r="1.3"/><circle cx="481.1" cy="815.7" r="1.4"/><circle cx="733" cy="706.4" r="1"/><circle cx="383.6" cy="939.9" r="1.5"/><circle cx="500.9" cy="796.2" r="1.2"/><circle cx="599" cy="954.6" r="1"/><circle cx="306.4" cy="962.2" r="1.3"/><circle cx="503.2" cy="674.8" r="1.2"/><circle cx="160.6" cy="692.9" r="1"/><circle cx="695.7" cy="951.9" r="1.5"/><circle cx="558" cy="817.4" r="1"/><circle cx="261.6" cy="844.7" r="1"/><circle cx="424.7" cy="944.7" r="1.4"/><circle cx="783" cy="930.9" r="1.1"/><circle cx="691.3" cy="976.1" r="0.9"/><circle cx="212.3" cy="795.8" r="1.3"/><circle cx="590.9" cy="922.8" r="1.2"/><circle cx="220.6" cy="763.5" r="0.8"/><circle cx="229.8" cy="938.5" r="0.8"/><circle cx="559.8" cy="974.7" r="0.9"/><circle cx="697.8" cy="871" r="0.9"/><circle cx="459.4" cy="784.8" r="1"/><circle cx="154" cy="909.5" r="1.5"/><circle cx="448.9" cy="961.8" r="1.4"/><circle cx="344.7" cy="740.1" r="0.9"/><circle cx="466.5" cy="903.4" r="1.2"/><circle cx="233.3" cy="897.1" r="1.6"/><circle cx="250" cy="709.7" r="1.1"/><circle cx="301.9" cy="859" r="0.8"/><circle cx="722.7" cy="742.4" r="0.6"/><circle cx="768.2" cy="810.5" r="1.2"/><circle cx="669.4" cy="971.5" r="1.5"/><circle cx="420" cy="880.1" r="0.7"/><circle cx="494.2" cy="904.4" r="1.3"/><circle cx="164.7" cy="834.9" r="1.2"/><circle cx="631.7" cy="809.5" r="0.6"/><circle cx="428.2" cy="972.9" r="1"/><circle cx="286.5" cy="878.6" r="1.5"/><circle cx="236.9" cy="766.7" r="0.9"/><circle cx="655.7" cy="732.6" r="1"/><circle cx="368.5" cy="828.9" r="0.9"/><circle cx="651.7" cy="943.9" r="1.6"/><circle cx="449.6" cy="780.6" r="1.1"/><circle cx="346.8" cy="673.9" r="0.7"/><circle cx="456.1" cy="727.7" r="0.8"/><circle cx="529.5" cy="839.6" r="1.6"/><circle cx="398.6" cy="775" r="1.3"/><circle cx="186.5" cy="874.2" r="0.8"/><circle cx="575.3" cy="891.7" r="1"/><circle cx="673.6" cy="694.5" r="1.4"/><circle cx="340.1" cy="984" r="1.4"/><circle cx="239.3" cy="822.2" r="1.6"/><circle cx="782.3" cy="773.4" r="0.8"/><circle cx="203.2" cy="766.4" r="0.8"/><circle cx="561.5" cy="704.4" r="1.4"/><circle cx="485.9" cy="961.3" r="1.2"/><circle cx="399.3" cy="760.4" r="1.5"/><circle cx="669.2" cy="844.5" r="0.8"/><circle cx="388.7" cy="672" r="1.3"/><circle cx="609.5" cy="785.1" r="1.3"/><circle cx="164" cy="858.5" r="1.3"/><circle cx="201" cy="963.9" r="1"/><circle cx="718.4" cy="935.5" r="1.4"/><circle cx="325.9" cy="692.5" r="1.1"/><circle cx="763.1" cy="770.7" r="1.1"/><circle cx="417.5" cy="724.1" r="1.4"/><circle cx="523.9" cy="806.6" r="1.3"/><circle cx="245" cy="823.5" r="1.3"/><circle cx="318.6" cy="787.6" r="1.6"/><circle cx="466.6" cy="930.5" r="1.4"/><circle cx="657.5" cy="761.5" r="0.7"/><circle cx="691.5" cy="773.9" r="1.2"/><circle cx="299.4" cy="980.6" r="0.6"/><circle cx="504.4" cy="984.8" r="1.2"/><circle cx="325.7" cy="928.6" r="1"/><circle cx="472.3" cy="932.3" r="0.8"/><circle cx="329.7" cy="695.7" r="1.2"/><circle cx="303.2" cy="819.5" r="1.4"/><circle cx="714.4" cy="678.1" r="1.5"/><circle cx="610.3" cy="710.9" r="1.3"/><circle cx="483" cy="946.6" r="0.9"/><circle cx="656.3" cy="893.9" r="0.7"/><circle cx="486.5" cy="696.6" r="1.1"/><circle cx="166.1" cy="761.8" r="0.8"/><circle cx="466.7" cy="915.9" r="1.2"/><circle cx="233" cy="688.5" r="0.6"/><circle cx="730.4" cy="849.5" r="1.2"/><circle cx="313.5" cy="953.8" r="1.5"/><circle cx="360.9" cy="779.7" r="1.2"/><circle cx="275.7" cy="704.4" r="1.1"/><circle cx="232" cy="707.5" r="1.5"/><circle cx="683" cy="728.3" r="1.3"/><circle cx="566.9" cy="929.5" r="1.1"/><circle cx="710.7" cy="701.6" r="0.8"/><circle cx="516.6" cy="717.3" r="0.8"/><circle cx="630.6" cy="902.3" r="0.8"/><circle cx="483.1" cy="673.9" r="1"/><circle cx="726.5" cy="943.7" r="0.6"/><circle cx="509" cy="723.1" r="0.7"/><circle cx="744" cy="947.1" r="0.7"/></g><g fill="#cdc0a7" opacity="0.55"><path d="M542 966 548 957 548 957 546 965 542 967ZM743 980 742 965 743 964 747 970 746 977ZM422 914 425 913 427 901 426 895 425 892 424 892 421 899 421 911ZM384 685 383 684 379 687 380 693 381 693ZM785 804 788 817 790 818 792 814 788 801 787 800ZM758 830 762 829 763 841 762 843 757 831ZM545 790 545 801 539 796 539 793 540 790 543 788ZM776 880 777 883 772 884 773 876 775 877ZM465 826 466 826 467 824 466 821 466 820ZM470 669 474 676 474 682 471 686 470 686 467 678ZM782 687 781 686 780 692 781 693 781 693ZM370 931 371 919 366 912 367 924ZM285 879 282 878 279 888 279 889 284 889ZM480 782 485 784 488 772 488 771 487 768 480 779ZM766 712 766 708 769 703 771 704 773 716 771 725 768 725ZM307 693 312 688 315 698 310 708 309 708 307 693ZM584 784 584 792 584 794 587 797 591 784 590 782 588 782ZM456 726 457 725 457 712 456 712 454 716 454 727ZM282 688 280 682 277 688 279 693ZM279 736 276 731 276 732 275 742 281 745 282 742 282 740ZM783 746 785 746 786 741 785 739 782 743ZM731 894 727 897 727 903 729 908 731 911 734 902 735 898 733 895ZM393 859 392 869 392 869 390 868 387 852 393 859ZM685 683 684 687 685 693 688 694 691 688 691 686 686 682ZM322 771 316 758 318 754 319 754 322 765 322 769ZM370 680 369 676 368 674 366 677 365 684 369 688ZM468 915 469 915 470 916 473 926 472 927 466 923 466 923 467 919ZM783 796 785 792 786 783 786 782 785 779 780 776 780 797ZM746 909 747 911 743 925 741 922 741 920 744 908ZM402 952 402 950 398 948 396 951 398 957ZM394 803 395 811 396 812 396 812 398 797 399 793 397 792 394 800ZM726 925 728 918 730 921 731 925 730 927 725 928 726 925ZM288 706 290 701 293 712 288 722 288 722ZM671 838 665 835 666 826 671 836ZM178 945 174 935 176 934 182 933ZM606 980 605 975 603 975 602 979 606 990ZM609 979 614 982 612 972 607 973ZM381 828 380 835 385 842 386 840 384 829ZM465 708 468 710 469 709 468 700 465 707ZM362 676 357 675 356 687 359 690 361 687ZM563 901 564 910 563 910 558 898ZM551 830 550 839 548 842 544 832 544 829 547 825ZM281 796 283 795 285 789 281 786 281 795ZM173 896 177 905 179 906 179 899 177 895 173 893ZM452 779 452 776 454 767 457 768 456 779ZM531 763 532 764 536 770 540 758 541 753 538 750 531 757ZM348 906 346 903 345 891 346 890 355 895 356 895 357 899 357 900 355 904 352 906ZM479 886 483 887 484 885 483 881 480 877 479 877ZM388 777 389 783 390 783 393 778 393 778ZM407 950 407 950 407 953 410 959 413 963 417 953 416 950ZM751 960 749 963 747 959 748 950 750 951 753 954 752 956ZM678 821 685 824 689 812 687 810 678 819ZM691 675 693 680 692 682 688 679ZM552 895 552 895 552 898 556 909 559 907 555 897ZM327 807 326 800 318 808 318 809 321 813 327 813ZM503 731 507 720 506 718 501 720 499 723 499 728 501 731 503 731ZM637 883 637 883 636 884 635 902 637 901 640 898 640 894 639 887ZM531 950 527 956 529 961 534 966 537 965 537 962ZM490 977 488 978 488 978 486 979 485 978 484 961 488 961 490 975ZM459 950 459 959 457 963 457 963 455 961 455 951 455 951ZM744 846 747 858 747 859 741 859 741 847ZM787 876 791 886 794 877 788 873ZM376 777 375 774 374 772 371 768 366 777 366 779 369 785 376 778ZM564 929 559 928 558 935 560 937 561 937 564 931ZM773 806 768 821 766 820 766 806 770 802ZM780 888 780 896 783 900 786 897 783 883ZM285 748 284 751 285 761 290 764 291 761 288 745ZM693 974 693 969 693 968 698 965 700 969 700 971 700 971ZM608 870 613 873 610 878 608 878 606 874ZM402 852 403 853 403 853 397 856 397 856 397 854ZM762 692 764 689 764 686 762 689ZM388 814 392 813 391 807 387 806 387 810ZM659 829 661 818 663 818 663 823 662 830 661 830ZM180 806 179 801 173 797 169 803 169 805 174 813ZM755 755 757 761 761 756 757 752ZM601 815 600 808 601 807 603 811 604 814ZM660 706 665 691 664 687 664 687 662 688 659 701ZM729 837 729 831 732 829 734 834 734 839 732 841ZM352 748 343 752 342 742 347 738 352 745ZM648 963 645 958 644 969 646 971 648 967ZM727 886 723 876 721 884 721 884 724 889 727 886ZM787 732 789 726 790 726 790 726 790 727 790 736 788 736 787 733ZM560 854 560 855 557 856 550 856 551 848 553 845 554 845ZM592 845 588 847 586 850 586 856 589 862 594 858ZM464 943 466 946 465 953 462 955 462 945ZM787 882 791 891 790 893 790 894 788 895 786 883ZM248 800 239 789 238 783 246 776 250 778 251 789ZM335 798 330 804 329 796 329 791 334 795ZM219 723 215 711 217 704 224 705 224 706 224 707ZM637 916 635 917 634 919 636 925 640 936 643 929 644 926ZM554 928 554 927 548 928 548 929 549 937 554 933ZM742 824 739 823 739 818 741 819ZM216 818 224 819 225 818 222 809 219 810 216 816ZM734 869 737 872 737 865 735 863ZM497 969 497 956 503 960 499 970ZM753 784 748 787 751 800 755 794 754 789ZM751 749 749 749 746 739 745 738 753 736ZM625 882 632 884 631 907 630 908 629 909 626 888ZM197 926 201 909 202 908 205 917 200 927ZM680 972 680 977 678 994 677 989 678 972 680 971ZM327 731 330 715 330 715 332 715 334 720 334 731 330 732ZM454 829 449 824 449 824 452 841 453 839ZM672 687 674 683 671 675 670 676 670 677ZM381 822 382 814 384 814 385 818 383 822 381 822ZM728 799 728 801 733 806 734 803 735 799 734 792 733 792ZM775 764 769 760 768 756 773 754ZM652 945 653 953 655 952 658 944 655 938ZM617 796 614 807 614 816 616 816 621 805 620 802 618 797ZM340 818 347 823 347 815 345 808ZM770 677 772 681 772 691 771 693 769 693 767 688 767 684 767 683 768 679ZM304 674 304 679 304 686 304 686 302 685 301 675ZM304 924 300 931 299 939 306 943 310 936 305 923ZM299 797 299 796 297 792 297 789 300 789 301 793ZM555 750 558 754 559 753 560 729 560 729 555 736ZM264 790 261 790 257 788 256 779 258 776 265 784 265 786ZM609 884 608 890 611 894 612 894 612 892 610 884ZM345 950 342 951 345 974 345 974 349 972 353 957 352 955 352 954 347 951ZM699 935 697 927 698 913 704 913 706 917 704 927 701 934ZM154 855 152 845 152 845 157 845 158 854 157 855ZM684 714 685 716 684 711ZM297 949 297 961 298 961 302 961 304 956 304 952 298 948ZM570 990 567 995 567 978 568 977 572 982ZM498 939 498 944 499 945 505 949 509 947 509 947 509 937 502 931 499 932ZM155 774 154 774 153 779 156 791 156 791 159 789 159 788 159 778ZM432 901 431 896 441 900 442 903 434 908ZM594 690 593 694 592 705 598 704 597 695 595 690ZM622 936 626 953 625 956 624 956 620 951 620 943 622 936ZM359 973 360 969 355 961 351 976 357 981 358 980ZM740 686 731 683 731 683 738 676ZM779 857 781 857 783 861 777 875 776 872 779 857ZM630 683 627 688 628 694 631 692 631 691ZM512 836 516 829 520 829 520 834 519 838 516 843ZM349 685 351 672 354 676 353 685 351 686ZM642 884 643 892 646 888 645 883ZM548 700 547 710 548 710 554 711 551 695ZM590 771 592 771 592 755 588 755 587 757ZM352 717 351 716 349 718 349 723 351 724 352 721ZM488 757 495 759 490 766 488 763 488 763ZM673 821 672 829 668 821 667 815 670 814 673 818 673 820ZM511 695 510 698 511 705 512 706 513 706 515 697 514 694ZM778 735 780 729 779 723 777 722 776 722 774 729 776 734ZM604 742 607 750 607 767 603 763 600 751 602 745ZM296 808 292 806 292 805 295 797 296 802ZM182 754 182 753 182 748 178 746 179 754ZM454 674 457 662 459 672 460 675 456 678ZM483 716 486 712 488 712 490 713 493 721 493 728 488 734ZM268 915 267 918 267 925 269 934 272 931 273 930ZM455 893 455 892 451 886 448 888 448 897 448 900 449 900 450 902 450 901ZM428 762 424 758 424 757 432 751 433 754 432 764ZM656 932 660 938 661 937 663 929 659 921 655 925ZM762 758 761 767 758 764 758 763 762 759ZM474 869 472 864 477 860 477 868 476 869ZM623 930 628 947 629 943 626 927 624 928ZM499 827 501 830 501 837 501 838 500 840 497 842 497 842 496 839ZM347 802 348 807 352 801 350 794 348 795 346 797ZM221 936 226 930 226 930 225 943 225 943ZM358 699 357 695 355 692 353 694 353 699 356 701ZM473 767 470 770 468 763 468 762 468 761 471 761 472 761 473 766ZM756 942 758 939 757 924 757 923 755 923 753 940ZM245 983 244 977 249 976 247 984ZM754 843 755 857 751 860 751 859 751 858ZM550 679 543 671 542 679 543 681ZM428 851 433 856 432 859 427 856ZM475 937 471 944 476 952 479 952 481 951 479 937 476 935ZM477 757 484 761 486 762 486 755 486 753 478 755ZM186 832 185 832 185 825 185 820 191 823 191 825ZM302 920 299 925 297 917ZM191 702 189 693 194 686 195 688 196 700 192 702 191 702ZM575 746 576 760 576 760 572 749 572 742ZM343 834 346 829 347 828 346 827 338 821 336 822 335 824 335 831 339 834ZM604 713 601 707 601 698 603 698 606 701 607 702ZM752 920 752 920 750 942 747 940 746 937 746 937ZM624 861 623 863 623 867 624 867 625 870 631 871 632 870 631 858 625 858ZM600 836 597 837 596 842 598 855 599 856 604 846 604 842 603 838ZM451 755 452 760 449 770 446 764 445 757 449 751ZM730 692 735 699 741 691 741 690 730 686 729 689ZM515 748 515 745 508 742 508 742 511 754 514 753 514 752ZM768 931 771 938 768 947 765 943 767 935ZM291 742 293 754 297 749 296 743 294 741 292 741ZM247 818 237 817 238 798 247 809ZM754 831 754 831 749 854 746 839 747 833 751 828ZM289 935 287 935 283 929 283 928 283 924 285 920 287 917 289 918ZM558 865 559 865 552 881 552 881 551 880 557 865ZM281 778 281 777 283 770 285 767 289 770 290 779 287 782ZM748 978 749 971 751 968 753 978 749 979ZM474 819 473 811 470 818 473 823ZM482 688 487 679 489 671 488 664 479 674 479 681ZM161 864 162 863 164 865 168 871 168 872 158 878 158 877ZM721 907 722 905 722 900 718 894 714 910 716 912 720 908ZM710 957 714 962 715 962 716 957 714 948 712 950 710 953ZM524 745 527 731 528 739 527 747ZM627 835 631 835 631 826 630 821 630 821 627 831ZM487 830 485 830 484 835 483 848 485 850 492 844 490 840ZM567 852 567 840 570 843ZM344 942 347 933 350 932 347 943ZM377 783 370 791 371 797 375 801 376 800 377 785ZM760 773 758 771 756 777 756 777 757 782 760 778 760 774ZM767 843 768 844 771 843 769 839ZM524 791 523 793 524 802 524 804 529 798 531 794 526 790ZM267 941 265 935 263 944 264 947 265 948 265 948ZM573 915 576 918 577 917 577 914 576 901ZM360 926 361 926 363 922 363 911 363 910 361 908 359 912 360 926ZM273 835 274 835 275 839 273 851 272 851 270 843 272 835ZM782 808 785 819 782 823 779 822 779 822 779 810 779 810ZM647 881 649 886 653 888 653 887 653 874 651 871ZM398 679 399 673 398 672 396 672 396 674 395 681ZM303 916 297 912 297 911 301 902 304 906 304 915ZM754 757 755 763 755 764 753 772 750 763 750 760 750 757 752 757ZM342 943 340 945 338 943 338 937 344 925 345 932ZM759 801 763 805 759 816ZM163 987 163 976 156 983 156 983 163 988ZM286 795 290 800 294 791 293 787 293 785 292 784 289 787ZM438 786 445 791 445 790 446 786 439 780 437 781ZM299 716 307 716 308 717 308 717 307 719 300 735 298 732ZM669 692 670 693 671 690 669 681 666 686 668 690ZM343 919 339 928 339 925 342 913 342 912 343 914ZM522 767 528 763 528 757 526 753 523 752 520 751 518 756 520 765ZM483 869 483 858 481 857 481 857 480 857 480 865ZM721 864 719 855 717 854 716 855 713 869 715 873 717 876 721 865ZM434 948 437 955 441 951 442 943 441 939 437 937ZM448 783 448 784 440 777 445 771 448 778ZM740 711 747 703 748 704 748 705 743 723 741 721ZM193 844 193 853 194 854 196 853 196 853 197 846 195 843 194 843ZM734 855 734 849 736 847 737 847 738 859 737 860 735 857ZM377 695 376 690 373 687 372 697 372 700 374 700ZM247 910 255 912 251 919 247 916ZM378 749 374 751 372 759 372 760 376 765 378 754ZM538 694 531 689 530 691 531 700 538 702ZM605 878 604 878 605 885 606 885 606 881ZM532 927 529 924 528 918 531 917 532 926ZM590 880 587 891 590 891 590 890 591 884ZM425 863 431 866 431 870 426 881 425 881 421 872ZM466 811 465 806 466 803 471 806 471 808 468 814 467 814 466 813ZM691 715 689 720 687 715 685 709 685 702 685 701 688 702 691 713ZM564 916 564 924 559 923 559 922 559 918 563 915 564 915ZM366 948 371 949 370 944 362 936 361 936ZM274 856 275 862 277 861 278 848 276 844ZM623 690 620 687 617 689 616 697 621 711 622 711 625 698ZM339 676 344 681 345 681 347 668 344 654 339 674ZM783 934 782 950 780 946 780 935 783 934ZM233 943 237 945 237 947 235 954 232 949 231 947ZM525 870 524 876 527 882 530 873 525 870 525 870ZM651 858 651 848 652 846 661 855 661 856 661 864 654 866 653 863ZM386 889 389 883 390 876 388 875 384 877 385 888ZM339 780 339 777 340 768 341 767 341 768 345 786 343 789 343 789ZM216 970 212 978 215 983 220 986 220 981 217 969ZM168 741 174 737 174 739 170 748ZM259 813 253 823 251 818 251 809 254 798 258 801ZM464 766 463 783 459 780 461 765 464 764ZM584 730 588 718 588 716 580 717 580 725ZM192 953 191 950 190 954 189 965 192 969 193 968ZM416 939 416 945 408 945 408 941 409 939 409 939 414 937ZM396 860 395 869 403 872 406 865 405 857ZM267 811 263 810 262 798 266 797 266 797ZM672 894 669 896 666 894 668 888 672 893 672 894ZM478 751 478 748 482 741 486 743 485 750ZM185 768 189 765 189 763 187 758 185 758 184 759ZM757 806 756 804 752 810 752 811 753 820 755 823 755 823 756 822 756 818ZM588 740 589 745 592 746 594 744 595 740 590 729 588 738ZM384 789 384 792 386 794 388 793 388 787 387 786ZM185 915 186 906 184 903 183 903 183 909ZM217 950 216 943 219 940 219 940 222 946 220 951 219 952ZM576 842 574 839 571 844 568 856 568 857 569 858 570 859 577 845ZM705 694 696 686 696 683 696 680 706 660 709 679ZM632 700 634 701 634 706 629 717 627 717 625 713 628 702ZM545 852 542 845 540 849 539 852 540 862 542 865 543 865 545 857ZM653 691 658 685 656 683 653 690ZM150 693 151 693 154 683 151 681 149 681 148 686ZM501 771 501 771 498 761 498 762 493 769 493 769 498 777ZM329 783 325 776 325 776 326 774 336 766 337 766 335 776ZM716 718 709 706 709 706 709 718 716 720 716 719ZM405 810 402 795 402 790 407 789 408 792 407 807ZM685 735 684 735 682 734 682 726 683 725 686 730ZM462 869 460 882 460 883 453 875 454 861 460 865ZM403 850 395 843 395 852ZM317 742 320 735 316 727 312 721 311 723 312 729 316 742ZM201 856 199 858 199 859 203 866 205 867 208 858 208 852ZM405 942 400 936 399 944 405 947 405 946ZM281 959 278 952 281 939 285 945 282 957ZM656 837 655 839 654 841 660 847 659 838ZM200 851 198 853 200 844 203 837 205 838ZM583 744 585 752 585 754 581 762 579 761 578 746ZM213 967 210 975 207 972 207 970 208 965 211 965ZM477 765 481 762 476 760 476 760ZM361 737 360 736 357 743 357 744 357 746 358 748 360 746 361 741ZM326 788 323 783 318 789 319 800 326 793 326 789ZM239 675 238 682 235 683 235 683 236 677 238 674ZM321 933 319 931 321 922 323 920 325 921 325 921 324 934ZM681 778 679 780 679 780 679 787 680 788 681 788 682 784ZM779 832 782 833 784 839 783 848 782 851 780 851ZM268 724 258 725 256 722 263 716ZM566 794 563 799 562 799 561 785 562 786ZM458 856 458 844 454 846 453 847 452 850 452 851 453 853ZM583 775 582 769 585 762 587 772ZM694 859 695 857 696 857 699 865 697 871 695 871 693 864ZM356 948 357 941 359 938 359 938 363 947 356 948ZM270 731 271 731 271 732 270 740 269 744 266 744 263 732ZM443 973 437 971 438 962 442 958 447 967ZM403 705 408 697 408 699 408 714 407 719 405 719 403 716ZM660 710 661 714 667 698 666 695 660 710ZM234 843 244 840 238 852 234 845ZM615 790 612 802 609 802 611 787 611 786 613 786ZM374 737 377 735 378 735 380 738 378 742 375 744 374 738ZM530 912 530 910 526 908 528 914ZM368 760 365 755 362 755 359 757 360 769 362 771 368 762ZM162 726 162 724 170 714 171 714 173 723 172 731 167 735ZM645 703 640 698 640 698 638 701 639 705 641 713 642 715 643 713ZM578 896 579 893 579 893 583 896 584 903 583 905 579 909 578 896ZM705 764 713 757 713 756 710 749 706 755 704 761 705 764ZM726 861 724 860 722 853 722 853 728 857ZM228 691 227 693 227 676 228 676 229 679ZM334 791 330 787 330 786 336 779 337 783ZM568 793 563 782 568 782 569 792ZM596 801 591 802 591 802 595 788 596 787 599 796 598 800ZM627 972 626 970 625 969 622 979 624 979 627 975ZM181 976 181 975 186 973 189 977 188 980 186 985 183 984 181 979ZM428 926 427 918 429 908 432 915 433 923 432 924ZM683 848 687 841 691 844 693 852 692 854ZM630 720 632 722 638 717 636 709ZM357 865 358 865 359 871 358 883 357 882 355 872ZM656 826 657 816 657 816 653 818 654 829ZM217 731 212 719 206 722 206 723 215 746 216 747 218 744 217 732ZM234 686 234 685 230 680 230 693 233 692ZM210 708 204 711 202 703 201 686 207 684 212 694 213 700ZM596 905 596 901 594 901 593 908 594 909 596 908ZM394 875 394 875 393 883 395 886 400 885 401 877ZM420 756 420 755 419 747 419 746 416 743 414 741 412 758 413 761 418 760ZM170 756 171 752 174 743 175 745 176 757 173 762 171 761ZM349 944 354 947 355 939 352 932 352 932ZM287 686 287 686 283 675 282 681 282 681 284 685ZM371 860 377 855 378 857 378 868 375 870 373 868ZM704 774 707 780 707 780 705 791 703 792 702 782 704 774ZM249 984 250 987 256 983 256 979 255 977 252 975 252 975ZM400 723 401 725 398 737 391 730 392 722ZM375 716 376 713 374 709 372 709 371 712 373 717 374 717ZM620 878 616 890 615 892 617 894 621 885 621 880ZM701 827 700 828 697 825 696 816 698 816 702 823ZM532 887 532 888 533 890 538 880 536 878 534 878ZM508 758 504 743 500 743 501 755 503 765ZM233 931 235 928 238 929 238 940 232 938ZM450 962 451 961 451 951 446 949 445 956 449 962ZM741 807 741 813 739 812 738 809 739 804ZM613 879 614 886 619 873 619 872 616 874ZM769 863 765 864 767 872 770 870ZM704 968 704 971 707 976 712 967 707 962ZM214 918 214 916 211 913 209 917 211 920ZM705 806 708 810 706 817 705 818 701 809 703 807ZM252 963 253 960 255 962 255 970 253 968ZM225 969 225 964 227 963 229 967ZM680 877 680 880 679 869 680 868 680 869ZM564 866 561 864 552 885 552 885 553 885 562 877 564 867ZM783 687 783 692 785 691 784 686ZM520 776 522 784 521 786 518 785 517 782 519 774ZM266 819 262 819 256 828 257 829 257 830 268 829 269 828 266 820ZM771 875 766 878 765 887 765 888 769 886 771 876ZM479 848 478 845 477 839 480 838 480 847ZM360 787 357 798 356 797 354 788 356 782 358 780 360 781 361 784ZM469 948 473 955 470 960 467 955 468 948ZM226 678 224 679 224 681 226 691 226 690 226 678ZM552 791 555 799 557 800 554 787ZM372 733 372 723 374 723 376 731 372 733ZM513 904 509 897 505 900 505 905 512 916 513 904ZM223 760 226 770 227 775 224 780 220 778 219 776 218 769 219 761 221 759ZM781 765 781 765 782 755 784 756 786 759 784 767ZM535 797 534 797 532 800 532 804 535 806 535 800ZM786 705 787 704 791 699 786 696 783 698 783 698 784 702 786 706ZM376 898 380 912 377 911 376 898ZM741 980 740 969 739 968 736 975 738 983 740 982ZM203 834 199 841 197 836 201 830ZM215 830 218 831 222 824 215 823ZM689 872 689 873 691 878 692 878 693 875 691 870ZM739 901 741 904 739 913 738 904 738 901ZM470 752 469 735 468 734 467 734 465 737 465 743 466 753ZM272 879 274 890 274 891 273 892 270 896 267 888 267 883ZM397 774 397 774 399 778 400 779 405 778 406 769 405 766 400 763 398 766 398 767ZM602 671 602 671 605 679 606 679 608 676 605 662 602 670ZM669 919 668 915 663 915 663 917 666 924 670 922ZM577 724 576 716 571 703 565 720 571 731ZM689 775 685 780 683 773 685 768 689 773ZM779 878 779 881 779 881 783 876 784 875 784 871 784 867 783 866ZM374 897 373 896 367 904 367 905 373 913 374 912ZM424 937 422 938 420 940 420 946 421 949 424 950 426 947ZM414 930 410 932 411 921 414 925ZM582 963 575 974 574 974 572 969 572 966 574 958 576 956 578 956 580 959ZM302 977 303 967 298 968 302 978ZM489 700 490 686 491 680 494 691 491 701ZM480 727 482 734 486 737 486 737 481 719 481 721ZM621 790 623 795 628 786 628 784 624 785ZM733 874 736 877 736 879 734 887 731 886 731 885 732 877ZM212 898 212 903 215 906 217 898 212 897ZM635 747 637 746 638 738 635 737 630 747ZM633 953 632 953 630 958 629 963 630 966 631 966 636 956 636 952ZM346 700 346 693 347 692 350 693 351 700 350 703ZM760 710 762 709 762 706 759 703 756 704 757 709ZM360 728 356 739 353 728 355 725 360 728ZM708 877 709 877 710 880 707 891 705 882ZM249 830 247 824 237 823 236 825 235 838 247 834 249 831ZM545 920 540 917 540 906 547 895 548 895 548 896 548 899 545 920ZM772 748 772 740 770 736 768 736 767 738 767 748 768 749ZM186 838 185 837 184 842 184 844 190 852 190 841ZM627 726 627 744 628 744 628 744 633 735 631 728 629 726ZM323 881 322 869 317 863 315 871 319 884 321 884ZM389 707 384 697 390 690 391 691 391 692ZM590 671 589 672 589 674 593 681 594 680 596 672 596 672ZM363 868 361 865 360 857 363 853 363 854ZM446 918 445 915 444 914 439 923 439 924 439 926 442 927 445 919ZM283 704 286 701 287 697 288 694 283 692 281 697 280 699 281 701ZM710 839 710 844 714 846 715 845 714 836 711 835ZM186 886 187 884 188 878 188 875 186 875 184 883ZM782 975 785 967 792 965 792 965 787 981 783 980ZM570 936 569 937 569 943 572 947 573 945 572 937ZM372 821 366 827 366 827 365 826 368 808 369 806 373 809ZM647 814 645 824 644 821 646 814 647 813ZM609 731 608 733 617 742 615 728ZM470 840 470 842 470 844 475 846 475 836 473 834ZM309 677 307 678 306 687 312 681 312 677ZM690 802 690 802 691 793 689 786 687 790 685 794 689 801ZM181 954 181 950 186 934 186 934 189 937 189 942 188 947ZM276 792 277 792 277 782 277 782 273 781 272 785 272 786ZM412 973 411 977 406 989 402 978 409 966 412 970ZM685 952 682 955 682 962 682 963 689 966 689 965 688 954ZM381 923 382 923 379 950 377 954 376 954 374 948 373 942 373 938 374 923 376 922ZM361 801 361 794 358 803 359 804 360 803ZM371 975 374 965 374 964 374 963 364 968 364 971 369 975ZM750 904 751 905 753 910 753 910 755 911 754 891 753 890ZM386 711 380 710 378 705 380 700 381 700 382 701 386 711ZM730 700 734 706 736 713 736 724 730 728 730 726ZM786 723 787 724 786 730 783 728 782 722 782 721ZM514 855 519 865 511 870 512 861ZM268 795 268 795 270 792 273 796 271 800ZM378 827 374 826 369 831 376 839 378 834 378 827ZM431 775 431 774 431 770 428 768 425 774 426 777ZM484 949 484 949 487 949 490 945 490 940 485 933 483 938ZM312 891 312 877 313 875 316 887 315 888ZM205 762 209 756 209 756 213 756 214 756 212 766 209 769 205 767 204 764ZM547 691 545 689 545 684 550 683 550 683 550 688ZM597 942 593 936 589 945 587 952 589 956 589 957 597 952 598 946 598 945 598 943ZM272 815 274 824 275 825 276 824 279 811 279 804 278 803 276 803 274 808ZM270 941 268 948 273 948 272 939ZM689 895 691 889 692 888 694 893 693 900 691 899 690 898ZM451 678 454 682 454 693 447 693 450 679 451 678ZM272 859 273 865 272 868 267 860 267 859 271 858ZM569 800 566 806 567 812 569 816 572 817 578 802 577 800 570 799ZM518 768 515 776 514 774 515 762 516 761ZM613 777 611 777 610 774 610 757 616 764ZM160 687 159 686 158 688 155 699 155 700 159 711 165 703ZM202 902 203 899 202 892 198 892 198 900 201 902ZM165 683 171 702 172 702 172 702 176 692 174 678 169 677ZM715 803 711 803 708 798 710 787 711 788ZM650 811 650 812 657 809 656 806 650 798 649 803 649 809ZM315 749 310 735 309 753 311 754 313 753ZM575 934 576 944 579 944 579 941 579 929 578 926 577 926ZM252 715 254 704 253 694 249 688 247 693 246 703 250 716ZM600 862 602 869 603 870 604 870 606 866 607 858 605 853ZM471 824 471 825 469 824 468 820 469 820ZM283 803 283 808 287 811 287 807 287 806 284 803ZM515 734 516 724 514 720 513 720 509 731ZM264 858 264 857 264 851 255 842 255 854 257 859 262 861ZM742 894 745 898 747 898 750 883 749 876 746 880ZM345 852 345 852 349 850 347 838 345 842ZM242 868 239 866 238 877 239 882 243 873ZM219 964 222 973 222 968 222 964 221 961 220 962ZM678 914 675 905 675 905 674 917 675 919 676 921 679 919ZM388 688 383 694 383 693 386 686 386 686ZM550 783 553 779 554 774 554 770 548 774 547 782 549 784ZM701 727 697 716 694 717 694 719 698 729 701 727ZM512 926 512 928 511 930 504 923 504 913ZM220 892 220 892 220 883 218 878 216 880 216 883ZM724 920 726 913 724 908 723 910ZM337 953 338 953 339 954 342 974 342 974 339 975 335 963ZM262 915 261 918 256 925 253 920 258 912 258 912ZM427 706 433 712 432 713 426 710ZM774 858 772 860 772 861 773 868 773 868 774 869 776 859ZM587 877 583 883 582 886 584 889 585 889 587 879ZM775 831 771 832 770 835 773 842 773 842ZM706 750 706 740 710 736 712 739 712 739 711 744ZM238 959 240 951 243 952 245 958 240 964 238 961ZM649 946 645 950 645 950 650 957 651 954 650 946ZM534 947 542 947 538 957 533 947ZM510 796 510 803 514 803 514 803 513 795ZM617 753 618 751 618 749 609 739 609 741 611 748 616 755ZM232 849 229 853 228 854 232 873 235 875 237 860 237 858ZM379 899 384 900 385 901 386 908 385 909 384 912 384 913 383 912ZM247 865 247 871 246 871 245 866ZM539 689 533 686 533 685 534 683 539 683 539 684 539 688ZM435 913 444 907 444 908 436 921ZM575 893 576 890 575 889 568 885 568 893 572 895ZM651 789 650 777 652 771 654 767 661 776 662 776 657 797ZM415 917 412 912 411 909 417 904 417 913ZM698 801 697 804 694 804 694 804 694 795 698 791ZM720 936 725 951 719 954 716 944 718 936ZM281 732 280 726 280 726 277 728 280 732ZM703 939 706 932 710 944 708 948ZM209 785 209 784 210 778 212 776 213 782 212 785 211 785ZM626 802 630 806 633 798 633 797 630 791 626 799ZM520 741 520 738 520 728 525 727 525 729 522 741ZM338 891 340 892 341 901 340 902 335 905 338 892ZM602 922 602 932 602 933 607 925 605 918ZM597 963 599 971 598 975 595 979 592 973 591 967ZM723 936 727 950 727 950 730 945 730 934 725 934ZM605 807 602 802 603 797 608 790 606 805ZM369 854 375 849 374 843 367 836 366 836 365 847 366 848ZM677 894 676 896 676 897 679 907 680 901ZM161 905 159 909 161 917 163 919 164 906ZM282 967 280 977 287 979 290 974 290 971 284 965ZM385 926 389 935 389 942 383 945 385 926ZM737 889 738 892 739 892 742 881 738 883ZM307 731 302 742 302 747 304 748 306 748 307 735ZM561 830 561 833 564 831 566 825 564 821ZM519 900 522 888 526 894 526 895 523 900 519 900ZM700 945 699 948 700 957 702 961 705 955 705 951 702 944ZM516 682 516 677 518 675 521 687 518 689 516 685ZM365 808 365 808 363 821 362 819 360 810 361 808ZM366 873 369 869 368 862 366 858 366 871ZM207 798 207 802 202 799 202 795 203 793 206 791 206 792ZM705 865 704 852 701 850 698 855 701 863ZM211 802 211 806 213 811 216 806 215 801 213 797 212 800ZM587 867 585 863 583 866 583 875 587 869ZM261 924 256 930 257 938 259 940ZM200 760 199 750 198 747 196 753 196 759 198 762 200 761ZM214 910 214 913 211 910 212 907ZM421 931 420 922 419 920 416 925 417 932 418 934ZM430 792 431 796 433 795 434 787 433 781 433 780 432 780ZM765 931 760 920 759 921 760 940 762 941ZM376 890 382 890 380 877 379 875 376 878 376 889 376 890ZM410 737 408 753 402 749 402 742 405 728 407 729 409 731ZM632 983 630 976 631 973 632 973 637 975 635 985ZM587 911 588 919 590 919 591 913 590 912 589 911 587 910ZM545 699 542 696 542 697 541 704 543 709 544 708ZM465 931 466 938 467 941 468 941 471 935ZM216 672 220 679 221 677 222 675 218 666ZM300 817 304 811 302 805 300 805 299 804 299 811 299 816ZM613 903 612 903 609 909 609 910 611 919 618 921 618 921 619 919 615 906ZM607 816 606 813 608 810 611 810 611 819 608 821ZM509 679 514 682 514 686 511 686ZM294 909 292 909 290 907 290 898 298 895 299 899ZM664 974 664 969 667 963 670 969 668 978 664 975ZM315 968 314 967 312 965 309 957 309 951 313 944 315 943 317 947 316 963ZM792 942 792 955 786 957 786 954 786 939ZM465 870 468 868 468 868 471 872 470 876 468 880 464 880ZM675 886 674 888 668 882 668 876 672 876 672 877 675 886ZM301 799 303 794 306 794 303 800ZM676 754 678 741 680 741 683 743 682 755 678 756ZM778 690 779 683 778 681 775 681 775 691ZM524 860 522 844 523 840 527 847 527 847 525 859ZM585 970 579 980 581 985 583 985 585 976 585 970ZM433 826 437 834 441 830 441 830 438 816ZM390 685 392 686 392 684 393 676 389 669 388 683ZM310 779 311 779 309 764 308 763 306 763 305 771 308 777ZM523 772 524 783 526 782 529 769 529 768ZM703 723 700 715 705 709 705 719 705 719ZM259 946 261 949 257 956 254 953 256 945 256 944 259 946ZM209 942 209 942 205 943 205 949 207 956 208 953ZM475 822 481 824 482 826 480 830 476 832 475 830 474 827 474 826ZM582 738 576 740 573 736 573 736 578 729 582 735ZM411 809 412 795 417 799 419 814ZM545 812 544 810 539 806 539 812 539 815 542 820 544 816ZM636 731 635 725 640 722 641 724 641 728 639 732ZM781 740 785 735 785 735 783 733 781 739ZM476 773 477 780 477 783 477 784 471 782 471 777ZM758 728 757 718 760 719 761 730 759 730ZM604 938 610 928 617 929 615 938 604 940ZM193 759 191 760 189 756 190 755 193 754ZM585 927 587 926 590 927 590 929 587 939 586 931ZM224 985 224 981 225 975 228 974 229 974 226 987ZM189 776 189 772 186 774 186 775 187 780 188 780ZM172 864 171 866 167 860 171 840 172 841 174 846ZM634 691 634 693 636 695 638 691 638 683 636 679 635 679ZM442 979 440 988 437 977 438 977 442 978ZM507 773 511 775 512 763 509 764 506 771 506 771ZM369 731 370 721 368 714 365 716 363 722 363 726 363 726 364 728ZM270 720 272 720 271 707 269 702 268 702 266 712ZM476 976 479 981 479 982 473 984 474 979ZM295 845 294 851 293 852 294 859 297 862 305 848 300 838 299 838ZM296 819 296 813 291 811 290 817 290 819 291 819ZM581 838 585 825 585 841 584 844 581 840ZM637 752 637 758 641 758 638 751ZM465 908 461 897 455 907 463 912ZM658 979 651 975 650 979 650 982 654 991 658 980ZM425 765 422 762 421 765 423 771ZM353 712 352 711 352 707 352 704 355 706 354 711ZM591 895 592 898 591 907 590 906 591 895ZM765 848 766 847 767 848 769 855 769 856 764 858 763 856 764 849ZM660 681 662 682 663 681 661 667 661 667 660 666 660 667 657 671 658 678ZM656 719 657 722 658 726 655 733 653 737 648 728 648 724 648 722ZM264 971 263 973 259 975 258 973 258 962 262 956 264 958ZM180 871 182 872 180 883 177 887 173 885 172 875 173 874 174 872ZM162 820 164 808 164 806 161 802 158 804 158 812 161 820ZM717 812 712 813 709 822 711 827 714 828 718 813ZM310 902 316 909 315 896 311 899ZM458 696 459 700 460 701 462 701 465 693 466 693 462 684 461 684 458 687ZM562 776 560 775 559 770 559 767 559 765 560 764 562 764 566 769 565 776ZM509 674 507 671 507 669 512 670 514 673 513 678ZM568 911 566 911 566 910 565 901 567 898 570 900ZM505 833 504 824 505 823 509 820 506 833ZM504 800 506 803 508 802 508 802 508 797 508 795ZM561 942 564 946 562 950 561 950 561 943ZM770 949 771 951 777 948 778 936 777 936 774 940ZM313 858 313 857 311 855 309 854 302 864 304 869 310 867 311 866ZM196 935 195 935 194 937 194 941 195 944 197 948 200 945 200 939 198 936ZM632 812 632 811 636 802 640 806 639 808 638 814 632 812ZM422 839 417 860 419 863 422 855 423 850ZM291 731 294 731 295 719 294 718 290 725ZM281 720 281 719 282 712 280 709 280 720ZM210 798 209 790 210 791 211 796ZM594 885 593 892 594 894 596 894 597 891 596 885ZM223 872 220 875 220 875 221 879 223 875ZM603 726 602 728 602 730 599 732 593 719 593 717 593 716 593 716 599 715 602 721ZM688 832 688 826 691 815 691 815 691 815 693 826 691 834ZM566 933 562 939 566 943 566 942 567 934ZM506 840 508 840 509 840 513 847 513 849 510 854 506 842ZM738 822 738 822 735 819 735 816 737 811 738 816ZM733 778 734 778 735 778 736 773 735 760 729 752 728 755 727 764ZM324 734 323 734 319 724 327 714ZM161 749 161 749 161 757 159 755ZM483 699 484 705 487 705 487 686 482 694ZM256 730 260 746 256 755 250 730 252 727 253 726 254 727ZM476 886 476 875 474 875 474 880 476 886ZM269 812 267 800 271 806 269 813ZM687 725 684 720 684 718 686 720 688 723ZM265 906 264 908 263 908 261 906 258 897 258 895 263 896 265 903 265 905ZM767 829 768 831 768 834 766 838 766 838 765 829 766 828ZM641 673 639 679 637 674 639 668 641 671ZM384 854 384 854 386 865 383 866 382 865 382 857ZM634 752 634 757 632 760 630 752 630 752ZM788 906 790 905 795 926 793 930 786 926 786 925 785 909ZM679 961 677 963 674 964 670 955 670 954 676 945 679 954ZM295 839 292 823 298 823 298 824 299 832ZM219 901 220 901 221 901 221 901 223 907 222 912 219 915 218 913 217 911 217 908ZM707 865 706 854 708 853 712 854 710 867 708 867ZM381 806 381 804 383 797 385 798 385 803 384 806ZM258 837 258 838 264 845 265 842 267 836ZM507 871 507 871 508 870 509 860 505 847 503 850ZM776 824 775 813 775 812 771 823 772 825 775 825ZM150 871 154 875 156 864 153 864 151 867ZM466 769 464 786 465 787 468 782 468 778ZM386 826 388 837 392 835 394 821 393 820 389 821ZM542 971 545 978 545 969ZM680 852 676 851 676 855 678 864 678 864 679 863 680 857ZM364 798 364 791 364 788 367 793 367 797 366 799 366 799ZM489 751 496 753 497 752 497 741 494 737 490 743 490 743 489 750ZM708 724 709 724 715 726 712 733 710 731ZM510 806 510 806 513 807 512 814 511 813ZM196 922 195 922 196 909 196 908 199 910ZM706 839 706 845 704 846 703 845 702 838 703 836ZM540 827 536 820 531 824 533 832 537 836 540 831ZM264 756 259 766 258 767 268 778 269 774 269 759 268 756ZM778 833 779 849 779 849 776 848 775 843 776 834 778 833ZM164 754 167 759 167 761 165 763 164 760ZM748 912 744 929 745 934 751 917ZM679 892 682 899 685 897 685 895 681 890 679 892ZM326 770 333 764 328 760 326 766ZM188 709 182 712 187 717 188 710ZM200 744 206 749 206 748 200 734 199 736 199 741ZM348 925 347 920 347 916 351 916 350 925 350 925ZM270 855 266 856 266 851 268 847ZM436 799 440 804 444 799 445 796 437 790ZM230 988 232 996 236 977 236 975 235 972 233 975ZM403 818 398 817 400 799 404 816ZM171 792 168 796 164 791 164 791 171 781 171 782ZM181 845 176 846 175 864 181 863 181 848ZM338 712 342 708 343 701 343 694 337 687 335 706ZM234 675 230 672 229 673 230 677 233 681ZM563 851 563 852 563 853 565 854 565 853 564 841 564 841 562 842 562 843ZM678 813 677 811 680 800 681 800 685 806ZM462 929 463 938 460 940 456 942 456 940 460 928 462 928ZM416 977 416 980 419 990 421 981ZM367 706 368 703 367 700 363 695 362 697 362 701 365 707ZM748 821 746 825 744 822 744 818 745 812 748 813ZM269 958 269 958 269 969 274 975 275 973 277 964 274 958 274 957ZM401 681 402 677 401 673 401 673 400 681ZM645 814 644 815 642 817 643 820ZM391 910 397 916 400 912 401 906 401 904 395 904 391 909ZM783 681 781 680 781 678 782 676 785 674 784 681ZM335 942 335 941 335 936 334 933 331 924 329 923 328 940 329 941ZM635 946 636 935 639 942 639 943 637 946ZM278 720 275 722 274 723 274 722 274 709 276 707 277 708ZM720 817 717 832 718 844 720 845 720 844 725 837 725 830 721 817ZM430 958 429 961 430 971 430 972 433 969 433 969 434 963 432 958ZM318 844 316 847 315 845 315 839 318 831 319 834ZM441 878 436 873 430 886 431 888 442 893 442 880 442 879ZM603 952 611 960 610 966 606 967 604 966 602 957ZM503 867 500 851 497 853 497 863ZM505 878 506 879 506 888 501 893 496 892 492 886 496 873ZM245 724 246 721 243 711 240 711 237 718 238 726 242 728ZM250 958 252 954 253 946 249 944 247 949 248 957ZM404 936 400 932 399 928 399 924 402 920 405 934ZM471 728 472 728 474 728 476 724 477 719 476 717 475 717 471 722ZM203 788 204 774 208 776 207 785ZM353 740 349 734 350 730 352 731 353 738ZM339 802 338 813 339 812 343 805 342 800 342 800ZM324 742 323 742 321 748 324 758 326 752 327 744ZM736 825 734 823 733 825 735 829ZM586 810 586 810 585 815 580 830 577 827 576 821 582 806 585 810ZM473 692 477 688 479 693 480 697 475 697ZM732 868 733 862 732 859 732 860 729 864 731 871ZM212 795 213 793 213 789 211 790ZM158 830 154 820 151 824 150 829 151 834 157 834ZM458 741 462 741 462 736 458 732 458 733ZM689 980 684 974 684 969 689 971 689 976ZM219 802 218 798 219 790 223 792 222 801ZM776 888 776 897 770 904 768 902 767 892 771 890 776 888ZM551 952 551 951 551 951 550 947 550 946 555 942 556 944 556 951 555 953ZM391 802 387 801 387 797 389 797 391 798ZM568 865 566 877 567 880 575 884 571 868 570 866ZM216 963 214 961 214 956 216 955 217 958 217 962ZM407 674 403 676 402 672 407 671ZM333 915 333 917 335 924 338 912ZM493 795 494 792 495 785 491 779 489 788ZM182 784 176 777 176 776 176 775 182 776 183 782ZM692 954 692 961 696 957 695 951 693 951ZM622 850 620 837 624 839 624 842 623 848ZM156 920 154 910 149 910 149 920ZM222 866 223 859 218 863 219 869ZM210 900 205 902 204 905 207 913 207 913 209 909 210 905ZM350 712 350 707 345 704 344 711 348 714ZM463 917 461 922 459 922 451 915 451 911 452 910ZM492 709 497 695 500 696 499 712 495 717ZM733 967 731 965 730 957 732 953 734 954 736 961ZM763 730 765 731 766 729 764 717 762 718ZM509 781 512 783 513 784 514 787 513 789 511 790 510 789ZM254 764 251 768 247 765 245 748 245 742 248 737 254 763ZM305 783 302 775 296 782 297 784 301 784ZM526 697 524 697 521 699 519 710 521 714 526 713 526 712 527 704ZM608 833 608 837 613 836 614 830 613 827 612 826 609 827ZM538 710 533 708 532 716 537 721 539 717 540 714ZM467 727 469 727 469 722 469 716 464 713ZM278 680 273 678 273 680 276 685 278 680ZM699 882 696 887 695 882 696 877 697 878ZM210 676 209 678 214 689 218 680 214 674ZM304 790 304 787 307 786 308 787 307 789ZM185 923 185 927 185 927 177 928 178 913 181 914ZM370 735 365 732 365 738 367 742 370 738 370 736ZM364 881 361 893 360 889 361 874 363 878ZM404 846 405 847 405 838 403 825 397 823 397 823 395 838 395 839ZM331 699 333 683 332 681 327 680 326 681 324 692 329 700ZM568 738 568 744 564 751 562 750 564 730 564 730 568 738ZM442 857 437 859 436 859 436 862 436 865 441 869ZM618 784 616 780 619 768 620 766 623 775 621 781 619 785ZM362 834 362 846 358 851 356 852 353 849 351 833 351 831 360 830 362 833ZM408 821 410 832 419 824 419 823 418 821 410 817 409 820ZM277 774 273 774 273 763 279 769ZM700 888 698 893 697 902 698 904 703 904 703 900 702 889ZM179 696 183 694 186 706 180 708 176 706ZM571 910 570 909 572 901 574 900 574 900 572 910ZM275 697 273 699 271 696 273 688 275 692 276 695ZM661 808 661 808 664 809 667 806 668 794 664 783 660 804ZM687 891 688 884 687 877 682 885 682 886ZM431 804 426 819 431 822 437 811 437 808 433 803ZM569 918 569 929 567 929 566 928 566 926 566 918 568 917ZM460 833 460 836 460 836 456 838 457 830 458 829 458 829ZM396 892 402 890 402 899 396 899ZM317 676 320 676 321 678 319 689 318 690 315 682 316 678ZM415 709 411 716 410 720 411 722 417 717ZM762 896 757 892 759 910 759 910 760 908 763 904 762 896ZM168 907 167 925 168 928 170 927 173 926 174 913 170 904ZM292 838 291 842 288 829 290 826 290 827ZM761 698 762 697 765 694 766 698 764 701Z"/></g><path d="M381 80 C388 110 396 140 399 165 C401 180 398 200 390 220 C384 238 378 255 375 272 C371 305 366 340 363 372 L330 560 L311 672 C303 720 295 770 290 800 C282 835 272 865 266 880 C235 882 190 890 165 905 C146 916 144 936 162 946 C195 957 255 972 330 981 C400 986 470 986 520 984 C590 981 640 977 680 970 C730 960 765 952 782 944 C792 936 790 924 775 915 C750 900 720 894 700 893 C682 892 672 889 670 875 C664 820 660 780 657 760 C654 720 651 690 649 672 L625 500 L609 372 C606 340 603 312 599 295 C595 275 589 250 581 215 C576 195 573 180 574 170 C576 140 582 110 589 80 Z" fill="none" stroke="#efebe2" stroke-width="7" opacity="0.55" filter="url(#blur2)"/><g filter="url(#blur2)" opacity="0.45" fill="#efebe3"><path d="M262 884 C235 884 190 890 165 905 C146 916 144 936 162 946 C195 957 255 972 300 978 C290 930 275 900 262 884Z"/><path d="M676 892 C700 893 750 900 775 915 C790 924 792 936 782 944 C765 952 730 960 690 968 C690 930 684 905 676 892Z"/></g><g fill="#a69b88" opacity="0.5"><ellipse cx="490" cy="862" rx="1" ry="2.8"/><ellipse cx="488" cy="705" rx="1.7" ry="2.2"/><ellipse cx="489" cy="815" rx="1.1" ry="3.8"/><ellipse cx="490" cy="738" rx="1.5" ry="1.7"/><ellipse cx="490" cy="787" rx="2.3" ry="2.3"/><ellipse cx="489" cy="779" rx="1.2" ry="2.4"/><ellipse cx="492" cy="754" rx="2.2" ry="1.8"/><ellipse cx="489" cy="844" rx="2.2" ry="1.6"/><ellipse cx="488" cy="745" rx="2.2" ry="3.6"/><ellipse cx="487" cy="892" rx="1.5" ry="1.9"/><ellipse cx="487" cy="855" rx="1.1" ry="2.2"/><ellipse cx="486" cy="977" rx="1.5" ry="3.1"/><ellipse cx="488" cy="878" rx="1.2" ry="3.6"/><ellipse cx="487" cy="758" rx="2.1" ry="3.2"/><ellipse cx="490" cy="839" rx="1.3" ry="2.1"/><ellipse cx="487" cy="705" rx="1.3" ry="2.4"/><ellipse cx="491" cy="851" rx="1.3" ry="2.1"/><ellipse cx="487" cy="905" rx="1.9" ry="3.7"/><ellipse cx="490" cy="828" rx="1.6" ry="1.9"/><ellipse cx="486" cy="860" rx="1.5" ry="2.9"/><ellipse cx="488" cy="722" rx="1.5" ry="1.8"/><ellipse cx="490" cy="840" rx="2.4" ry="2.6"/><ellipse cx="489" cy="812" rx="1.7" ry="3.8"/><ellipse cx="490" cy="751" rx="1.6" ry="2.9"/><ellipse cx="488" cy="964" rx="1.6" ry="3.7"/><ellipse cx="490" cy="705" rx="1.3" ry="2.9"/><ellipse cx="490" cy="788" rx="1.4" ry="2.7"/><ellipse cx="487" cy="778" rx="2.4" ry="1.7"/><ellipse cx="489" cy="802" rx="1.1" ry="2.7"/><ellipse cx="490" cy="842" rx="2.4" ry="2.1"/><ellipse cx="491" cy="710" rx="1.9" ry="1.5"/><ellipse cx="491" cy="962" rx="1.5" ry="1.6"/><ellipse cx="487" cy="829" rx="2.4" ry="3.8"/><ellipse cx="491" cy="730" rx="2.1" ry="2.3"/><ellipse cx="486" cy="878" rx="1.6" ry="4"/><ellipse cx="488" cy="773" rx="1.6" ry="1.8"/><ellipse cx="489" cy="975" rx="2.4" ry="3.5"/><ellipse cx="487" cy="768" rx="1.5" ry="1.6"/><ellipse cx="487" cy="953" rx="1.7" ry="2.5"/><ellipse cx="487" cy="898" rx="2.5" ry="2"/><ellipse cx="488" cy="889" rx="2.2" ry="1.6"/><ellipse cx="490" cy="714" rx="1.1" ry="3.5"/><ellipse cx="487" cy="777" rx="1.2" ry="3"/><ellipse cx="487" cy="971" rx="1.3" ry="3.4"/><ellipse cx="487" cy="958" rx="1.9" ry="3"/></g></g></g></svg>
<!-- status bar -->

<!-- right panels -->
<svg width="1024" height="1024" viewBox="0 0 1024 1024" style="left:0;top:0"><rect x="955" y="67" width="4" height="937" fill="#343434"/><rect x="959" y="66" width="65" height="12" fill="#474747"/><rect x="959" y="78" width="31" height="926" fill="#5a5a5a"/><rect x="990" y="78" width="2" height="926" fill="#3c3c3c"/><rect x="992" y="78" width="32" height="926" fill="#585858"/><text x="977" y="76" font-size="7" fill="#9a9a9a" font-family="Liberation Sans">ooo</text><rect x="960" y="120" width="29" height="1.5" fill="#444"/><rect x="960" y="196" width="29" height="1.5" fill="#444"/><rect x="960" y="236" width="29" height="1.5" fill="#444"/><rect x="960" y="278" width="29" height="1.5" fill="#444"/><path d="M966 93H976V105H966ZM968 97H974M968 100H974" stroke="#d4d4d4" stroke-width="1.6" fill="none" stroke-linecap="round" stroke-linejoin="round"/><path d="M965 103H974V108H965Z" fill="#d4d4d4"/><path d="M980 93H984V106H980" stroke="#d4d4d4" stroke-width="1.4" fill="none" stroke-linecap="round" stroke-linejoin="round"/><path d="M967 138V134H972L974 137M969 141H983V152H969Z" stroke="#d4d4d4" stroke-width="1.6" fill="none" stroke-linecap="round" stroke-linejoin="round"/><path d="M972 143H980V150H972Z" fill="#5a5a5a"/><path d="M968 172H982V184H968ZM972 172V168C972 165 978 165 978 168" stroke="#d4d4d4" stroke-width="1.6" fill="none" stroke-linecap="round" stroke-linejoin="round"/><path d="M972 176H976V181H972Z" fill="#d4d4d4"/><path d="M967 209H977V222H967M970 213H975" stroke="#d4d4d4" stroke-width="1.6" fill="none" stroke-linecap="round" stroke-linejoin="round"/><path d="M972 214H980V224L983 226H975Z" fill="#d4d4d4"/><path d="M966 251H979V258H966ZM971 257H984V268H971Z" stroke="#d4d4d4" stroke-width="1.6" fill="none" stroke-linecap="round" stroke-linejoin="round"/><path d="M966 259H969V262H966ZM977 262H982V266H977Z" fill="#d4d4d4"/><rect x="992" y="102" width="32" height="1.5" fill="#464646"/><rect x="992" y="129.5" width="32" height="1.5" fill="#464646"/><rect x="992" y="160" width="32" height="1.5" fill="#464646"/><rect x="992" y="189" width="32" height="1.5" fill="#464646"/><rect x="992" y="217" width="32" height="1.5" fill="#464646"/><rect x="992" y="296" width="32" height="1.5" fill="#464646"/><rect x="992" y="322" width="32" height="1.5" fill="#464646"/><rect x="992" y="351" width="32" height="1.5" fill="#464646"/><rect x="992" y="379" width="32" height="1.5" fill="#464646"/><rect x="992" y="404" width="32" height="1.5" fill="#464646"/><rect x="992" y="430" width="32" height="1.5" fill="#464646"/><rect x="992" y="455" width="32" height="1.5" fill="#464646"/><rect x="992" y="481" width="32" height="1.5" fill="#464646"/><rect x="992" y="507" width="32" height="1.5" fill="#464646"/><rect x="992" y="533" width="32" height="1.5" fill="#464646"/><rect x="992" y="558" width="32" height="1.5" fill="#464646"/><rect x="992" y="584" width="32" height="1.5" fill="#464646"/><rect x="992" y="607" width="32" height="1.5" fill="#464646"/><rect x="992" y="634" width="32" height="1.5" fill="#464646"/><rect x="992" y="663" width="32" height="1.5" fill="#464646"/><rect x="992" y="702" width="32" height="1.5" fill="#464646"/><rect x="992" y="740" width="32" height="1.5" fill="#464646"/><rect x="992" y="779" width="32" height="1.5" fill="#464646"/><rect x="992" y="817" width="32" height="1.5" fill="#464646"/><rect x="992" y="130.5" width="32" height="29.5" fill="#4b7fc4"/><rect x="996" y="134" width="23" height="22" fill="#e8eef4" stroke="#1d2a3a" stroke-width="1.2"/><path d="M1000 145 C1003 139 1012 139 1015 145 C1012 151 1003 151 1000 145Z" fill="#1a1a1a"/><path d="M1005.5 145 a2 2 0 1 0 4 0 a2 2 0 1 0 -4 0Z" fill="#e8eef4"/><path d="M998 138H1002M1012 138H1017M998 152H1017" stroke="#d4d4d4" stroke-width="1" fill="none" stroke-linecap="round" stroke-linejoin="round"/><text x="998" y="97" font-size="13" fill="#dcdcdc" font-family="Liberation Sans">Backg</text><path d="M999 111H1010V120H999Z" stroke="#d4d4d4" stroke-width="1.5" fill="none" stroke-linecap="round" stroke-linejoin="round"/><text x="1017" y="120" font-size="12" fill="#dcdcdc" font-family="Liberation Sans">3l</text><path d="M1003 168 C996 170 998 184 1006 182 C1012 180 1013 172 1008 170" stroke="#d4d4d4" stroke-width="1.6" fill="none" stroke-linecap="round" stroke-linejoin="round"/><path d="M1003 174 a2.5 2.5 0 1 0 5 0 a2.5 2.5 0 1 0 -5 0Z" fill="#d4d4d4"/><text x="1019" y="180" font-size="12" fill="#dcdcdc" font-family="Liberation Sans">r</text><path d="M998 209 L1009 198 A2.5 2.5 0 0 1 1013 202 L1002 213 A2.5 2.5 0 0 1 998 209Z" stroke="#d4d4d4" stroke-width="1.6" fill="none" stroke-linecap="round" stroke-linejoin="round"/><text x="1020" y="208" font-size="12" fill="#dcdcdc" font-family="Liberation Sans">I</text><path d="M999 225H1011V236H999ZM1003 229H1007V233" stroke="#d4d4d4" stroke-width="1.5" fill="none" stroke-linecap="round" stroke-linejoin="round"/><text x="1020" y="235" font-size="12" fill="#dcdcdc" font-family="Liberation Sans">F</text><text x="998" y="262" font-size="9" fill="#dcdcdc" font-family="Liberation Sans">R::</text><text x="1020" y="262" font-size="12" fill="#dcdcdc" font-family="Liberation Sans">V</text><path d="M1000 277H1009V286H1000ZM1001 278L1008 285M1008 278L1001 285" stroke="#d4d4d4" stroke-width="1.5" fill="none" stroke-linecap="round" stroke-linejoin="round"/><text x="1020" y="286" font-size="12" fill="#dcdcdc" font-family="Liberation Sans">I</text><path d="M998 305H1009V314H998Z" stroke="#d4d4d4" stroke-width="1.6" fill="none" stroke-linecap="round" stroke-linejoin="round"/><text x="1017" y="314" font-size="12" fill="#dcdcdc" font-family="Liberation Sans">S</text><text x="1016" y="342" font-size="12" fill="#dcdcdc" font-family="Liberation Sans">G</text><path d="M1000 360H1009V369H1000Z" stroke="#d4d4d4" stroke-width="1.5" fill="none" stroke-linecap="round" stroke-linejoin="round"/><text x="1017" y="370" font-size="12" fill="#dcdcdc" font-family="Liberation Sans">Ep</text><path d="M1000 387H1008V396H1000ZM1004 387V396" stroke="#d4d4d4" stroke-width="1.5" fill="none" stroke-linecap="round" stroke-linejoin="round"/><text x="1016" y="397" font-size="12" fill="#dcdcdc" font-family="Liberation Sans">As</text><path d="M999 413H1009V421H999Z" stroke="#d4d4d4" stroke-width="1.5" fill="none" stroke-linecap="round" stroke-linejoin="round"/><text x="1016" y="423" font-size="12" fill="#dcdcdc" font-family="Liberation Sans">lo</text><path d="M999 438H1008V446H999ZM999 443H1008" stroke="#d4d4d4" stroke-width="1.5" fill="none" stroke-linecap="round" stroke-linejoin="round"/><text x="1015" y="448" font-size="12" fill="#dcdcdc" font-family="Liberation Sans">St</text><text x="1019" y="474" font-size="12" fill="#dcdcdc" font-family="Liberation Sans">I</text><text x="1018" y="500" font-size="12" fill="#dcdcdc" font-family="Liberation Sans">S</text><text x="1020" y="526" font-size="12" fill="#dcdcdc" font-family="Liberation Sans">1</text><text x="1012" y="551" font-size="12" fill="#dcdcdc" font-family="Liberation Sans">As</text><path d="M997 576 L1003 568 M1000 576 L1005 568 L1003 575" stroke="#d4d4d4" stroke-width="1.4" fill="none" stroke-linecap="round" stroke-linejoin="round"/><text x="1014" y="577" font-size="12" fill="#dcdcdc" font-family="Liberation Sans">Di</text><text x="998" y="600" font-size="9" fill="#dcdcdc" font-family="Liberation Sans">x</text><text x="1006" y="600" font-size="9" fill="#9a9a9a" font-family="Liberation Sans">::</text><text x="1017" y="600" font-size="12" fill="#dcdcdc" font-family="Liberation Sans">B</text><defs><pattern id="chk" width="3" height="3" patternUnits="userSpaceOnUse"><rect width="3" height="3" fill="#e4e4e4"/><rect width="1.5" height="1.5" fill="#9a9a9a"/><rect x="1.5" y="1.5" width="1.5" height="1.5" fill="#9a9a9a"/></pattern></defs><ellipse cx="1001" cy="620" rx="4.5" ry="2.8" fill="none" stroke="#d4d4d4" stroke-width="1.2"/><rect x="1014" y="610" width="12" height="21" fill="#4a4a4a" stroke="#2e2e2e"/><rect x="1017" y="617" width="8" height="8" fill="#2e2e2e"/><ellipse cx="1001" cy="647" rx="4.5" ry="2.8" fill="none" stroke="#d4d4d4" stroke-width="1.2"/><rect x="1013" y="641.5" width="14" height="14.5" fill="url(#chk)" stroke="#2e2e2e" stroke-width="1"/><ellipse cx="1001" cy="683" rx="4.5" ry="2.8" fill="none" stroke="#d4d4d4" stroke-width="1.2"/><rect x="1011.5" y="665" width="14" height="34" fill="url(#chk)" stroke="#2e2e2e" stroke-width="1"/><ellipse cx="1001" cy="721" rx="4.5" ry="2.8" fill="none" stroke="#d4d4d4" stroke-width="1.2"/><rect x="1011.5" y="704" width="14" height="33" fill="url(#chk)" stroke="#2e2e2e" stroke-width="1"/><ellipse cx="1001" cy="759.5" rx="4.5" ry="2.8" fill="none" stroke="#d4d4d4" stroke-width="1.2"/><rect x="1011.5" y="742" width="14" height="33" fill="url(#chk)" stroke="#2e2e2e" stroke-width="1"/><ellipse cx="1001" cy="797.7" rx="4.5" ry="2.8" fill="none" stroke="#d4d4d4" stroke-width="1.2"/><rect x="1011.5" y="781" width="14" height="32" fill="url(#chk)" stroke="#2e2e2e" stroke-width="1"/></svg>
<!-- bottom bar -->
<svg width="1024" height="1024" viewBox="0 0 1024 1024" style="left:0;top:0"><rect x="33" y="987" width="922" height="17" fill="#434343"/><rect x="33" y="987" width="19" height="16" fill="#525252"/><path d="M38 995 L43 991 V999Z" fill="#bdbdbd"/><rect x="53" y="987" width="66" height="16" fill="#595959"/><text x="60" y="1000" font-size="11" fill="#dedede" font-family="Liberation Sans" letter-spacing="-0.7">Entrd eome</text><rect x="121" y="987" width="33" height="16" fill="#595959"/><text x="132" y="1000" font-size="10.5" fill="#dedede" font-family="Liberation Sans" letter-spacing="-0.4">Due</text><rect x="155" y="987" width="17" height="16" fill="#545454"/><path d="M161 991H166L167 993V999H161Z" stroke="#d0d0d0" stroke-width="1.2" fill="none" stroke-linecap="round" stroke-linejoin="round"/><rect x="173" y="987" width="17" height="16" fill="#4f4f4f"/><path d="M180 992.5 L183 995 L180 997.5" stroke="#d0d0d0" stroke-width="1.3" fill="none" stroke-linecap="round" stroke-linejoin="round"/><path d="M926 989 L932 995 L926 1001Z" fill="#a8a8a8"/><path d="M942 101 L947 95 L952 101Z" fill="#bdbdbd"/><path d="M943 974 L946 977 L949 974" stroke="#d0d0d0" stroke-width="1.4" fill="none" stroke-linecap="round" stroke-linejoin="round"/><rect x="0" y="1004" width="1024" height="20" fill="#565656"/><rect x="0" y="1004" width="1024" height="1" fill="#3e3e3e"/><rect x="94" y="1005" width="1" height="19" fill="#474747"/><rect x="237" y="1005" width="1" height="19" fill="#474747"/><rect x="373" y="1005" width="1" height="19" fill="#474747"/><rect x="468" y="1005" width="1" height="19" fill="#474747"/><rect x="501" y="1005" width="1" height="19" fill="#474747"/><rect x="469" y="1005" width="32" height="19" fill="#4d4d4d"/><rect x="418" y="1013" width="18" height="11" fill="#3f3f3f" stroke="#8a8a8a" stroke-width="1"/><path d="M2 1013H15V1024M2 1013V1024M4 1017H10M4 1020H9" stroke="#d0d0d0" stroke-width="1.5" fill="none" stroke-linecap="round" stroke-linejoin="round"/><path d="M12 1015H18V1022H12Z" fill="#d0d0d0"/><text x="29" y="1026" font-size="11" fill="#d6d6d6" font-family="Liberation Sans" letter-spacing="-0.9">Lone Prrpies</text><path d="M113 1016 L118 1024 M118 1024 L124 1014 M113 1016 L121 1017" stroke="#d0d0d0" stroke-width="2.2" fill="none" stroke-linecap="round" stroke-linejoin="round"/><path d="M125 1012 a1 1 0 1 0 2 0 a1 1 0 1 0 -2 0Z" fill="#d0d0d0"/><path d="M139 1024 L141 1020 L143 1024" stroke="#d0d0d0" stroke-width="1.2" fill="none" stroke-linecap="round" stroke-linejoin="round"/><path d="M160 1024V1013H176V1024M162 1013V1016M166 1013V1016M170 1013V1016M174 1013V1016" stroke="#d0d0d0" stroke-width="1.3" fill="none" stroke-linecap="round" stroke-linejoin="round"/><path d="M188 1024 L196 1016 L200 1014 L198 1018 L190 1024" stroke="#d0d0d0" stroke-width="1.6" fill="none" stroke-linecap="round" stroke-linejoin="round"/><path d="M214 1024 a3 3 0 1 1 6 0" stroke="#d0d0d0" stroke-width="1.4" fill="none" stroke-linecap="round" stroke-linejoin="round"/><path d="M253 1024V1013H268V1024M255 1016H260" stroke="#d0d0d0" stroke-width="1.4" fill="none" stroke-linecap="round" stroke-linejoin="round"/><path d="M256 1019H266V1024H256Z" fill="#d0d0d0"/><path d="M281 1022L285 1024" stroke="#d0d0d0" stroke-width="1.3" fill="none" stroke-linecap="round" stroke-linejoin="round"/><path d="M298 1024V1013H310V1024" stroke="#d0d0d0" stroke-width="1.4" fill="none" stroke-linecap="round" stroke-linejoin="round"/><path d="M304 1015H309V1020H304Z" fill="#333"/><path d="M323 1024V1014H338V1024M328 1014V1024M333 1017H336" stroke="#d0d0d0" stroke-width="1.4" fill="none" stroke-linecap="round" stroke-linejoin="round"/><path d="M353 1024V1015C353 1012 359 1012 359 1015V1024M354 1019H358" stroke="#d0d0d0" stroke-width="1.3" fill="none" stroke-linecap="round" stroke-linejoin="round"/><path d="M387 1024V1014H392L393 1016H400V1024M389 1019H399" stroke="#d0d0d0" stroke-width="1.4" fill="none" stroke-linecap="round" stroke-linejoin="round"/><path d="M423 1016H431V1020H423Z" fill="#d0d0d0"/><path d="M425 1021L428 1024H422Z" fill="#d0d0d0"/><path d="M445 1024V1015H460V1024M449 1015V1024M456 1015V1024" stroke="#d0d0d0" stroke-width="1.4" fill="none" stroke-linecap="round" stroke-linejoin="round"/><path d="M478 1018L482 1016H488L491 1018L489 1024M480 1024L479 1019" stroke="#d0d0d0" stroke-width="1.5" fill="none" stroke-linecap="round" stroke-linejoin="round"/></svg>

<!-- Levels dialog -->
<div id="dlg" class="a">
  <div id="dlgtitle" class="a"></div>
  <div class="t" style="left:7px;top:2px;font-size:11.8px;color:#1b2b40;font-weight:bold;letter-spacing:-0.3px">Levels</div>
  <div class="a" style="left:425px;top:0;width:37px;height:13px;background:linear-gradient(#d8735c,#bf553f);border:1px solid #8e3d2d;border-radius:0 3px 2px 2px"></div>
  <div class="t" style="left:438px;top:-2px;font-size:11px;color:#fff;font-weight:bold">x</div>
  <div id="dlgc" class="a"></div>
</div>
<svg width="1024" height="1024" viewBox="0 0 1024 1024">
  <rect x="291" y="414" width="409" height="129" fill="#4d4d4d" stroke="#414141" stroke-width="1"/>
  <path d="M292 516 L292.0 513.0 L292.5 512.9 L293.0 513.0 L293.5 512.8 L294.0 512.8 L294.5 513.1 L295.0 513.2 L295.5 512.7 L296.0 513.0 L296.5 513.0 L297.0 512.5 L297.5 512.9 L298.0 512.6 L298.5 512.8 L299.0 512.7 L299.5 513.0 L300.0 512.7 L300.5 512.6 L301.0 512.8 L301.5 512.7 L302.0 512.7 L302.5 513.1 L303.0 512.6 L303.5 512.7 L304.0 512.9 L304.5 513.1 L305.0 512.6 L305.5 512.8 L306.0 512.6 L306.5 512.5 L307.0 512.6 L307.5 512.5 L308.0 512.8 L308.5 512.6 L309.0 512.8 L309.5 512.5 L310.0 512.5 L310.5 513.0 L311.0 513.0 L311.5 512.9 L312.0 512.4 L312.5 512.8 L313.0 512.6 L313.5 512.8 L314.0 512.7 L314.5 512.8 L315.0 512.8 L315.5 512.6 L316.0 512.6 L316.5 512.4 L317.0 512.6 L317.5 512.4 L318.0 512.4 L318.5 512.3 L319.0 512.5 L319.5 512.9 L320.0 512.4 L320.5 512.3 L321.0 512.4 L321.5 512.6 L322.0 512.5 L322.5 512.8 L323.0 512.4 L323.5 512.6 L324.0 512.8 L324.5 512.9 L325.0 512.4 L325.5 512.3 L326.0 512.9 L326.5 512.4 L327.0 512.6 L327.5 512.8 L328.0 512.7 L328.5 512.4 L329.0 512.3 L329.5 512.9 L330.0 512.5 L330.5 512.9 L331.0 512.4 L331.5 512.6 L332.0 512.3 L332.5 512.2 L333.0 512.5 L333.5 512.2 L334.0 512.6 L334.5 512.8 L335.0 512.4 L335.5 512.8 L336.0 512.7 L336.5 512.5 L337.0 512.4 L337.5 512.7 L338.0 512.8 L338.5 512.2 L339.0 512.6 L339.5 512.1 L340.0 512.1 L340.5 512.5 L341.0 512.4 L341.5 512.4 L342.0 512.3 L342.5 512.3 L343.0 512.4 L343.5 512.3 L344.0 512.1 L344.5 512.4 L345.0 512.4 L345.5 512.2 L346.0 512.6 L346.5 512.5 L347.0 512.0 L347.5 512.3 L348.0 512.3 L348.5 512.7 L349.0 512.4 L349.5 512.3 L350.0 512.7 L350.5 512.2 L351.0 512.2 L351.5 512.6 L352.0 512.2 L352.5 512.3 L353.0 512.1 L353.5 512.4 L354.0 512.1 L354.5 512.1 L355.0 512.6 L355.5 512.6 L356.0 512.1 L356.5 511.8 L357.0 512.4 L357.5 512.2 L358.0 512.1 L358.5 512.3 L359.0 512.3 L359.5 512.3 L360.0 512.3 L360.5 512.1 L361.0 512.3 L361.5 512.2 L362.0 511.9 L362.5 512.5 L363.0 512.1 L363.5 511.9 L364.0 512.3 L364.5 512.3 L365.0 511.8 L365.5 512.3 L366.0 512.3 L366.5 512.1 L367.0 511.9 L367.5 512.4 L368.0 512.2 L368.5 512.2 L369.0 511.7 L369.5 512.1 L370.0 511.7 L370.5 512.3 L371.0 512.1 L371.5 511.8 L372.0 511.6 L372.5 512.0 L373.0 512.2 L373.5 512.3 L374.0 511.9 L374.5 512.2 L375.0 511.6 L375.5 511.6 L376.0 512.2 L376.5 512.1 L377.0 511.6 L377.5 511.7 L378.0 511.6 L378.5 512.0 L379.0 512.2 L379.5 512.0 L380.0 511.5 L380.5 512.0 L381.0 511.9 L381.5 511.8 L382.0 511.8 L382.5 511.8 L383.0 511.3 L383.5 512.0 L384.0 512.2 L384.5 511.3 L385.0 511.3 L385.5 511.2 L386.0 511.7 L386.5 511.2 L387.0 511.2 L387.5 511.9 L388.0 511.4 L388.5 511.2 L389.0 511.4 L389.5 511.5 L390.0 511.7 L390.5 511.7 L391.0 511.8 L391.5 511.9 L392.0 511.4 L392.5 511.7 L393.0 511.1 L393.5 511.9 L394.0 511.0 L394.5 511.2 L395.0 510.9 L395.5 510.9 L396.0 510.9 L396.5 511.2 L397.0 511.8 L397.5 511.0 L398.0 511.6 L398.5 511.4 L399.0 511.0 L399.5 511.1 L400.0 511.2 L400.5 510.6 L401.0 511.0 L401.5 511.3 L402.0 511.3 L402.5 510.6 L403.0 511.0 L403.5 510.7 L404.0 511.1 L404.5 511.3 L405.0 510.5 L405.5 510.5 L406.0 510.5 L406.5 511.4 L407.0 510.4 L407.5 511.1 L408.0 510.8 L408.5 510.4 L409.0 511.1 L409.5 511.2 L410.0 510.2 L410.5 510.8 L411.0 510.7 L411.5 510.4 L412.0 510.9 L412.5 510.9 L413.0 510.1 L413.5 510.9 L414.0 510.5 L414.5 509.9 L415.0 509.9 L415.5 510.3 L416.0 510.2 L416.5 510.3 L417.0 510.2 L417.5 510.0 L418.0 510.7 L418.5 510.1 L419.0 509.3 L419.5 509.4 L420.0 510.2 L420.5 510.4 L421.0 509.6 L421.5 509.3 L422.0 509.4 L422.5 510.3 L423.0 510.4 L423.5 509.2 L424.0 510.2 L424.5 510.0 L425.0 510.0 L425.5 509.1 L426.0 508.6 L426.5 508.8 L427.0 509.2 L427.5 509.8 L428.0 508.4 L428.5 509.0 L429.0 509.5 L429.5 509.4 L430.0 508.5 L430.5 509.1 L431.0 509.1 L431.5 509.5 L432.0 507.8 L432.5 508.2 L433.0 508.2 L433.5 508.2 L434.0 508.5 L434.5 507.6 L435.0 509.1 L435.5 507.4 L436.0 508.3 L436.5 508.7 L437.0 508.6 L437.5 508.3 L438.0 507.5 L438.5 508.2 L439.0 507.9 L439.5 507.4 L440.0 508.1 L440.5 507.7 L441.0 507.6 L441.5 506.6 L442.0 506.0 L442.5 506.8 L443.0 506.1 L443.5 506.6 L444.0 506.1 L444.5 506.7 L445.0 505.2 L445.5 506.9 L446.0 505.5 L446.5 504.7 L447.0 506.4 L447.5 506.2 L448.0 504.9 L448.5 504.1 L449.0 504.0 L449.5 505.1 L450.0 505.9 L450.5 505.1 L451.0 504.0 L451.5 505.5 L452.0 503.9 L452.5 504.4 L453.0 501.7 L453.5 502.8 L454.0 502.1 L454.5 500.9 L455.0 502.6 L455.5 500.8 L456.0 500.8 L456.5 500.0 L457.0 499.8 L457.5 499.8 L458.0 501.8 L458.5 500.4 L459.0 498.6 L459.5 500.5 L460.0 498.1 L460.5 496.4 L461.0 499.7 L461.5 499.3 L462.0 495.9 L462.5 496.3 L463.0 496.3 L463.5 497.4 L464.0 493.6 L464.5 493.1 L465.0 495.3 L465.5 491.0 L466.0 494.2 L466.5 492.7 L467.0 491.5 L467.5 487.9 L468.0 486.2 L468.5 490.6 L469.0 484.2 L469.5 487.2 L470.0 480.6 L470.5 478.5 L471.0 482.5 L471.5 479.9 L472.0 473.3 L472.5 474.7 L473.0 475.1 L473.5 460.7 L474.0 465.1 L474.5 459.3 L475.0 450.1 L475.5 458.7 L476.0 453.2 L476.5 446.6 L477.0 445.9 L477.5 447.0 L478.0 452.3 L478.5 454.8 L479.0 442.5 L479.5 444.3 L480.0 438.3 L480.5 441.0 L481.0 456.3 L481.5 453.9 L482.0 442.4 L482.5 445.3 L483.0 460.2 L483.5 454.1 L484.0 454.3 L484.5 462.5 L485.0 455.7 L485.5 465.4 L486.0 466.9 L486.5 474.5 L487.0 475.3 L487.5 470.7 L488.0 476.0 L488.5 479.1 L489.0 476.2 L489.5 483.6 L490.0 480.0 L490.5 484.7 L491.0 484.0 L491.5 490.2 L492.0 485.0 L492.5 488.6 L493.0 491.4 L493.5 490.8 L494.0 494.1 L494.5 491.6 L495.0 492.6 L495.5 491.6 L496.0 494.0 L496.5 495.6 L497.0 496.4 L497.5 495.8 L498.0 497.8 L498.5 497.0 L499.0 496.3 L499.5 497.5 L500.0 498.1 L500.5 496.5 L501.0 499.6 L501.5 495.6 L502.0 500.6 L502.5 500.1 L503.0 498.1 L503.5 500.5 L504.0 499.5 L504.5 497.9 L505.0 502.0 L505.5 499.9 L506.0 502.3 L506.5 499.4 L507.0 501.8 L507.5 499.7 L508.0 500.7 L508.5 500.6 L509.0 500.6 L509.5 502.7 L510.0 501.6 L510.5 503.6 L511.0 502.3 L511.5 502.5 L512.0 503.5 L512.5 503.0 L513.0 503.0 L513.5 505.3 L514.0 503.1 L514.5 503.2 L515.0 504.7 L515.5 504.0 L516.0 505.3 L516.5 503.7 L517.0 506.3 L517.5 506.1 L518.0 505.1 L518.5 506.9 L519.0 504.5 L519.5 505.7 L520.0 505.3 L520.5 505.4 L521.0 507.0 L521.5 507.4 L522.0 507.4 L522.5 507.3 L523.0 507.7 L523.5 507.4 L524.0 506.6 L524.5 506.4 L525.0 507.4 L525.5 507.3 L526.0 507.0 L526.5 508.0 L527.0 507.5 L527.5 508.4 L528.0 507.6 L528.5 507.1 L529.0 507.4 L529.5 508.3 L530.0 506.8 L530.5 508.0 L531.0 508.6 L531.5 507.6 L532.0 507.1 L532.5 507.3 L533.0 508.4 L533.5 507.5 L534.0 508.3 L534.5 508.5 L535.0 507.6 L535.5 507.7 L536.0 509.3 L536.5 508.9 L537.0 508.4 L537.5 509.1 L538.0 509.0 L538.5 508.3 L539.0 509.5 L539.5 509.0 L540.0 508.4 L540.5 508.1 L541.0 508.3 L541.5 509.6 L542.0 509.1 L542.5 509.1 L543.0 508.6 L543.5 509.3 L544.0 508.7 L544.5 509.7 L545.0 510.1 L545.5 509.3 L546.0 509.9 L546.5 509.0 L547.0 508.7 L547.5 508.8 L548.0 510.3 L548.5 509.8 L549.0 510.3 L549.5 510.1 L550.0 509.8 L550.5 510.4 L551.0 509.6 L551.5 509.2 L552.0 510.2 L552.5 509.5 L553.0 509.9 L553.5 509.9 L554.0 510.5 L554.5 510.7 L555.0 509.8 L555.5 509.5 L556.0 509.5 L556.5 510.2 L557.0 509.9 L557.5 509.6 L558.0 509.8 L558.5 510.1 L559.0 510.4 L559.5 510.3 L560.0 510.8 L560.5 510.8 L561.0 510.2 L561.5 509.8 L562.0 510.4 L562.5 510.6 L563.0 510.7 L563.5 510.6 L564.0 510.2 L564.5 510.6 L565.0 510.0 L565.5 511.1 L566.0 510.9 L566.5 510.7 L567.0 510.8 L567.5 510.3 L568.0 510.4 L568.5 510.3 L569.0 510.7 L569.5 511.4 L570.0 510.8 L570.5 510.8 L571.0 510.9 L571.5 511.2 L572.0 510.7 L572.5 510.5 L573.0 511.4 L573.5 510.8 L574.0 511.2 L574.5 511.0 L575.0 510.6 L575.5 510.6 L576.0 510.9 L576.5 511.4 L577.0 510.7 L577.5 511.5 L578.0 511.3 L578.5 510.8 L579.0 511.4 L579.5 511.5 L580.0 510.7 L580.5 510.8 L581.0 511.5 L581.5 511.4 L582.0 511.5 L582.5 511.7 L583.0 511.6 L583.5 510.8 L584.0 511.8 L584.5 511.7 L585.0 511.7 L585.5 511.8 L586.0 511.4 L586.5 511.2 L587.0 511.1 L587.5 511.3 L588.0 511.2 L588.5 512.0 L589.0 511.7 L589.5 511.1 L590.0 512.0 L590.5 511.8 L591.0 511.6 L591.5 511.8 L592.0 511.5 L592.5 512.0 L593.0 511.9 L593.5 511.2 L594.0 512.0 L594.5 511.2 L595.0 512.0 L595.5 511.2 L596.0 511.5 L596.5 511.5 L597.0 512.0 L597.5 512.1 L598.0 511.5 L598.5 512.0 L599.0 512.0 L599.5 511.4 L600.0 511.4 L600.5 512.2 L601.0 511.3 L601.5 511.7 L602.0 511.9 L602.5 512.2 L603.0 511.9 L603.5 511.4 L604.0 512.0 L604.5 512.2 L605.0 512.2 L605.5 512.2 L606.0 512.0 L606.5 511.5 L607.0 512.3 L607.5 512.2 L608.0 511.5 L608.5 511.5 L609.0 511.5 L609.5 512.1 L610.0 512.1 L610.5 511.5 L611.0 512.0 L611.5 511.8 L612.0 512.1 L612.5 512.4 L613.0 512.1 L613.5 511.8 L614.0 511.7 L614.5 511.9 L615.0 512.0 L615.5 512.0 L616.0 512.1 L616.5 512.0 L617.0 511.7 L617.5 512.3 L618.0 512.0 L618.5 511.7 L619.0 511.8 L619.5 512.3 L620.0 511.7 L620.5 511.8 L621.0 512.4 L621.5 512.3 L622.0 512.3 L622.5 512.5 L623.0 511.7 L623.5 512.2 L624.0 511.8 L624.5 512.4 L625.0 512.5 L625.5 511.8 L626.0 511.9 L626.5 511.8 L627.0 512.0 L627.5 512.1 L628.0 512.0 L628.5 512.5 L629.0 512.1 L629.5 512.2 L630.0 512.5 L630.5 512.1 L631.0 512.3 L631.5 512.2 L632.0 512.3 L632.5 512.4 L633.0 512.3 L633.5 512.2 L634.0 511.9 L634.5 511.9 L635.0 512.0 L635.5 512.0 L636.0 512.4 L636.5 511.9 L637.0 512.5 L637.5 512.6 L638.0 512.3 L638.5 512.1 L639.0 512.4 L639.5 512.2 L640.0 512.5 L640.5 511.9 L641.0 512.4 L641.5 512.3 L642.0 512.3 L642.5 512.0 L643.0 512.0 L643.5 512.3 L644.0 512.4 L644.5 512.3 L645.0 512.7 L645.5 512.4 L646.0 512.1 L646.5 512.2 L647.0 512.7 L647.5 512.1 L648.0 512.5 L648.5 512.0 L649.0 512.5 L649.5 512.6 L650.0 512.4 L650.5 512.1 L651.0 512.5 L651.5 512.1 L652.0 512.3 L652.5 512.5 L653.0 512.6 L653.5 512.4 L654.0 512.5 L654.5 512.5 L655.0 512.3 L655.5 512.2 L656.0 512.4 L656.5 512.7 L657.0 512.7 L657.5 512.6 L658.0 512.4 L658.5 512.7 L659.0 512.8 L659.5 512.6 L660.0 512.7 L660.5 512.8 L661.0 512.5 L661.5 512.2 L662.0 512.5 L662.5 512.4 L663.0 512.3 L663.5 512.3 L664.0 512.2 L664.5 512.6 L665.0 512.4 L665.5 512.8 L666.0 512.3 L666.5 512.6 L667.0 512.6 L667.5 512.3 L668.0 512.7 L668.5 512.8 L669.0 512.4 L669.5 512.5 L670.0 512.9 L670.5 512.9 L671.0 512.7 L671.5 512.9 L672.0 512.4 L672.5 512.8 L673.0 512.8 L673.5 512.7 L674.0 512.6 L674.5 512.7 L675.0 512.5 L675.5 512.5 L676.0 512.7 L676.5 512.9 L677.0 512.3 L677.5 512.5 L678.0 512.9 L678.5 512.7 L679.0 512.5 L679.5 512.3 L680.0 513.0 L680.5 513.0 L681.0 512.7 L681.5 512.7 L682.0 512.4 L682.5 512.5 L683.0 512.8 L683.5 512.7 L684.0 512.6 L684.5 512.4 L685.0 512.9 L685.5 512.8 L686.0 513.0 L686.5 512.6 L687.0 513.0 L687.5 512.4 L688.0 512.7 L688.5 512.7 L689.0 513.0 L689.5 512.9 L690.0 512.8 L690.5 512.5 L691.0 512.7 L691.5 512.9 L692.0 512.4 L692.5 512.7 L693.0 512.7 L693.5 513.0 L694.0 512.9 L694.5 512.5 L695.0 513.0 L695.5 512.8 L696.0 512.7 L696.5 512.9 L697.0 512.6 L697.5 512.5 L698.0 512.6 L698.5 512.6 L699 516 Z" fill="#dedede"/><path d="M407.0 515 V508.4 M408.5 515 V509.2 M410.0 515 V507.2 M423.5 515 V507.4 M424.5 515 V503.5 M426.5 515 V503.5 M428.0 515 V505.6 M440.0 515 V501.9 M450.0 515 V493.5 M453.5 515 V496.2 M454.0 515 V488.8 M454.5 515 V487.6 M463.5 515 V476.8 M465.5 515 V476.4 M468.0 515 V474.0 M468.5 515 V459.3 M476.5 515 V417.0 M481.5 515 V417.0 M486.0 515 V449.6 M494.0 515 V479.6 M494.5 515 V483.7 M495.5 515 V477.7 M496.0 515 V467.6 M496.5 515 V478.2 M502.0 515 V491.5 M502.5 515 V492.5 M506.5 515 V491.4 M512.5 515 V495.2 M516.0 515 V498.0 M516.5 515 V496.7 M517.0 515 V496.3 M517.5 515 V501.0 M522.0 515 V496.2 M525.5 515 V498.7 M528.0 515 V501.4 M530.5 515 V504.2 M537.0 515 V502.3 M539.5 515 V506.1 M546.0 515 V506.6 M547.5 515 V506.9 M548.5 515 V505.2 M479.2 515 V416 M476.2 515 V425 M482.5 515 V428 M468.0 515 V440 M488.0 515 V453 M494.0 515 V471 M457.5 515 V477 M506.0 515 V480 M455.0 515 V487 M461.0 515 V467 M470.0 515 V452 " stroke="#e6e6e6" stroke-width="1" fill="none"/>
  <rect x="292" y="514.5" width="407" height="2.2" fill="#ededed"/>
  <path d="M476 525 L479 518 L482 525 Z" fill="#f0f0f0"/>
  <line x1="272" y1="570" x2="720" y2="570" stroke="#484848" stroke-width="1.5"/>
  <line x1="490" y1="615.5" x2="668" y2="615.5" stroke="#a8a8a8" stroke-width="2"/>
  <rect x="549" y="609" width="10" height="14" fill="#cfcfcf" stroke="#8a8a8a" stroke-width="1"/>
  <rect x="467.5" y="610.5" width="10" height="10" fill="#5d5d5d" stroke="#a9a9a9" stroke-width="1.2"/>
</svg>
<div class="lbl" style="left:334px;top:548px">0</div>
<div class="lbl" style="left:413px;top:548px">0.75</div>
<div class="lbl" style="left:504px;top:548px">255</div>
<div class="lbl" style="left:594px;top:548px">0</div>
<div class="lbl" style="left:667px;top:548px">255</div>
<div class="lbl" style="left:286px;top:581px;letter-spacing:-0.36px">Input Levels:</div>
<div class="lbl" style="left:286px;top:608px;letter-spacing:-0.36px">Input Levels:</div>
<div class="lbl" style="left:285px;top:636px;letter-spacing:-0.77px">Output Levels:</div>
<div class="inp" style="left:375px;top:580px;background:linear-gradient(90deg,#a9a9a9,#c9c9c9);border-color:#7d7d7d">RGB</div>
<div class="inp" style="left:375px;top:606px">0.75</div>
<div class="inp" style="left:375px;top:635px">0</div>
<div class="lbl" style="left:679px;top:608px">255</div>
<div class="btn" style="left:561px;top:634px;font-size:13px">Ol</div>
<div class="btn" style="left:643px;top:634px;font-size:12px;letter-spacing:-0.5px">Ofi</div>
</body></html>
